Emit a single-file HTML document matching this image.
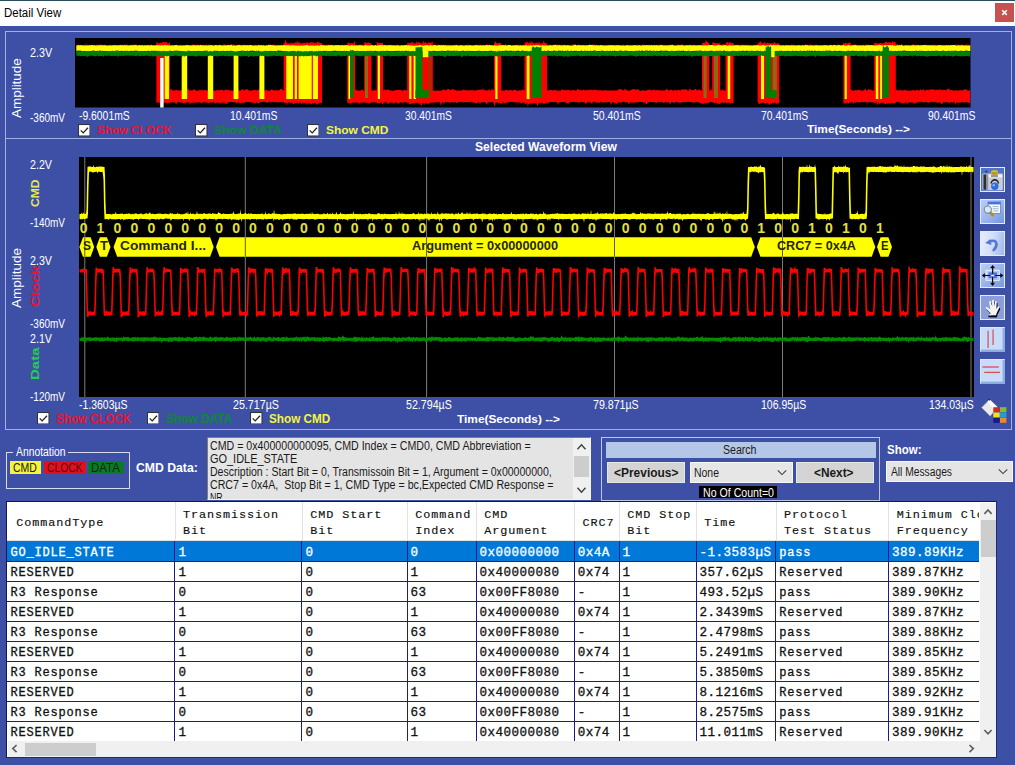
<!DOCTYPE html><html><head><meta charset="utf-8"><title>Detail View</title><style>
html,body{margin:0;padding:0}body{width:1015px;height:765px;position:relative;overflow:hidden;background:#3e50a6;font-family:"Liberation Sans",sans-serif}
#r div,#r span,#r svg{position:absolute;box-sizing:border-box}#r span{white-space:pre;display:block}
</style></head><body><div id="r">
<div style="left:0px;top:0px;width:1015px;height:26px;background:#fff"></div>
<div style="left:0px;top:0px;width:1015px;height:1px;background:#2b4a5e"></div>
<div style="left:995px;top:3px;width:19px;height:19px;background:#c75050"></div>
<svg style="left:995px;top:3px" width="19" height="19"><path d="M7.2 7.3l4.6 4.6M11.8 7.3l-4.6 4.6" stroke="#fff" stroke-width="1.6" fill="none"/></svg>
<span id="t0" style="left:3.5px;top:6.54px;font:12px/12px 'Liberation Sans',sans-serif;color:#000;transform:scaleX(0.9563);transform-origin:0 0;">Detail View</span>
<div style="left:5px;top:31px;width:1007px;height:107.5px;border:1px solid #a2b0ea"></div>
<div style="left:5px;top:138px;width:1007px;height:292px;border:1px solid #a2b0ea"></div>
<svg style="left:75px;top:38px" width="895.5" height="69.5" viewBox="0 0 895.5 69.5"><rect width="895.5" height="69.5" fill="#000"/><path d="M1.3,6.9L2.3,6.7L3.3,6.6L4.3,6.9L5.3,7.3L6.3,6.8L7.3,6.9L8.3,7.0L9.3,7.1L10.3,6.5L11.3,6.4L12.3,6.9L13.3,6.8L14.3,7.0L15.3,7.2L16.3,6.9L17.3,7.0L18.3,7.3L19.3,7.1L20.3,6.8L21.3,7.3L22.3,6.3L23.3,7.3L24.3,7.1L25.3,6.6L26.3,6.6L27.3,7.1L28.3,7.3L29.3,6.5L30.3,7.3L31.3,6.9L32.3,7.0L33.3,6.9L34.3,7.3L35.3,7.0L36.3,6.8L37.3,7.0L38.3,6.9L39.3,6.9L40.3,7.1L41.3,7.3L42.3,7.1L43.3,7.1L44.3,7.2L45.3,7.0L46.3,7.4L47.3,6.5L48.3,7.1L49.3,6.8L50.3,6.7L51.3,6.9L52.3,6.6L53.3,7.1L54.3,6.9L55.3,6.8L56.3,7.3L57.3,6.6L58.3,6.7L59.3,6.5L60.3,6.7L61.3,6.8L62.3,6.9L63.3,6.9L64.3,7.3L65.3,7.0L66.3,7.3L67.3,6.8L68.3,7.0L69.3,7.1L70.3,7.2L71.3,7.3L72.3,7.0L73.3,6.8L74.3,7.2L75.3,6.4L76.3,6.8L77.3,7.0L78.3,6.9L79.3,6.9L80.3,7.3L81.3,7.1L82.3,7.0L83.3,6.7L84.3,7.2L85.3,6.4L86.3,6.6L87.3,6.9L88.3,6.9L89.3,7.1L90.3,6.4L91.3,6.1L92.3,6.9L93.3,6.8L94.3,6.9L95.3,7.2L96.3,7.2L97.3,6.8L98.3,7.2L99.3,7.1L100.3,6.9L101.3,6.7L102.3,6.9L103.3,7.2L104.3,6.8L105.3,7.1L106.3,6.8L107.3,6.9L108.3,7.2L109.3,7.2L110.3,7.3L111.3,6.7L112.3,6.8L113.3,7.4L114.3,7.1L115.3,7.2L116.3,6.9L117.3,6.5L118.3,6.5L119.3,6.8L120.3,7.0L121.3,6.7L122.3,6.6L123.3,7.1L124.3,6.8L125.3,7.2L126.3,7.1L127.3,7.0L128.3,6.5L129.3,7.2L130.3,7.1L131.3,6.5L132.3,7.0L133.3,7.1L134.3,6.6L135.3,7.1L136.3,7.1L137.3,6.9L138.3,7.4L139.3,6.5L140.3,7.2L141.3,6.9L142.3,7.2L143.3,7.3L144.3,6.9L145.3,6.8L146.3,7.3L147.3,7.1L148.3,6.8L149.3,6.2L150.3,6.8L151.3,6.9L152.3,7.0L153.3,7.1L154.3,6.8L155.3,6.9L156.3,6.3L157.3,6.8L158.3,6.4L159.3,6.4L160.3,6.9L161.3,7.2L162.3,7.0L163.3,6.6L164.3,7.3L165.3,7.2L166.3,7.2L167.3,6.5L168.3,7.3L169.3,6.6L170.3,7.2L171.3,7.2L172.3,7.2L173.3,6.8L174.3,7.4L175.3,6.7L176.3,6.9L177.3,7.1L178.3,7.1L179.3,6.7L180.3,6.8L181.3,7.3L182.3,6.8L183.3,6.6L184.3,6.9L185.3,7.1L186.3,7.2L187.3,7.2L188.3,6.7L189.3,6.9L190.3,7.2L191.3,7.4L192.3,7.3L193.3,6.5L194.3,6.8L195.3,6.6L196.3,7.1L197.3,7.0L198.3,6.6L199.3,6.4L200.3,6.9L201.3,7.2L202.3,6.7L203.3,6.9L204.3,7.0L205.3,7.0L206.3,6.7L207.3,6.9L208.3,6.8L209.3,7.0L210.3,7.2L211.3,7.1L212.3,6.5L213.3,6.5L214.3,6.9L215.3,7.1L216.3,6.8L217.3,6.2L218.3,7.3L219.3,7.0L220.3,7.2L221.3,6.8L222.3,7.0L223.3,7.3L224.3,6.9L225.3,7.0L226.3,6.7L227.3,7.0L228.3,6.5L229.3,6.7L230.3,6.9L231.3,7.2L232.3,6.8L233.3,6.9L234.3,6.5L235.3,6.8L236.3,6.6L237.3,7.1L238.3,7.3L239.3,7.4L240.3,6.9L241.3,7.3L242.3,7.4L243.3,7.0L244.3,6.8L245.3,7.1L246.3,7.1L247.3,7.2L248.3,6.5L249.3,6.8L250.3,6.9L251.3,6.7L252.3,6.8L253.3,6.5L254.3,7.0L255.3,7.1L256.3,7.1L257.3,6.6L258.3,7.2L259.3,7.0L260.3,7.1L261.3,6.9L262.3,6.9L263.3,7.2L264.3,7.1L265.3,7.2L266.3,6.8L267.3,7.1L268.3,7.1L269.3,6.9L270.3,7.2L271.3,6.9L272.3,6.9L273.3,6.9L274.3,6.9L275.3,7.0L276.3,6.6L277.3,6.9L278.3,7.0L279.3,7.1L280.3,6.8L281.3,6.8L282.3,7.2L283.3,7.0L284.3,6.8L285.3,6.5L286.3,7.0L287.3,6.6L288.3,6.8L289.3,6.9L290.3,7.3L291.3,7.0L292.3,7.1L293.3,6.7L294.3,7.3L295.3,7.0L296.3,6.5L297.3,6.9L298.3,7.4L299.3,7.1L300.3,7.1L301.3,7.0L302.3,7.2L303.3,6.9L304.3,7.1L305.3,6.9L306.3,7.3L307.3,6.7L308.3,7.3L309.3,6.7L310.3,7.1L311.3,6.7L312.3,6.9L313.3,6.9L314.3,7.0L315.3,7.0L316.3,6.4L317.3,7.0L318.3,7.0L319.3,7.2L320.3,7.3L321.3,6.8L322.3,6.9L323.3,6.6L324.3,7.2L325.3,7.3L326.3,6.9L327.3,7.1L328.3,7.3L329.3,7.2L330.3,6.9L331.3,7.3L332.3,6.9L333.3,6.9L334.3,7.0L335.3,7.0L336.3,7.4L337.3,7.3L338.3,6.8L339.3,7.1L340.3,6.9L341.3,6.9L342.3,7.3L343.3,6.9L344.3,7.0L345.3,7.0L346.3,6.9L347.3,7.4L348.3,6.7L349.3,7.1L350.3,7.1L351.3,6.5L352.3,7.1L353.3,7.1L354.3,6.1L355.3,6.9L356.3,6.7L357.3,7.1L358.3,6.7L359.3,6.3L360.3,6.9L361.3,6.4L362.3,6.8L363.3,7.3L364.3,7.0L365.3,7.4L366.3,7.0L367.3,6.5L368.3,7.2L369.3,7.2L370.3,7.0L371.3,6.8L372.3,7.0L373.3,6.7L374.3,7.3L375.3,6.8L376.3,6.9L377.3,7.0L378.3,7.1L379.3,7.2L380.3,7.0L381.3,6.6L382.3,7.0L383.3,6.9L384.3,7.3L385.3,6.8L386.3,7.2L387.3,7.1L388.3,7.1L389.3,6.8L390.3,7.1L391.3,7.1L392.3,6.4L393.3,6.8L394.3,7.3L395.3,7.0L396.3,7.0L397.3,7.2L398.3,7.0L399.3,7.1L400.3,6.8L401.3,7.1L402.3,6.7L403.3,6.8L404.3,7.0L405.3,6.6L406.3,7.2L407.3,7.0L408.3,7.0L409.3,7.2L410.3,6.9L411.3,6.6L412.3,6.8L413.3,6.7L414.3,6.8L415.3,7.2L416.3,7.3L417.3,7.3L418.3,6.8L419.3,7.4L420.3,6.8L421.3,7.2L422.3,6.9L423.3,7.2L424.3,6.7L425.3,7.2L426.3,6.9L427.3,7.4L428.3,7.0L429.3,7.4L430.3,6.2L431.3,6.6L432.3,7.2L433.3,6.7L434.3,6.9L435.3,7.2L436.3,7.3L437.3,7.4L438.3,7.0L439.3,7.4L440.3,6.9L441.3,6.6L442.3,7.1L443.3,6.5L444.3,6.7L445.3,7.1L446.3,7.1L447.3,7.0L448.3,6.7L449.3,7.0L450.3,7.3L451.3,7.1L452.3,7.2L453.3,7.4L454.3,6.8L455.3,7.3L456.3,7.2L457.3,6.9L458.3,6.6L459.3,6.2L460.3,7.1L461.3,7.0L462.3,7.1L463.3,7.4L464.3,7.0L465.3,6.8L466.3,6.2L467.3,7.1L468.3,7.4L469.3,6.9L470.3,6.8L471.3,7.0L472.3,7.1L473.3,7.0L474.3,6.8L475.3,6.8L476.3,7.2L477.3,7.4L478.3,6.3L479.3,7.2L480.3,6.8L481.3,6.4L482.3,6.6L483.3,7.4L484.3,6.8L485.3,7.1L486.3,6.7L487.3,6.8L488.3,7.0L489.3,6.6L490.3,7.1L491.3,7.0L492.3,7.2L493.3,7.1L494.3,7.2L495.3,7.2L496.3,7.2L497.3,6.4L498.3,6.4L499.3,6.8L500.3,6.8L501.3,7.2L502.3,7.4L503.3,6.8L504.3,6.6L505.3,6.9L506.3,7.0L507.3,7.0L508.3,7.3L509.3,7.0L510.3,7.1L511.3,7.3L512.3,7.0L513.3,7.2L514.3,6.6L515.3,7.1L516.3,6.9L517.3,6.5L518.3,6.5L519.3,6.9L520.3,6.8L521.3,6.7L522.3,7.0L523.3,6.9L524.3,7.4L525.3,7.2L526.3,7.0L527.3,6.9L528.3,6.9L529.3,7.3L530.3,6.7L531.3,6.9L532.3,6.9L533.3,6.8L534.3,6.9L535.3,6.9L536.3,7.1L537.3,7.1L538.3,6.9L539.3,6.7L540.3,7.1L541.3,6.9L542.3,6.9L543.3,6.9L544.3,6.8L545.3,7.2L546.3,7.4L547.3,7.1L548.3,6.6L549.3,7.4L550.3,7.2L551.3,7.0L552.3,6.9L553.3,6.9L554.3,6.8L555.3,7.0L556.3,6.8L557.3,7.3L558.3,6.9L559.3,7.0L560.3,7.3L561.3,7.1L562.3,6.6L563.3,7.0L564.3,7.2L565.3,6.9L566.3,7.4L567.3,6.5L568.3,6.6L569.3,7.2L570.3,7.1L571.3,6.9L572.3,7.2L573.3,6.9L574.3,6.6L575.3,7.3L576.3,6.9L577.3,7.2L578.3,6.9L579.3,7.2L580.3,6.9L581.3,7.3L582.3,7.2L583.3,6.4L584.3,7.4L585.3,6.6L586.3,6.7L587.3,6.7L588.3,7.1L589.3,7.3L590.3,6.7L591.3,6.9L592.3,7.1L593.3,6.8L594.3,7.0L595.3,6.5L596.3,6.9L597.3,7.2L598.3,6.9L599.3,7.2L600.3,7.0L601.3,7.4L602.3,6.5L603.3,6.7L604.3,7.0L605.3,6.8L606.3,6.7L607.3,6.2L608.3,6.9L609.3,6.9L610.3,7.2L611.3,6.8L612.3,7.1L613.3,6.8L614.3,7.3L615.3,6.8L616.3,6.9L617.3,7.3L618.3,6.6L619.3,6.9L620.3,7.0L621.3,7.0L622.3,7.0L623.3,7.2L624.3,7.0L625.3,6.9L626.3,7.1L627.3,6.9L628.3,7.1L629.3,7.2L630.3,7.0L631.3,7.2L632.3,7.1L633.3,7.1L634.3,6.8L635.3,6.9L636.3,7.0L637.3,7.3L638.3,7.0L639.3,6.7L640.3,7.2L641.3,6.9L642.3,7.2L643.3,6.9L644.3,7.3L645.3,7.0L646.3,7.3L647.3,6.4L648.3,6.1L649.3,6.4L650.3,6.8L651.3,7.2L652.3,7.3L653.3,6.8L654.3,6.7L655.3,6.8L656.3,6.9L657.3,6.0L658.3,6.8L659.3,7.3L660.3,6.7L661.3,7.2L662.3,6.8L663.3,6.6L664.3,7.1L665.3,7.0L666.3,6.5L667.3,7.2L668.3,6.5L669.3,6.7L670.3,6.9L671.3,6.8L672.3,6.9L673.3,6.8L674.3,6.8L675.3,7.0L676.3,7.2L677.3,6.7L678.3,7.0L679.3,6.8L680.3,6.7L681.3,6.8L682.3,7.3L683.3,7.1L684.3,6.6L685.3,6.8L686.3,7.3L687.3,6.6L688.3,7.1L689.3,7.0L690.3,7.2L691.3,6.5L692.3,6.8L693.3,7.3L694.3,6.8L695.3,6.8L696.3,6.9L697.3,7.0L698.3,6.7L699.3,6.8L700.3,7.2L701.3,7.0L702.3,6.9L703.3,7.0L704.3,7.3L705.3,6.4L706.3,6.9L707.3,7.0L708.3,7.1L709.3,6.9L710.3,6.8L711.3,7.0L712.3,7.0L713.3,6.7L714.3,7.2L715.3,7.2L716.3,6.8L717.3,6.4L718.3,6.9L719.3,6.8L720.3,6.9L721.3,7.0L722.3,6.9L723.3,6.9L724.3,7.2L725.3,7.0L726.3,6.9L727.3,6.9L728.3,6.8L729.3,6.9L730.3,6.4L731.3,7.0L732.3,6.8L733.3,6.9L734.3,6.6L735.3,6.6L736.3,7.1L737.3,7.0L738.3,6.8L739.3,6.8L740.3,7.2L741.3,6.7L742.3,7.1L743.3,6.9L744.3,6.9L745.3,7.1L746.3,6.9L747.3,7.1L748.3,7.3L749.3,6.9L750.3,7.4L751.3,6.9L752.3,7.4L753.3,7.4L754.3,6.8L755.3,7.1L756.3,6.9L757.3,7.1L758.3,7.3L759.3,6.5L760.3,6.9L761.3,7.2L762.3,6.4L763.3,7.0L764.3,7.0L765.3,6.9L766.3,7.3L767.3,6.8L768.3,6.7L769.3,6.8L770.3,6.6L771.3,7.3L772.3,6.8L773.3,7.1L774.3,6.8L775.3,6.8L776.3,6.6L777.3,6.9L778.3,7.2L779.3,6.5L780.3,6.6L781.3,6.4L782.3,7.2L783.3,7.1L784.3,7.3L785.3,7.2L786.3,7.0L787.3,6.6L788.3,7.2L789.3,7.1L790.3,6.8L791.3,7.1L792.3,6.5L793.3,6.5L794.3,7.3L795.3,6.9L796.3,7.3L797.3,7.2L798.3,6.7L799.3,6.9L800.3,7.2L801.3,6.1L802.3,6.8L803.3,6.7L804.3,6.8L805.3,7.2L806.3,7.0L807.3,6.8L808.3,6.8L809.3,7.4L810.3,7.2L811.3,7.4L812.3,7.3L813.3,7.1L814.3,7.2L815.3,7.3L816.3,7.3L817.3,6.9L818.3,6.6L819.3,7.2L820.3,6.0L821.3,7.2L822.3,6.1L823.3,6.7L824.3,7.0L825.3,6.7L826.3,7.3L827.3,6.6L828.3,7.3L829.3,7.4L830.3,6.8L831.3,7.1L832.3,7.2L833.3,6.8L834.3,7.0L835.3,6.9L836.3,6.9L837.3,6.8L838.3,6.1L839.3,6.9L840.3,6.7L841.3,6.5L842.3,7.1L843.3,7.1L844.3,7.3L845.3,6.7L846.3,6.9L847.3,7.1L848.3,7.2L849.3,6.9L850.3,6.6L851.3,7.3L852.3,7.1L853.3,7.0L854.3,7.1L855.3,6.7L856.3,7.2L857.3,6.8L858.3,7.0L859.3,6.6L860.3,6.7L861.3,6.7L862.3,7.0L863.3,7.1L864.3,7.2L865.3,7.1L866.3,6.9L867.3,7.0L868.3,7.1L869.3,7.3L870.3,7.2L871.3,7.1L872.3,7.0L873.3,7.1L874.3,6.9L875.3,6.7L876.3,7.2L877.3,7.0L878.3,7.2L879.3,7.1L880.3,7.0L881.3,6.3L882.3,7.1L883.3,6.6L884.3,7.0L885.3,7.0L886.3,6.5L887.3,6.8L888.3,7.0L889.3,7.2L890.3,6.9L891.3,6.4L892.3,6.6L893.3,6.5L894.3,7.1L895.3,7.1L895.3,8.8L894.3,9.0L893.3,9.0L892.3,8.7L891.3,8.4L890.3,8.8L889.3,8.5L888.3,8.4L887.3,8.7L886.3,8.6L885.3,8.8L884.3,8.9L883.3,9.0L882.3,8.7L881.3,8.5L880.3,8.5L879.3,8.8L878.3,8.4L877.3,8.9L876.3,8.6L875.3,8.8L874.3,8.8L873.3,9.0L872.3,8.6L871.3,8.6L870.3,8.5L869.3,8.4L868.3,8.7L867.3,8.8L866.3,8.9L865.3,8.7L864.3,8.9L863.3,8.9L862.3,8.9L861.3,8.6L860.3,8.9L859.3,8.6L858.3,8.9L857.3,8.5L856.3,8.5L855.3,8.6L854.3,8.5L853.3,8.9L852.3,8.8L851.3,8.9L850.3,8.7L849.3,8.8L848.3,8.4L847.3,8.7L846.3,8.7L845.3,8.7L844.3,8.7L843.3,8.5L842.3,9.0L841.3,8.8L840.3,8.9L839.3,8.9L838.3,8.7L837.3,8.8L836.3,8.9L835.3,9.0L834.3,8.9L833.3,8.9L832.3,8.4L831.3,8.7L830.3,8.6L829.3,8.9L828.3,9.0L827.3,8.9L826.3,9.0L825.3,8.7L824.3,8.9L823.3,8.8L822.3,8.9L821.3,9.0L820.3,8.7L819.3,8.4L818.3,8.7L817.3,8.5L816.3,8.8L815.3,8.8L814.3,8.9L813.3,8.4L812.3,8.4L811.3,8.5L810.3,8.5L809.3,8.6L808.3,8.4L807.3,8.7L806.3,8.8L805.3,8.9L804.3,8.8L803.3,8.7L802.3,8.8L801.3,8.6L800.3,8.6L799.3,8.7L798.3,8.7L797.3,8.9L796.3,9.0L795.3,8.7L794.3,8.8L793.3,8.7L792.3,9.0L791.3,8.9L790.3,8.5L789.3,8.7L788.3,8.4L787.3,8.4L786.3,8.5L785.3,8.9L784.3,8.8L783.3,8.8L782.3,8.5L781.3,8.5L780.3,8.9L779.3,8.9L778.3,8.7L777.3,8.4L776.3,8.7L775.3,8.6L774.3,8.5L773.3,8.7L772.3,8.5L771.3,8.6L770.3,8.9L769.3,8.6L768.3,8.8L767.3,8.9L766.3,8.9L765.3,8.7L764.3,8.6L763.3,8.9L762.3,8.6L761.3,8.5L760.3,8.8L759.3,8.5L758.3,8.6L757.3,8.6L756.3,9.0L755.3,8.4L754.3,8.6L753.3,8.9L752.3,8.7L751.3,8.6L750.3,8.8L749.3,8.5L748.3,8.8L747.3,8.6L746.3,8.9L745.3,8.7L744.3,8.5L743.3,8.6L742.3,8.4L741.3,9.0L740.3,8.6L739.3,8.5L738.3,8.7L737.3,8.8L736.3,8.4L735.3,8.9L734.3,8.6L733.3,9.0L732.3,8.6L731.3,8.8L730.3,8.6L729.3,8.9L728.3,8.8L727.3,8.9L726.3,8.5L725.3,8.5L724.3,8.4L723.3,8.6L722.3,8.9L721.3,8.8L720.3,8.4L719.3,9.0L718.3,8.8L717.3,9.0L716.3,8.9L715.3,8.4L714.3,8.5L713.3,8.8L712.3,8.6L711.3,8.6L710.3,8.8L709.3,8.5L708.3,8.8L707.3,8.5L706.3,8.5L705.3,8.6L704.3,8.8L703.3,8.6L702.3,8.7L701.3,8.6L700.3,8.6L699.3,8.6L698.3,8.9L697.3,8.8L696.3,8.9L695.3,8.9L694.3,8.5L693.3,9.0L692.3,8.6L691.3,8.7L690.3,9.0L689.3,8.8L688.3,9.0L687.3,8.6L686.3,8.8L685.3,8.5L684.3,8.4L683.3,8.4L682.3,9.0L681.3,8.4L680.3,8.8L679.3,8.9L678.3,8.4L677.3,8.5L676.3,8.7L675.3,8.4L674.3,9.0L673.3,9.0L672.3,8.6L671.3,8.8L670.3,8.8L669.3,9.0L668.3,8.6L667.3,8.8L666.3,8.6L665.3,8.6L664.3,8.8L663.3,8.5L662.3,8.7L661.3,8.9L660.3,8.9L659.3,8.7L658.3,8.6L657.3,8.7L656.3,8.4L655.3,8.6L654.3,8.8L653.3,9.0L652.3,8.6L651.3,8.9L650.3,8.4L649.3,8.7L648.3,8.8L647.3,8.6L646.3,8.8L645.3,8.9L644.3,8.7L643.3,8.8L642.3,9.0L641.3,8.4L640.3,8.9L639.3,9.0L638.3,8.7L637.3,8.8L636.3,8.8L635.3,9.0L634.3,8.6L633.3,9.0L632.3,8.5L631.3,8.5L630.3,8.6L629.3,8.8L628.3,8.6L627.3,8.9L626.3,8.8L625.3,8.8L624.3,8.6L623.3,8.6L622.3,8.5L621.3,8.9L620.3,8.7L619.3,8.4L618.3,8.9L617.3,8.7L616.3,8.4L615.3,8.5L614.3,8.9L613.3,9.0L612.3,8.7L611.3,8.7L610.3,9.0L609.3,8.4L608.3,8.6L607.3,8.8L606.3,8.8L605.3,8.4L604.3,8.7L603.3,8.5L602.3,8.5L601.3,8.6L600.3,8.9L599.3,8.7L598.3,8.9L597.3,8.4L596.3,8.6L595.3,8.5L594.3,8.5L593.3,8.7L592.3,8.5L591.3,8.8L590.3,8.6L589.3,9.0L588.3,9.0L587.3,8.6L586.3,8.8L585.3,8.7L584.3,8.7L583.3,8.9L582.3,8.6L581.3,8.7L580.3,8.5L579.3,8.9L578.3,8.4L577.3,8.9L576.3,8.8L575.3,8.9L574.3,8.5L573.3,8.9L572.3,8.4L571.3,8.5L570.3,8.7L569.3,8.9L568.3,8.6L567.3,9.0L566.3,8.4L565.3,8.6L564.3,8.5L563.3,8.7L562.3,8.6L561.3,8.9L560.3,8.6L559.3,8.4L558.3,8.6L557.3,8.7L556.3,8.6L555.3,8.4L554.3,8.4L553.3,8.7L552.3,8.7L551.3,8.9L550.3,8.7L549.3,8.9L548.3,8.8L547.3,8.9L546.3,8.7L545.3,8.8L544.3,8.7L543.3,8.5L542.3,8.7L541.3,8.4L540.3,8.7L539.3,8.5L538.3,8.5L537.3,8.7L536.3,8.7L535.3,8.5L534.3,9.0L533.3,8.9L532.3,8.8L531.3,8.8L530.3,8.5L529.3,8.9L528.3,8.8L527.3,8.7L526.3,8.8L525.3,8.9L524.3,9.0L523.3,8.8L522.3,9.0L521.3,8.8L520.3,8.7L519.3,8.6L518.3,8.6L517.3,8.6L516.3,8.5L515.3,8.7L514.3,8.6L513.3,9.0L512.3,8.8L511.3,8.9L510.3,8.4L509.3,8.8L508.3,8.9L507.3,8.7L506.3,8.4L505.3,8.6L504.3,8.7L503.3,8.7L502.3,8.8L501.3,8.7L500.3,8.5L499.3,8.5L498.3,8.9L497.3,8.5L496.3,8.8L495.3,8.8L494.3,8.6L493.3,8.7L492.3,8.7L491.3,8.7L490.3,8.7L489.3,8.9L488.3,8.5L487.3,8.8L486.3,9.0L485.3,8.7L484.3,9.0L483.3,8.5L482.3,8.8L481.3,8.7L480.3,8.8L479.3,8.9L478.3,8.8L477.3,8.8L476.3,8.4L475.3,8.4L474.3,8.8L473.3,8.9L472.3,8.7L471.3,8.6L470.3,8.6L469.3,8.6L468.3,8.9L467.3,8.9L466.3,8.7L465.3,8.8L464.3,8.7L463.3,8.5L462.3,8.5L461.3,8.5L460.3,8.5L459.3,8.4L458.3,8.5L457.3,9.0L456.3,8.7L455.3,8.6L454.3,8.5L453.3,8.7L452.3,8.8L451.3,8.5L450.3,8.8L449.3,8.9L448.3,8.6L447.3,8.8L446.3,8.7L445.3,8.8L444.3,8.6L443.3,8.8L442.3,8.8L441.3,8.9L440.3,8.7L439.3,8.5L438.3,8.5L437.3,8.5L436.3,8.8L435.3,8.5L434.3,9.0L433.3,8.5L432.3,8.7L431.3,8.8L430.3,8.9L429.3,8.4L428.3,8.7L427.3,8.4L426.3,8.6L425.3,8.5L424.3,8.5L423.3,8.9L422.3,8.6L421.3,8.9L420.3,8.9L419.3,8.7L418.3,8.4L417.3,8.5L416.3,8.7L415.3,8.8L414.3,9.0L413.3,8.5L412.3,8.9L411.3,8.7L410.3,8.9L409.3,8.9L408.3,8.5L407.3,8.9L406.3,8.5L405.3,8.8L404.3,8.4L403.3,8.5L402.3,8.6L401.3,8.6L400.3,8.8L399.3,8.6L398.3,8.9L397.3,8.4L396.3,8.5L395.3,9.0L394.3,8.9L393.3,8.7L392.3,8.8L391.3,8.7L390.3,8.9L389.3,8.8L388.3,9.0L387.3,8.5L386.3,8.7L385.3,8.5L384.3,8.6L383.3,8.8L382.3,8.6L381.3,8.8L380.3,8.7L379.3,8.8L378.3,8.8L377.3,8.8L376.3,8.9L375.3,8.9L374.3,8.8L373.3,8.8L372.3,8.6L371.3,8.6L370.3,8.6L369.3,8.8L368.3,8.7L367.3,8.5L366.3,8.4L365.3,8.8L364.3,8.6L363.3,8.7L362.3,8.9L361.3,8.8L360.3,8.8L359.3,8.6L358.3,8.4L357.3,8.7L356.3,8.7L355.3,8.9L354.3,8.6L353.3,8.6L352.3,8.4L351.3,8.8L350.3,8.9L349.3,8.8L348.3,8.9L347.3,8.9L346.3,8.8L345.3,8.6L344.3,8.4L343.3,8.4L342.3,8.4L341.3,8.6L340.3,8.9L339.3,8.7L338.3,8.6L337.3,8.5L336.3,8.4L335.3,8.7L334.3,8.7L333.3,9.0L332.3,8.7L331.3,8.7L330.3,8.9L329.3,8.9L328.3,8.8L327.3,8.8L326.3,8.8L325.3,8.4L324.3,8.4L323.3,8.7L322.3,8.8L321.3,8.7L320.3,8.8L319.3,8.8L318.3,8.9L317.3,8.7L316.3,8.4L315.3,8.8L314.3,8.6L313.3,8.5L312.3,8.7L311.3,8.7L310.3,8.5L309.3,8.5L308.3,8.7L307.3,8.6L306.3,8.9L305.3,8.4L304.3,8.7L303.3,8.9L302.3,8.5L301.3,8.9L300.3,8.7L299.3,8.9L298.3,8.6L297.3,8.6L296.3,9.0L295.3,8.9L294.3,8.6L293.3,8.9L292.3,8.5L291.3,8.9L290.3,9.0L289.3,8.4L288.3,8.8L287.3,8.9L286.3,8.8L285.3,8.7L284.3,9.0L283.3,8.9L282.3,9.0L281.3,8.7L280.3,8.9L279.3,8.6L278.3,8.6L277.3,8.6L276.3,8.4L275.3,8.7L274.3,8.6L273.3,8.5L272.3,8.8L271.3,8.5L270.3,8.8L269.3,8.7L268.3,8.6L267.3,8.5L266.3,8.7L265.3,8.6L264.3,8.9L263.3,8.4L262.3,8.9L261.3,8.8L260.3,8.6L259.3,8.7L258.3,9.0L257.3,8.6L256.3,8.9L255.3,8.9L254.3,8.9L253.3,8.6L252.3,8.8L251.3,8.4L250.3,8.8L249.3,8.5L248.3,8.6L247.3,8.7L246.3,8.4L245.3,8.5L244.3,8.5L243.3,8.6L242.3,8.8L241.3,8.5L240.3,8.5L239.3,8.7L238.3,9.0L237.3,8.9L236.3,8.5L235.3,8.6L234.3,8.6L233.3,8.7L232.3,8.7L231.3,8.4L230.3,8.9L229.3,8.6L228.3,8.7L227.3,8.5L226.3,9.0L225.3,9.0L224.3,8.7L223.3,8.6L222.3,8.4L221.3,8.7L220.3,8.8L219.3,8.8L218.3,9.0L217.3,8.7L216.3,8.7L215.3,8.8L214.3,9.0L213.3,8.6L212.3,8.5L211.3,8.6L210.3,9.0L209.3,8.7L208.3,8.5L207.3,8.7L206.3,8.8L205.3,8.8L204.3,8.5L203.3,8.6L202.3,8.8L201.3,8.8L200.3,8.5L199.3,8.4L198.3,8.6L197.3,8.8L196.3,8.8L195.3,8.9L194.3,8.8L193.3,8.7L192.3,8.6L191.3,8.4L190.3,8.7L189.3,8.8L188.3,8.6L187.3,8.6L186.3,8.9L185.3,8.9L184.3,8.4L183.3,8.7L182.3,8.4L181.3,8.8L180.3,8.7L179.3,8.6L178.3,8.5L177.3,8.5L176.3,8.5L175.3,8.7L174.3,8.6L173.3,8.6L172.3,8.6L171.3,8.5L170.3,8.4L169.3,8.7L168.3,8.5L167.3,8.4L166.3,8.4L165.3,9.0L164.3,8.8L163.3,8.5L162.3,8.9L161.3,8.9L160.3,8.8L159.3,8.9L158.3,9.0L157.3,8.7L156.3,8.6L155.3,8.9L154.3,8.7L153.3,8.8L152.3,8.7L151.3,8.6L150.3,8.5L149.3,8.6L148.3,8.5L147.3,8.8L146.3,8.5L145.3,8.5L144.3,9.0L143.3,8.5L142.3,8.9L141.3,8.7L140.3,8.8L139.3,8.8L138.3,8.4L137.3,8.7L136.3,8.8L135.3,8.8L134.3,8.9L133.3,8.6L132.3,8.5L131.3,8.7L130.3,8.9L129.3,8.5L128.3,8.8L127.3,8.4L126.3,8.9L125.3,8.7L124.3,8.8L123.3,8.9L122.3,8.7L121.3,8.6L120.3,8.8L119.3,9.0L118.3,8.6L117.3,9.0L116.3,9.0L115.3,8.4L114.3,8.5L113.3,8.7L112.3,8.7L111.3,8.9L110.3,8.6L109.3,8.5L108.3,9.0L107.3,9.0L106.3,9.0L105.3,8.9L104.3,8.6L103.3,8.4L102.3,8.8L101.3,8.8L100.3,8.4L99.3,8.7L98.3,9.0L97.3,8.8L96.3,8.6L95.3,8.9L94.3,8.4L93.3,8.5L92.3,8.5L91.3,8.6L90.3,8.8L89.3,8.5L88.3,8.6L87.3,8.9L86.3,9.0L85.3,8.7L84.3,8.8L83.3,8.5L82.3,8.9L81.3,8.5L80.3,8.8L79.3,9.0L78.3,8.8L77.3,8.6L76.3,8.9L75.3,8.6L74.3,8.7L73.3,8.6L72.3,8.6L71.3,8.6L70.3,9.0L69.3,8.6L68.3,8.8L67.3,8.5L66.3,8.7L65.3,8.4L64.3,9.0L63.3,8.9L62.3,8.7L61.3,9.0L60.3,9.0L59.3,8.4L58.3,8.6L57.3,8.5L56.3,8.5L55.3,8.9L54.3,8.6L53.3,8.9L52.3,8.6L51.3,8.6L50.3,8.6L49.3,8.4L48.3,8.5L47.3,8.6L46.3,8.7L45.3,8.7L44.3,8.5L43.3,8.7L42.3,8.7L41.3,8.8L40.3,8.8L39.3,8.7L38.3,8.7L37.3,8.7L36.3,8.5L35.3,8.4L34.3,8.7L33.3,8.4L32.3,8.7L31.3,8.8L30.3,8.5L29.3,8.5L28.3,8.5L27.3,8.4L26.3,8.9L25.3,8.6L24.3,9.0L23.3,8.4L22.3,8.7L21.3,8.8L20.3,8.6L19.3,8.8L18.3,8.5L17.3,8.9L16.3,8.7L15.3,8.6L14.3,8.7L13.3,8.7L12.3,8.8L11.3,8.6L10.3,8.5L9.3,8.6L8.3,8.6L7.3,8.9L6.3,8.4L5.3,8.7L4.3,8.8L3.3,8.9L2.3,8.7L1.3,8.5Z" fill="#ff0000"/><path d="M91.0,52.4L92.0,52.5L93.0,52.2L94.0,51.4L95.0,52.4L96.0,50.4L97.0,51.9L98.0,52.4L99.0,52.3L100.0,52.8L101.0,51.5L102.0,52.2L103.0,52.4L104.0,52.5L105.0,52.2L106.0,52.6L107.0,52.3L108.0,52.5L109.0,52.7L110.0,51.7L111.0,52.7L112.0,52.4L113.0,50.2L114.0,52.3L115.0,52.7L116.0,51.9L117.0,52.8L118.0,52.0L119.0,50.9L120.0,52.2L121.0,52.6L122.0,52.7L123.0,52.8L124.0,52.5L125.0,51.6L126.0,52.8L127.0,50.9L128.0,52.8L129.0,52.5L130.0,51.3L131.0,52.3L132.0,52.8L133.0,52.5L134.0,52.3L135.0,52.3L136.0,51.9L137.0,50.5L138.0,52.7L139.0,52.7L140.0,52.4L141.0,52.7L142.0,51.5L143.0,52.0L144.0,52.4L145.0,52.0L146.0,52.0L147.0,51.6L148.0,52.5L149.0,52.7L150.0,52.2L151.0,50.9L152.0,52.5L153.0,51.6L154.0,52.3L155.0,52.6L156.0,52.5L157.0,52.4L158.0,52.7L159.0,52.3L160.0,51.5L161.0,51.1L162.0,51.7L163.0,51.2L164.0,52.7L165.0,52.5L166.0,52.4L167.0,51.3L168.0,51.6L169.0,52.5L170.0,52.3L171.0,51.2L172.0,51.0L173.0,52.3L174.0,52.6L175.0,52.4L176.0,52.8L177.0,52.3L178.0,52.6L179.0,52.1L180.0,51.4L181.0,52.8L182.0,52.1L183.0,52.4L184.0,50.8L185.0,52.4L186.0,52.3L187.0,50.7L188.0,52.5L189.0,52.4L190.0,52.9L191.0,51.2L192.0,52.5L193.0,52.4L194.0,52.9L195.0,52.6L196.0,52.3L197.0,51.0L198.0,52.6L199.0,52.4L200.0,52.1L201.0,52.5L202.0,52.0L203.0,52.5L204.0,52.4L205.0,51.6L206.0,50.6L207.0,51.2L208.0,52.7L209.0,52.0L210.0,52.7L211.0,52.9L212.0,52.1L213.0,52.0L214.0,52.5L215.0,51.8L216.0,51.8L217.0,51.7L218.0,52.5L219.0,52.3L220.0,52.7L221.0,52.4L222.0,52.6L223.0,52.1L224.0,52.8L225.0,52.3L226.0,52.4L227.0,51.4L228.0,51.9L229.0,51.8L230.0,52.8L231.0,52.6L232.0,51.5L233.0,51.7L234.0,51.7L235.0,52.7L236.0,52.2L237.0,52.1L238.0,50.4L239.0,52.8L240.0,52.0L241.0,51.8L242.0,52.3L243.0,52.5L244.0,52.7L245.0,52.3L246.0,51.9L247.0,52.3L247.0,63.8L246.0,64.6L245.0,64.1L244.0,64.5L243.0,64.2L242.0,64.6L241.0,63.9L240.0,64.8L239.0,64.2L238.0,64.5L237.0,64.5L236.0,64.3L235.0,65.0L234.0,64.4L233.0,64.0L232.0,67.3L231.0,64.1L230.0,65.0L229.0,64.1L228.0,63.7L227.0,64.3L226.0,63.7L225.0,63.8L224.0,65.3L223.0,65.0L222.0,64.6L221.0,63.9L220.0,64.2L219.0,63.9L218.0,65.2L217.0,63.8L216.0,64.3L215.0,64.6L214.0,63.9L213.0,63.7L212.0,66.9L211.0,63.9L210.0,64.3L209.0,64.1L208.0,63.7L207.0,64.6L206.0,64.0L205.0,64.0L204.0,64.0L203.0,64.8L202.0,63.8L201.0,63.8L200.0,64.7L199.0,63.8L198.0,63.9L197.0,63.8L196.0,64.0L195.0,64.5L194.0,63.8L193.0,64.3L192.0,65.2L191.0,64.0L190.0,64.0L189.0,63.8L188.0,63.8L187.0,63.9L186.0,64.2L185.0,64.4L184.0,64.7L183.0,66.1L182.0,64.0L181.0,64.3L180.0,65.6L179.0,65.0L178.0,64.2L177.0,65.3L176.0,64.1L175.0,64.3L174.0,64.0L173.0,63.7L172.0,63.9L171.0,64.2L170.0,64.2L169.0,65.2L168.0,65.1L167.0,64.2L166.0,65.1L165.0,65.1L164.0,64.4L163.0,64.0L162.0,65.6L161.0,64.7L160.0,64.0L159.0,64.3L158.0,64.2L157.0,63.9L156.0,63.8L155.0,64.2L154.0,64.1L153.0,64.3L152.0,66.0L151.0,66.0L150.0,63.9L149.0,65.9L148.0,63.8L147.0,64.5L146.0,65.7L145.0,65.1L144.0,64.4L143.0,65.2L142.0,63.9L141.0,65.3L140.0,65.6L139.0,64.2L138.0,63.8L137.0,64.9L136.0,64.7L135.0,64.2L134.0,65.1L133.0,65.3L132.0,64.6L131.0,64.6L130.0,64.3L129.0,64.2L128.0,64.1L127.0,65.5L126.0,65.2L125.0,64.1L124.0,64.2L123.0,63.9L122.0,64.9L121.0,64.3L120.0,65.3L119.0,64.1L118.0,65.3L117.0,64.4L116.0,64.8L115.0,66.4L114.0,63.9L113.0,64.7L112.0,64.2L111.0,64.9L110.0,64.7L109.0,65.6L108.0,64.8L107.0,64.6L106.0,64.8L105.0,64.3L104.0,64.0L103.0,64.1L102.0,64.9L101.0,66.5L100.0,64.2L99.0,64.3L98.0,64.7L97.0,63.8L96.0,64.7L95.0,63.9L94.0,65.1L93.0,64.0L92.0,64.3L91.0,64.0Z" fill="#ff0000"/><path d="M273.0,51.5L274.0,52.2L275.0,52.9L276.0,52.6L277.0,52.8L278.0,52.8L279.0,50.8L280.0,51.8L281.0,51.7L282.0,52.8L283.0,52.3L284.0,52.8L285.0,52.7L286.0,52.6L287.0,51.1L288.0,52.8L289.0,52.4L290.0,52.3L291.0,52.5L292.0,52.6L293.0,52.7L294.0,52.3L295.0,52.9L296.0,52.4L297.0,52.4L298.0,52.1L299.0,52.9L300.0,51.5L301.0,52.7L302.0,52.1L303.0,52.4L304.0,52.7L305.0,52.6L306.0,52.5L307.0,52.8L308.0,52.0L309.0,52.5L310.0,50.8L311.0,52.7L312.0,51.5L313.0,51.8L314.0,51.8L315.0,52.7L316.0,52.3L317.0,52.9L318.0,52.8L319.0,52.5L320.0,52.4L321.0,51.9L322.0,52.0L323.0,52.0L324.0,52.1L325.0,51.8L326.0,51.9L327.0,52.7L328.0,52.5L329.0,52.3L330.0,51.7L331.0,52.5L332.0,52.6L333.0,52.0L334.0,51.9L335.0,52.4L336.0,52.7L337.0,51.2L338.0,52.9L339.0,52.5L340.0,52.8L341.0,51.9L342.0,52.4L343.0,51.2L344.0,52.4L345.0,51.2L346.0,52.6L347.0,52.5L348.0,52.7L349.0,52.0L350.0,52.4L351.0,52.0L352.0,52.5L353.0,52.3L354.0,52.9L355.0,50.6L356.0,52.7L357.0,52.7L358.0,52.5L359.0,52.4L360.0,52.7L361.0,52.7L362.0,52.8L363.0,52.5L364.0,52.4L365.0,52.9L366.0,52.4L367.0,52.5L368.0,51.2L369.0,52.3L370.0,51.3L371.0,52.8L372.0,51.2L373.0,51.5L374.0,50.8L375.0,52.3L376.0,52.1L377.0,51.6L378.0,50.6L379.0,52.5L380.0,51.6L381.0,52.4L382.0,52.6L383.0,52.8L384.0,52.2L385.0,52.8L386.0,52.6L387.0,52.4L388.0,51.0L389.0,52.7L390.0,51.4L391.0,52.4L392.0,52.2L393.0,52.8L394.0,52.3L395.0,52.0L396.0,52.8L397.0,51.5L398.0,52.4L399.0,52.8L400.0,52.6L401.0,52.3L402.0,52.4L403.0,51.2L404.0,52.3L405.0,51.8L406.0,51.4L407.0,52.4L408.0,50.0L409.0,52.5L410.0,52.2L411.0,51.9L412.0,52.7L413.0,52.6L414.0,51.0L415.0,52.7L416.0,52.4L417.0,50.2L418.0,52.5L419.0,51.5L420.0,52.6L421.0,52.7L422.0,51.8L423.0,52.7L424.0,52.7L425.0,52.8L426.0,52.1L427.0,52.6L428.0,52.8L429.0,52.5L430.0,52.4L431.0,51.9L432.0,51.7L433.0,52.4L434.0,52.8L435.0,51.5L436.0,52.2L437.0,52.7L438.0,52.6L439.0,52.0L440.0,51.6L441.0,52.3L442.0,52.8L443.0,52.9L444.0,52.1L445.0,52.8L446.0,52.6L447.0,51.2L448.0,52.5L449.0,51.6L450.0,52.6L451.0,52.1L452.0,50.9L453.0,52.1L454.0,52.2L455.0,52.7L456.0,51.0L457.0,52.9L458.0,51.5L459.0,51.8L460.0,52.6L461.0,51.8L462.0,52.4L463.0,52.3L464.0,52.9L465.0,52.6L466.0,52.4L467.0,52.5L468.0,52.3L469.0,52.7L470.0,52.7L471.0,51.4L472.0,52.3L473.0,52.4L474.0,52.5L475.0,52.1L476.0,51.9L477.0,52.3L478.0,52.7L479.0,51.9L480.0,51.8L481.0,52.3L482.0,52.8L483.0,52.8L484.0,52.4L485.0,52.7L486.0,52.8L487.0,51.1L488.0,51.9L489.0,52.4L490.0,51.4L491.0,52.5L492.0,52.2L493.0,51.6L494.0,52.0L495.0,52.8L496.0,52.4L497.0,52.3L498.0,51.9L499.0,51.9L500.0,52.7L501.0,52.7L502.0,52.0L503.0,50.4L504.0,52.5L505.0,51.6L506.0,52.6L507.0,52.1L508.0,52.2L509.0,51.3L510.0,52.8L511.0,52.0L512.0,52.3L513.0,52.6L514.0,51.3L515.0,52.5L516.0,51.9L517.0,51.6L518.0,52.4L519.0,51.7L520.0,51.7L521.0,52.1L522.0,52.2L523.0,52.3L524.0,52.3L525.0,52.6L526.0,52.2L527.0,52.4L528.0,52.5L529.0,52.8L530.0,51.7L531.0,52.5L532.0,52.7L533.0,52.3L534.0,52.6L535.0,52.4L536.0,52.2L537.0,52.7L538.0,52.6L539.0,52.6L540.0,52.4L541.0,52.6L542.0,52.2L543.0,52.4L544.0,50.8L545.0,51.4L546.0,50.8L547.0,52.0L548.0,52.4L549.0,52.1L550.0,50.5L551.0,52.4L552.0,51.5L553.0,52.9L554.0,52.4L555.0,52.8L556.0,52.1L557.0,51.2L558.0,51.3L559.0,50.9L560.0,51.5L561.0,51.9L562.0,51.5L563.0,50.9L564.0,51.9L565.0,52.9L566.0,52.7L567.0,52.7L568.0,51.8L569.0,52.8L570.0,52.6L571.0,52.9L572.0,52.3L573.0,51.6L574.0,52.2L575.0,51.1L576.0,52.5L577.0,52.5L578.0,52.2L579.0,50.9L580.0,52.7L581.0,52.1L582.0,52.0L583.0,52.6L584.0,52.1L585.0,52.7L586.0,52.4L587.0,51.9L588.0,52.7L589.0,52.5L590.0,52.4L591.0,51.5L592.0,50.8L593.0,52.6L594.0,52.7L595.0,51.8L596.0,51.8L597.0,52.1L598.0,52.9L599.0,52.2L600.0,51.7L601.0,52.6L602.0,52.5L603.0,51.6L604.0,52.3L605.0,52.6L606.0,52.3L607.0,51.4L608.0,51.1L609.0,52.0L610.0,51.8L611.0,50.8L612.0,52.2L613.0,52.9L614.0,52.3L615.0,50.3L616.0,52.4L617.0,52.0L618.0,51.9L619.0,52.6L620.0,51.0L621.0,51.0L622.0,52.6L623.0,52.4L624.0,51.0L625.0,52.2L626.0,52.3L627.0,52.7L628.0,51.6L629.0,51.7L630.0,52.9L631.0,50.9L632.0,51.8L633.0,52.7L634.0,52.4L635.0,52.7L636.0,50.9L637.0,52.6L638.0,52.0L639.0,51.7L640.0,52.8L641.0,52.0L642.0,52.1L643.0,51.3L644.0,52.4L645.0,51.4L646.0,52.7L647.0,51.0L648.0,52.6L649.0,52.3L650.0,52.8L651.0,52.4L652.0,52.5L653.0,52.7L654.0,52.5L655.0,51.9L656.0,51.0L657.0,51.8L658.0,52.3L658.0,64.3L657.0,64.0L656.0,63.7L655.0,65.1L654.0,64.3L653.0,64.6L652.0,64.0L651.0,65.3L650.0,63.8L649.0,66.1L648.0,64.1L647.0,64.3L646.0,64.8L645.0,65.0L644.0,65.4L643.0,65.4L642.0,63.9L641.0,64.3L640.0,64.6L639.0,64.8L638.0,63.8L637.0,64.2L636.0,63.8L635.0,64.0L634.0,64.2L633.0,64.9L632.0,64.2L631.0,63.9L630.0,64.5L629.0,64.5L628.0,64.2L627.0,66.0L626.0,64.5L625.0,65.7L624.0,64.2L623.0,64.1L622.0,64.1L621.0,64.0L620.0,63.9L619.0,65.1L618.0,64.6L617.0,64.3L616.0,64.3L615.0,63.7L614.0,64.3L613.0,63.8L612.0,63.7L611.0,64.2L610.0,64.0L609.0,64.1L608.0,64.1L607.0,64.3L606.0,65.3L605.0,63.7L604.0,65.4L603.0,64.2L602.0,64.0L601.0,63.8L600.0,64.0L599.0,65.8L598.0,64.0L597.0,63.9L596.0,64.1L595.0,66.8L594.0,64.2L593.0,63.7L592.0,64.9L591.0,63.9L590.0,63.9L589.0,65.0L588.0,64.4L587.0,63.9L586.0,64.1L585.0,63.9L584.0,63.7L583.0,63.9L582.0,64.5L581.0,65.3L580.0,63.9L579.0,63.9L578.0,64.1L577.0,64.3L576.0,64.1L575.0,64.1L574.0,63.9L573.0,64.2L572.0,66.0L571.0,65.9L570.0,63.7L569.0,65.3L568.0,64.1L567.0,64.2L566.0,64.1L565.0,63.8L564.0,64.1L563.0,64.6L562.0,63.9L561.0,64.8L560.0,63.9L559.0,65.6L558.0,64.0L557.0,65.1L556.0,64.1L555.0,64.2L554.0,66.3L553.0,64.8L552.0,63.9L551.0,64.6L550.0,64.3L549.0,63.8L548.0,63.8L547.0,64.1L546.0,64.9L545.0,64.2L544.0,64.6L543.0,64.4L542.0,66.0L541.0,65.0L540.0,65.4L539.0,64.3L538.0,64.1L537.0,64.2L536.0,66.9L535.0,64.0L534.0,64.1L533.0,64.3L532.0,64.2L531.0,64.4L530.0,63.9L529.0,64.4L528.0,64.8L527.0,63.9L526.0,63.8L525.0,64.0L524.0,65.2L523.0,64.7L522.0,64.2L521.0,64.9L520.0,63.8L519.0,63.7L518.0,63.8L517.0,66.1L516.0,64.7L515.0,64.0L514.0,64.4L513.0,64.2L512.0,64.2L511.0,66.1L510.0,64.9L509.0,64.0L508.0,64.3L507.0,63.8L506.0,63.9L505.0,63.9L504.0,64.9L503.0,64.2L502.0,64.1L501.0,64.5L500.0,64.1L499.0,64.1L498.0,63.8L497.0,64.2L496.0,63.9L495.0,63.8L494.0,64.8L493.0,66.2L492.0,64.4L491.0,65.5L490.0,63.7L489.0,64.0L488.0,64.3L487.0,63.9L486.0,64.2L485.0,64.2L484.0,64.6L483.0,66.4L482.0,63.8L481.0,64.2L480.0,63.9L479.0,64.3L478.0,64.0L477.0,64.2L476.0,64.1L475.0,64.0L474.0,64.3L473.0,66.0L472.0,64.2L471.0,63.8L470.0,65.7L469.0,65.3L468.0,66.0L467.0,64.1L466.0,64.3L465.0,64.2L464.0,63.9L463.0,64.8L462.0,65.1L461.0,65.2L460.0,64.1L459.0,64.3L458.0,64.2L457.0,65.0L456.0,64.5L455.0,64.6L454.0,65.5L453.0,64.3L452.0,63.9L451.0,64.2L450.0,64.3L449.0,64.4L448.0,64.3L447.0,64.9L446.0,65.4L445.0,64.5L444.0,64.2L443.0,64.3L442.0,65.1L441.0,63.8L440.0,65.1L439.0,63.8L438.0,64.2L437.0,63.9L436.0,63.8L435.0,63.9L434.0,64.2L433.0,63.7L432.0,65.2L431.0,64.4L430.0,65.8L429.0,64.4L428.0,64.3L427.0,66.2L426.0,65.1L425.0,64.5L424.0,64.2L423.0,64.1L422.0,64.2L421.0,63.8L420.0,64.3L419.0,66.3L418.0,63.8L417.0,63.7L416.0,64.3L415.0,64.3L414.0,64.2L413.0,63.9L412.0,65.9L411.0,65.4L410.0,64.1L409.0,64.1L408.0,64.2L407.0,64.5L406.0,64.1L405.0,66.2L404.0,63.9L403.0,63.8L402.0,65.4L401.0,64.9L400.0,64.9L399.0,64.5L398.0,64.8L397.0,63.9L396.0,63.8L395.0,63.9L394.0,64.5L393.0,64.2L392.0,64.1L391.0,64.4L390.0,64.1L389.0,64.2L388.0,64.5L387.0,63.8L386.0,64.1L385.0,64.0L384.0,63.8L383.0,64.3L382.0,65.4L381.0,64.2L380.0,63.8L379.0,65.0L378.0,63.9L377.0,64.1L376.0,63.9L375.0,65.4L374.0,64.2L373.0,64.0L372.0,64.2L371.0,63.9L370.0,64.1L369.0,66.2L368.0,64.0L367.0,64.1L366.0,68.0L365.0,64.2L364.0,64.1L363.0,64.3L362.0,64.0L361.0,65.1L360.0,64.0L359.0,65.0L358.0,64.1L357.0,63.9L356.0,64.3L355.0,63.8L354.0,65.7L353.0,64.0L352.0,63.7L351.0,64.2L350.0,64.2L349.0,64.9L348.0,64.2L347.0,64.3L346.0,64.1L345.0,64.4L344.0,66.5L343.0,64.0L342.0,64.8L341.0,64.5L340.0,65.1L339.0,65.0L338.0,64.9L337.0,64.0L336.0,64.7L335.0,66.1L334.0,65.7L333.0,63.8L332.0,64.4L331.0,64.1L330.0,63.8L329.0,65.0L328.0,64.0L327.0,65.8L326.0,63.7L325.0,64.3L324.0,65.8L323.0,65.6L322.0,64.7L321.0,64.3L320.0,64.3L319.0,65.6L318.0,65.4L317.0,63.8L316.0,65.4L315.0,63.8L314.0,65.2L313.0,66.0L312.0,64.7L311.0,63.9L310.0,63.7L309.0,64.9L308.0,64.5L307.0,63.7L306.0,64.0L305.0,64.2L304.0,65.2L303.0,63.8L302.0,63.9L301.0,65.3L300.0,64.0L299.0,64.1L298.0,64.6L297.0,64.3L296.0,64.2L295.0,64.9L294.0,64.8L293.0,64.9L292.0,64.1L291.0,64.6L290.0,64.2L289.0,64.0L288.0,64.2L287.0,65.4L286.0,63.9L285.0,64.4L284.0,65.9L283.0,64.4L282.0,63.9L281.0,65.1L280.0,64.5L279.0,63.9L278.0,64.8L277.0,64.0L276.0,65.4L275.0,63.9L274.0,64.0L273.0,65.5Z" fill="#ff0000"/><path d="M683.4,52.6L684.4,51.9L685.4,52.0L686.4,52.2L687.4,52.5L688.4,52.5L689.4,51.6L690.4,50.8L691.4,52.8L692.4,52.1L693.4,51.9L694.4,51.8L695.4,52.5L696.4,51.4L697.4,51.5L698.4,52.8L699.4,52.3L700.4,52.5L701.4,52.5L702.4,52.9L703.4,52.9L703.4,64.5L702.4,64.5L701.4,64.1L700.4,64.1L699.4,64.5L698.4,64.7L697.4,63.8L696.4,66.3L695.4,64.5L694.4,64.3L693.4,63.8L692.4,64.3L691.4,64.6L690.4,64.1L689.4,64.1L688.4,64.7L687.4,63.7L686.4,64.2L685.4,64.9L684.4,66.4L683.4,64.7Z" fill="#ff0000"/><path d="M769.2,49.2L770.2,51.7L771.2,52.7L772.2,51.9L773.2,51.5L774.2,51.4L775.2,50.9L776.2,52.4L777.2,51.8L778.2,52.9L779.2,52.8L780.2,52.3L781.2,51.6L782.2,52.9L783.2,51.8L784.2,51.4L785.2,52.4L786.2,52.6L787.2,52.5L788.2,52.4L789.2,52.2L790.2,50.3L791.2,52.6L792.2,52.7L793.2,50.9L794.2,51.7L795.2,51.5L796.2,51.7L797.2,52.8L798.2,52.4L799.2,51.9L800.2,51.8L801.2,52.8L802.2,51.4L803.2,52.4L804.2,52.7L805.2,52.3L806.2,51.5L807.2,51.0L808.2,52.2L809.2,52.2L810.2,52.2L811.2,52.6L812.2,52.4L813.2,52.2L814.2,52.7L815.2,50.9L816.2,52.3L817.2,52.7L818.2,52.0L819.2,52.3L820.2,52.9L821.2,51.8L822.2,52.4L823.2,52.5L824.2,52.4L825.2,51.5L826.2,52.5L827.2,52.7L828.2,52.3L829.2,52.6L830.2,51.6L831.2,52.6L832.2,52.5L833.2,52.4L834.2,52.8L835.2,52.8L836.2,52.3L837.2,52.4L838.2,51.8L839.2,52.5L840.2,52.4L841.2,52.6L842.2,51.8L843.2,52.4L844.2,52.7L845.2,51.3L846.2,52.1L847.2,52.8L848.2,50.7L849.2,52.4L850.2,52.7L851.2,51.7L852.2,51.9L853.2,51.4L854.2,52.5L855.2,51.0L856.2,52.1L857.2,50.9L858.2,51.9L859.2,51.3L860.2,52.4L861.2,51.2L862.2,52.4L863.2,52.1L864.2,51.0L865.2,52.6L866.2,51.3L867.2,52.5L868.2,51.7L869.2,52.1L870.2,51.9L871.2,52.7L872.2,51.3L873.2,50.8L874.2,50.7L875.2,52.8L876.2,51.7L877.2,52.1L878.2,52.7L879.2,52.9L880.2,52.0L881.2,52.6L882.2,52.3L883.2,52.7L884.2,52.4L885.2,51.6L886.2,52.7L887.2,52.7L888.2,52.0L889.2,51.5L890.2,51.6L891.2,51.0L892.2,52.5L893.2,52.7L894.2,52.8L895.2,51.2L895.2,65.2L894.2,65.0L893.2,64.2L892.2,64.3L891.2,63.7L890.2,64.2L889.2,64.8L888.2,64.1L887.2,64.2L886.2,64.2L885.2,64.8L884.2,64.7L883.2,64.6L882.2,65.3L881.2,64.1L880.2,66.6L879.2,63.8L878.2,64.1L877.2,64.7L876.2,64.0L875.2,64.2L874.2,65.7L873.2,64.0L872.2,64.3L871.2,63.9L870.2,64.3L869.2,64.6L868.2,64.1L867.2,66.2L866.2,65.8L865.2,64.3L864.2,64.1L863.2,64.9L862.2,64.5L861.2,64.6L860.2,64.0L859.2,63.9L858.2,64.1L857.2,63.7L856.2,64.1L855.2,64.6L854.2,63.9L853.2,65.6L852.2,64.3L851.2,63.8L850.2,64.5L849.2,64.1L848.2,64.8L847.2,63.8L846.2,63.8L845.2,64.1L844.2,63.9L843.2,64.3L842.2,64.7L841.2,64.3L840.2,65.7L839.2,65.5L838.2,64.3L837.2,64.5L836.2,64.4L835.2,64.6L834.2,64.2L833.2,64.8L832.2,66.2L831.2,63.8L830.2,64.4L829.2,65.1L828.2,65.4L827.2,64.8L826.2,65.7L825.2,63.8L824.2,64.8L823.2,64.0L822.2,63.8L821.2,63.9L820.2,64.3L819.2,64.7L818.2,64.2L817.2,64.9L816.2,64.6L815.2,63.8L814.2,65.7L813.2,64.3L812.2,66.2L811.2,64.1L810.2,64.5L809.2,66.2L808.2,64.1L807.2,64.1L806.2,64.0L805.2,64.7L804.2,66.6L803.2,63.8L802.2,63.9L801.2,63.7L800.2,64.2L799.2,65.0L798.2,64.3L797.2,64.0L796.2,64.5L795.2,63.8L794.2,64.7L793.2,63.8L792.2,65.5L791.2,63.9L790.2,63.8L789.2,64.2L788.2,63.9L787.2,64.2L786.2,64.1L785.2,64.2L784.2,64.9L783.2,63.9L782.2,64.1L781.2,64.3L780.2,64.7L779.2,64.0L778.2,66.0L777.2,63.7L776.2,63.9L775.2,63.8L774.2,64.8L773.2,64.1L772.2,63.8L771.2,64.8L770.2,65.7L769.2,64.1Z" fill="#ff0000"/><path d="M81.4,4.0L82.2,3.9L83.0,5.2L83.8,5.5L84.6,5.0L85.4,4.4L86.2,4.6L87.0,5.4L87.8,3.6L88.6,4.2L89.4,4.6L90.2,4.0L91.0,4.3L91.8,4.1L92.6,5.4L93.4,5.6L94.2,5.2L95.0,3.4L95.0,64.6L94.2,65.1L93.4,64.6L92.6,65.4L91.8,64.7L91.0,64.5L90.2,64.7L89.4,64.4L88.6,65.2L87.8,66.7L87.0,64.5L86.2,64.7L85.4,66.1L84.6,64.6L83.8,65.1L83.0,64.3L82.2,64.7L81.4,64.8Z" fill="#ff0000"/><path d="M208.7,4.4L209.5,5.5L210.3,1.6L211.1,3.7L211.9,5.0L212.7,5.4L213.5,5.3L214.3,5.5L215.1,5.6L215.9,4.2L216.7,5.1L217.5,5.2L218.3,5.3L219.1,5.1L219.9,5.2L220.7,3.8L221.5,5.3L222.3,2.8L223.1,4.7L223.9,4.3L224.7,4.5L225.5,5.0L226.3,5.5L227.1,5.2L227.9,5.6L228.7,4.6L229.5,4.8L230.3,5.4L231.1,5.0L231.9,4.1L232.7,5.1L233.5,4.8L234.3,5.2L235.1,4.3L235.9,4.1L236.7,5.0L237.5,4.3L238.3,4.2L239.1,5.1L239.9,4.7L240.7,5.0L241.5,5.3L242.3,3.2L243.1,5.2L243.9,2.9L244.7,5.1L245.5,5.2L246.3,5.1L247.1,5.3L247.1,64.3L246.3,65.3L245.5,64.4L244.7,64.8L243.9,64.3L243.1,66.3L242.3,66.4L241.5,66.4L240.7,64.4L239.9,64.4L239.1,64.9L238.3,66.0L237.5,64.4L236.7,65.9L235.9,66.4L235.1,64.7L234.3,66.1L233.5,64.3L232.7,64.8L231.9,64.8L231.1,64.8L230.3,65.1L229.5,64.7L228.7,66.2L227.9,64.3L227.1,65.8L226.3,65.8L225.5,64.6L224.7,64.2L223.9,65.7L223.1,64.3L222.3,64.8L221.5,64.5L220.7,65.2L219.9,64.5L219.1,65.9L218.3,66.1L217.5,65.2L216.7,64.6L215.9,65.3L215.1,64.7L214.3,64.2L213.5,64.3L212.7,64.3L211.9,64.4L211.1,64.6L210.3,65.5L209.5,64.5L208.7,64.3Z" fill="#ff0000"/><path d="M272.2,5.0L273.0,5.4L273.8,4.0L274.6,5.4L275.4,5.2L276.2,4.9L277.0,5.5L277.8,5.3L278.6,5.4L279.4,2.7L280.2,5.5L280.2,64.4L279.4,64.3L278.6,64.4L277.8,64.2L277.0,64.5L276.2,64.7L275.4,65.4L274.6,64.7L273.8,65.4L273.0,64.6L272.2,64.5Z" fill="#ff0000"/><path d="M289.2,4.9L290.0,3.7L290.8,4.7L291.6,5.2L292.4,4.8L293.2,4.7L294.0,3.9L294.8,5.5L295.6,5.3L296.4,5.2L296.4,64.4L295.6,64.4L294.8,65.4L294.0,65.0L293.2,64.7L292.4,64.6L291.6,64.8L290.8,64.7L290.0,64.3L289.2,64.7Z" fill="#ff0000"/><path d="M301.6,3.6L302.4,4.5L303.2,4.8L304.0,5.3L304.8,5.1L305.6,5.3L306.4,4.5L307.2,5.3L308.0,4.6L308.0,65.8L307.2,66.2L306.4,64.3L305.6,64.3L304.8,66.0L304.0,64.5L303.2,65.2L302.4,65.3L301.6,64.5Z" fill="#ff0000"/><path d="M332.2,5.4L333.0,4.4L333.8,5.4L334.6,4.5L335.4,5.5L336.2,4.0L337.0,5.1L337.8,3.4L338.6,5.4L339.4,5.2L340.2,5.3L341.0,5.5L341.8,2.7L342.6,5.2L343.4,4.4L344.2,3.7L345.0,5.3L345.8,5.2L346.6,5.4L347.4,5.2L348.2,2.4L349.0,4.8L349.8,5.2L350.6,3.8L351.4,5.2L352.2,5.3L353.0,5.5L353.8,3.8L354.6,4.9L355.4,3.9L356.2,5.5L357.0,3.4L357.8,4.5L357.8,64.4L357.0,65.1L356.2,64.6L355.4,64.3L354.6,65.4L353.8,64.4L353.0,66.4L352.2,65.5L351.4,65.3L350.6,64.4L349.8,65.4L349.0,67.8L348.2,64.6L347.4,64.8L346.6,68.1L345.8,66.8L345.0,64.7L344.2,64.4L343.4,65.1L342.6,64.4L341.8,64.5L341.0,65.0L340.2,64.6L339.4,65.4L338.6,65.6L337.8,65.7L337.0,64.7L336.2,66.0L335.4,66.4L334.6,64.3L333.8,64.2L333.0,64.5L332.2,66.6Z" fill="#ff0000"/><path d="M419.0,5.4L419.8,5.1L420.6,3.1L421.4,5.3L422.2,5.5L423.0,4.8L423.8,5.1L424.6,5.0L425.4,4.8L426.2,5.5L426.2,64.6L425.4,65.9L424.6,64.6L423.8,65.5L423.0,64.4L422.2,64.3L421.4,64.6L420.6,64.3L419.8,68.9L419.0,66.1Z" fill="#ff0000"/><path d="M449.6,4.8L450.4,5.1L451.2,3.3L452.0,4.9L452.8,3.3L453.6,5.5L454.4,4.8L455.2,4.8L456.0,2.3L456.8,5.2L457.6,3.7L458.4,5.3L459.2,5.2L460.0,5.5L460.8,4.7L461.6,4.2L462.4,5.2L463.2,5.4L464.0,3.4L464.8,5.3L465.6,5.5L466.4,5.5L467.2,5.5L468.0,5.3L468.8,2.2L469.6,5.1L470.4,5.1L471.2,5.6L472.0,5.4L472.0,64.5L471.2,64.5L470.4,66.0L469.6,64.3L468.8,64.5L468.0,64.8L467.2,65.2L466.4,64.6L465.6,65.3L464.8,64.7L464.0,64.2L463.2,65.9L462.4,68.3L461.6,65.9L460.8,64.6L460.0,65.6L459.2,64.7L458.4,65.8L457.6,64.8L456.8,66.7L456.0,64.6L455.2,65.8L454.4,65.4L453.6,66.3L452.8,68.7L452.0,64.2L451.2,65.9L450.4,66.2L449.6,64.6Z" fill="#ff0000"/><path d="M627.0,5.1L627.8,5.3L628.6,4.4L629.4,5.1L630.2,4.7L631.0,1.6L631.8,4.2L632.6,4.0L633.4,5.1L634.2,5.1L634.2,64.4L633.4,64.4L632.6,65.0L631.8,64.9L631.0,64.4L630.2,66.0L629.4,64.4L628.6,66.0L627.8,65.6L627.0,66.3Z" fill="#ff0000"/><path d="M637.2,4.1L638.0,5.2L638.8,4.1L639.6,5.1L640.4,5.2L641.2,5.0L642.0,5.2L642.8,5.1L643.6,5.4L644.4,5.5L645.2,3.7L645.2,64.9L644.4,66.6L643.6,64.9L642.8,66.1L642.0,64.7L641.2,64.5L640.4,64.7L639.6,65.0L638.8,64.7L638.0,64.3L637.2,64.4Z" fill="#ff0000"/><path d="M650.6,5.5L651.4,5.1L652.2,3.8L653.0,4.6L653.8,5.5L654.6,4.1L655.4,4.2L656.2,5.3L657.0,5.1L657.8,5.2L658.6,4.6L658.6,64.9L657.8,65.2L657.0,64.8L656.2,64.8L655.4,65.8L654.6,64.7L653.8,64.3L653.0,64.3L652.2,65.3L651.4,64.7L650.6,64.7Z" fill="#ff0000"/><path d="M682.6,3.4L683.4,5.5L684.2,4.2L685.0,4.5L685.8,2.9L686.6,5.1L687.4,5.4L688.2,5.3L689.0,5.2L689.8,2.9L690.6,5.4L691.4,5.4L692.2,5.3L693.0,4.3L693.8,5.4L694.6,4.9L695.4,5.4L696.2,4.9L697.0,5.2L697.8,5.5L698.6,5.0L699.4,4.0L700.2,5.1L701.0,5.4L701.8,5.6L702.6,5.3L703.4,5.5L704.2,5.6L704.2,66.1L703.4,64.7L702.6,65.9L701.8,65.5L701.0,65.5L700.2,64.3L699.4,64.7L698.6,64.7L697.8,64.5L697.0,64.4L696.2,64.6L695.4,64.7L694.6,67.0L693.8,66.4L693.0,64.9L692.2,64.7L691.4,64.8L690.6,65.5L689.8,65.5L689.0,64.8L688.2,64.3L687.4,64.5L686.6,65.0L685.8,65.7L685.0,64.2L684.2,64.6L683.4,64.2L682.6,64.4Z" fill="#ff0000"/><path d="M768.4,4.3L769.2,5.3L770.0,5.4L770.8,4.4L771.6,5.4L772.4,5.4L773.2,5.5L774.0,4.6L774.8,4.3L775.6,5.2L775.6,64.6L774.8,64.6L774.0,65.1L773.2,65.7L772.4,64.3L771.6,64.5L770.8,64.4L770.0,65.9L769.2,64.5L768.4,66.6Z" fill="#ff0000"/><path d="M799.2,5.4L800.0,4.0L800.8,5.6L801.6,5.1L802.4,5.5L803.2,5.4L804.0,5.6L804.8,4.9L805.6,5.0L806.4,5.2L807.2,5.0L808.0,5.5L808.8,5.4L809.6,5.1L810.4,3.5L811.2,4.5L812.0,3.3L812.8,4.9L813.6,4.6L814.4,4.3L815.2,3.8L816.0,5.3L816.8,5.1L817.6,2.7L818.4,4.3L819.2,3.9L820.0,3.9L820.8,4.7L820.8,64.7L820.0,64.8L819.2,65.8L818.4,65.3L817.6,64.9L816.8,64.4L816.0,64.5L815.2,65.7L814.4,65.0L813.6,65.2L812.8,64.4L812.0,65.1L811.2,65.8L810.4,66.6L809.6,64.6L808.8,65.5L808.0,64.5L807.2,64.5L806.4,64.7L805.6,64.7L804.8,65.4L804.0,64.2L803.2,64.2L802.4,67.0L801.6,64.6L800.8,64.4L800.0,64.3L799.2,66.0Z" fill="#ff0000"/><rect x="89.7" y="12.0" width="4.3" height="49.0" fill="#ffff00"/><rect x="106.7" y="12.0" width="5.5" height="49.0" fill="#ffff00"/><rect x="132.8" y="12.0" width="5.4" height="49.0" fill="#ffff00"/><rect x="158.6" y="12.0" width="4.8" height="49.0" fill="#ffff00"/><rect x="184.4" y="12.0" width="5.0" height="49.0" fill="#ffff00"/><rect x="211.3" y="12.0" width="6.7" height="49.0" fill="#ffff00"/><rect x="219.7" y="12.0" width="2.3" height="49.0" fill="#ffff00"/><rect x="223.6" y="12.0" width="13.1" height="49.0" fill="#ffff00"/><rect x="237.9" y="12.0" width="5.1" height="49.0" fill="#ffff00"/><rect x="273.5" y="12.0" width="1.7" height="49.0" fill="#ffff00"/><rect x="302.8" y="12.0" width="2.2" height="49.0" fill="#ffff00"/><rect x="334.2" y="12.0" width="2.2" height="49.0" fill="#ffff00"/><rect x="338.6" y="12.0" width="2.4" height="49.0" fill="#ffff00"/><rect x="420.3" y="12.0" width="2.2" height="49.0" fill="#ffff00"/><rect x="451.7" y="12.0" width="2.8" height="49.0" fill="#ffff00"/><rect x="652.7" y="12.0" width="2.5" height="49.0" fill="#ffff00"/><rect x="686.0" y="12.0" width="3.0" height="49.0" fill="#ffff00"/><rect x="769.7" y="12.0" width="2.1" height="49.0" fill="#ffff00"/><rect x="800.8" y="12.0" width="2.5" height="49.0" fill="#ffff00"/><rect x="805.1" y="12.0" width="1.8" height="49.0" fill="#ffff00"/><rect x="290.0" y="17.0" width="3.0" height="43.0" fill="#8a6a14"/><rect x="628.5" y="17.0" width="3.2" height="43.0" fill="#8a6a14"/><rect x="639.0" y="17.0" width="4.0" height="43.0" fill="#8a6a14"/><rect x="697.8" y="17.0" width="4.1" height="43.0" fill="#8a6a14"/><path d="M1.3,7.8L2.3,7.6L3.3,6.9L4.3,7.6L5.3,7.0L6.3,7.6L7.3,7.2L8.3,7.5L9.3,7.6L10.3,7.7L11.3,7.3L12.3,7.6L13.3,7.4L14.3,7.2L15.3,7.5L16.3,7.1L17.3,7.0L18.3,7.5L19.3,7.1L20.3,7.8L21.3,7.5L22.3,7.5L23.3,7.3L24.3,7.3L25.3,7.3L26.3,7.5L27.3,7.1L28.3,7.5L29.3,7.3L30.3,7.2L31.3,7.4L32.3,7.8L33.3,7.7L34.3,7.2L35.3,7.6L36.3,7.7L37.3,7.5L38.3,7.1L39.3,7.5L40.3,7.2L41.3,7.3L42.3,7.6L43.3,7.6L44.3,7.3L45.3,6.8L46.3,7.5L47.3,7.0L48.3,7.6L49.3,7.2L50.3,7.2L51.3,6.9L52.3,7.4L53.3,7.4L54.3,7.7L55.3,7.2L56.3,6.9L57.3,7.8L58.3,7.1L59.3,7.3L60.3,7.1L61.3,7.1L62.3,7.7L63.3,7.6L64.3,7.0L65.3,7.6L66.3,7.2L67.3,7.3L68.3,7.8L69.3,7.2L70.3,7.4L71.3,7.2L72.3,7.2L73.3,7.2L74.3,7.4L75.3,7.5L76.3,6.9L77.3,7.6L78.3,7.6L79.3,7.5L80.3,7.4L81.3,7.3L82.3,7.3L83.3,7.3L84.3,7.3L85.3,7.5L86.3,7.4L87.3,7.0L88.3,7.5L89.3,7.2L90.3,7.1L91.3,7.3L92.3,7.3L93.3,7.4L94.3,7.4L95.3,7.4L96.3,7.5L97.3,7.4L98.3,7.4L99.3,7.5L100.3,6.9L101.3,7.0L102.3,7.2L103.3,7.7L104.3,7.5L105.3,7.7L106.3,7.4L107.3,7.7L108.3,7.4L109.3,7.5L110.3,7.4L111.3,7.1L112.3,7.3L113.3,7.1L114.3,7.4L115.3,7.6L116.3,7.4L117.3,7.4L118.3,7.2L119.3,6.9L120.3,7.4L121.3,7.6L122.3,7.3L123.3,7.3L124.3,7.8L125.3,6.8L126.3,7.2L127.3,7.6L128.3,7.2L129.3,7.6L130.3,7.5L131.3,7.3L132.3,7.7L133.3,7.3L134.3,7.5L135.3,7.0L136.3,7.2L137.3,7.2L138.3,7.7L139.3,7.8L140.3,7.1L141.3,7.1L142.3,7.6L143.3,7.5L144.3,6.8L145.3,7.3L146.3,7.4L147.3,7.5L148.3,7.4L149.3,7.6L150.3,7.2L151.3,7.6L152.3,7.2L153.3,6.8L154.3,7.4L155.3,7.1L156.3,6.7L157.3,7.7L158.3,7.5L159.3,7.6L160.3,7.7L161.3,7.7L162.3,7.1L163.3,7.5L164.3,6.8L165.3,7.2L166.3,7.4L167.3,7.6L168.3,7.1L169.3,7.6L170.3,7.1L171.3,7.6L172.3,7.1L173.3,7.4L174.3,7.2L175.3,7.1L176.3,7.0L177.3,7.7L178.3,7.6L179.3,7.7L180.3,7.6L181.3,7.4L182.3,7.7L183.3,7.3L184.3,6.9L185.3,7.7L186.3,7.1L187.3,7.5L188.3,7.3L189.3,7.7L190.3,7.7L191.3,7.3L192.3,7.5L193.3,7.1L194.3,7.3L195.3,6.7L196.3,7.2L197.3,7.2L198.3,7.3L199.3,7.8L200.3,7.2L201.3,7.8L202.3,7.4L203.3,7.2L204.3,7.5L205.3,7.6L206.3,7.2L207.3,7.5L208.3,7.3L209.3,7.0L210.3,7.2L211.3,7.3L212.3,7.2L213.3,7.0L214.3,7.5L215.3,7.4L216.3,7.4L217.3,7.1L218.3,7.5L219.3,7.2L220.3,7.5L221.3,7.6L222.3,7.5L223.3,7.6L224.3,7.4L225.3,7.7L226.3,7.5L227.3,7.8L228.3,7.5L229.3,7.3L230.3,7.6L231.3,7.0L232.3,7.0L233.3,7.6L234.3,7.8L235.3,7.4L236.3,7.4L237.3,7.6L238.3,7.6L239.3,7.7L240.3,7.5L241.3,7.7L242.3,7.0L243.3,7.7L244.3,7.8L245.3,6.9L246.3,7.2L247.3,7.2L248.3,7.2L249.3,7.5L250.3,7.7L251.3,7.3L252.3,7.7L253.3,7.2L254.3,7.2L255.3,7.3L256.3,7.0L257.3,7.3L258.3,7.6L259.3,7.4L260.3,7.3L261.3,7.3L262.3,6.9L263.3,7.3L264.3,7.1L265.3,7.6L266.3,7.4L267.3,6.9L268.3,7.5L269.3,7.3L270.3,7.2L271.3,7.2L272.3,7.3L273.3,7.2L274.3,7.8L275.3,7.7L276.3,6.9L277.3,7.2L278.3,7.5L279.3,7.3L280.3,7.7L281.3,7.3L282.3,7.6L283.3,7.6L284.3,7.3L285.3,7.2L286.3,7.4L287.3,7.6L288.3,7.7L289.3,7.4L290.3,7.3L291.3,6.9L292.3,7.4L293.3,7.4L294.3,7.6L295.3,7.4L296.3,7.3L297.3,7.0L298.3,7.8L299.3,7.5L300.3,7.1L301.3,7.7L302.3,7.6L303.3,7.4L304.3,7.1L305.3,7.0L306.3,7.3L307.3,6.7L308.3,7.5L309.3,7.1L310.3,7.5L311.3,7.2L312.3,7.6L313.3,7.2L314.3,7.2L315.3,7.1L316.3,7.6L317.3,7.6L318.3,7.2L319.3,7.6L320.3,7.5L321.3,7.4L322.3,7.2L323.3,7.6L324.3,7.7L325.3,7.7L326.3,7.3L327.3,7.6L328.3,7.4L329.3,7.0L330.3,7.4L331.3,6.8L332.3,7.6L333.3,7.3L334.3,7.6L335.3,7.3L336.3,7.5L337.3,7.6L338.3,7.8L339.3,7.7L340.3,7.7L341.3,7.5L342.3,7.5L343.3,7.7L344.3,7.0L345.3,7.0L346.3,7.4L347.3,7.4L348.3,7.8L349.3,7.4L350.3,7.3L351.3,6.9L352.3,7.3L353.3,7.6L354.3,7.6L355.3,6.9L356.3,7.3L357.3,7.4L358.3,7.4L359.3,7.0L360.3,6.9L361.3,7.7L362.3,7.4L363.3,7.2L364.3,7.1L365.3,7.2L366.3,7.3L367.3,7.5L368.3,7.1L369.3,7.4L370.3,7.1L371.3,7.7L372.3,7.6L373.3,7.5L374.3,7.6L375.3,7.4L376.3,7.7L377.3,7.4L378.3,7.4L379.3,7.3L380.3,7.4L381.3,7.1L382.3,7.5L383.3,7.6L384.3,7.7L385.3,7.2L386.3,7.3L387.3,7.4L388.3,7.7L389.3,7.7L390.3,7.4L391.3,7.3L392.3,7.4L393.3,7.4L394.3,7.3L395.3,7.2L396.3,7.4L397.3,7.5L398.3,7.7L399.3,7.6L400.3,6.9L401.3,7.3L402.3,7.2L403.3,7.5L404.3,7.5L405.3,7.3L406.3,7.5L407.3,7.4L408.3,7.3L409.3,7.6L410.3,7.5L411.3,7.0L412.3,7.0L413.3,7.4L414.3,7.1L415.3,7.2L416.3,7.3L417.3,7.5L418.3,7.8L419.3,7.3L420.3,7.5L421.3,7.6L422.3,7.8L423.3,7.5L424.3,7.1L425.3,7.6L426.3,7.2L427.3,6.9L428.3,7.2L429.3,7.4L430.3,7.0L431.3,7.7L432.3,7.4L433.3,7.1L434.3,7.0L435.3,7.1L436.3,7.7L437.3,7.4L438.3,7.5L439.3,7.2L440.3,7.6L441.3,6.9L442.3,7.5L443.3,7.5L444.3,7.7L445.3,7.2L446.3,7.5L447.3,7.7L448.3,7.2L449.3,7.6L450.3,7.4L451.3,6.7L452.3,7.7L453.3,7.5L454.3,7.5L455.3,7.0L456.3,7.5L457.3,7.7L458.3,6.9L459.3,7.6L460.3,7.3L461.3,7.3L462.3,7.0L463.3,7.0L464.3,7.6L465.3,7.6L466.3,7.7L467.3,7.1L468.3,7.4L469.3,7.6L470.3,7.4L471.3,7.6L472.3,7.5L473.3,7.7L474.3,7.4L475.3,7.0L476.3,7.6L477.3,7.5L478.3,7.3L479.3,7.1L480.3,6.7L481.3,7.5L482.3,7.0L483.3,7.4L484.3,7.1L485.3,7.3L486.3,7.4L487.3,7.5L488.3,7.4L489.3,7.1L490.3,7.3L491.3,7.7L492.3,6.9L493.3,7.4L494.3,7.3L495.3,7.8L496.3,7.7L497.3,7.7L498.3,7.3L499.3,7.1L500.3,6.6L501.3,7.6L502.3,7.2L503.3,7.3L504.3,7.2L505.3,7.5L506.3,7.2L507.3,7.3L508.3,7.2L509.3,7.4L510.3,7.6L511.3,7.3L512.3,7.5L513.3,7.2L514.3,6.7L515.3,7.0L516.3,7.1L517.3,7.0L518.3,7.5L519.3,6.8L520.3,7.7L521.3,7.3L522.3,7.3L523.3,7.4L524.3,7.6L525.3,7.3L526.3,7.0L527.3,7.5L528.3,7.5L529.3,7.6L530.3,7.7L531.3,7.4L532.3,7.6L533.3,7.6L534.3,7.2L535.3,7.1L536.3,7.5L537.3,7.3L538.3,7.2L539.3,7.4L540.3,7.6L541.3,7.3L542.3,7.3L543.3,7.3L544.3,7.5L545.3,7.3L546.3,7.7L547.3,7.6L548.3,7.5L549.3,7.7L550.3,7.6L551.3,7.4L552.3,7.0L553.3,7.6L554.3,7.7L555.3,7.2L556.3,7.8L557.3,7.4L558.3,7.2L559.3,7.2L560.3,7.3L561.3,7.5L562.3,7.6L563.3,7.4L564.3,7.0L565.3,7.4L566.3,7.7L567.3,7.2L568.3,7.4L569.3,7.1L570.3,7.4L571.3,7.0L572.3,7.3L573.3,7.3L574.3,7.3L575.3,7.7L576.3,6.8L577.3,7.6L578.3,7.5L579.3,6.9L580.3,7.6L581.3,7.1L582.3,7.3L583.3,7.7L584.3,7.3L585.3,7.3L586.3,7.1L587.3,7.3L588.3,7.5L589.3,7.5L590.3,7.6L591.3,7.5L592.3,7.6L593.3,7.4L594.3,7.2L595.3,7.2L596.3,7.3L597.3,6.5L598.3,7.4L599.3,7.6L600.3,7.7L601.3,7.5L602.3,7.5L603.3,7.3L604.3,7.3L605.3,7.5L606.3,7.1L607.3,7.3L608.3,7.6L609.3,7.5L610.3,7.8L611.3,7.3L612.3,7.3L613.3,7.7L614.3,6.7L615.3,7.5L616.3,7.2L617.3,7.4L618.3,7.5L619.3,7.3L620.3,7.4L621.3,7.6L622.3,7.6L623.3,7.3L624.3,7.6L625.3,7.0L626.3,7.5L627.3,7.6L628.3,7.4L629.3,7.5L630.3,7.3L631.3,7.4L632.3,7.6L633.3,7.2L634.3,6.8L635.3,7.4L636.3,7.1L637.3,7.0L638.3,7.6L639.3,7.4L640.3,7.6L641.3,7.7L642.3,7.1L643.3,7.0L644.3,7.3L645.3,7.2L646.3,7.5L647.3,7.6L648.3,7.6L649.3,7.3L650.3,6.8L651.3,7.7L652.3,7.7L653.3,7.5L654.3,7.2L655.3,7.5L656.3,7.3L657.3,7.8L658.3,7.2L659.3,7.5L660.3,7.3L661.3,7.2L662.3,7.3L663.3,7.3L664.3,7.7L665.3,7.6L666.3,7.6L667.3,7.3L668.3,7.6L669.3,7.3L670.3,7.4L671.3,7.6L672.3,7.3L673.3,7.5L674.3,7.7L675.3,7.5L676.3,7.4L677.3,7.8L678.3,7.5L679.3,7.5L680.3,7.2L681.3,7.5L682.3,7.0L683.3,7.3L684.3,7.4L685.3,7.6L686.3,7.5L687.3,7.3L688.3,6.8L689.3,7.4L690.3,7.7L691.3,7.5L692.3,7.5L693.3,7.2L694.3,7.7L695.3,6.6L696.3,7.2L697.3,7.2L698.3,6.8L699.3,7.2L700.3,7.1L701.3,7.5L702.3,6.8L703.3,7.2L704.3,7.3L705.3,7.6L706.3,7.7L707.3,7.4L708.3,7.3L709.3,7.7L710.3,7.4L711.3,7.2L712.3,7.6L713.3,7.3L714.3,7.5L715.3,7.4L716.3,7.2L717.3,7.6L718.3,7.2L719.3,7.5L720.3,7.7L721.3,7.6L722.3,7.6L723.3,7.3L724.3,7.2L725.3,7.5L726.3,7.7L727.3,7.3L728.3,7.3L729.3,7.8L730.3,6.7L731.3,7.3L732.3,7.0L733.3,7.4L734.3,7.7L735.3,7.5L736.3,7.3L737.3,7.4L738.3,7.7L739.3,7.4L740.3,7.5L741.3,7.1L742.3,7.4L743.3,7.5L744.3,7.6L745.3,7.4L746.3,7.4L747.3,7.6L748.3,7.4L749.3,6.9L750.3,7.4L751.3,7.1L752.3,7.4L753.3,7.5L754.3,7.5L755.3,7.1L756.3,7.1L757.3,7.7L758.3,7.0L759.3,7.1L760.3,7.3L761.3,7.4L762.3,7.4L763.3,6.7L764.3,7.1L765.3,7.5L766.3,7.5L767.3,7.4L768.3,6.8L769.3,7.7L770.3,7.6L771.3,7.7L772.3,7.6L773.3,7.0L774.3,7.2L775.3,7.8L776.3,7.5L777.3,7.4L778.3,7.3L779.3,7.3L780.3,7.0L781.3,7.6L782.3,7.6L783.3,7.6L784.3,7.5L785.3,7.2L786.3,7.8L787.3,7.6L788.3,7.3L789.3,7.8L790.3,7.4L791.3,6.9L792.3,7.5L793.3,7.2L794.3,6.9L795.3,7.4L796.3,7.0L797.3,7.2L798.3,7.5L799.3,7.6L800.3,7.6L801.3,7.5L802.3,7.3L803.3,7.2L804.3,6.8L805.3,6.9L806.3,7.3L807.3,7.7L808.3,7.6L809.3,7.2L810.3,7.3L811.3,7.5L812.3,7.3L813.3,7.3L814.3,7.2L815.3,7.0L816.3,7.5L817.3,6.8L818.3,7.5L819.3,7.4L820.3,7.7L821.3,7.5L822.3,7.3L823.3,7.4L824.3,7.3L825.3,7.6L826.3,6.6L827.3,7.6L828.3,7.7L829.3,7.7L830.3,7.2L831.3,7.5L832.3,7.5L833.3,7.4L834.3,7.5L835.3,7.7L836.3,7.5L837.3,7.5L838.3,6.9L839.3,7.5L840.3,7.6L841.3,7.5L842.3,7.3L843.3,7.1L844.3,7.6L845.3,7.4L846.3,7.3L847.3,7.3L848.3,6.9L849.3,7.1L850.3,7.5L851.3,6.8L852.3,7.6L853.3,7.2L854.3,7.4L855.3,7.3L856.3,7.4L857.3,7.3L858.3,7.4L859.3,7.4L860.3,7.4L861.3,7.7L862.3,7.5L863.3,7.1L864.3,7.3L865.3,7.3L866.3,7.3L867.3,7.4L868.3,7.5L869.3,7.3L870.3,7.8L871.3,6.9L872.3,7.6L873.3,7.2L874.3,7.4L875.3,7.6L876.3,6.9L877.3,7.3L878.3,7.1L879.3,7.1L880.3,7.3L881.3,7.7L882.3,7.8L883.3,7.1L884.3,7.5L885.3,7.7L886.3,7.1L887.3,7.5L888.3,7.5L889.3,7.4L890.3,7.6L891.3,7.4L892.3,7.7L893.3,7.4L894.3,7.8L895.3,7.2L895.3,12.9L894.3,13.0L893.3,12.9L892.3,12.8L891.3,12.6L890.3,12.7L889.3,13.1L888.3,13.0L887.3,13.1L886.3,12.7L885.3,12.7L884.3,13.1L883.3,13.0L882.3,13.0L881.3,12.7L880.3,12.7L879.3,12.7L878.3,13.0L877.3,12.7L876.3,12.7L875.3,13.2L874.3,12.8L873.3,12.8L872.3,13.1L871.3,13.1L870.3,13.0L869.3,13.0L868.3,12.6L867.3,12.8L866.3,13.2L865.3,12.9L864.3,13.0L863.3,12.9L862.3,12.8L861.3,12.7L860.3,12.7L859.3,13.1L858.3,13.0L857.3,12.8L856.3,13.1L855.3,13.1L854.3,13.0L853.3,12.8L852.3,12.9L851.3,13.1L850.3,13.1L849.3,13.0L848.3,12.9L847.3,12.7L846.3,13.1L845.3,12.8L844.3,12.7L843.3,13.1L842.3,12.9L841.3,12.6L840.3,13.1L839.3,13.1L838.3,13.2L837.3,12.9L836.3,13.2L835.3,13.0L834.3,13.2L833.3,12.7L832.3,13.0L831.3,13.0L830.3,12.7L829.3,12.6L828.3,12.7L827.3,12.7L826.3,12.9L825.3,12.7L824.3,13.0L823.3,12.7L822.3,13.1L821.3,13.0L820.3,12.8L819.3,13.0L818.3,12.9L817.3,13.1L816.3,12.7L815.3,12.8L814.3,12.7L813.3,12.7L812.3,13.2L811.3,12.7L810.3,12.7L809.3,13.0L808.3,12.8L807.3,12.8L806.3,12.7L805.3,12.6L804.3,12.7L803.3,12.7L802.3,12.7L801.3,12.8L800.3,13.1L799.3,13.1L798.3,13.2L797.3,12.8L796.3,13.0L795.3,13.0L794.3,13.1L793.3,13.0L792.3,12.8L791.3,13.2L790.3,13.1L789.3,13.0L788.3,12.7L787.3,13.1L786.3,13.0L785.3,12.7L784.3,13.2L783.3,13.1L782.3,13.2L781.3,12.7L780.3,13.1L779.3,12.9L778.3,12.8L777.3,12.8L776.3,12.9L775.3,12.9L774.3,12.7L773.3,12.6L772.3,12.7L771.3,13.0L770.3,12.9L769.3,13.0L768.3,13.2L767.3,13.0L766.3,12.8L765.3,12.9L764.3,12.7L763.3,13.0L762.3,13.1L761.3,13.0L760.3,12.8L759.3,12.7L758.3,12.9L757.3,12.9L756.3,13.0L755.3,12.8L754.3,12.6L753.3,12.9L752.3,12.6L751.3,12.8L750.3,12.8L749.3,13.1L748.3,12.8L747.3,12.9L746.3,13.0L745.3,13.0L744.3,12.9L743.3,12.7L742.3,12.9L741.3,13.0L740.3,12.7L739.3,12.7L738.3,13.1L737.3,12.8L736.3,12.7L735.3,12.9L734.3,12.6L733.3,13.0L732.3,12.6L731.3,12.9L730.3,13.1L729.3,12.8L728.3,12.9L727.3,12.9L726.3,12.9L725.3,12.6L724.3,12.9L723.3,13.1L722.3,13.1L721.3,12.7L720.3,13.1L719.3,13.2L718.3,12.7L717.3,12.7L716.3,13.0L715.3,13.1L714.3,12.9L713.3,12.7L712.3,13.1L711.3,12.8L710.3,13.2L709.3,13.0L708.3,13.0L707.3,13.0L706.3,12.6L705.3,12.9L704.3,12.8L703.3,13.1L702.3,12.8L701.3,12.9L700.3,13.0L699.3,12.9L698.3,12.8L697.3,13.0L696.3,12.7L695.3,13.0L694.3,13.1L693.3,13.1L692.3,12.7L691.3,12.9L690.3,12.9L689.3,12.6L688.3,12.9L687.3,12.8L686.3,12.8L685.3,12.7L684.3,13.1L683.3,12.8L682.3,12.8L681.3,12.8L680.3,13.2L679.3,12.9L678.3,13.1L677.3,12.7L676.3,12.8L675.3,12.9L674.3,12.8L673.3,12.9L672.3,12.7L671.3,12.8L670.3,13.0L669.3,12.9L668.3,12.7L667.3,12.8L666.3,13.0L665.3,13.1L664.3,12.7L663.3,13.0L662.3,12.9L661.3,13.0L660.3,12.9L659.3,13.1L658.3,12.8L657.3,12.7L656.3,13.1L655.3,13.1L654.3,13.0L653.3,13.1L652.3,12.7L651.3,13.1L650.3,13.1L649.3,12.6L648.3,12.7L647.3,13.2L646.3,12.7L645.3,12.7L644.3,12.7L643.3,12.8L642.3,13.1L641.3,12.6L640.3,13.1L639.3,13.2L638.3,12.9L637.3,12.8L636.3,12.7L635.3,12.7L634.3,13.1L633.3,13.2L632.3,12.8L631.3,12.9L630.3,12.7L629.3,12.7L628.3,13.2L627.3,12.9L626.3,12.7L625.3,12.6L624.3,12.7L623.3,12.7L622.3,12.7L621.3,12.7L620.3,12.9L619.3,12.8L618.3,13.1L617.3,13.0L616.3,12.9L615.3,12.9L614.3,12.7L613.3,12.7L612.3,12.9L611.3,13.0L610.3,13.0L609.3,13.1L608.3,12.6L607.3,13.0L606.3,12.8L605.3,12.9L604.3,12.7L603.3,12.7L602.3,12.7L601.3,13.1L600.3,13.1L599.3,13.1L598.3,12.8L597.3,13.1L596.3,12.7L595.3,12.9L594.3,12.9L593.3,12.9L592.3,12.7L591.3,12.7L590.3,12.8L589.3,12.8L588.3,12.8L587.3,12.9L586.3,12.6L585.3,12.7L584.3,13.1L583.3,13.0L582.3,12.9L581.3,12.7L580.3,12.9L579.3,13.1L578.3,12.6L577.3,13.0L576.3,13.0L575.3,12.6L574.3,12.7L573.3,13.0L572.3,12.6L571.3,12.7L570.3,12.6L569.3,13.1L568.3,12.9L567.3,12.6L566.3,12.7L565.3,13.1L564.3,12.6L563.3,13.0L562.3,12.8L561.3,12.8L560.3,13.1L559.3,13.1L558.3,13.0L557.3,13.2L556.3,13.0L555.3,12.9L554.3,13.2L553.3,13.2L552.3,12.7L551.3,12.8L550.3,12.7L549.3,12.7L548.3,12.9L547.3,13.1L546.3,12.6L545.3,12.7L544.3,12.7L543.3,13.0L542.3,13.0L541.3,12.9L540.3,12.9L539.3,12.6L538.3,13.2L537.3,12.7L536.3,13.2L535.3,12.7L534.3,13.0L533.3,13.1L532.3,12.8L531.3,13.0L530.3,13.1L529.3,13.2L528.3,13.0L527.3,12.6L526.3,12.8L525.3,12.9L524.3,13.0L523.3,12.9L522.3,12.9L521.3,13.0L520.3,12.6L519.3,12.6L518.3,12.8L517.3,13.1L516.3,13.1L515.3,12.6L514.3,13.2L513.3,13.1L512.3,12.8L511.3,12.9L510.3,12.8L509.3,12.8L508.3,12.9L507.3,12.9L506.3,12.6L505.3,13.0L504.3,12.9L503.3,12.9L502.3,12.9L501.3,12.8L500.3,13.1L499.3,12.8L498.3,13.2L497.3,13.2L496.3,12.6L495.3,13.2L494.3,13.0L493.3,12.8L492.3,12.6L491.3,13.1L490.3,12.8L489.3,12.9L488.3,13.1L487.3,12.6L486.3,13.0L485.3,12.8L484.3,12.7L483.3,12.6L482.3,13.2L481.3,12.8L480.3,12.9L479.3,12.6L478.3,12.7L477.3,13.2L476.3,12.9L475.3,13.1L474.3,13.1L473.3,12.6L472.3,12.7L471.3,13.1L470.3,13.1L469.3,12.6L468.3,13.1L467.3,13.1L466.3,13.1L465.3,12.7L464.3,13.0L463.3,12.9L462.3,12.6L461.3,12.7L460.3,12.8L459.3,12.6L458.3,12.9L457.3,13.0L456.3,12.9L455.3,12.8L454.3,12.9L453.3,12.9L452.3,12.8L451.3,12.8L450.3,12.9L449.3,13.0L448.3,12.8L447.3,12.6L446.3,13.1L445.3,13.1L444.3,13.0L443.3,12.6L442.3,13.0L441.3,12.8L440.3,12.9L439.3,13.2L438.3,12.7L437.3,13.0L436.3,12.8L435.3,12.7L434.3,12.8L433.3,13.1L432.3,12.7L431.3,12.8L430.3,12.6L429.3,13.1L428.3,13.0L427.3,12.7L426.3,13.2L425.3,13.0L424.3,12.6L423.3,13.0L422.3,12.8L421.3,12.7L420.3,12.8L419.3,13.1L418.3,12.9L417.3,12.9L416.3,12.6L415.3,13.0L414.3,12.8L413.3,13.0L412.3,13.1L411.3,12.9L410.3,12.9L409.3,13.2L408.3,13.0L407.3,13.1L406.3,13.1L405.3,12.9L404.3,12.7L403.3,12.8L402.3,13.0L401.3,13.1L400.3,13.0L399.3,13.0L398.3,12.9L397.3,13.1L396.3,13.0L395.3,13.0L394.3,12.7L393.3,13.1L392.3,12.7L391.3,13.1L390.3,12.9L389.3,13.0L388.3,12.7L387.3,12.7L386.3,13.0L385.3,13.1L384.3,13.0L383.3,13.2L382.3,12.8L381.3,12.7L380.3,12.9L379.3,12.6L378.3,12.9L377.3,12.7L376.3,13.1L375.3,12.8L374.3,12.7L373.3,12.8L372.3,12.6L371.3,12.9L370.3,12.9L369.3,12.9L368.3,13.1L367.3,12.7L366.3,12.7L365.3,13.1L364.3,13.0L363.3,13.1L362.3,13.0L361.3,13.0L360.3,13.0L359.3,13.0L358.3,12.7L357.3,13.0L356.3,13.2L355.3,12.9L354.3,13.0L353.3,12.7L352.3,12.7L351.3,13.1L350.3,13.1L349.3,12.9L348.3,13.0L347.3,13.2L346.3,12.8L345.3,12.7L344.3,13.0L343.3,12.8L342.3,12.9L341.3,13.1L340.3,12.6L339.3,12.9L338.3,12.8L337.3,13.0L336.3,13.2L335.3,13.0L334.3,12.9L333.3,12.7L332.3,13.1L331.3,12.8L330.3,12.8L329.3,13.2L328.3,13.0L327.3,12.8L326.3,12.9L325.3,13.1L324.3,12.8L323.3,13.0L322.3,12.7L321.3,12.9L320.3,13.1L319.3,13.0L318.3,13.1L317.3,12.9L316.3,12.9L315.3,13.1L314.3,13.0L313.3,12.9L312.3,12.7L311.3,12.8L310.3,13.2L309.3,13.2L308.3,12.7L307.3,13.1L306.3,12.8L305.3,13.0L304.3,12.8L303.3,12.7L302.3,13.2L301.3,13.1L300.3,12.8L299.3,12.9L298.3,13.1L297.3,13.0L296.3,12.8L295.3,12.7L294.3,13.1L293.3,12.8L292.3,12.8L291.3,12.9L290.3,13.2L289.3,13.0L288.3,12.9L287.3,12.9L286.3,13.0L285.3,13.1L284.3,12.9L283.3,13.1L282.3,12.7L281.3,13.1L280.3,13.0L279.3,12.8L278.3,13.0L277.3,13.0L276.3,12.9L275.3,13.0L274.3,13.0L273.3,13.0L272.3,13.0L271.3,12.9L270.3,13.1L269.3,12.8L268.3,13.2L267.3,13.0L266.3,13.0L265.3,13.1L264.3,12.7L263.3,13.2L262.3,12.7L261.3,13.0L260.3,12.7L259.3,12.8L258.3,12.8L257.3,13.0L256.3,12.9L255.3,13.1L254.3,13.1L253.3,13.1L252.3,12.9L251.3,12.8L250.3,12.9L249.3,13.0L248.3,12.8L247.3,13.2L246.3,13.1L245.3,12.7L244.3,13.1L243.3,12.7L242.3,12.7L241.3,12.6L240.3,12.7L239.3,13.0L238.3,12.8L237.3,12.9L236.3,12.6L235.3,13.0L234.3,12.8L233.3,13.1L232.3,13.1L231.3,12.8L230.3,12.9L229.3,13.1L228.3,12.6L227.3,12.6L226.3,12.7L225.3,12.7L224.3,13.0L223.3,12.6L222.3,12.9L221.3,12.8L220.3,13.1L219.3,12.6L218.3,13.0L217.3,12.7L216.3,12.9L215.3,12.8L214.3,12.9L213.3,12.8L212.3,12.7L211.3,13.2L210.3,12.8L209.3,13.0L208.3,13.0L207.3,12.9L206.3,12.7L205.3,12.7L204.3,12.7L203.3,12.6L202.3,12.7L201.3,13.2L200.3,13.0L199.3,13.0L198.3,13.1L197.3,13.0L196.3,13.0L195.3,12.8L194.3,13.2L193.3,12.9L192.3,12.9L191.3,12.8L190.3,12.9L189.3,12.7L188.3,12.7L187.3,12.6L186.3,12.8L185.3,13.1L184.3,12.8L183.3,12.7L182.3,12.9L181.3,12.8L180.3,13.1L179.3,13.0L178.3,12.7L177.3,12.6L176.3,13.0L175.3,12.6L174.3,13.2L173.3,13.1L172.3,12.7L171.3,12.9L170.3,12.9L169.3,12.8L168.3,12.9L167.3,12.6L166.3,12.7L165.3,13.1L164.3,13.1L163.3,12.9L162.3,12.8L161.3,12.9L160.3,12.6L159.3,12.7L158.3,13.0L157.3,13.1L156.3,12.8L155.3,12.7L154.3,12.9L153.3,13.2L152.3,12.7L151.3,13.0L150.3,13.2L149.3,13.1L148.3,12.8L147.3,13.1L146.3,12.9L145.3,13.2L144.3,13.0L143.3,13.1L142.3,12.7L141.3,13.1L140.3,12.7L139.3,12.8L138.3,13.1L137.3,12.6L136.3,12.9L135.3,12.9L134.3,12.7L133.3,12.8L132.3,12.7L131.3,12.7L130.3,12.8L129.3,12.8L128.3,13.0L127.3,13.1L126.3,13.2L125.3,13.2L124.3,12.9L123.3,12.7L122.3,13.2L121.3,12.9L120.3,12.9L119.3,13.0L118.3,13.2L117.3,13.2L116.3,13.0L115.3,12.9L114.3,12.8L113.3,12.7L112.3,12.7L111.3,13.1L110.3,12.7L109.3,13.0L108.3,12.7L107.3,12.8L106.3,13.1L105.3,13.2L104.3,12.7L103.3,13.1L102.3,12.6L101.3,12.7L100.3,12.8L99.3,12.7L98.3,13.0L97.3,13.1L96.3,12.9L95.3,12.8L94.3,12.6L93.3,13.0L92.3,13.0L91.3,12.7L90.3,13.2L89.3,12.6L88.3,13.2L87.3,12.8L86.3,13.2L85.3,13.2L84.3,12.8L83.3,13.1L82.3,12.8L81.3,13.0L80.3,12.7L79.3,12.7L78.3,13.0L77.3,12.8L76.3,12.7L75.3,13.0L74.3,13.0L73.3,12.8L72.3,12.9L71.3,13.1L70.3,13.0L69.3,13.0L68.3,13.1L67.3,13.2L66.3,13.0L65.3,13.0L64.3,13.2L63.3,13.0L62.3,12.8L61.3,12.8L60.3,12.7L59.3,12.7L58.3,13.1L57.3,13.0L56.3,12.8L55.3,13.1L54.3,12.9L53.3,13.1L52.3,12.8L51.3,13.1L50.3,12.8L49.3,12.9L48.3,13.1L47.3,12.9L46.3,12.7L45.3,13.1L44.3,13.1L43.3,12.8L42.3,12.6L41.3,12.8L40.3,12.8L39.3,12.9L38.3,13.0L37.3,12.8L36.3,13.0L35.3,12.9L34.3,13.1L33.3,13.2L32.3,13.1L31.3,12.9L30.3,13.1L29.3,13.1L28.3,13.1L27.3,12.8L26.3,12.9L25.3,12.6L24.3,12.7L23.3,13.1L22.3,12.7L21.3,13.0L20.3,13.1L19.3,12.8L18.3,12.6L17.3,12.7L16.3,13.0L15.3,13.0L14.3,13.2L13.3,12.9L12.3,13.0L11.3,12.9L10.3,13.0L9.3,12.9L8.3,13.0L7.3,13.2L6.3,12.8L5.3,12.7L4.3,12.8L3.3,12.6L2.3,12.8L1.3,12.9Z" fill="#ffff00"/><path d="M1.3,13.3L2.3,13.0L3.3,13.2L4.3,13.4L5.3,13.5L6.3,13.2L7.3,13.0L8.3,13.0L9.3,13.4L10.3,13.2L11.3,13.1L12.3,12.9L13.3,13.0L14.3,13.2L15.3,13.2L16.3,13.0L17.3,13.0L18.3,13.2L19.3,13.0L20.3,13.2L21.3,13.2L22.3,13.1L23.3,13.3L24.3,13.0L25.3,13.2L26.3,13.2L27.3,13.0L28.3,13.4L29.3,13.4L30.3,13.0L31.3,13.2L32.3,13.1L33.3,13.3L34.3,13.0L35.3,12.9L36.3,13.0L37.3,13.2L38.3,13.0L39.3,12.9L40.3,12.9L41.3,13.1L42.3,13.0L43.3,12.9L44.3,13.3L45.3,13.3L46.3,13.3L47.3,13.5L48.3,13.3L49.3,13.3L50.3,13.3L51.3,13.1L52.3,13.2L53.3,12.9L54.3,13.3L55.3,13.4L56.3,13.3L57.3,13.4L58.3,13.0L59.3,13.4L60.3,13.3L61.3,13.4L62.3,13.0L63.3,13.2L64.3,13.0L65.3,12.9L66.3,13.3L67.3,13.3L68.3,12.9L69.3,13.5L70.3,13.3L71.3,13.1L72.3,13.3L73.3,13.4L74.3,13.3L75.3,13.0L76.3,13.0L77.3,13.4L78.3,13.0L79.3,13.4L80.3,13.0L81.3,13.4L82.3,13.3L83.3,12.9L84.3,13.1L85.3,13.0L86.3,13.3L87.3,13.5L88.3,13.3L89.3,13.0L90.3,12.9L91.3,13.2L92.3,13.0L93.3,13.0L94.3,13.5L95.3,13.3L96.3,12.9L97.3,13.4L98.3,13.0L99.3,13.1L100.3,13.2L101.3,13.0L102.3,13.0L103.3,13.2L104.3,13.4L105.3,13.1L106.3,13.4L107.3,13.1L108.3,13.0L109.3,13.3L110.3,13.1L111.3,13.4L112.3,13.1L113.3,13.0L114.3,12.9L115.3,13.2L116.3,13.0L117.3,13.1L118.3,13.2L119.3,13.3L120.3,13.1L121.3,13.2L122.3,13.5L123.3,13.2L124.3,13.2L125.3,13.3L126.3,13.4L127.3,13.1L128.3,13.0L129.3,13.5L130.3,13.0L131.3,13.0L132.3,13.1L133.3,13.5L134.3,13.3L135.3,13.1L136.3,12.9L137.3,13.5L138.3,13.5L139.3,13.3L140.3,13.0L141.3,13.2L142.3,13.4L143.3,12.9L144.3,13.1L145.3,13.3L146.3,13.2L147.3,13.3L148.3,13.1L149.3,13.2L150.3,13.2L151.3,13.3L152.3,13.1L153.3,13.2L154.3,13.3L155.3,13.2L156.3,12.9L157.3,13.1L158.3,13.4L159.3,13.3L160.3,13.5L161.3,13.3L162.3,13.3L163.3,13.0L164.3,13.4L165.3,13.3L166.3,13.2L167.3,13.0L168.3,13.0L169.3,13.2L170.3,13.3L171.3,13.1L172.3,13.3L173.3,13.1L174.3,13.2L175.3,13.5L176.3,13.5L177.3,13.3L178.3,13.5L179.3,13.5L180.3,13.1L181.3,13.0L182.3,13.1L183.3,13.4L184.3,13.2L185.3,13.2L186.3,13.2L187.3,13.5L188.3,12.9L189.3,13.4L190.3,13.1L191.3,13.1L192.3,13.0L193.3,13.2L194.3,13.2L195.3,13.2L196.3,13.3L197.3,13.2L198.3,13.1L199.3,13.3L200.3,13.4L201.3,12.9L202.3,13.1L203.3,13.4L204.3,13.2L205.3,13.2L206.3,13.5L207.3,13.3L208.3,13.3L209.3,13.1L210.3,13.2L211.3,13.3L212.3,13.0L213.3,13.3L214.3,13.4L215.3,12.9L216.3,13.0L217.3,13.1L218.3,13.1L219.3,13.4L220.3,13.1L221.3,13.4L222.3,13.1L223.3,12.9L224.3,13.2L225.3,13.0L226.3,13.2L227.3,13.4L228.3,13.4L229.3,13.0L230.3,13.5L231.3,13.0L232.3,13.3L233.3,13.4L234.3,13.0L235.3,13.0L236.3,13.1L237.3,13.1L238.3,13.4L239.3,13.2L240.3,13.3L241.3,13.0L242.3,13.2L243.3,13.2L244.3,13.1L245.3,13.4L246.3,13.1L247.3,13.2L248.3,13.3L249.3,13.4L250.3,13.5L251.3,13.1L252.3,13.1L253.3,12.9L254.3,13.4L255.3,13.1L256.3,13.2L257.3,13.4L258.3,13.1L259.3,13.4L260.3,13.4L261.3,13.4L262.3,13.1L263.3,13.4L264.3,13.2L265.3,13.0L266.3,13.0L267.3,13.4L268.3,13.2L269.3,13.1L270.3,13.1L271.3,13.4L272.3,12.9L273.3,13.3L274.3,12.9L275.3,13.4L276.3,13.0L277.3,13.5L278.3,12.9L279.3,13.0L280.3,13.1L281.3,13.0L282.3,13.0L283.3,13.3L284.3,13.1L285.3,13.1L286.3,13.3L287.3,12.9L288.3,13.3L289.3,12.9L290.3,13.4L291.3,13.1L292.3,13.2L293.3,13.1L294.3,13.2L295.3,13.1L296.3,13.1L297.3,13.0L298.3,13.0L299.3,13.3L300.3,13.3L301.3,13.4L302.3,13.2L303.3,12.9L304.3,13.3L305.3,13.2L306.3,13.1L307.3,13.2L308.3,13.0L309.3,13.4L310.3,13.2L311.3,13.3L312.3,13.0L313.3,13.4L314.3,13.2L315.3,13.3L316.3,13.2L317.3,13.2L318.3,13.3L319.3,13.4L320.3,13.4L321.3,13.2L322.3,13.2L323.3,13.4L324.3,13.0L325.3,13.1L326.3,13.1L327.3,13.0L328.3,13.0L329.3,13.2L330.3,13.0L331.3,13.4L332.3,13.1L333.3,13.4L334.3,12.9L335.3,13.2L336.3,13.0L337.3,12.9L338.3,13.0L339.3,13.2L340.3,13.1L341.3,13.4L342.3,13.0L343.3,13.4L344.3,13.1L345.3,13.0L346.3,13.1L347.3,13.0L348.3,13.2L349.3,13.3L350.3,13.2L351.3,13.0L352.3,13.4L353.3,13.4L354.3,13.5L355.3,13.1L356.3,13.0L357.3,13.2L358.3,13.4L359.3,13.5L360.3,13.5L361.3,13.1L362.3,13.2L363.3,13.0L364.3,13.4L365.3,13.1L366.3,13.1L367.3,12.9L368.3,13.4L369.3,13.3L370.3,13.4L371.3,13.0L372.3,13.0L373.3,13.4L374.3,12.9L375.3,13.1L376.3,13.2L377.3,13.3L378.3,13.1L379.3,13.3L380.3,13.0L381.3,13.1L382.3,13.1L383.3,13.3L384.3,13.1L385.3,13.3L386.3,13.3L387.3,13.0L388.3,13.5L389.3,13.2L390.3,13.1L391.3,13.4L392.3,13.1L393.3,13.3L394.3,13.3L395.3,13.3L396.3,13.5L397.3,13.5L398.3,13.2L399.3,13.0L400.3,13.4L401.3,12.9L402.3,13.4L403.3,13.2L404.3,12.9L405.3,13.4L406.3,13.2L407.3,13.1L408.3,13.3L409.3,13.2L410.3,13.2L411.3,13.4L412.3,13.1L413.3,13.1L414.3,13.4L415.3,13.5L416.3,13.0L417.3,13.3L418.3,13.0L419.3,12.9L420.3,13.3L421.3,13.4L422.3,13.4L423.3,13.2L424.3,13.2L425.3,13.1L426.3,13.1L427.3,13.4L428.3,13.2L429.3,12.9L430.3,12.9L431.3,13.4L432.3,13.3L433.3,13.5L434.3,13.0L435.3,13.2L436.3,13.5L437.3,13.1L438.3,13.3L439.3,13.2L440.3,13.0L441.3,13.2L442.3,13.4L443.3,13.2L444.3,13.4L445.3,13.0L446.3,13.2L447.3,13.2L448.3,13.0L449.3,13.3L450.3,13.0L451.3,12.9L452.3,13.1L453.3,13.2L454.3,13.3L455.3,13.3L456.3,13.1L457.3,13.2L458.3,13.2L459.3,13.3L460.3,13.5L461.3,13.4L462.3,13.4L463.3,13.3L464.3,13.3L465.3,13.5L466.3,13.5L467.3,13.3L468.3,13.0L469.3,13.4L470.3,13.1L471.3,12.9L472.3,12.9L473.3,13.0L474.3,13.5L475.3,13.2L476.3,13.0L477.3,13.1L478.3,13.4L479.3,13.2L480.3,13.3L481.3,13.1L482.3,13.1L483.3,13.2L484.3,13.0L485.3,13.5L486.3,13.3L487.3,13.3L488.3,13.2L489.3,12.9L490.3,13.4L491.3,13.0L492.3,12.9L493.3,13.0L494.3,13.0L495.3,13.5L496.3,12.9L497.3,13.5L498.3,13.5L499.3,13.4L500.3,13.4L501.3,13.4L502.3,13.1L503.3,13.5L504.3,13.2L505.3,12.9L506.3,13.4L507.3,13.4L508.3,12.9L509.3,12.9L510.3,13.2L511.3,13.0L512.3,13.4L513.3,13.4L514.3,13.1L515.3,12.9L516.3,13.3L517.3,13.5L518.3,13.5L519.3,12.9L520.3,13.1L521.3,13.0L522.3,13.3L523.3,13.3L524.3,13.4L525.3,12.9L526.3,13.0L527.3,13.4L528.3,13.0L529.3,13.5L530.3,13.2L531.3,13.1L532.3,13.1L533.3,13.5L534.3,13.1L535.3,13.3L536.3,13.0L537.3,13.3L538.3,13.1L539.3,13.5L540.3,13.5L541.3,13.1L542.3,13.5L543.3,13.0L544.3,13.0L545.3,13.4L546.3,12.9L547.3,13.2L548.3,13.0L549.3,13.1L550.3,13.5L551.3,13.1L552.3,13.3L553.3,13.2L554.3,13.4L555.3,13.2L556.3,13.4L557.3,12.9L558.3,13.0L559.3,13.0L560.3,13.3L561.3,13.0L562.3,13.0L563.3,12.9L564.3,13.4L565.3,13.1L566.3,13.3L567.3,13.5L568.3,13.4L569.3,13.0L570.3,13.3L571.3,13.1L572.3,13.0L573.3,13.5L574.3,13.3L575.3,13.3L576.3,13.4L577.3,13.1L578.3,13.1L579.3,13.2L580.3,13.0L581.3,13.1L582.3,13.4L583.3,13.5L584.3,13.5L585.3,13.4L586.3,13.4L587.3,13.0L588.3,13.3L589.3,13.0L590.3,13.4L591.3,13.5L592.3,13.5L593.3,13.0L594.3,13.2L595.3,13.0L596.3,12.9L597.3,13.3L598.3,13.0L599.3,13.0L600.3,13.3L601.3,13.5L602.3,13.0L603.3,13.0L604.3,13.2L605.3,13.4L606.3,13.4L607.3,13.4L608.3,13.5L609.3,13.4L610.3,13.2L611.3,13.0L612.3,13.4L613.3,13.0L614.3,13.0L615.3,13.1L616.3,13.1L617.3,13.5L618.3,13.4L619.3,13.1L620.3,13.5L621.3,13.0L622.3,13.1L623.3,13.1L624.3,13.2L625.3,13.0L626.3,13.0L627.3,13.4L628.3,13.1L629.3,13.0L630.3,13.3L631.3,13.1L632.3,13.4L633.3,13.1L634.3,13.4L635.3,13.2L636.3,13.2L637.3,13.4L638.3,13.3L639.3,13.4L640.3,13.4L641.3,13.3L642.3,13.1L643.3,13.0L644.3,13.4L645.3,13.1L646.3,13.1L647.3,13.2L648.3,13.0L649.3,13.4L650.3,13.0L651.3,13.0L652.3,13.2L653.3,13.0L654.3,13.4L655.3,13.3L656.3,12.9L657.3,12.9L658.3,13.2L659.3,12.9L660.3,13.3L661.3,12.9L662.3,13.0L663.3,13.1L664.3,13.1L665.3,13.1L666.3,13.2L667.3,13.5L668.3,13.3L669.3,13.4L670.3,13.3L671.3,13.4L672.3,13.4L673.3,13.1L674.3,12.9L675.3,13.1L676.3,13.3L677.3,13.1L678.3,13.3L679.3,13.1L680.3,13.4L681.3,13.3L682.3,13.1L683.3,13.0L684.3,13.2L685.3,13.0L686.3,13.3L687.3,13.3L688.3,13.2L689.3,13.1L690.3,13.2L691.3,13.2L692.3,13.1L693.3,13.2L694.3,13.3L695.3,13.5L696.3,13.2L697.3,13.5L698.3,13.1L699.3,13.0L700.3,13.4L701.3,13.0L702.3,13.5L703.3,13.5L704.3,12.9L705.3,13.3L706.3,12.9L707.3,13.1L708.3,13.1L709.3,13.3L710.3,13.4L711.3,13.1L712.3,12.9L713.3,13.4L714.3,13.2L715.3,12.9L716.3,13.0L717.3,13.0L718.3,13.4L719.3,13.1L720.3,13.5L721.3,13.2L722.3,13.5L723.3,13.3L724.3,13.1L725.3,13.1L726.3,13.1L727.3,13.1L728.3,13.4L729.3,13.4L730.3,13.0L731.3,13.2L732.3,13.0L733.3,13.3L734.3,13.0L735.3,13.3L736.3,13.4L737.3,13.5L738.3,13.1L739.3,13.5L740.3,13.4L741.3,13.2L742.3,12.9L743.3,13.4L744.3,13.2L745.3,13.5L746.3,13.1L747.3,13.1L748.3,13.0L749.3,12.9L750.3,13.0L751.3,13.1L752.3,13.1L753.3,13.2L754.3,13.0L755.3,13.3L756.3,13.2L757.3,12.9L758.3,12.9L759.3,13.0L760.3,13.5L761.3,13.1L762.3,13.2L763.3,13.2L764.3,13.5L765.3,13.4L766.3,13.0L767.3,13.1L768.3,12.9L769.3,13.3L770.3,13.2L771.3,12.9L772.3,13.2L773.3,13.2L774.3,13.2L775.3,13.2L776.3,13.3L777.3,13.4L778.3,12.9L779.3,13.5L780.3,13.3L781.3,13.0L782.3,13.2L783.3,13.4L784.3,13.3L785.3,12.9L786.3,13.5L787.3,13.5L788.3,12.9L789.3,13.1L790.3,13.0L791.3,13.5L792.3,13.3L793.3,13.4L794.3,13.4L795.3,12.9L796.3,13.0L797.3,13.2L798.3,13.2L799.3,13.1L800.3,13.3L801.3,13.2L802.3,13.1L803.3,13.1L804.3,13.1L805.3,13.4L806.3,13.3L807.3,13.1L808.3,13.1L809.3,13.2L810.3,12.9L811.3,13.2L812.3,13.4L813.3,13.5L814.3,13.0L815.3,13.1L816.3,13.0L817.3,13.1L818.3,13.1L819.3,13.2L820.3,13.5L821.3,13.1L822.3,13.2L823.3,13.3L824.3,12.9L825.3,13.2L826.3,13.0L827.3,13.0L828.3,13.4L829.3,13.2L830.3,13.3L831.3,13.4L832.3,13.3L833.3,13.3L834.3,13.4L835.3,13.3L836.3,13.1L837.3,13.3L838.3,13.3L839.3,13.5L840.3,13.1L841.3,13.3L842.3,13.0L843.3,13.4L844.3,12.9L845.3,13.0L846.3,13.2L847.3,12.9L848.3,13.4L849.3,13.0L850.3,13.3L851.3,12.9L852.3,13.3L853.3,13.0L854.3,13.4L855.3,13.0L856.3,13.2L857.3,13.1L858.3,13.5L859.3,13.2L860.3,13.0L861.3,13.2L862.3,13.2L863.3,13.2L864.3,13.0L865.3,12.9L866.3,13.2L867.3,13.3L868.3,12.9L869.3,13.3L870.3,12.9L871.3,13.2L872.3,13.1L873.3,12.9L874.3,13.3L875.3,13.0L876.3,13.0L877.3,13.0L878.3,13.1L879.3,13.2L880.3,13.0L881.3,13.4L882.3,12.9L883.3,13.0L884.3,13.2L885.3,13.3L886.3,12.9L887.3,13.4L888.3,13.1L889.3,13.4L890.3,13.2L891.3,12.9L892.3,13.2L893.3,13.2L894.3,13.5L895.3,13.2L895.3,17.8L894.3,18.4L893.3,18.3L892.3,18.0L891.3,17.9L890.3,18.2L889.3,18.0L888.3,18.2L887.3,18.4L886.3,18.3L885.3,18.2L884.3,18.2L883.3,17.9L882.3,17.9L881.3,17.6L880.3,18.1L879.3,18.1L878.3,18.2L877.3,18.7L876.3,17.9L875.3,18.1L874.3,17.7L873.3,17.9L872.3,18.4L871.3,17.9L870.3,17.9L869.3,17.6L868.3,17.7L867.3,17.9L866.3,18.7L865.3,17.8L864.3,17.8L863.3,17.8L862.3,18.0L861.3,18.1L860.3,17.9L859.3,18.1L858.3,17.9L857.3,17.9L856.3,17.8L855.3,18.0L854.3,18.3L853.3,18.3L852.3,18.7L851.3,17.9L850.3,18.7L849.3,17.9L848.3,18.1L847.3,17.8L846.3,18.3L845.3,17.9L844.3,17.8L843.3,18.1L842.3,18.2L841.3,17.9L840.3,17.6L839.3,17.6L838.3,17.6L837.3,18.7L836.3,17.8L835.3,17.6L834.3,17.9L833.3,18.0L832.3,18.1L831.3,18.1L830.3,17.8L829.3,17.9L828.3,17.8L827.3,18.8L826.3,18.1L825.3,18.3L824.3,17.8L823.3,17.6L822.3,18.1L821.3,18.0L820.3,18.0L819.3,17.5L818.3,17.7L817.3,17.8L816.3,17.7L815.3,18.3L814.3,17.8L813.3,18.1L812.3,18.0L811.3,18.1L810.3,18.1L809.3,17.8L808.3,18.5L807.3,17.7L806.3,18.0L805.3,17.8L804.3,17.7L803.3,17.6L802.3,18.2L801.3,18.3L800.3,18.0L799.3,17.8L798.3,18.1L797.3,18.2L796.3,17.6L795.3,17.5L794.3,17.8L793.3,17.8L792.3,17.8L791.3,18.8L790.3,18.4L789.3,18.3L788.3,17.5L787.3,18.5L786.3,17.8L785.3,18.4L784.3,17.9L783.3,18.2L782.3,17.8L781.3,17.5L780.3,17.8L779.3,17.9L778.3,18.2L777.3,17.8L776.3,18.1L775.3,18.2L774.3,18.7L773.3,18.0L772.3,18.1L771.3,18.1L770.3,17.6L769.3,18.1L768.3,18.0L767.3,18.1L766.3,17.8L765.3,17.9L764.3,18.6L763.3,18.1L762.3,18.3L761.3,18.0L760.3,18.1L759.3,17.8L758.3,17.9L757.3,17.7L756.3,18.0L755.3,17.7L754.3,17.8L753.3,17.7L752.3,18.4L751.3,17.8L750.3,18.0L749.3,18.1L748.3,18.4L747.3,17.9L746.3,18.0L745.3,18.2L744.3,17.9L743.3,17.7L742.3,17.6L741.3,17.9L740.3,18.9L739.3,18.1L738.3,17.8L737.3,17.8L736.3,18.1L735.3,17.6L734.3,18.0L733.3,18.0L732.3,18.6L731.3,18.1L730.3,19.0L729.3,17.9L728.3,17.9L727.3,17.8L726.3,18.0L725.3,18.2L724.3,17.7L723.3,18.0L722.3,18.1L721.3,17.9L720.3,17.6L719.3,18.1L718.3,17.7L717.3,18.2L716.3,18.0L715.3,18.3L714.3,18.1L713.3,18.1L712.3,18.0L711.3,18.1L710.3,18.7L709.3,18.1L708.3,17.8L707.3,18.0L706.3,18.1L705.3,17.9L704.3,17.7L703.3,17.9L702.3,18.0L701.3,18.0L700.3,17.6L699.3,18.2L698.3,18.0L697.3,17.8L696.3,17.7L695.3,17.8L694.3,17.8L693.3,17.6L692.3,17.7L691.3,17.6L690.3,17.9L689.3,18.0L688.3,18.0L687.3,17.7L686.3,17.6L685.3,18.1L684.3,18.3L683.3,17.8L682.3,17.6L681.3,18.0L680.3,17.7L679.3,17.6L678.3,18.4L677.3,17.5L676.3,17.9L675.3,18.0L674.3,17.6L673.3,17.8L672.3,17.9L671.3,17.7L670.3,17.6L669.3,17.7L668.3,18.3L667.3,17.6L666.3,17.6L665.3,17.7L664.3,17.8L663.3,18.3L662.3,17.8L661.3,17.8L660.3,18.2L659.3,18.0L658.3,18.0L657.3,18.3L656.3,18.2L655.3,17.7L654.3,18.0L653.3,18.2L652.3,17.9L651.3,17.6L650.3,18.2L649.3,17.6L648.3,18.1L647.3,17.7L646.3,17.5L645.3,17.5L644.3,18.3L643.3,17.6L642.3,17.6L641.3,17.9L640.3,17.8L639.3,17.7L638.3,18.5L637.3,18.2L636.3,18.0L635.3,18.0L634.3,18.7L633.3,18.2L632.3,18.2L631.3,18.0L630.3,17.9L629.3,17.5L628.3,18.4L627.3,17.9L626.3,17.8L625.3,17.5L624.3,17.9L623.3,17.9L622.3,18.0L621.3,17.6L620.3,18.2L619.3,18.1L618.3,17.9L617.3,18.5L616.3,18.8L615.3,17.6L614.3,17.6L613.3,18.5L612.3,17.8L611.3,18.2L610.3,17.6L609.3,17.8L608.3,17.7L607.3,17.9L606.3,17.7L605.3,18.1L604.3,17.8L603.3,17.9L602.3,17.6L601.3,17.9L600.3,18.1L599.3,17.8L598.3,17.9L597.3,18.1L596.3,18.2L595.3,17.6L594.3,17.6L593.3,17.7L592.3,18.6L591.3,17.8L590.3,18.1L589.3,17.7L588.3,18.1L587.3,18.2L586.3,17.9L585.3,17.8L584.3,18.1L583.3,17.8L582.3,18.3L581.3,18.1L580.3,17.6L579.3,17.5L578.3,18.1L577.3,17.7L576.3,18.4L575.3,17.8L574.3,17.9L573.3,18.0L572.3,17.7L571.3,18.0L570.3,18.6L569.3,17.9L568.3,18.0L567.3,17.7L566.3,18.1L565.3,17.9L564.3,17.6L563.3,18.2L562.3,18.1L561.3,18.8L560.3,18.2L559.3,17.9L558.3,18.0L557.3,17.6L556.3,17.6L555.3,17.6L554.3,17.5L553.3,18.2L552.3,17.7L551.3,18.0L550.3,18.2L549.3,18.1L548.3,18.3L547.3,18.0L546.3,18.0L545.3,17.6L544.3,17.8L543.3,18.0L542.3,18.0L541.3,17.8L540.3,18.8L539.3,17.9L538.3,17.9L537.3,17.7L536.3,17.8L535.3,17.9L534.3,17.5L533.3,18.0L532.3,18.3L531.3,17.8L530.3,17.7L529.3,18.0L528.3,17.5L527.3,17.8L526.3,17.8L525.3,18.2L524.3,18.4L523.3,18.1L522.3,17.8L521.3,17.9L520.3,18.1L519.3,18.0L518.3,18.0L517.3,18.1L516.3,17.5L515.3,18.2L514.3,17.7L513.3,17.7L512.3,18.0L511.3,17.8L510.3,18.0L509.3,18.1L508.3,17.9L507.3,18.2L506.3,18.4L505.3,17.9L504.3,18.0L503.3,17.5L502.3,17.8L501.3,17.5L500.3,17.9L499.3,18.0L498.3,17.7L497.3,17.9L496.3,18.0L495.3,17.6L494.3,19.0L493.3,18.2L492.3,18.7L491.3,18.2L490.3,18.1L489.3,18.8L488.3,18.4L487.3,17.9L486.3,17.8L485.3,18.1L484.3,18.0L483.3,17.5L482.3,18.4L481.3,18.2L480.3,17.7L479.3,17.6L478.3,17.7L477.3,18.0L476.3,17.6L475.3,18.3L474.3,17.9L473.3,17.8L472.3,17.7L471.3,17.7L470.3,17.8L469.3,18.0L468.3,18.5L467.3,18.0L466.3,18.2L465.3,17.9L464.3,17.5L463.3,18.4L462.3,18.1L461.3,18.1L460.3,18.0L459.3,17.8L458.3,18.1L457.3,18.1L456.3,17.8L455.3,17.8L454.3,17.9L453.3,17.6L452.3,18.2L451.3,17.5L450.3,17.8L449.3,18.0L448.3,17.9L447.3,18.2L446.3,18.2L445.3,18.5L444.3,18.0L443.3,17.9L442.3,17.7L441.3,18.1L440.3,17.8L439.3,18.1L438.3,18.0L437.3,18.2L436.3,18.5L435.3,17.7L434.3,18.1L433.3,18.1L432.3,18.0L431.3,18.0L430.3,18.2L429.3,17.7L428.3,18.6L427.3,17.5L426.3,18.6L425.3,18.1L424.3,17.7L423.3,18.0L422.3,18.7L421.3,18.2L420.3,18.3L419.3,17.8L418.3,18.0L417.3,18.0L416.3,17.5L415.3,18.1L414.3,17.7L413.3,18.3L412.3,18.1L411.3,18.6L410.3,17.9L409.3,18.2L408.3,18.1L407.3,17.8L406.3,18.7L405.3,18.1L404.3,17.8L403.3,18.5L402.3,18.2L401.3,18.4L400.3,17.5L399.3,18.3L398.3,17.9L397.3,18.3L396.3,17.9L395.3,17.9L394.3,18.1L393.3,17.5L392.3,17.8L391.3,18.6L390.3,18.1L389.3,17.6L388.3,18.1L387.3,18.7L386.3,18.9L385.3,17.6L384.3,17.8L383.3,17.8L382.3,18.3L381.3,17.6L380.3,17.9L379.3,18.3L378.3,17.9L377.3,18.1L376.3,17.8L375.3,17.9L374.3,18.1L373.3,17.9L372.3,17.5L371.3,18.3L370.3,18.7L369.3,19.1L368.3,18.1L367.3,18.0L366.3,18.0L365.3,17.9L364.3,17.6L363.3,18.1L362.3,17.7L361.3,18.2L360.3,18.1L359.3,18.1L358.3,18.0L357.3,17.6L356.3,18.8L355.3,18.0L354.3,17.7L353.3,17.7L352.3,18.2L351.3,17.6L350.3,17.5L349.3,18.4L348.3,18.0L347.3,17.9L346.3,17.7L345.3,18.5L344.3,17.9L343.3,18.9L342.3,17.8L341.3,17.6L340.3,18.0L339.3,18.1L338.3,17.5L337.3,18.3L336.3,17.7L335.3,18.4L334.3,17.7L333.3,18.2L332.3,17.5L331.3,18.1L330.3,18.0L329.3,17.5L328.3,17.9L327.3,17.6L326.3,18.2L325.3,18.0L324.3,17.9L323.3,18.8L322.3,17.7L321.3,17.9L320.3,18.1L319.3,17.9L318.3,18.0L317.3,17.9L316.3,18.1L315.3,19.0L314.3,17.5L313.3,17.7L312.3,18.0L311.3,17.8L310.3,18.2L309.3,18.3L308.3,17.6L307.3,18.5L306.3,18.4L305.3,18.0L304.3,17.8L303.3,17.5L302.3,17.7L301.3,18.6L300.3,17.9L299.3,17.6L298.3,17.9L297.3,17.7L296.3,17.7L295.3,18.2L294.3,18.2L293.3,17.9L292.3,18.0L291.3,17.9L290.3,18.8L289.3,18.2L288.3,17.6L287.3,18.2L286.3,17.7L285.3,18.4L284.3,18.2L283.3,17.7L282.3,18.1L281.3,17.6L280.3,17.6L279.3,18.0L278.3,17.6L277.3,18.6L276.3,18.3L275.3,18.5L274.3,17.8L273.3,18.6L272.3,17.6L271.3,17.6L270.3,18.1L269.3,18.0L268.3,17.8L267.3,17.8L266.3,18.7L265.3,17.7L264.3,17.8L263.3,17.6L262.3,17.6L261.3,18.5L260.3,17.9L259.3,18.1L258.3,17.8L257.3,18.2L256.3,17.7L255.3,17.7L254.3,18.2L253.3,17.8L252.3,17.8L251.3,18.6L250.3,17.8L249.3,17.8L248.3,18.1L247.3,17.8L246.3,18.2L245.3,17.9L244.3,18.4L243.3,18.2L242.3,17.7L241.3,18.8L240.3,17.6L239.3,17.8L238.3,17.6L237.3,18.4L236.3,17.5L235.3,17.8L234.3,18.3L233.3,18.0L232.3,18.0L231.3,18.4L230.3,17.8L229.3,18.2L228.3,18.6L227.3,17.8L226.3,18.0L225.3,18.4L224.3,18.1L223.3,18.7L222.3,18.4L221.3,18.1L220.3,18.0L219.3,17.8L218.3,17.9L217.3,18.2L216.3,18.1L215.3,17.9L214.3,18.3L213.3,17.8L212.3,18.1L211.3,18.0L210.3,17.9L209.3,17.7L208.3,17.6L207.3,18.5L206.3,18.4L205.3,17.9L204.3,17.7L203.3,18.0L202.3,18.1L201.3,18.0L200.3,17.8L199.3,17.8L198.3,17.8L197.3,18.0L196.3,18.3L195.3,18.5L194.3,17.8L193.3,18.7L192.3,18.4L191.3,18.2L190.3,18.1L189.3,18.0L188.3,18.0L187.3,17.7L186.3,17.9L185.3,17.6L184.3,18.7L183.3,18.0L182.3,17.9L181.3,18.4L180.3,18.1L179.3,18.0L178.3,18.9L177.3,17.6L176.3,17.9L175.3,18.1L174.3,18.8L173.3,18.9L172.3,18.0L171.3,18.0L170.3,18.0L169.3,18.1L168.3,17.7L167.3,18.4L166.3,18.4L165.3,18.1L164.3,18.1L163.3,17.6L162.3,18.0L161.3,17.5L160.3,17.8L159.3,17.6L158.3,18.3L157.3,18.2L156.3,18.3L155.3,18.2L154.3,17.9L153.3,18.2L152.3,18.6L151.3,17.8L150.3,18.3L149.3,18.0L148.3,17.6L147.3,18.0L146.3,17.8L145.3,17.9L144.3,17.9L143.3,18.3L142.3,18.7L141.3,18.0L140.3,18.3L139.3,18.1L138.3,17.9L137.3,17.7L136.3,18.0L135.3,17.5L134.3,17.8L133.3,18.2L132.3,17.7L131.3,17.8L130.3,18.5L129.3,17.5L128.3,18.7L127.3,17.6L126.3,17.9L125.3,18.3L124.3,17.7L123.3,17.7L122.3,18.5L121.3,18.3L120.3,18.4L119.3,18.0L118.3,18.0L117.3,17.8L116.3,18.1L115.3,17.9L114.3,18.1L113.3,17.8L112.3,18.2L111.3,17.8L110.3,17.9L109.3,18.8L108.3,17.6L107.3,18.8L106.3,18.4L105.3,17.8L104.3,18.2L103.3,18.1L102.3,18.1L101.3,17.6L100.3,17.6L99.3,17.7L98.3,18.1L97.3,18.1L96.3,17.8L95.3,18.4L94.3,17.7L93.3,18.1L92.3,18.2L91.3,18.5L90.3,17.7L89.3,18.1L88.3,17.8L87.3,17.7L86.3,18.2L85.3,18.8L84.3,17.6L83.3,17.9L82.3,18.2L81.3,18.6L80.3,18.0L79.3,18.6L78.3,18.0L77.3,18.4L76.3,17.5L75.3,18.1L74.3,18.6L73.3,17.7L72.3,17.8L71.3,17.6L70.3,17.8L69.3,18.1L68.3,17.9L67.3,17.5L66.3,18.3L65.3,17.8L64.3,18.1L63.3,17.8L62.3,17.5L61.3,18.6L60.3,18.0L59.3,17.8L58.3,17.8L57.3,17.8L56.3,17.5L55.3,18.1L54.3,17.6L53.3,17.7L52.3,17.5L51.3,17.7L50.3,17.7L49.3,17.8L48.3,18.1L47.3,17.7L46.3,17.8L45.3,17.9L44.3,17.6L43.3,18.9L42.3,17.9L41.3,17.7L40.3,18.1L39.3,18.0L38.3,17.6L37.3,18.3L36.3,18.1L35.3,17.8L34.3,17.7L33.3,17.6L32.3,18.0L31.3,17.7L30.3,17.8L29.3,17.6L28.3,18.8L27.3,18.1L26.3,18.1L25.3,17.9L24.3,18.3L23.3,17.9L22.3,17.5L21.3,18.0L20.3,18.5L19.3,18.1L18.3,18.1L17.3,17.6L16.3,17.7L15.3,17.6L14.3,18.0L13.3,18.2L12.3,18.7L11.3,18.4L10.3,18.1L9.3,18.1L8.3,17.9L7.3,17.8L6.3,18.3L5.3,18.1L4.3,17.7L3.3,17.9L2.3,17.6L1.3,18.0Z" fill="#008000"/><path d="M275.0,11.5L275.7,12.3L276.4,12.4L277.1,12.0L277.8,12.1L278.5,12.3L278.5,60.8L277.8,60.0L277.1,60.0L276.4,59.4L275.7,59.8L275.0,60.0Z" fill="#008000"/><path d="M340.5,9.3L341.2,9.6L341.9,9.2L342.6,9.2L343.3,9.3L344.0,9.0L344.7,9.3L345.4,9.2L346.1,8.2L346.8,9.5L347.5,9.1L347.5,59.9L346.8,59.8L346.1,61.1L345.4,59.9L344.7,60.3L344.0,59.9L343.3,60.6L342.6,59.9L341.9,60.0L341.2,59.7L340.5,59.9Z" fill="#008000"/><path d="M340.5,52.3L341.2,52.1L341.9,52.4L342.6,52.4L343.3,52.6L344.0,50.4L344.7,52.2L345.4,52.3L346.1,51.0L346.8,52.2L347.5,51.1L348.2,52.4L348.9,51.9L349.6,52.5L350.3,52.5L351.0,51.9L351.7,51.4L352.4,51.5L353.1,51.5L353.1,60.2L352.4,59.9L351.7,60.7L351.0,59.8L350.3,59.8L349.6,59.8L348.9,59.8L348.2,60.0L347.5,60.6L346.8,59.8L346.1,59.9L345.4,59.4L344.7,59.6L344.0,60.4L343.3,59.8L342.6,59.8L341.9,60.1L341.2,59.9L340.5,60.1Z" fill="#008000"/><path d="M456.7,9.5L457.4,9.2L458.1,8.1L458.8,9.0L459.5,9.4L460.2,9.4L460.9,9.2L461.6,8.2L462.3,9.1L463.0,9.1L463.7,9.2L464.4,9.6L465.1,9.5L465.8,8.8L466.5,8.5L466.5,59.9L465.8,59.6L465.1,59.9L464.4,59.4L463.7,59.6L463.0,59.4L462.3,59.8L461.6,59.5L460.9,59.7L460.2,59.8L459.5,59.9L458.8,60.5L458.1,59.6L457.4,59.7L456.7,60.4Z" fill="#008000"/><path d="M690.6,9.0L691.3,9.4L692.0,7.8L692.7,8.8L693.4,7.7L694.1,8.8L694.8,9.2L695.5,8.0L696.2,9.5L696.2,59.9L695.5,60.0L694.8,59.5L694.1,59.9L693.4,59.9L692.7,59.7L692.0,59.4L691.3,59.7L690.6,59.5Z" fill="#008000"/><path d="M690.6,52.5L691.3,52.5L692.0,52.1L692.7,52.5L693.4,52.1L694.1,52.3L694.8,52.1L695.5,52.1L696.2,51.9L696.9,52.1L697.6,52.4L698.3,52.6L699.0,51.7L699.7,52.1L700.4,52.4L701.1,52.5L701.8,52.0L701.8,59.6L701.1,59.9L700.4,60.9L699.7,60.6L699.0,59.5L698.3,60.2L697.6,60.8L696.9,59.6L696.2,60.0L695.5,59.8L694.8,60.5L694.1,59.9L693.4,59.9L692.7,60.0L692.0,59.9L691.3,60.0L690.6,59.7Z" fill="#008000"/><path d="M807.7,9.0L808.4,7.8L809.1,9.3L809.8,9.2L810.5,9.3L811.2,8.2L811.9,8.2L812.6,7.7L813.3,9.5L814.0,9.4L814.0,60.0L813.3,59.8L812.6,59.9L811.9,59.6L811.2,59.5L810.5,59.8L809.8,60.1L809.1,59.9L808.4,60.2L807.7,59.9Z" fill="#008000"/><rect x="347.8" y="12.0" width="5.5" height="7.2" fill="#ffff00"/><rect x="696.2" y="12.0" width="3.4" height="7.2" fill="#ffff00"/><rect x="354.3" y="18.0" width="1.1" height="42.0" fill="#008000"/><rect x="85.2" y="20.0" width="3.4" height="49.5" fill="#fff"/></svg>
<span id="t1" style="left:10.37px;top:117.8px;font:13.5px/13.5px 'Liberation Sans',sans-serif;color:#fff;transform-origin:0 0;transform:translate(11.43px,0px) rotate(-90deg) translate(0px,-11.43px) scaleX(0.9959);">Amplitude</span>
<span id="t2" style="left:30px;top:47.04px;font:12.0px/12.0px 'Liberation Sans',sans-serif;color:#fff;transform:scaleX(0.8992);transform-origin:0 0;">2.3V</span>
<span id="t3" style="left:30px;top:111.54px;font:12.0px/12.0px 'Liberation Sans',sans-serif;color:#fff;transform:scaleX(0.8327);transform-origin:0 0;">-360mV</span>
<span id="t4" style="left:78.8px;top:109.68px;font:12.43px/12.43px 'Liberation Sans',sans-serif;color:#fff;transform:scaleX(0.8344);transform-origin:0 0;">-9.6001mS</span>
<span id="t5" style="left:230px;top:109.68px;font:12.43px/12.43px 'Liberation Sans',sans-serif;color:#fff;transform:scaleX(0.8369);transform-origin:0 0;">10.401mS</span>
<span id="t6" style="left:405px;top:109.68px;font:12.43px/12.43px 'Liberation Sans',sans-serif;color:#fff;transform:scaleX(0.8298);transform-origin:0 0;">30.401mS</span>
<span id="t7" style="left:593px;top:109.68px;font:12.43px/12.43px 'Liberation Sans',sans-serif;color:#fff;transform:scaleX(0.8422);transform-origin:0 0;">50.401mS</span>
<span id="t8" style="left:761.3px;top:109.68px;font:12.43px/12.43px 'Liberation Sans',sans-serif;color:#fff;transform:scaleX(0.8333);transform-origin:0 0;">70.401mS</span>
<span id="t9" style="left:928.4px;top:109.68px;font:12.43px/12.43px 'Liberation Sans',sans-serif;color:#fff;transform:scaleX(0.8369);transform-origin:0 0;">90.401mS</span>
<span id="t10" style="left:806.5px;top:124.47px;font:bold 11.5px/11.5px 'Liberation Sans',sans-serif;color:#fff;transform:scaleX(1.0321);transform-origin:0 0;">Time(Seconds) --&gt;</span>
<svg style="left:77.8px;top:124px" width="12.5" height="12.5" viewBox="0 0 12 12"><rect x="0.5" y="0.5" width="11" height="11" fill="#fff" stroke="#333"/><path d="M2.6 6.1l2.4 2.5l4.6-5" fill="none" stroke="#222" stroke-width="1.2"/></svg>
<span id="t11" style="left:96.5px;top:124.87px;font:bold 11.5px/11.5px 'Liberation Sans',sans-serif;color:#f0102a;transform:scaleX(0.9967);transform-origin:0 0;">Show CLOCK</span>
<svg style="left:195px;top:124px" width="12.5" height="12.5" viewBox="0 0 12 12"><rect x="0.5" y="0.5" width="11" height="11" fill="#fff" stroke="#333"/><path d="M2.6 6.1l2.4 2.5l4.6-5" fill="none" stroke="#222" stroke-width="1.2"/></svg>
<span id="t12" style="left:213.5px;top:124.87px;font:bold 11.5px/11.5px 'Liberation Sans',sans-serif;color:#0c8a30;transform:scaleX(1.0594);transform-origin:0 0;">Show DATA</span>
<svg style="left:306.5px;top:124px" width="12.5" height="12.5" viewBox="0 0 12 12"><rect x="0.5" y="0.5" width="11" height="11" fill="#fff" stroke="#333"/><path d="M2.6 6.1l2.4 2.5l4.6-5" fill="none" stroke="#222" stroke-width="1.2"/></svg>
<span id="t13" style="left:325.6px;top:124.87px;font:bold 11.5px/11.5px 'Liberation Sans',sans-serif;color:#f4f440;transform:scaleX(1.0389);transform-origin:0 0;">Show CMD</span>
<svg style="left:79px;top:157px" width="895" height="240" viewBox="0 0 895 240"><rect width="895" height="240" fill="#000"/><rect x="5.3" y="0" width="1" height="240" fill="#7c7c7c"/><rect x="165.8" y="0" width="1" height="240" fill="#7c7c7c"/><rect x="347.1" y="0" width="1" height="240" fill="#7c7c7c"/><rect x="535.0" y="0" width="1" height="240" fill="#7c7c7c"/><rect x="703.0" y="0" width="1" height="240" fill="#7c7c7c"/><rect x="891.5" y="0" width="1" height="240" fill="#7c7c7c"/><path d="M0.5,56.9L1.0,57.1L1.5,57.0L2.0,57.0L2.5,55.4L3.0,56.7L3.5,56.7L4.0,56.7L4.5,54.9L5.0,57.2L5.5,56.8L6.0,56.8L6.5,56.8L7.0,56.9L7.5,52.3L8.0,25.8L8.5,9.9L9.0,9.8L9.5,9.5L10.0,9.5L10.5,9.5L11.0,9.5L11.5,9.5L12.0,9.5L12.5,9.9L13.0,9.9L13.5,9.9L14.0,10.0L14.5,7.7L15.0,10.1L15.5,10.1L16.0,10.2L16.5,10.2L17.0,10.0L17.5,9.8L18.0,9.5L18.5,9.8L19.0,9.7L19.5,9.8L20.0,9.8L20.5,9.8L21.0,8.6L21.5,9.9L22.0,9.8L22.5,9.6L23.0,9.6L23.5,9.6L24.0,10.1L24.5,10.1L25.0,10.1L25.5,10.1L26.0,18.6L26.5,45.7L27.0,56.8L27.5,57.0L28.0,57.0L28.5,57.0L29.0,57.0L29.5,57.0L30.0,56.9L30.5,57.0L31.0,57.0L31.5,57.0L32.0,57.2L32.5,57.5L33.0,57.5L33.5,57.1L34.0,56.4L34.5,57.1L35.0,56.9L35.5,56.7L36.0,56.9L36.5,54.6L37.0,56.7L37.5,56.7L38.0,56.7L38.5,57.1L39.0,57.1L39.5,57.1L40.0,57.0L40.5,57.0L41.0,56.8L41.5,56.8L42.0,56.8L42.5,56.5L43.0,56.5L43.5,56.5L44.0,57.2L44.5,57.2L45.0,57.1L45.5,57.1L46.0,57.1L46.5,57.1L47.0,57.1L47.5,56.2L48.0,56.9L48.5,56.9L49.0,56.6L49.5,56.6L50.0,56.6L50.5,56.6L51.0,57.0L51.5,57.0L52.0,57.2L52.5,57.4L53.0,56.3L53.5,57.1L54.0,57.1L54.5,57.1L55.0,57.4L55.5,56.6L56.0,56.5L56.5,56.5L57.0,56.5L57.5,56.5L58.0,57.0L58.5,57.0L59.0,57.2L59.5,57.2L60.0,56.7L60.5,56.9L61.0,56.9L61.5,56.8L62.0,55.8L62.5,56.8L63.0,57.3L63.5,57.3L64.0,57.3L64.5,57.3L65.0,57.3L65.5,57.1L66.0,56.3L66.5,56.7L67.0,56.7L67.5,55.6L68.0,56.9L68.5,57.3L69.0,56.0L69.5,57.0L70.0,56.5L70.5,56.1L71.0,54.7L71.5,56.5L72.0,57.1L72.5,57.1L73.0,57.1L73.5,56.8L74.0,56.8L74.5,56.8L75.0,57.0L75.5,57.2L76.0,57.2L76.5,57.0L77.0,56.9L77.5,56.9L78.0,56.9L78.5,56.4L79.0,56.4L79.5,56.4L80.0,56.9L80.5,57.0L81.0,55.3L81.5,57.0L82.0,57.0L82.5,56.9L83.0,56.9L83.5,56.9L84.0,56.9L84.5,56.9L85.0,56.9L85.5,56.8L86.0,56.8L86.5,56.8L87.0,56.8L87.5,56.7L88.0,57.1L88.5,57.1L89.0,57.3L89.5,57.2L90.0,57.2L90.5,56.4L91.0,56.4L91.5,56.4L92.0,55.2L92.5,56.9L93.0,56.9L93.5,55.7L94.0,56.9L94.5,57.2L95.0,57.1L95.5,57.1L96.0,57.1L96.5,57.3L97.0,57.0L97.5,57.0L98.0,57.0L98.5,55.5L99.0,57.0L99.5,56.8L100.0,56.8L100.5,56.8L101.0,57.3L101.5,57.3L102.0,57.3L102.5,57.3L103.0,57.3L103.5,57.3L104.0,57.3L104.5,56.9L105.0,56.9L105.5,56.7L106.0,56.8L106.5,56.8L107.0,54.9L107.5,56.3L108.0,56.8L108.5,56.8L109.0,54.0L109.5,57.3L110.0,57.0L110.5,57.0L111.0,57.0L111.5,55.1L112.0,57.0L112.5,57.0L113.0,57.0L113.5,57.0L114.0,56.1L114.5,57.0L115.0,57.0L115.5,57.3L116.0,57.5L116.5,56.8L117.0,56.8L117.5,56.8L118.0,53.8L118.5,56.7L119.0,57.1L119.5,57.1L120.0,55.9L120.5,57.2L121.0,56.9L121.5,56.8L122.0,56.8L122.5,56.8L123.0,57.1L123.5,57.0L124.0,57.0L124.5,56.3L125.0,56.3L125.5,56.3L126.0,56.3L126.5,57.0L127.0,57.0L127.5,56.9L128.0,56.8L128.5,56.8L129.0,56.8L129.5,56.6L130.0,56.6L130.5,56.6L131.0,56.6L131.5,56.6L132.0,57.0L132.5,57.0L133.0,57.0L133.5,55.8L134.0,56.6L134.5,56.6L135.0,56.6L135.5,56.7L136.0,56.8L136.5,56.8L137.0,57.0L137.5,57.0L138.0,57.0L138.5,56.4L139.0,56.4L139.5,54.5L140.0,56.1L140.5,56.1L141.0,56.1L141.5,56.4L142.0,57.2L142.5,57.2L143.0,56.9L143.5,56.9L144.0,56.5L144.5,56.5L145.0,56.5L145.5,57.0L146.0,57.0L146.5,57.0L147.0,57.1L147.5,57.1L148.0,57.0L148.5,57.0L149.0,57.0L149.5,57.1L150.0,56.9L150.5,57.0L151.0,57.0L151.5,56.8L152.0,56.8L152.5,56.8L153.0,56.8L153.5,56.6L154.0,56.6L154.5,53.8L155.0,56.6L155.5,56.6L156.0,57.4L156.5,56.9L157.0,56.9L157.5,56.9L158.0,56.9L158.5,56.9L159.0,56.6L159.5,56.6L160.0,56.6L160.5,56.6L161.0,56.8L161.5,52.0L162.0,56.8L162.5,56.8L163.0,57.0L163.5,56.9L164.0,56.9L164.5,56.9L165.0,56.6L165.5,56.6L166.0,56.6L166.5,55.8L167.0,56.3L167.5,57.1L168.0,57.1L168.5,57.1L169.0,56.7L169.5,56.0L170.0,56.9L170.5,57.0L171.0,56.6L171.5,56.6L172.0,56.6L172.5,56.6L173.0,56.7L173.5,56.9L174.0,56.9L174.5,56.9L175.0,56.9L175.5,56.9L176.0,56.9L176.5,56.9L177.0,56.9L177.5,57.0L178.0,57.2L178.5,56.9L179.0,56.7L179.5,56.9L180.0,57.1L180.5,57.1L181.0,57.1L181.5,57.1L182.0,57.1L182.5,57.0L183.0,55.6L183.5,57.0L184.0,57.3L184.5,57.3L185.0,57.3L185.5,57.0L186.0,57.0L186.5,53.9L187.0,57.0L187.5,57.1L188.0,57.2L188.5,57.2L189.0,56.6L189.5,56.6L190.0,56.6L190.5,56.6L191.0,57.1L191.5,57.1L192.0,57.1L192.5,57.0L193.0,56.3L193.5,56.3L194.0,56.3L194.5,56.9L195.0,52.0L195.5,56.0L196.0,57.0L196.5,56.8L197.0,56.8L197.5,56.8L198.0,56.8L198.5,57.0L199.0,57.0L199.5,57.0L200.0,57.0L200.5,57.0L201.0,57.0L201.5,57.2L202.0,57.2L202.5,57.4L203.0,57.4L203.5,57.3L204.0,57.3L204.5,57.0L205.0,57.0L205.5,57.0L206.0,57.0L206.5,57.0L207.0,57.0L207.5,57.2L208.0,56.7L208.5,56.7L209.0,56.7L209.5,56.8L210.0,56.9L210.5,56.7L211.0,56.7L211.5,56.7L212.0,57.3L212.5,57.0L213.0,56.8L213.5,56.8L214.0,56.8L214.5,56.8L215.0,56.5L215.5,56.5L216.0,56.5L216.5,56.5L217.0,56.5L217.5,57.2L218.0,57.1L218.5,56.9L219.0,56.8L219.5,56.8L220.0,56.8L220.5,56.9L221.0,57.3L221.5,56.7L222.0,56.7L222.5,56.7L223.0,56.7L223.5,56.8L224.0,56.5L224.5,57.0L225.0,57.0L225.5,57.3L226.0,57.1L226.5,57.1L227.0,57.1L227.5,56.7L228.0,56.7L228.5,56.7L229.0,56.9L229.5,56.9L230.0,56.9L230.5,56.4L231.0,56.4L231.5,56.4L232.0,57.2L232.5,57.2L233.0,54.7L233.5,56.8L234.0,56.8L234.5,56.8L235.0,57.3L235.5,57.1L236.0,57.1L236.5,57.1L237.0,57.1L237.5,57.1L238.0,56.8L238.5,56.8L239.0,56.8L239.5,56.8L240.0,57.2L240.5,57.2L241.0,57.2L241.5,57.2L242.0,57.2L242.5,57.2L243.0,57.3L243.5,57.2L244.0,57.1L244.5,56.4L245.0,56.4L245.5,56.4L246.0,57.2L246.5,57.2L247.0,57.1L247.5,57.1L248.0,56.7L248.5,55.6L249.0,56.7L249.5,57.2L250.0,57.2L250.5,56.7L251.0,56.7L251.5,56.7L252.0,56.7L252.5,57.3L253.0,57.0L253.5,55.3L254.0,57.0L254.5,57.0L255.0,57.2L255.5,57.2L256.0,57.2L256.5,57.1L257.0,56.2L257.5,54.4L258.0,57.2L258.5,57.2L259.0,57.2L259.5,57.2L260.0,56.9L260.5,56.9L261.0,56.9L261.5,54.8L262.0,56.7L262.5,56.7L263.0,56.8L263.5,56.8L264.0,56.9L264.5,56.9L265.0,56.9L265.5,56.9L266.0,57.3L266.5,57.3L267.0,57.4L267.5,57.1L268.0,57.1L268.5,57.1L269.0,57.1L269.5,57.1L270.0,57.1L270.5,57.1L271.0,57.1L271.5,56.7L272.0,56.7L272.5,56.7L273.0,57.3L273.5,56.7L274.0,56.7L274.5,53.9L275.0,56.7L275.5,57.1L276.0,57.1L276.5,57.0L277.0,57.0L277.5,56.8L278.0,57.0L278.5,57.1L279.0,57.1L279.5,57.1L280.0,57.4L280.5,56.8L281.0,56.8L281.5,56.8L282.0,57.2L282.5,57.2L283.0,57.2L283.5,57.2L284.0,57.0L284.5,57.0L285.0,57.0L285.5,57.4L286.0,56.8L286.5,56.8L287.0,56.8L287.5,56.9L288.0,56.9L288.5,56.9L289.0,56.9L289.5,56.8L290.0,56.1L290.5,56.5L291.0,56.8L291.5,56.8L292.0,57.4L292.5,56.9L293.0,56.9L293.5,56.9L294.0,56.9L294.5,57.2L295.0,57.3L295.5,57.2L296.0,57.2L296.5,57.2L297.0,57.2L297.5,57.4L298.0,56.8L298.5,56.8L299.0,56.3L299.5,56.3L300.0,56.3L300.5,56.3L301.0,57.3L301.5,57.3L302.0,56.9L302.5,56.9L303.0,56.4L303.5,56.9L304.0,57.2L304.5,57.2L305.0,56.8L305.5,56.8L306.0,56.8L306.5,56.9L307.0,56.8L307.5,57.2L308.0,57.2L308.5,57.1L309.0,57.1L309.5,57.1L310.0,56.9L310.5,57.2L311.0,57.2L311.5,57.2L312.0,56.9L312.5,56.9L313.0,56.9L313.5,57.1L314.0,57.1L314.5,57.1L315.0,56.9L315.5,56.9L316.0,56.9L316.5,56.9L317.0,54.8L317.5,57.1L318.0,57.1L318.5,57.3L319.0,57.3L319.5,56.9L320.0,54.1L320.5,56.7L321.0,56.7L321.5,56.7L322.0,56.7L322.5,56.9L323.0,54.7L323.5,56.9L324.0,56.9L324.5,56.8L325.0,56.8L325.5,56.8L326.0,56.8L326.5,57.3L327.0,57.4L327.5,57.0L328.0,56.9L328.5,56.9L329.0,56.9L329.5,56.9L330.0,57.3L330.5,57.1L331.0,57.1L331.5,57.1L332.0,57.1L332.5,57.1L333.0,57.1L333.5,56.5L334.0,56.5L334.5,55.4L335.0,56.8L335.5,56.8L336.0,57.0L336.5,57.3L337.0,57.4L337.5,56.9L338.0,56.9L338.5,56.9L339.0,56.9L339.5,54.7L340.0,57.5L340.5,56.7L341.0,56.7L341.5,56.7L342.0,56.8L342.5,56.7L343.0,56.7L343.5,56.7L344.0,57.2L344.5,57.2L345.0,56.7L345.5,56.7L346.0,56.7L346.5,56.9L347.0,56.9L347.5,57.2L348.0,56.3L348.5,56.7L349.0,56.7L349.5,56.8L350.0,56.3L350.5,57.2L351.0,57.2L351.5,57.1L352.0,57.1L352.5,54.9L353.0,56.9L353.5,56.9L354.0,56.9L354.5,57.0L355.0,56.8L355.5,56.8L356.0,56.8L356.5,56.8L357.0,57.2L357.5,57.2L358.0,57.2L358.5,54.5L359.0,56.7L359.5,56.7L360.0,56.7L360.5,57.5L361.0,57.3L361.5,56.9L362.0,56.7L362.5,56.7L363.0,55.0L363.5,56.7L364.0,56.7L364.5,56.4L365.0,57.0L365.5,57.0L366.0,56.1L366.5,56.6L367.0,56.6L367.5,56.6L368.0,56.6L368.5,56.8L369.0,56.4L369.5,56.4L370.0,56.4L370.5,57.1L371.0,56.7L371.5,56.7L372.0,56.7L372.5,56.5L373.0,56.5L373.5,56.5L374.0,56.5L374.5,57.2L375.0,57.5L375.5,57.4L376.0,57.2L376.5,56.6L377.0,56.6L377.5,56.6L378.0,57.2L378.5,56.7L379.0,56.7L379.5,55.1L380.0,57.0L380.5,57.1L381.0,57.1L381.5,57.1L382.0,56.6L382.5,55.1L383.0,56.6L383.5,54.7L384.0,56.8L384.5,56.8L385.0,57.0L385.5,56.7L386.0,56.7L386.5,56.7L387.0,56.9L387.5,56.8L388.0,54.7L388.5,56.8L389.0,56.8L389.5,56.7L390.0,56.7L390.5,56.7L391.0,55.0L391.5,57.1L392.0,57.2L392.5,57.1L393.0,57.1L393.5,57.1L394.0,56.7L394.5,56.7L395.0,56.7L395.5,56.7L396.0,56.8L396.5,56.8L397.0,56.9L397.5,56.6L398.0,56.6L398.5,56.6L399.0,56.6L399.5,57.5L400.0,57.1L400.5,57.0L401.0,57.0L401.5,57.0L402.0,57.0L402.5,56.7L403.0,56.7L403.5,56.7L404.0,55.3L404.5,57.2L405.0,57.1L405.5,57.1L406.0,55.4L406.5,57.2L407.0,57.2L407.5,57.2L408.0,57.3L408.5,57.3L409.0,57.1L409.5,57.1L410.0,56.5L410.5,56.5L411.0,56.5L411.5,57.2L412.0,56.2L412.5,57.2L413.0,57.1L413.5,56.9L414.0,56.9L414.5,56.6L415.0,56.6L415.5,56.6L416.0,56.9L416.5,56.9L417.0,56.9L417.5,56.4L418.0,57.4L418.5,57.4L419.0,57.3L419.5,57.0L420.0,57.0L420.5,56.9L421.0,56.9L421.5,56.9L422.0,56.9L422.5,57.2L423.0,57.0L423.5,55.8L424.0,57.0L424.5,56.1L425.0,57.1L425.5,57.1L426.0,57.2L426.5,57.2L427.0,56.6L427.5,56.9L428.0,56.9L428.5,56.9L429.0,57.2L429.5,57.0L430.0,57.0L430.5,57.0L431.0,57.1L431.5,56.8L432.0,56.8L432.5,54.2L433.0,57.0L433.5,57.0L434.0,57.0L434.5,57.0L435.0,57.0L435.5,57.0L436.0,57.0L436.5,57.3L437.0,57.4L437.5,57.2L438.0,57.1L438.5,57.0L439.0,57.0L439.5,57.0L440.0,57.0L440.5,57.3L441.0,57.1L441.5,56.7L442.0,56.7L442.5,56.7L443.0,57.4L443.5,56.6L444.0,56.6L444.5,56.6L445.0,57.3L445.5,57.3L446.0,57.3L446.5,56.6L447.0,56.6L447.5,56.6L448.0,56.9L448.5,57.1L449.0,57.1L449.5,56.9L450.0,56.9L450.5,56.9L451.0,57.0L451.5,56.6L452.0,56.2L452.5,56.7L453.0,56.7L453.5,56.7L454.0,56.7L454.5,56.5L455.0,57.3L455.5,57.4L456.0,57.0L456.5,57.0L457.0,56.8L457.5,56.8L458.0,56.8L458.5,57.4L459.0,57.4L459.5,57.2L460.0,57.2L460.5,56.7L461.0,56.7L461.5,56.7L462.0,56.7L462.5,56.9L463.0,57.1L463.5,57.1L464.0,57.1L464.5,53.8L465.0,56.4L465.5,56.4L466.0,56.4L466.5,56.4L467.0,57.4L467.5,57.5L468.0,57.5L468.5,57.2L469.0,57.2L469.5,57.2L470.0,57.2L470.5,57.4L471.0,57.0L471.5,57.0L472.0,57.0L472.5,57.0L473.0,56.7L473.5,56.7L474.0,56.7L474.5,57.0L475.0,57.1L475.5,57.1L476.0,56.0L476.5,56.8L477.0,56.8L477.5,56.8L478.0,56.3L478.5,56.3L479.0,56.3L479.5,56.8L480.0,56.8L480.5,56.8L481.0,56.8L481.5,56.9L482.0,56.8L482.5,56.8L483.0,56.8L483.5,56.8L484.0,56.8L484.5,56.8L485.0,57.0L485.5,57.0L486.0,57.0L486.5,57.1L487.0,57.0L487.5,57.0L488.0,57.0L488.5,57.0L489.0,57.2L489.5,56.8L490.0,56.8L490.5,56.8L491.0,56.8L491.5,57.0L492.0,57.0L492.5,57.0L493.0,56.8L493.5,56.8L494.0,56.8L494.5,56.8L495.0,56.4L495.5,56.4L496.0,56.4L496.5,56.9L497.0,56.9L497.5,56.9L498.0,56.9L498.5,57.3L499.0,57.2L499.5,56.7L500.0,56.3L500.5,56.7L501.0,57.3L501.5,57.3L502.0,57.2L502.5,57.2L503.0,56.4L503.5,55.9L504.0,56.4L504.5,56.4L505.0,56.7L505.5,56.8L506.0,56.3L506.5,56.8L507.0,56.8L507.5,57.0L508.0,57.0L508.5,57.1L509.0,55.1L509.5,57.0L510.0,57.0L510.5,56.9L511.0,56.9L511.5,56.9L512.0,52.5L512.5,57.1L513.0,57.1L513.5,57.1L514.0,57.1L514.5,56.8L515.0,56.7L515.5,56.7L516.0,56.7L516.5,56.7L517.0,55.9L517.5,56.0L518.0,57.4L518.5,55.1L519.0,55.6L519.5,57.0L520.0,57.0L520.5,57.0L521.0,56.6L521.5,56.5L522.0,56.6L522.5,56.8L523.0,56.5L523.5,56.5L524.0,56.5L524.5,56.7L525.0,56.7L525.5,56.8L526.0,56.1L526.5,56.4L527.0,56.4L527.5,55.9L528.0,55.9L528.5,56.9L529.0,57.3L529.5,56.6L530.0,56.6L530.5,56.6L531.0,56.5L531.5,56.5L532.0,56.5L532.5,56.8L533.0,56.8L533.5,56.7L534.0,56.7L534.5,54.7L535.0,56.8L535.5,56.8L536.0,56.8L536.5,57.0L537.0,57.0L537.5,57.3L538.0,57.3L538.5,57.1L539.0,57.1L539.5,57.1L540.0,57.1L540.5,57.3L541.0,56.9L541.5,56.9L542.0,56.9L542.5,56.8L543.0,56.8L543.5,56.8L544.0,56.8L544.5,56.8L545.0,56.8L545.5,56.8L546.0,56.8L546.5,56.1L547.0,56.9L547.5,56.9L548.0,56.9L548.5,56.9L549.0,57.2L549.5,56.9L550.0,56.9L550.5,56.9L551.0,57.3L551.5,56.7L552.0,56.9L552.5,56.9L553.0,55.8L553.5,56.8L554.0,55.0L554.5,56.5L555.0,55.4L555.5,56.5L556.0,56.7L556.5,56.7L557.0,56.7L557.5,57.4L558.0,57.1L558.5,57.0L559.0,56.9L559.5,56.9L560.0,56.9L560.5,56.9L561.0,56.9L561.5,54.4L562.0,56.5L562.5,56.5L563.0,56.5L563.5,55.9L564.0,56.6L564.5,57.0L565.0,56.6L565.5,56.7L566.0,56.7L566.5,56.7L567.0,57.0L567.5,57.0L568.0,56.6L568.5,56.6L569.0,56.6L569.5,56.6L570.0,56.6L570.5,56.6L571.0,56.6L571.5,56.6L572.0,57.1L572.5,56.7L573.0,56.7L573.5,56.7L574.0,56.9L574.5,56.9L575.0,56.9L575.5,56.9L576.0,54.4L576.5,57.1L577.0,56.7L577.5,56.7L578.0,56.7L578.5,56.7L579.0,56.8L579.5,56.8L580.0,56.8L580.5,56.8L581.0,56.8L581.5,56.8L582.0,57.2L582.5,56.6L583.0,56.6L583.5,56.6L584.0,56.6L584.5,57.0L585.0,56.8L585.5,56.7L586.0,56.7L586.5,56.7L587.0,56.6L587.5,56.5L588.0,56.5L588.5,53.8L589.0,56.6L589.5,56.6L590.0,57.0L590.5,56.0L591.0,56.0L591.5,56.0L592.0,56.0L592.5,57.0L593.0,57.0L593.5,57.1L594.0,56.8L594.5,56.8L595.0,56.8L595.5,57.0L596.0,57.3L596.5,57.3L597.0,57.3L597.5,56.8L598.0,56.8L598.5,56.8L599.0,56.8L599.5,56.8L600.0,57.2L600.5,56.8L601.0,56.2L601.5,56.8L602.0,57.0L602.5,57.4L603.0,57.4L603.5,57.4L604.0,56.9L604.5,56.9L605.0,56.9L605.5,57.1L606.0,57.4L606.5,57.4L607.0,56.9L607.5,56.9L608.0,56.9L608.5,56.7L609.0,56.7L609.5,56.7L610.0,57.2L610.5,57.2L611.0,57.4L611.5,57.2L612.0,57.0L612.5,57.0L613.0,57.0L613.5,57.0L614.0,54.8L614.5,57.0L615.0,57.0L615.5,56.8L616.0,56.8L616.5,56.8L617.0,56.8L617.5,56.9L618.0,56.9L618.5,56.8L619.0,56.8L619.5,56.8L620.0,56.9L620.5,56.8L621.0,56.8L621.5,56.8L622.0,57.3L622.5,57.1L623.0,56.7L623.5,56.7L624.0,56.7L624.5,57.1L625.0,57.1L625.5,57.2L626.0,57.1L626.5,57.1L627.0,57.1L627.5,56.4L628.0,56.4L628.5,56.3L629.0,56.3L629.5,56.3L630.0,56.3L630.5,57.1L631.0,57.1L631.5,57.0L632.0,57.0L632.5,57.0L633.0,56.9L633.5,56.9L634.0,56.9L634.5,57.0L635.0,53.9L635.5,56.9L636.0,54.0L636.5,56.9L637.0,56.9L637.5,56.9L638.0,55.0L638.5,56.9L639.0,56.5L639.5,56.5L640.0,56.5L640.5,56.7L641.0,54.7L641.5,56.7L642.0,57.0L642.5,57.0L643.0,57.0L643.5,56.5L644.0,56.5L644.5,56.5L645.0,56.9L645.5,56.9L646.0,56.9L646.5,55.7L647.0,56.9L647.5,56.9L648.0,53.1L648.5,57.2L649.0,57.2L649.5,56.7L650.0,56.7L650.5,56.7L651.0,57.0L651.5,57.0L652.0,57.0L652.5,57.0L653.0,57.0L653.5,57.4L654.0,57.4L654.5,57.3L655.0,57.3L655.5,57.3L656.0,57.3L656.5,57.1L657.0,57.1L657.5,57.1L658.0,57.3L658.5,57.2L659.0,56.9L659.5,56.9L660.0,56.9L660.5,56.9L661.0,57.2L661.5,56.5L662.0,56.5L662.5,56.5L663.0,57.0L663.5,57.0L664.0,54.6L664.5,55.3L665.0,56.7L665.5,56.7L666.0,57.1L666.5,57.1L667.0,56.7L667.5,56.7L668.0,50.9L668.5,24.7L669.0,10.6L669.5,10.0L670.0,10.0L670.5,10.0L671.0,10.0L671.5,10.1L672.0,8.7L672.5,10.0L673.0,10.0L673.5,9.9L674.0,9.9L674.5,9.9L675.0,9.6L675.5,9.6L676.0,9.6L676.5,9.6L677.0,10.2L677.5,8.7L678.0,10.3L678.5,10.3L679.0,9.8L679.5,9.8L680.0,9.8L680.5,9.7L681.0,8.6L681.5,7.7L682.0,9.4L682.5,10.1L683.0,9.9L683.5,9.9L684.0,9.9L684.5,9.9L685.0,10.5L685.5,10.5L686.0,10.5L686.5,20.3L687.0,46.4L687.5,56.9L688.0,56.9L688.5,57.0L689.0,57.0L689.5,56.9L690.0,56.9L690.5,56.9L691.0,56.9L691.5,57.0L692.0,57.0L692.5,57.0L693.0,57.3L693.5,56.3L694.0,56.3L694.5,55.4L695.0,56.3L695.5,56.8L696.0,56.8L696.5,57.4L697.0,57.2L697.5,57.0L698.0,56.5L698.5,56.5L699.0,56.5L699.5,56.5L700.0,57.1L700.5,57.2L701.0,57.2L701.5,57.2L702.0,57.2L702.5,56.9L703.0,57.1L703.5,55.7L704.0,54.8L704.5,57.1L705.0,57.2L705.5,57.2L706.0,57.2L706.5,57.3L707.0,57.1L707.5,57.1L708.0,57.0L708.5,57.0L709.0,57.0L709.5,57.3L710.0,57.3L710.5,57.3L711.0,56.6L711.5,56.6L712.0,56.6L712.5,56.6L713.0,56.8L713.5,55.9L714.0,56.8L714.5,56.8L715.0,56.9L715.5,56.8L716.0,56.7L716.5,56.7L717.0,56.7L717.5,56.8L718.0,56.8L718.5,57.1L719.0,40.7L719.5,14.2L720.0,10.1L720.5,10.1L721.0,9.3L721.5,10.0L722.0,9.9L722.5,9.9L723.0,9.7L723.5,9.7L724.0,9.7L724.5,9.7L725.0,9.8L725.5,10.0L726.0,10.0L726.5,10.0L727.0,9.4L727.5,10.1L728.0,7.3L728.5,10.1L729.0,10.1L729.5,10.1L730.0,9.9L730.5,7.1L731.0,9.4L731.5,9.4L732.0,9.4L732.5,9.4L733.0,10.0L733.5,10.0L734.0,10.0L734.5,10.0L735.0,10.0L735.5,10.0L736.0,7.0L736.5,10.2L737.0,10.5L737.5,30.5L738.0,56.5L738.5,56.5L739.0,56.5L739.5,56.9L740.0,56.9L740.5,57.0L741.0,57.0L741.5,57.0L742.0,57.0L742.5,57.2L743.0,57.2L743.5,57.2L744.0,57.2L744.5,57.3L745.0,57.3L745.5,57.3L746.0,56.0L746.5,57.3L747.0,57.5L747.5,57.3L748.0,57.3L748.5,57.3L749.0,57.3L749.5,57.2L750.0,57.0L750.5,56.7L751.0,56.7L751.5,56.5L752.0,56.4L752.5,56.5L753.0,33.3L753.5,10.3L754.0,10.0L754.5,9.9L755.0,9.8L755.5,8.3L756.0,9.8L756.5,9.9L757.0,10.1L757.5,10.2L758.0,9.9L758.5,9.9L759.0,9.9L759.5,8.4L760.0,9.7L760.5,9.7L761.0,9.7L761.5,9.7L762.0,9.7L762.5,9.7L763.0,9.7L763.5,10.1L764.0,10.0L764.5,8.9L765.0,9.8L765.5,9.3L766.0,9.8L766.5,7.3L767.0,9.8L767.5,9.9L768.0,9.9L768.5,9.9L769.0,10.4L769.5,10.4L770.0,10.4L770.5,10.5L771.0,11.2L771.5,37.7L772.0,56.5L772.5,56.8L773.0,57.2L773.5,57.1L774.0,57.1L774.5,57.1L775.0,56.9L775.5,56.9L776.0,56.9L776.5,56.9L777.0,56.2L777.5,56.2L778.0,55.9L778.5,53.1L779.0,57.2L779.5,57.3L780.0,57.3L780.5,57.2L781.0,57.0L781.5,57.0L782.0,57.0L782.5,56.7L783.0,56.7L783.5,56.7L784.0,57.3L784.5,56.9L785.0,56.8L785.5,56.8L786.0,56.8L786.5,53.7L787.0,26.7L787.5,10.2L788.0,10.0L788.5,10.0L789.0,9.8L789.5,9.8L790.0,9.8L790.5,9.8L791.0,9.9L791.5,9.9L792.0,9.9L792.5,9.8L793.0,9.8L793.5,9.8L794.0,9.8L794.5,9.8L795.0,9.8L795.5,9.5L796.0,9.8L796.5,10.0L797.0,9.9L797.5,9.9L798.0,9.7L798.5,9.7L799.0,9.7L799.5,9.7L800.0,9.8L800.5,9.1L801.0,9.1L801.5,9.1L802.0,9.1L802.5,10.0L803.0,9.6L803.5,9.6L804.0,9.2L804.5,10.0L805.0,9.8L805.5,9.8L806.0,9.8L806.5,9.8L807.0,9.9L807.5,9.9L808.0,9.7L808.5,9.7L809.0,9.7L809.5,9.7L810.0,10.0L810.5,9.6L811.0,9.5L811.5,9.5L812.0,9.5L812.5,9.5L813.0,9.9L813.5,9.9L814.0,10.0L814.5,10.0L815.0,9.3L815.5,9.3L816.0,7.0L816.5,9.3L817.0,9.3L817.5,9.3L818.0,7.9L818.5,8.6L819.0,9.2L819.5,9.7L820.0,9.5L820.5,9.5L821.0,9.5L821.5,9.5L822.0,9.6L822.5,9.6L823.0,9.6L823.5,10.1L824.0,10.1L824.5,10.1L825.0,7.9L825.5,9.9L826.0,9.9L826.5,9.9L827.0,9.7L827.5,9.7L828.0,9.7L828.5,9.7L829.0,10.1L829.5,10.1L830.0,9.2L830.5,10.3L831.0,10.3L831.5,9.8L832.0,9.8L832.5,9.8L833.0,9.8L833.5,9.9L834.0,8.9L834.5,9.1L835.0,9.1L835.5,9.1L836.0,9.1L836.5,10.1L837.0,9.6L837.5,9.5L838.0,9.5L838.5,9.5L839.0,9.5L839.5,10.1L840.0,10.1L840.5,10.1L841.0,9.6L841.5,9.6L842.0,9.5L842.5,9.5L843.0,9.5L843.5,9.9L844.0,9.4L844.5,9.4L845.0,9.4L845.5,9.4L846.0,9.7L846.5,10.1L847.0,9.9L847.5,9.9L848.0,9.9L848.5,9.9L849.0,10.0L849.5,10.0L850.0,10.0L850.5,10.0L851.0,9.8L851.5,9.8L852.0,9.8L852.5,10.0L853.0,10.1L853.5,9.7L854.0,9.5L854.5,9.5L855.0,9.5L855.5,9.5L856.0,10.1L856.5,10.1L857.0,10.5L857.5,10.4L858.0,10.4L858.5,10.3L859.0,9.9L859.5,9.9L860.0,9.9L860.5,9.9L861.0,9.1L861.5,9.1L862.0,9.1L862.5,9.1L863.0,9.7L863.5,9.7L864.0,9.7L864.5,8.7L865.0,9.3L865.5,10.0L866.0,8.5L866.5,9.9L867.0,9.9L867.5,9.9L868.0,7.2L868.5,9.9L869.0,9.7L869.5,9.7L870.0,9.7L870.5,8.7L871.0,9.9L871.5,9.8L872.0,9.8L872.5,9.8L873.0,9.8L873.5,9.8L874.0,10.4L874.5,9.9L875.0,9.9L875.5,9.9L876.0,10.0L876.5,10.0L877.0,9.9L877.5,9.9L878.0,9.9L878.5,9.9L879.0,9.9L879.5,9.9L880.0,9.9L880.5,10.3L881.0,9.5L881.5,9.5L882.0,9.5L882.5,9.5L883.0,9.7L883.5,9.7L884.0,9.7L884.5,9.8L885.0,9.8L885.5,9.8L886.0,9.8L886.5,9.9L887.0,9.9L887.5,8.2L888.0,9.9L888.5,9.9L889.0,9.9L889.5,10.0L890.0,7.9L890.5,9.8L891.0,7.4L891.5,9.8L892.0,9.8L892.5,10.0L893.0,10.0L893.5,9.9L894.0,9.9L894.5,9.9L894.5,14.8L894.0,15.1L893.5,15.5L893.0,14.8L892.5,14.7L892.0,14.7L891.5,14.8L891.0,14.9L890.5,14.9L890.0,15.2L889.5,15.2L889.0,15.2L888.5,14.8L888.0,15.0L887.5,14.9L887.0,14.9L886.5,14.9L886.0,14.5L885.5,14.8L885.0,15.1L884.5,15.1L884.0,15.1L883.5,15.0L883.0,19.2L882.5,14.7L882.0,14.9L881.5,14.9L881.0,14.9L880.5,14.9L880.0,14.9L879.5,15.0L879.0,15.1L878.5,15.1L878.0,15.1L877.5,14.9L877.0,15.1L876.5,15.5L876.0,15.1L875.5,15.3L875.0,15.4L874.5,15.4L874.0,15.4L873.5,15.1L873.0,15.2L872.5,15.2L872.0,15.7L871.5,15.2L871.0,15.0L870.5,15.0L870.0,15.2L869.5,15.7L869.0,15.2L868.5,15.3L868.0,15.2L867.5,15.2L867.0,15.2L866.5,14.8L866.0,14.8L865.5,15.3L865.0,15.3L864.5,15.3L864.0,15.3L863.5,14.9L863.0,14.5L862.5,17.3L862.0,15.0L861.5,15.0L861.0,15.2L860.5,15.2L860.0,15.2L859.5,15.0L859.0,15.0L858.5,15.0L858.0,15.1L857.5,15.1L857.0,15.2L856.5,15.2L856.0,15.2L855.5,15.2L855.0,15.5L854.5,15.5L854.0,15.5L853.5,16.0L853.0,15.5L852.5,15.5L852.0,14.8L851.5,15.2L851.0,15.2L850.5,15.2L850.0,15.2L849.5,14.9L849.0,14.9L848.5,14.9L848.0,14.5L847.5,14.9L847.0,15.0L846.5,15.0L846.0,15.0L845.5,15.0L845.0,15.3L844.5,15.3L844.0,15.3L843.5,14.9L843.0,15.3L842.5,15.3L842.0,15.3L841.5,15.3L841.0,14.7L840.5,14.7L840.0,14.8L839.5,14.8L839.0,14.8L838.5,14.8L838.0,16.5L837.5,14.8L837.0,14.7L836.5,15.2L836.0,15.2L835.5,15.2L835.0,15.0L834.5,15.3L834.0,15.3L833.5,15.3L833.0,15.1L832.5,14.8L832.0,14.7L831.5,14.9L831.0,15.2L830.5,15.2L830.0,15.2L829.5,15.2L829.0,15.0L828.5,15.0L828.0,15.0L827.5,15.0L827.0,14.9L826.5,14.9L826.0,14.9L825.5,14.9L825.0,14.7L824.5,15.2L824.0,15.2L823.5,15.2L823.0,15.2L822.5,15.0L822.0,15.0L821.5,15.0L821.0,14.7L820.5,15.1L820.0,15.1L819.5,15.1L819.0,14.9L818.5,14.9L818.0,14.9L817.5,14.7L817.0,14.7L816.5,14.5L816.0,15.1L815.5,15.1L815.0,15.1L814.5,15.1L814.0,14.7L813.5,14.9L813.0,15.1L812.5,15.1L812.0,15.1L811.5,14.3L811.0,14.7L810.5,14.7L810.0,14.7L809.5,14.9L809.0,14.8L808.5,14.8L808.0,14.9L807.5,15.4L807.0,15.4L806.5,15.4L806.0,15.4L805.5,14.9L805.0,15.5L804.5,15.5L804.0,15.5L803.5,15.0L803.0,15.0L802.5,15.0L802.0,14.9L801.5,14.9L801.0,14.9L800.5,14.9L800.0,14.9L799.5,15.5L799.0,14.7L798.5,14.9L798.0,14.9L797.5,14.9L797.0,15.0L796.5,15.0L796.0,15.0L795.5,14.8L795.0,14.8L794.5,15.1L794.0,15.1L793.5,15.1L793.0,15.1L792.5,14.9L792.0,14.8L791.5,14.8L791.0,15.0L790.5,15.0L790.0,17.5L789.5,15.6L789.0,14.8L788.5,30.8L788.0,58.6L787.5,62.1L787.0,62.1L786.5,62.1L786.0,61.8L785.5,61.9L785.0,62.3L784.5,62.3L784.0,62.3L783.5,62.3L783.0,62.0L782.5,62.0L782.0,61.8L781.5,61.8L781.0,61.6L780.5,62.2L780.0,62.3L779.5,62.3L779.0,62.3L778.5,62.3L778.0,61.9L777.5,61.9L777.0,62.2L776.5,62.2L776.0,62.2L775.5,62.2L775.0,61.7L774.5,61.7L774.0,62.3L773.5,62.3L773.0,62.3L772.5,62.3L772.0,62.1L771.5,61.9L771.0,61.4L770.5,61.4L770.0,41.8L769.5,15.3L769.0,15.1L768.5,15.1L768.0,15.1L767.5,15.1L767.0,16.1L766.5,14.7L766.0,14.9L765.5,14.9L765.0,14.9L764.5,16.6L764.0,14.9L763.5,15.1L763.0,15.1L762.5,15.1L762.0,15.1L761.5,15.0L761.0,15.0L760.5,14.6L760.0,14.8L759.5,17.5L759.0,15.3L758.5,17.3L758.0,15.3L757.5,15.3L757.0,15.3L756.5,15.3L756.0,15.2L755.5,15.2L755.0,15.2L754.5,37.4L754.0,61.1L753.5,61.5L753.0,61.7L752.5,61.7L752.0,61.7L751.5,61.7L751.0,62.0L750.5,64.0L750.0,62.1L749.5,62.5L749.0,62.1L748.5,62.1L748.0,62.0L747.5,64.1L747.0,62.0L746.5,62.0L746.0,62.0L745.5,62.0L745.0,62.0L744.5,62.2L744.0,62.2L743.5,62.2L743.0,62.1L742.5,62.1L742.0,62.1L741.5,62.1L741.0,62.3L740.5,62.3L740.0,62.9L739.5,62.2L739.0,62.2L738.5,62.2L738.0,61.6L737.5,61.6L737.0,61.6L736.5,61.4L736.0,34.6L735.5,14.9L735.0,15.0L734.5,15.0L734.0,15.0L733.5,15.0L733.0,15.0L732.5,14.6L732.0,15.1L731.5,15.1L731.0,15.1L730.5,15.1L730.0,15.2L729.5,15.2L729.0,15.2L728.5,15.2L728.0,14.9L727.5,14.9L727.0,14.7L726.5,14.9L726.0,14.9L725.5,14.9L725.0,14.8L724.5,14.8L724.0,14.8L723.5,15.8L723.0,14.9L722.5,15.3L722.0,15.3L721.5,15.3L721.0,18.3L720.5,45.3L720.0,61.9L719.5,62.0L719.0,62.5L718.5,62.1L718.0,62.0L717.5,62.1L717.0,61.8L716.5,61.8L716.0,61.8L715.5,62.2L715.0,62.3L714.5,62.3L714.0,62.3L713.5,61.8L713.0,62.4L712.5,61.8L712.0,62.1L711.5,65.9L711.0,62.1L710.5,62.3L710.0,62.3L709.5,62.4L709.0,62.4L708.5,62.4L708.0,62.0L707.5,62.4L707.0,62.4L706.5,62.4L706.0,61.9L705.5,61.9L705.0,62.1L704.5,62.1L704.0,63.2L703.5,62.1L703.0,62.2L702.5,62.2L702.0,62.2L701.5,62.0L701.0,62.0L700.5,62.0L700.0,62.0L699.5,62.0L699.0,62.0L698.5,61.5L698.0,61.5L697.5,62.7L697.0,62.0L696.5,62.0L696.0,62.3L695.5,61.9L695.0,63.0L694.5,62.3L694.0,62.1L693.5,62.2L693.0,62.3L692.5,62.3L692.0,62.3L691.5,62.3L691.0,61.5L690.5,62.1L690.0,62.1L689.5,62.1L689.0,62.1L688.5,62.0L688.0,62.0L687.5,62.0L687.0,62.2L686.5,62.2L686.0,62.3L685.5,50.5L685.0,24.4L684.5,15.2L684.0,15.2L683.5,15.0L683.0,14.9L682.5,14.9L682.0,15.2L681.5,15.2L681.0,15.2L680.5,15.2L680.0,15.4L679.5,16.5L679.0,15.4L678.5,15.4L678.0,14.7L677.5,15.6L677.0,14.7L676.5,14.7L676.0,14.7L675.5,14.7L675.0,14.7L674.5,14.7L674.0,14.7L673.5,14.6L673.0,14.6L672.5,14.6L672.0,15.2L671.5,15.2L671.0,15.2L670.5,14.7L670.0,28.8L669.5,55.0L669.0,61.4L668.5,61.9L668.0,61.9L667.5,62.3L667.0,62.8L666.5,64.0L666.0,62.8L665.5,62.2L665.0,62.2L664.5,61.9L664.0,61.9L663.5,61.9L663.0,62.4L662.5,62.4L662.0,62.4L661.5,62.4L661.0,62.1L660.5,62.1L660.0,62.1L659.5,62.2L659.0,62.2L658.5,62.2L658.0,64.8L657.5,62.0L657.0,62.4L656.5,62.4L656.0,64.5L655.5,62.4L655.0,62.4L654.5,62.4L654.0,62.4L653.5,62.4L653.0,62.4L652.5,61.9L652.0,61.8L651.5,61.8L651.0,61.8L650.5,61.8L650.0,61.8L649.5,61.8L649.0,62.2L648.5,61.8L648.0,62.1L647.5,62.1L647.0,62.1L646.5,62.1L646.0,62.0L645.5,63.1L645.0,62.0L644.5,62.0L644.0,64.5L643.5,65.1L643.0,62.6L642.5,62.6L642.0,62.8L641.5,61.8L641.0,61.6L640.5,61.8L640.0,61.8L639.5,62.1L639.0,62.1L638.5,62.1L638.0,61.9L637.5,61.9L637.0,61.9L636.5,61.9L636.0,61.8L635.5,61.9L635.0,62.2L634.5,62.2L634.0,62.2L633.5,63.5L633.0,62.1L632.5,62.1L632.0,62.1L631.5,62.1L631.0,62.5L630.5,62.9L630.0,62.9L629.5,62.9L629.0,62.1L628.5,62.3L628.0,62.4L627.5,62.4L627.0,62.4L626.5,62.4L626.0,62.3L625.5,62.0L625.0,62.0L624.5,62.0L624.0,62.0L623.5,62.0L623.0,62.0L622.5,64.1L622.0,64.1L621.5,62.8L621.0,62.8L620.5,61.9L620.0,61.9L619.5,61.9L619.0,61.8L618.5,61.4L618.0,63.3L617.5,61.9L617.0,61.9L616.5,61.9L616.0,62.2L615.5,62.2L615.0,62.2L614.5,62.1L614.0,61.9L613.5,62.2L613.0,61.9L612.5,62.0L612.0,62.0L611.5,62.0L611.0,62.0L610.5,62.0L610.0,62.0L609.5,62.1L609.0,62.1L608.5,62.1L608.0,62.3L607.5,62.3L607.0,62.3L606.5,62.3L606.0,62.3L605.5,62.2L605.0,61.8L604.5,62.5L604.0,62.5L603.5,64.4L603.0,62.5L602.5,62.3L602.0,62.3L601.5,62.4L601.0,62.1L600.5,62.3L600.0,62.5L599.5,62.5L599.0,62.5L598.5,61.6L598.0,62.0L597.5,62.1L597.0,62.1L596.5,62.1L596.0,63.0L595.5,61.8L595.0,61.6L594.5,61.6L594.0,62.1L593.5,62.2L593.0,62.1L592.5,62.1L592.0,62.0L591.5,62.0L591.0,62.0L590.5,61.7L590.0,61.5L589.5,61.5L589.0,61.8L588.5,61.8L588.0,62.9L587.5,62.4L587.0,62.4L586.5,62.4L586.0,61.8L585.5,62.1L585.0,62.1L584.5,62.3L584.0,62.3L583.5,62.3L583.0,62.3L582.5,62.4L582.0,62.4L581.5,65.3L581.0,62.4L580.5,61.9L580.0,61.9L579.5,61.9L579.0,61.9L578.5,62.1L578.0,62.1L577.5,62.1L577.0,62.0L576.5,61.9L576.0,61.8L575.5,61.8L575.0,62.7L574.5,62.4L574.0,62.4L573.5,62.4L573.0,62.1L572.5,62.1L572.0,62.2L571.5,62.2L571.0,62.2L570.5,62.2L570.0,61.8L569.5,61.7L569.0,61.9L568.5,61.9L568.0,62.7L567.5,62.0L567.0,62.3L566.5,62.3L566.0,62.3L565.5,63.7L565.0,62.0L564.5,61.8L564.0,61.9L563.5,62.0L563.0,62.0L562.5,62.0L562.0,62.3L561.5,62.3L561.0,62.7L560.5,62.3L560.0,62.0L559.5,62.0L559.0,62.0L558.5,62.4L558.0,62.4L557.5,62.4L557.0,62.4L556.5,61.9L556.0,61.9L555.5,61.9L555.0,61.9L554.5,61.9L554.0,61.9L553.5,61.9L553.0,62.1L552.5,62.1L552.0,62.3L551.5,62.3L551.0,62.7L550.5,62.7L550.0,62.7L549.5,62.3L549.0,62.3L548.5,62.3L548.0,62.0L547.5,62.0L547.0,61.9L546.5,61.9L546.0,61.9L545.5,61.9L545.0,62.0L544.5,62.0L544.0,62.0L543.5,62.5L543.0,62.5L542.5,62.5L542.0,62.2L541.5,62.2L541.0,61.9L540.5,61.9L540.0,62.0L539.5,62.0L539.0,62.0L538.5,61.8L538.0,62.2L537.5,62.9L537.0,62.4L536.5,62.4L536.0,61.8L535.5,62.1L535.0,62.1L534.5,62.1L534.0,62.1L533.5,62.2L533.0,62.2L532.5,62.4L532.0,62.4L531.5,62.4L531.0,62.4L530.5,62.1L530.0,62.1L529.5,62.1L529.0,62.1L528.5,62.0L528.0,61.9L527.5,61.9L527.0,61.9L526.5,61.9L526.0,61.9L525.5,62.1L525.0,62.1L524.5,62.1L524.0,61.9L523.5,61.9L523.0,61.9L522.5,61.7L522.0,61.7L521.5,61.8L521.0,61.8L520.5,61.8L520.0,62.9L519.5,62.1L519.0,62.1L518.5,62.6L518.0,62.6L517.5,62.6L517.0,64.6L516.5,62.4L516.0,62.4L515.5,62.0L515.0,62.6L514.5,62.6L514.0,62.6L513.5,62.6L513.0,62.2L512.5,62.1L512.0,62.1L511.5,62.1L511.0,62.1L510.5,62.8L510.0,61.8L509.5,61.8L509.0,61.8L508.5,61.8L508.0,61.9L507.5,61.9L507.0,61.9L506.5,61.9L506.0,61.7L505.5,62.4L505.0,66.0L504.5,62.4L504.0,62.4L503.5,62.0L503.0,62.0L502.5,62.0L502.0,62.0L501.5,61.9L501.0,62.1L500.5,62.1L500.0,62.2L499.5,62.3L499.0,62.2L498.5,62.2L498.0,62.2L497.5,62.2L497.0,62.2L496.5,62.2L496.0,62.2L495.5,62.2L495.0,62.6L494.5,62.6L494.0,62.6L493.5,63.9L493.0,62.4L492.5,64.2L492.0,62.6L491.5,62.6L491.0,62.6L490.5,61.7L490.0,61.8L489.5,62.1L489.0,62.1L488.5,62.1L488.0,62.1L487.5,62.3L487.0,62.3L486.5,62.3L486.0,61.7L485.5,62.0L485.0,62.0L484.5,62.0L484.0,63.4L483.5,61.9L483.0,62.1L482.5,62.1L482.0,62.1L481.5,62.0L481.0,62.3L480.5,62.0L480.0,61.7L479.5,63.6L479.0,62.0L478.5,62.0L478.0,62.0L477.5,62.0L477.0,61.9L476.5,61.9L476.0,61.9L475.5,61.9L475.0,61.9L474.5,61.8L474.0,61.8L473.5,61.8L473.0,61.6L472.5,61.6L472.0,61.7L471.5,62.1L471.0,63.9L470.5,62.1L470.0,61.9L469.5,61.7L469.0,64.0L468.5,62.6L468.0,62.6L467.5,61.8L467.0,61.7L466.5,62.1L466.0,62.1L465.5,62.1L465.0,62.1L464.5,62.1L464.0,62.1L463.5,62.0L463.0,61.9L462.5,61.9L462.0,62.3L461.5,62.3L461.0,62.3L460.5,62.0L460.0,62.0L459.5,62.3L459.0,63.7L458.5,62.3L458.0,64.0L457.5,62.1L457.0,62.0L456.5,62.2L456.0,62.2L455.5,62.2L455.0,62.8L454.5,62.2L454.0,62.2L453.5,62.1L453.0,62.1L452.5,61.6L452.0,61.7L451.5,61.9L451.0,61.9L450.5,61.9L450.0,62.1L449.5,62.1L449.0,62.2L448.5,62.2L448.0,62.2L447.5,61.9L447.0,61.9L446.5,62.3L446.0,62.3L445.5,62.3L445.0,62.3L444.5,62.1L444.0,66.4L443.5,61.9L443.0,62.3L442.5,62.3L442.0,62.3L441.5,61.9L441.0,62.3L440.5,62.3L440.0,62.3L439.5,62.3L439.0,61.6L438.5,61.9L438.0,62.1L437.5,64.1L437.0,62.4L436.5,62.4L436.0,62.4L435.5,62.4L435.0,62.4L434.5,62.4L434.0,62.4L433.5,61.8L433.0,61.8L432.5,62.0L432.0,62.0L431.5,62.0L431.0,62.0L430.5,62.5L430.0,62.0L429.5,61.8L429.0,63.6L428.5,62.0L428.0,62.5L427.5,62.5L427.0,62.5L426.5,62.6L426.0,64.0L425.5,62.0L425.0,62.0L424.5,62.3L424.0,63.8L423.5,62.3L423.0,61.9L422.5,62.3L422.0,62.0L421.5,62.0L421.0,62.0L420.5,61.9L420.0,61.8L419.5,61.8L419.0,62.2L418.5,62.2L418.0,62.2L417.5,62.0L417.0,62.0L416.5,62.3L416.0,62.3L415.5,63.6L415.0,62.3L414.5,62.3L414.0,62.3L413.5,65.1L413.0,61.9L412.5,62.7L412.0,62.7L411.5,62.7L411.0,62.5L410.5,62.5L410.0,64.3L409.5,62.0L409.0,62.0L408.5,61.9L408.0,61.9L407.5,61.9L407.0,62.2L406.5,62.2L406.0,62.2L405.5,62.3L405.0,62.3L404.5,62.3L404.0,61.9L403.5,64.7L403.0,65.1L402.5,62.2L402.0,62.2L401.5,62.1L401.0,61.6L400.5,61.7L400.0,61.7L399.5,61.9L399.0,61.9L398.5,61.9L398.0,61.9L397.5,61.7L397.0,61.8L396.5,62.0L396.0,62.0L395.5,62.0L395.0,62.4L394.5,63.4L394.0,62.4L393.5,61.9L393.0,61.9L392.5,61.9L392.0,61.8L391.5,61.8L391.0,61.8L390.5,61.9L390.0,61.9L389.5,62.0L389.0,62.0L388.5,62.1L388.0,62.0L387.5,62.0L387.0,62.0L386.5,62.0L386.0,62.3L385.5,62.3L385.0,62.3L384.5,62.3L384.0,62.5L383.5,62.5L383.0,62.5L382.5,62.7L382.0,62.7L381.5,62.7L381.0,62.7L380.5,62.0L380.0,62.0L379.5,62.0L379.0,62.4L378.5,62.4L378.0,62.4L377.5,62.1L377.0,62.0L376.5,62.0L376.0,62.0L375.5,62.0L375.0,62.1L374.5,62.1L374.0,62.1L373.5,62.1L373.0,62.5L372.5,62.1L372.0,62.1L371.5,62.1L371.0,61.9L370.5,62.0L370.0,62.0L369.5,62.3L369.0,62.3L368.5,62.3L368.0,63.0L367.5,62.5L367.0,62.1L366.5,62.1L366.0,62.1L365.5,61.8L365.0,61.8L364.5,61.8L364.0,61.9L363.5,61.9L363.0,62.2L362.5,64.6L362.0,62.2L361.5,61.9L361.0,62.4L360.5,65.3L360.0,62.4L359.5,62.4L359.0,61.7L358.5,61.9L358.0,62.3L357.5,62.8L357.0,62.3L356.5,62.3L356.0,62.5L355.5,62.0L355.0,62.0L354.5,61.8L354.0,61.8L353.5,61.9L353.0,61.9L352.5,62.0L352.0,62.0L351.5,62.0L351.0,62.4L350.5,62.4L350.0,65.1L349.5,62.4L349.0,62.7L348.5,61.7L348.0,61.7L347.5,61.7L347.0,61.7L346.5,61.4L346.0,61.5L345.5,62.3L345.0,63.8L344.5,62.3L344.0,62.1L343.5,62.1L343.0,64.2L342.5,61.7L342.0,61.9L341.5,62.0L341.0,65.5L340.5,62.5L340.0,62.5L339.5,62.5L339.0,62.5L338.5,62.1L338.0,62.1L337.5,62.1L337.0,62.0L336.5,62.9L336.0,62.0L335.5,61.9L335.0,62.0L334.5,62.0L334.0,62.0L333.5,62.2L333.0,62.2L332.5,62.2L332.0,62.2L331.5,62.2L331.0,62.5L330.5,62.2L330.0,62.1L329.5,62.6L329.0,62.1L328.5,62.0L328.0,62.0L327.5,62.3L327.0,62.3L326.5,62.3L326.0,62.3L325.5,62.1L325.0,62.1L324.5,62.1L324.0,62.0L323.5,63.0L323.0,62.5L322.5,62.5L322.0,62.0L321.5,61.7L321.0,61.6L320.5,61.7L320.0,61.7L319.5,61.8L319.0,61.8L318.5,61.8L318.0,62.9L317.5,61.8L317.0,63.1L316.5,62.1L316.0,62.1L315.5,61.9L315.0,61.9L314.5,61.9L314.0,61.9L313.5,63.0L313.0,62.0L312.5,62.0L312.0,62.0L311.5,62.0L311.0,62.1L310.5,62.4L310.0,62.1L309.5,62.0L309.0,61.9L308.5,61.9L308.0,61.9L307.5,61.8L307.0,61.8L306.5,61.6L306.0,61.6L305.5,61.9L305.0,61.9L304.5,62.0L304.0,62.3L303.5,62.3L303.0,64.0L302.5,62.1L302.0,62.0L301.5,62.0L301.0,62.0L300.5,62.0L300.0,62.0L299.5,62.0L299.0,62.0L298.5,62.2L298.0,62.7L297.5,62.2L297.0,62.2L296.5,62.3L296.0,62.3L295.5,62.3L295.0,62.3L294.5,62.3L294.0,62.3L293.5,64.4L293.0,61.6L292.5,61.7L292.0,62.4L291.5,62.1L291.0,62.1L290.5,62.1L290.0,61.7L289.5,62.2L289.0,64.1L288.5,62.2L288.0,62.3L287.5,62.3L287.0,62.3L286.5,61.9L286.0,61.9L285.5,62.2L285.0,62.2L284.5,62.2L284.0,62.2L283.5,61.9L283.0,62.3L282.5,62.3L282.0,62.3L281.5,62.0L281.0,62.0L280.5,62.4L280.0,62.4L279.5,62.4L279.0,62.4L278.5,62.1L278.0,62.0L277.5,64.8L277.0,61.9L276.5,61.8L276.0,62.3L275.5,61.8L275.0,61.5L274.5,62.2L274.0,62.2L273.5,62.2L273.0,61.9L272.5,61.9L272.0,62.2L271.5,62.2L271.0,62.2L270.5,62.2L270.0,61.9L269.5,61.9L269.0,64.4L268.5,62.6L268.0,63.2L267.5,62.6L267.0,62.6L266.5,62.5L266.0,62.5L265.5,62.0L265.0,62.0L264.5,61.9L264.0,61.9L263.5,63.2L263.0,61.9L262.5,62.0L262.0,62.2L261.5,62.2L261.0,62.2L260.5,62.2L260.0,62.0L259.5,62.0L259.0,62.0L258.5,64.6L258.0,62.1L257.5,62.1L257.0,62.7L256.5,62.1L256.0,62.1L255.5,62.0L255.0,62.6L254.5,62.0L254.0,62.2L253.5,62.2L253.0,62.2L252.5,62.1L252.0,62.1L251.5,62.1L251.0,62.3L250.5,62.3L250.0,62.3L249.5,62.3L249.0,61.8L248.5,61.8L248.0,61.8L247.5,62.0L247.0,62.0L246.5,62.0L246.0,62.0L245.5,62.0L245.0,62.0L244.5,62.0L244.0,62.2L243.5,62.2L243.0,62.2L242.5,62.2L242.0,62.0L241.5,62.1L241.0,62.1L240.5,62.1L240.0,62.1L239.5,61.7L239.0,62.1L238.5,62.1L238.0,62.7L237.5,62.1L237.0,62.0L236.5,62.9L236.0,62.4L235.5,62.4L235.0,62.4L234.5,62.1L234.0,62.1L233.5,62.1L233.0,62.1L232.5,62.1L232.0,62.1L231.5,62.1L231.0,62.3L230.5,62.3L230.0,62.3L229.5,62.3L229.0,62.2L228.5,62.0L228.0,62.0L227.5,62.0L227.0,62.0L226.5,62.0L226.0,62.2L225.5,62.2L225.0,62.2L224.5,62.3L224.0,62.3L223.5,62.3L223.0,62.3L222.5,62.0L222.0,62.0L221.5,62.0L221.0,62.0L220.5,62.0L220.0,61.7L219.5,62.0L219.0,62.0L218.5,62.0L218.0,62.8L217.5,62.8L217.0,62.8L216.5,62.8L216.0,61.8L215.5,62.5L215.0,62.5L214.5,62.5L214.0,62.5L213.5,61.7L213.0,61.8L212.5,61.8L212.0,61.8L211.5,61.8L211.0,62.3L210.5,62.3L210.0,62.3L209.5,61.7L209.0,61.7L208.5,61.9L208.0,61.9L207.5,61.9L207.0,61.9L206.5,62.2L206.0,62.2L205.5,62.2L205.0,61.9L204.5,61.9L204.0,63.7L203.5,62.5L203.0,62.5L202.5,62.1L202.0,62.1L201.5,62.1L201.0,62.8L200.5,62.8L200.0,62.8L199.5,63.1L199.0,62.0L198.5,62.0L198.0,62.1L197.5,62.3L197.0,62.8L196.5,62.3L196.0,62.3L195.5,62.3L195.0,62.3L194.5,64.6L194.0,61.3L193.5,61.8L193.0,61.8L192.5,62.1L192.0,62.1L191.5,62.1L191.0,62.3L190.5,62.0L190.0,61.9L189.5,61.9L189.0,61.9L188.5,62.3L188.0,62.3L187.5,62.3L187.0,62.3L186.5,62.6L186.0,61.8L185.5,61.6L185.0,62.4L184.5,62.4L184.0,62.4L183.5,62.4L183.0,62.2L182.5,62.2L182.0,62.5L181.5,62.1L181.0,62.1L180.5,62.3L180.0,62.3L179.5,62.3L179.0,62.0L178.5,62.0L178.0,62.0L177.5,63.6L177.0,61.7L176.5,62.0L176.0,62.0L175.5,62.3L175.0,62.3L174.5,62.3L174.0,62.1L173.5,61.9L173.0,61.9L172.5,61.9L172.0,61.9L171.5,63.5L171.0,61.7L170.5,63.1L170.0,62.0L169.5,62.0L169.0,62.2L168.5,62.2L168.0,62.2L167.5,61.8L167.0,62.2L166.5,62.2L166.0,62.2L165.5,62.2L165.0,62.2L164.5,62.2L164.0,62.2L163.5,62.3L163.0,62.3L162.5,65.2L162.0,62.3L161.5,62.0L161.0,62.4L160.5,62.4L160.0,62.8L159.5,63.4L159.0,62.8L158.5,62.8L158.0,62.4L157.5,63.0L157.0,62.4L156.5,62.4L156.0,62.4L155.5,62.4L155.0,62.4L154.5,61.9L154.0,62.5L153.5,62.5L153.0,62.5L152.5,63.6L152.0,62.2L151.5,62.2L151.0,61.9L150.5,61.6L150.0,62.4L149.5,62.4L149.0,62.4L148.5,62.0L148.0,61.9L147.5,62.0L147.0,62.0L146.5,62.0L146.0,62.0L145.5,61.8L145.0,61.8L144.5,61.8L144.0,62.2L143.5,62.2L143.0,62.2L142.5,62.2L142.0,61.6L141.5,62.1L141.0,62.1L140.5,62.1L140.0,62.1L139.5,61.8L139.0,61.8L138.5,62.2L138.0,62.2L137.5,62.2L137.0,64.2L136.5,62.2L136.0,62.2L135.5,61.8L135.0,61.8L134.5,62.4L134.0,62.0L133.5,62.1L133.0,62.1L132.5,62.1L132.0,62.1L131.5,62.0L131.0,61.7L130.5,61.7L130.0,61.7L129.5,62.4L129.0,62.4L128.5,62.4L128.0,62.2L127.5,62.2L127.0,61.7L126.5,61.7L126.0,61.7L125.5,61.7L125.0,61.7L124.5,61.9L124.0,61.9L123.5,62.4L123.0,63.3L122.5,62.4L122.0,62.4L121.5,62.1L121.0,62.1L120.5,61.8L120.0,61.8L119.5,62.2L119.0,61.8L118.5,62.2L118.0,62.2L117.5,62.2L117.0,62.3L116.5,62.3L116.0,62.3L115.5,63.9L115.0,62.3L114.5,62.3L114.0,62.3L113.5,62.3L113.0,61.7L112.5,61.9L112.0,61.9L111.5,61.9L111.0,62.1L110.5,64.4L110.0,62.4L109.5,62.4L109.0,62.0L108.5,62.0L108.0,62.1L107.5,62.1L107.0,62.1L106.5,62.1L106.0,62.1L105.5,62.1L105.0,62.1L104.5,64.2L104.0,62.1L103.5,62.1L103.0,62.1L102.5,62.0L102.0,61.9L101.5,61.9L101.0,62.3L100.5,62.3L100.0,62.3L99.5,62.3L99.0,62.2L98.5,62.2L98.0,62.2L97.5,62.2L97.0,62.0L96.5,62.2L96.0,62.2L95.5,62.2L95.0,61.9L94.5,61.9L94.0,61.9L93.5,61.9L93.0,62.1L92.5,63.4L92.0,62.1L91.5,64.2L91.0,61.7L90.5,61.7L90.0,61.8L89.5,61.8L89.0,61.8L88.5,61.7L88.0,61.5L87.5,61.6L87.0,61.6L86.5,61.6L86.0,61.4L85.5,62.1L85.0,62.1L84.5,62.3L84.0,62.3L83.5,62.3L83.0,62.3L82.5,61.9L82.0,61.5L81.5,61.8L81.0,62.3L80.5,62.3L80.0,62.4L79.5,62.4L79.0,62.4L78.5,61.8L78.0,61.8L77.5,62.4L77.0,62.4L76.5,62.4L76.0,62.4L75.5,62.0L75.0,62.0L74.5,62.0L74.0,62.0L73.5,62.0L73.0,61.9L72.5,61.9L72.0,61.9L71.5,61.9L71.0,64.0L70.5,62.1L70.0,63.5L69.5,62.1L69.0,62.1L68.5,62.3L68.0,62.3L67.5,62.3L67.0,62.3L66.5,62.0L66.0,62.0L65.5,62.0L65.0,62.1L64.5,62.1L64.0,62.1L63.5,62.1L63.0,61.9L62.5,61.7L62.0,61.8L61.5,61.8L61.0,61.8L60.5,62.1L60.0,62.1L59.5,63.8L59.0,62.1L58.5,62.1L58.0,62.0L57.5,62.0L57.0,62.0L56.5,62.0L56.0,62.1L55.5,62.1L55.0,62.7L54.5,62.7L54.0,62.7L53.5,62.0L53.0,62.2L52.5,62.3L52.0,62.3L51.5,62.3L51.0,62.0L50.5,62.0L50.0,62.1L49.5,62.1L49.0,62.3L48.5,62.3L48.0,62.3L47.5,62.3L47.0,62.0L46.5,62.6L46.0,62.6L45.5,62.6L45.0,62.6L44.5,63.6L44.0,62.3L43.5,62.1L43.0,62.1L42.5,62.3L42.0,62.3L41.5,63.0L41.0,62.3L40.5,62.0L40.0,62.0L39.5,62.0L39.0,62.0L38.5,62.2L38.0,62.2L37.5,62.2L37.0,62.1L36.5,62.8L36.0,62.3L35.5,62.3L35.0,62.2L34.5,62.2L34.0,62.3L33.5,62.3L33.0,62.3L32.5,62.3L32.0,61.9L31.5,61.8L31.0,61.7L30.5,61.7L30.0,62.3L29.5,62.9L29.0,62.3L28.5,62.0L28.0,62.0L27.5,61.9L27.0,62.3L26.5,62.3L26.0,62.3L25.5,62.3L25.0,49.8L24.5,22.7L24.0,17.7L23.5,14.6L23.0,15.0L22.5,15.0L22.0,15.0L21.5,15.0L21.0,14.7L20.5,14.7L20.0,14.7L19.5,14.8L19.0,14.8L18.5,16.8L18.0,14.8L17.5,14.8L17.0,14.7L16.5,14.7L16.0,15.0L15.5,15.0L15.0,15.0L14.5,15.4L14.0,15.4L13.5,15.4L13.0,15.0L12.5,14.8L12.0,14.8L11.5,14.8L11.0,14.6L10.5,14.7L10.0,14.9L9.5,29.9L9.0,56.4L8.5,61.4L8.0,61.6L7.5,61.6L7.0,61.6L6.5,61.9L6.0,61.9L5.5,61.9L5.0,61.9L4.5,61.8L4.0,61.8L3.5,62.2L3.0,62.2L2.5,62.2L2.0,62.2L1.5,62.2L1.0,62.2L0.5,62.0Z" fill="#ffff00"/><path d="M0.5,111.5L1.0,112.1L1.5,112.2L2.0,112.2L2.5,112.2L3.0,112.2L3.5,112.0L4.0,112.0L4.5,110.4L5.0,111.9L5.5,111.9L6.0,111.9L6.5,112.1L7.0,112.1L7.5,112.1L8.0,112.4L8.5,131.5L9.0,151.4L9.5,154.7L10.0,154.7L10.5,154.2L11.0,154.2L11.5,154.2L12.0,154.2L12.5,154.8L13.0,154.8L13.5,154.8L14.0,154.8L14.5,154.8L15.0,154.5L15.5,143.7L16.0,123.9L16.5,110.5L17.0,110.5L17.5,110.5L18.0,110.4L18.5,111.6L19.0,111.9L19.5,111.9L20.0,111.4L20.5,111.4L21.0,111.4L21.5,111.8L22.0,111.8L22.5,111.4L23.0,111.8L23.5,111.9L24.0,112.2L24.5,112.2L25.0,115.3L25.5,133.8L26.0,153.6L26.5,154.3L27.0,154.3L27.5,154.2L28.0,151.6L28.5,154.2L29.0,155.0L29.5,154.6L30.0,154.6L30.5,154.6L31.0,154.6L31.5,154.6L32.0,154.6L32.5,139.3L33.0,121.1L33.5,109.8L34.0,109.8L34.5,109.8L35.0,111.0L35.5,111.5L36.0,112.0L36.5,112.0L37.0,112.0L37.5,112.0L38.0,111.0L38.5,111.7L39.0,111.7L39.5,111.8L40.0,111.8L40.5,111.8L41.0,111.8L41.5,112.5L42.0,118.2L42.5,137.0L43.0,154.6L43.5,154.5L44.0,154.5L44.5,154.5L45.0,154.9L45.5,154.8L46.0,154.8L46.5,154.7L47.0,154.4L47.5,154.4L48.0,154.4L48.5,154.0L49.0,154.0L49.5,138.8L50.0,119.4L50.5,110.3L51.0,110.3L51.5,110.3L52.0,110.5L52.5,112.4L53.0,112.4L53.5,110.6L54.0,112.0L54.5,112.0L55.0,112.0L55.5,112.2L56.0,111.7L56.5,111.7L57.0,111.7L57.5,111.7L58.0,111.8L58.5,111.8L59.0,120.1L59.5,140.2L60.0,154.6L60.5,154.6L61.0,154.0L61.5,154.6L62.0,154.6L62.5,154.6L63.0,154.6L63.5,154.8L64.0,154.3L64.5,154.3L65.0,154.3L65.5,154.2L66.0,155.2L66.5,136.0L67.0,116.3L67.5,110.0L68.0,110.0L68.5,110.0L69.0,110.4L69.5,112.0L70.0,112.3L70.5,112.2L71.0,111.5L71.5,111.5L72.0,111.5L72.5,111.5L73.0,111.9L73.5,111.2L74.0,111.9L74.5,111.9L75.0,112.7L75.5,112.7L76.0,122.8L76.5,141.2L77.0,154.9L77.5,154.4L78.0,154.4L78.5,154.4L79.0,154.4L79.5,152.6L80.0,155.0L80.5,155.0L81.0,155.0L81.5,154.8L82.0,154.8L82.5,152.7L83.0,152.9L83.5,132.5L84.0,114.5L84.5,110.0L85.0,110.0L85.5,110.0L86.0,110.7L86.5,112.1L87.0,112.4L87.5,110.9L88.0,111.8L88.5,111.8L89.0,111.8L89.5,111.8L90.0,112.2L90.5,112.2L91.0,112.2L91.5,112.2L92.0,112.5L92.5,112.8L93.0,125.3L93.5,144.9L94.0,154.7L94.5,154.5L95.0,154.5L95.5,154.5L96.0,154.9L96.5,154.9L97.0,154.9L97.5,154.8L98.0,154.8L98.5,154.8L99.0,154.8L99.5,155.1L100.0,150.9L100.5,130.5L101.0,110.7L101.5,110.7L102.0,110.7L102.5,110.7L103.0,111.9L103.5,112.2L104.0,112.3L104.5,112.3L105.0,111.6L105.5,111.6L106.0,111.6L106.5,111.4L107.0,111.4L107.5,111.4L108.0,111.3L108.5,112.1L109.0,112.1L109.5,112.1L110.0,127.8L110.5,147.0L111.0,153.6L111.5,153.6L112.0,153.6L112.5,154.7L113.0,155.2L113.5,154.9L114.0,154.5L114.5,154.5L115.0,154.5L115.5,154.5L116.0,154.6L116.5,154.9L117.0,148.2L117.5,128.6L118.0,109.9L118.5,109.9L119.0,109.9L119.5,109.9L120.0,111.6L120.5,112.1L121.0,112.4L121.5,112.4L122.0,112.0L122.5,112.0L123.0,112.0L123.5,112.2L124.0,110.8L124.5,112.2L125.0,112.1L125.5,112.1L126.0,112.1L126.5,110.2L127.0,130.0L127.5,150.2L128.0,154.9L128.5,154.5L129.0,154.5L129.5,154.0L130.0,154.6L130.5,154.8L131.0,153.3L131.5,154.7L132.0,154.7L132.5,152.5L133.0,155.1L133.5,155.0L134.0,145.2L134.5,126.1L135.0,111.4L135.5,111.4L136.0,111.4L136.5,111.4L137.0,112.1L137.5,112.0L138.0,112.0L138.5,111.7L139.0,111.7L139.5,111.7L140.0,112.2L140.5,110.0L141.0,111.5L141.5,111.5L142.0,112.2L142.5,112.2L143.0,112.2L143.5,112.4L144.0,132.8L144.5,150.5L145.0,154.5L145.5,154.4L146.0,154.4L146.5,154.4L147.0,154.7L147.5,155.1L148.0,155.2L148.5,155.0L149.0,155.0L149.5,154.6L150.0,154.6L150.5,154.6L151.0,142.3L151.5,123.6L152.0,110.6L152.5,110.6L153.0,110.6L153.5,110.6L154.0,112.2L154.5,111.9L155.0,111.9L155.5,111.9L156.0,112.3L156.5,111.9L157.0,111.8L157.5,110.9L158.0,111.7L158.5,110.7L159.0,111.3L159.5,111.7L160.0,112.1L160.5,116.1L161.0,135.0L161.5,154.5L162.0,152.6L162.5,154.5L163.0,154.5L163.5,154.7L164.0,155.0L164.5,155.0L165.0,155.0L165.5,155.0L166.0,155.0L166.5,155.0L167.0,153.7L167.5,154.7L168.0,140.2L168.5,120.5L169.0,110.2L169.5,110.2L170.0,109.8L170.5,111.0L171.0,111.0L171.5,112.3L172.0,111.2L172.5,111.2L173.0,111.2L173.5,111.2L174.0,111.9L174.5,111.7L175.0,111.7L175.5,111.7L176.0,111.7L176.5,112.1L177.0,112.1L177.5,118.3L178.0,137.8L178.5,154.5L179.0,154.2L179.5,154.2L180.0,153.9L180.5,154.2L181.0,154.7L181.5,154.0L182.0,154.0L182.5,154.0L183.0,154.6L183.5,154.6L184.0,154.6L184.5,154.6L185.0,136.8L185.5,116.1L186.0,110.7L186.5,110.7L187.0,110.7L187.5,111.6L188.0,112.2L188.5,112.1L189.0,109.4L189.5,112.1L190.0,111.8L190.5,111.8L191.0,111.8L191.5,111.8L192.0,112.0L192.5,111.0L193.0,111.9L193.5,111.9L194.0,112.0L194.5,120.8L195.0,140.0L195.5,154.5L196.0,154.5L196.5,154.5L197.0,154.5L197.5,154.8L198.0,154.8L198.5,154.8L199.0,154.8L199.5,154.3L200.0,154.3L200.5,154.3L201.0,154.3L201.5,153.0L202.0,134.6L202.5,115.9L203.0,110.2L203.5,110.2L204.0,110.2L204.5,110.7L205.0,112.0L205.5,112.0L206.0,111.6L206.5,110.5L207.0,111.6L207.5,110.5L208.0,111.8L208.5,111.9L209.0,111.9L209.5,111.7L210.0,110.6L210.5,111.7L211.0,111.7L211.5,122.3L212.0,143.1L212.5,154.4L213.0,154.1L213.5,153.8L214.0,153.8L214.5,153.8L215.0,154.8L215.5,155.1L216.0,154.8L216.5,154.8L217.0,154.6L217.5,154.6L218.0,154.6L218.5,152.1L219.0,132.4L219.5,113.4L220.0,110.6L220.5,110.6L221.0,110.6L221.5,111.6L222.0,111.4L222.5,112.1L223.0,112.1L223.5,112.1L224.0,112.1L224.5,112.1L225.0,111.8L225.5,111.8L226.0,111.8L226.5,111.9L227.0,111.9L227.5,111.9L228.0,112.0L228.5,125.6L229.0,145.3L229.5,154.4L230.0,154.4L230.5,154.4L231.0,154.5L231.5,154.8L232.0,154.8L232.5,154.7L233.0,154.8L233.5,154.8L234.0,154.8L234.5,154.8L235.0,154.6L235.5,149.9L236.0,129.6L236.5,110.3L237.0,110.0L237.5,110.0L238.0,110.0L238.5,110.7L239.0,112.2L239.5,112.2L240.0,111.9L240.5,111.9L241.0,111.9L241.5,111.8L242.0,111.8L242.5,111.8L243.0,111.8L243.5,111.9L244.0,111.9L244.5,112.3L245.0,113.1L245.5,128.3L246.0,147.6L246.5,154.1L247.0,154.1L247.5,154.1L248.0,154.4L248.5,154.8L249.0,154.8L249.5,154.7L250.0,154.7L250.5,154.7L251.0,154.7L251.5,155.2L252.0,154.8L252.5,147.0L253.0,127.7L253.5,110.7L254.0,110.7L254.5,110.4L255.0,108.7L255.5,111.8L256.0,112.1L256.5,112.2L257.0,112.2L257.5,112.0L258.0,111.0L258.5,112.0L259.0,111.5L259.5,111.5L260.0,110.5L260.5,111.5L261.0,112.3L261.5,112.3L262.0,112.5L262.5,130.7L263.0,149.9L263.5,152.7L264.0,154.0L264.5,154.0L265.0,155.1L265.5,155.1L266.0,154.9L266.5,154.9L267.0,154.4L267.5,154.3L268.0,154.3L268.5,154.3L269.0,154.7L269.5,142.4L270.0,125.2L270.5,111.2L271.0,110.3L271.5,110.3L272.0,110.3L272.5,111.2L273.0,112.2L273.5,112.1L274.0,112.1L274.5,112.0L275.0,111.9L275.5,111.9L276.0,111.9L276.5,111.5L277.0,111.5L277.5,111.5L278.0,111.9L278.5,111.9L279.0,113.8L279.5,133.8L280.0,153.2L280.5,154.3L281.0,154.3L281.5,154.3L282.0,153.2L282.5,154.7L283.0,154.7L283.5,153.2L284.0,155.1L284.5,153.5L285.0,154.8L285.5,154.8L286.0,154.8L286.5,142.3L287.0,123.0L287.5,110.5L288.0,111.1L288.5,111.1L289.0,111.1L289.5,111.6L290.0,112.2L290.5,111.9L291.0,111.9L291.5,111.9L292.0,111.9L292.5,112.0L293.0,111.6L293.5,111.6L294.0,111.6L294.5,111.7L295.0,111.7L295.5,111.5L296.0,116.8L296.5,136.2L297.0,154.5L297.5,153.5L298.0,154.2L298.5,154.2L299.0,154.2L299.5,154.9L300.0,154.9L300.5,154.9L301.0,155.0L301.5,155.0L302.0,152.2L302.5,155.3L303.0,155.3L303.5,139.7L304.0,118.2L304.5,110.2L305.0,110.2L305.5,110.2L306.0,110.7L306.5,111.7L307.0,111.3L307.5,111.3L308.0,111.3L308.5,111.6L309.0,111.6L309.5,111.6L310.0,111.6L310.5,111.2L311.0,111.5L311.5,111.5L312.0,111.5L312.5,112.1L313.0,119.2L313.5,138.6L314.0,155.1L314.5,153.4L315.0,153.4L315.5,153.4L316.0,153.4L316.5,154.6L317.0,154.6L317.5,154.9L318.0,154.9L318.5,154.8L319.0,154.8L319.5,154.8L320.0,154.5L320.5,136.9L321.0,117.3L321.5,110.0L322.0,110.0L322.5,110.0L323.0,110.0L323.5,112.1L324.0,112.3L324.5,112.4L325.0,112.0L325.5,111.6L326.0,111.5L326.5,111.5L327.0,111.5L327.5,111.8L328.0,111.8L328.5,111.8L329.0,111.8L329.5,112.2L330.0,122.0L330.5,140.8L331.0,154.3L331.5,154.3L332.0,154.3L332.5,154.7L333.0,154.4L333.5,154.4L334.0,154.4L334.5,154.4L335.0,154.4L335.5,154.4L336.0,154.9L336.5,155.3L337.0,153.8L337.5,134.8L338.0,115.5L338.5,110.9L339.0,110.9L339.5,110.9L340.0,111.6L340.5,111.3L341.0,112.3L341.5,112.3L342.0,112.1L342.5,111.9L343.0,111.9L343.5,111.9L344.0,111.8L344.5,111.8L345.0,111.8L345.5,111.8L346.0,112.1L346.5,110.5L347.0,124.5L347.5,143.4L348.0,154.6L348.5,154.5L349.0,154.5L349.5,154.5L350.0,154.5L350.5,154.9L351.0,154.8L351.5,154.8L352.0,154.8L352.5,154.9L353.0,154.9L353.5,154.9L354.0,151.8L354.5,132.2L355.0,112.6L355.5,110.5L356.0,110.5L356.5,110.5L357.0,111.3L357.5,111.3L358.0,112.2L358.5,111.6L359.0,111.6L359.5,111.6L360.0,111.7L360.5,111.7L361.0,111.7L361.5,111.2L362.0,111.6L362.5,111.6L363.0,112.0L363.5,112.0L364.0,126.8L364.5,146.9L365.0,153.2L365.5,154.5L366.0,154.5L366.5,154.5L367.0,154.6L367.5,155.0L368.0,155.0L368.5,154.5L369.0,154.3L369.5,154.5L370.0,154.6L370.5,154.6L371.0,148.6L371.5,128.9L372.0,110.1L372.5,110.1L373.0,110.1L373.5,110.1L374.0,111.5L374.5,109.9L375.0,111.9L375.5,111.7L376.0,111.7L376.5,111.7L377.0,111.1L377.5,111.7L378.0,112.1L378.5,112.0L379.0,112.0L379.5,112.0L380.0,112.1L380.5,112.7L381.0,129.7L381.5,148.6L382.0,154.2L382.5,154.2L383.0,154.6L383.5,154.6L384.0,152.9L384.5,154.9L385.0,154.9L385.5,154.0L386.0,154.8L386.5,154.8L387.0,154.8L387.5,154.8L388.0,145.6L388.5,127.0L389.0,111.1L389.5,111.0L390.0,111.0L390.5,111.0L391.0,111.0L391.5,112.1L392.0,111.5L392.5,111.5L393.0,111.5L393.5,111.5L394.0,111.8L394.5,110.0L395.0,111.4L395.5,109.2L396.0,110.6L396.5,112.1L397.0,112.1L397.5,111.5L398.0,131.4L398.5,151.7L399.0,154.4L399.5,154.4L400.0,154.6L400.5,154.6L401.0,154.7L401.5,154.0L402.0,154.9L402.5,154.9L403.0,155.1L403.5,155.1L404.0,155.0L404.5,155.0L405.0,142.9L405.5,123.5L406.0,110.5L406.5,110.5L407.0,110.5L407.5,110.5L408.0,112.6L408.5,112.5L409.0,111.8L409.5,111.8L410.0,111.8L410.5,110.7L411.0,111.8L411.5,111.5L412.0,111.5L412.5,111.5L413.0,111.5L413.5,111.2L414.0,112.0L414.5,114.2L415.0,134.5L415.5,153.9L416.0,155.1L416.5,154.6L417.0,154.6L417.5,154.6L418.0,155.0L418.5,155.0L419.0,155.1L419.5,155.1L420.0,155.1L420.5,155.1L421.0,155.1L421.5,155.1L422.0,141.2L422.5,122.0L423.0,110.1L423.5,110.3L424.0,110.3L424.5,110.7L425.0,111.6L425.5,112.5L426.0,111.6L426.5,111.6L427.0,111.6L427.5,111.7L428.0,111.7L428.5,111.9L429.0,111.9L429.5,111.9L430.0,112.2L430.5,112.2L431.0,112.2L431.5,117.3L432.0,137.2L432.5,154.1L433.0,154.1L433.5,154.1L434.0,154.6L434.5,154.9L435.0,155.0L435.5,154.8L436.0,154.8L436.5,154.6L437.0,154.6L437.5,154.4L438.0,154.4L438.5,154.4L439.0,139.7L439.5,119.5L440.0,110.4L440.5,110.4L441.0,110.4L441.5,111.2L442.0,112.4L442.5,112.4L443.0,112.3L443.5,112.3L444.0,112.1L444.5,111.4L445.0,111.4L445.5,111.4L446.0,111.8L446.5,111.9L447.0,111.9L447.5,111.9L448.0,112.5L448.5,119.7L449.0,139.4L449.5,154.1L450.0,154.3L450.5,154.2L451.0,154.2L451.5,153.2L452.0,154.6L452.5,154.6L453.0,153.4L453.5,154.0L454.0,154.4L454.5,154.4L455.0,155.0L455.5,154.7L456.0,133.8L456.5,116.5L457.0,110.6L457.5,110.6L458.0,110.0L458.5,111.2L459.0,111.8L459.5,112.3L460.0,111.4L460.5,112.1L461.0,111.6L461.5,111.6L462.0,111.2L462.5,111.6L463.0,112.0L463.5,112.0L464.0,112.0L464.5,112.1L465.0,112.1L465.5,122.1L466.0,141.7L466.5,154.5L467.0,154.5L467.5,154.4L468.0,154.4L468.5,154.4L469.0,154.4L469.5,154.2L470.0,152.8L470.5,154.2L471.0,154.2L471.5,154.6L472.0,154.6L472.5,153.1L473.0,133.5L473.5,114.4L474.0,110.9L474.5,110.9L475.0,110.9L475.5,110.9L476.0,111.9L476.5,110.9L477.0,111.9L477.5,111.5L478.0,111.5L478.5,111.5L479.0,111.5L479.5,111.5L480.0,111.6L480.5,111.6L481.0,111.8L481.5,112.4L482.0,112.5L482.5,125.4L483.0,143.6L483.5,154.4L484.0,154.4L484.5,154.4L485.0,154.4L485.5,154.4L486.0,154.7L486.5,154.7L487.0,154.7L487.5,154.7L488.0,154.7L488.5,154.4L489.0,154.7L489.5,151.1L490.0,130.3L490.5,110.0L491.0,110.0L491.5,110.0L492.0,109.5L492.5,110.7L493.0,111.6L493.5,112.0L494.0,112.0L494.5,111.6L495.0,111.6L495.5,111.2L496.0,111.8L496.5,111.7L497.0,111.7L497.5,111.7L498.0,111.7L498.5,111.7L499.0,112.5L499.5,126.7L500.0,147.1L500.5,154.4L501.0,154.4L501.5,154.4L502.0,154.4L502.5,154.9L503.0,154.9L503.5,155.1L504.0,155.1L504.5,154.5L505.0,154.5L505.5,154.5L506.0,155.0L506.5,147.7L507.0,129.0L507.5,110.6L508.0,110.6L508.5,110.6L509.0,110.6L509.5,111.5L510.0,112.3L510.5,111.7L511.0,111.7L511.5,111.7L512.0,111.7L512.5,111.8L513.0,112.4L513.5,112.1L514.0,112.1L514.5,112.1L515.0,112.1L515.5,112.2L516.0,113.4L516.5,129.5L517.0,149.2L517.5,153.9L518.0,153.9L518.5,153.9L519.0,153.6L519.5,154.6L520.0,155.0L520.5,155.0L521.0,155.0L521.5,155.0L522.0,155.0L522.5,155.0L523.0,154.9L523.5,145.3L524.0,125.7L524.5,110.7L525.0,110.7L525.5,110.7L526.0,110.7L526.5,110.8L527.0,111.8L527.5,111.8L528.0,111.8L528.5,111.8L529.0,111.8L529.5,111.7L530.0,111.7L530.5,111.7L531.0,111.8L531.5,111.8L532.0,111.8L532.5,111.8L533.0,112.2L533.5,132.9L534.0,151.8L534.5,154.1L535.0,154.1L535.5,154.1L536.0,154.5L536.5,154.6L537.0,152.4L537.5,153.9L538.0,154.8L538.5,154.8L539.0,154.6L539.5,154.6L540.0,154.6L540.5,142.8L541.0,123.8L541.5,111.0L542.0,111.0L542.5,111.0L543.0,111.0L543.5,111.8L544.0,112.1L544.5,112.1L545.0,112.1L545.5,109.9L546.0,111.1L546.5,111.1L547.0,111.1L547.5,111.7L548.0,111.8L548.5,111.8L549.0,111.8L549.5,112.1L550.0,115.8L550.5,134.1L551.0,154.0L551.5,154.2L552.0,154.2L552.5,154.2L553.0,153.1L553.5,152.5L554.0,155.1L554.5,154.8L555.0,154.8L555.5,154.8L556.0,154.8L556.5,155.0L557.0,154.9L557.5,140.3L558.0,120.9L558.5,110.1L559.0,110.1L559.5,110.1L560.0,110.3L560.5,112.3L561.0,112.2L561.5,112.0L562.0,111.9L562.5,110.6L563.0,111.9L563.5,111.9L564.0,111.8L564.5,111.8L565.0,111.2L565.5,111.9L566.0,112.1L566.5,112.1L567.0,118.2L567.5,137.5L568.0,154.5L568.5,152.8L569.0,154.5L569.5,154.5L570.0,154.5L570.5,154.9L571.0,154.9L571.5,152.9L572.0,154.5L572.5,154.5L573.0,154.5L573.5,154.5L574.0,154.9L574.5,137.8L575.0,117.9L575.5,108.9L576.0,110.0L576.5,110.0L577.0,111.3L577.5,112.1L578.0,112.1L578.5,112.1L579.0,112.1L579.5,111.9L580.0,111.9L580.5,111.9L581.0,111.9L581.5,111.9L582.0,112.0L582.5,112.0L583.0,112.1L583.5,112.1L584.0,120.3L584.5,140.2L585.0,154.5L585.5,154.5L586.0,154.5L586.5,154.5L587.0,154.0L587.5,154.3L588.0,154.7L588.5,154.7L589.0,154.7L589.5,154.9L590.0,154.9L590.5,154.9L591.0,153.9L591.5,135.2L592.0,115.3L592.5,110.5L593.0,110.5L593.5,110.5L594.0,111.4L594.5,112.2L595.0,112.2L595.5,111.3L596.0,110.1L596.5,111.3L597.0,111.3L597.5,112.2L598.0,111.8L598.5,111.8L599.0,111.7L599.5,111.7L600.0,111.7L600.5,111.3L601.0,122.9L601.5,143.3L602.0,153.8L602.5,154.0L603.0,153.5L603.5,154.0L604.0,153.7L604.5,154.1L605.0,154.5L605.5,155.0L606.0,154.9L606.5,154.8L607.0,154.0L607.5,154.8L608.0,152.8L608.5,132.5L609.0,113.8L609.5,110.1L610.0,110.1L610.5,110.1L611.0,109.7L611.5,111.9L612.0,111.9L612.5,112.2L613.0,112.0L613.5,111.6L614.0,111.6L614.5,111.6L615.0,111.1L615.5,111.1L616.0,110.5L616.5,111.6L617.0,111.6L617.5,111.6L618.0,125.4L618.5,145.7L619.0,154.5L619.5,154.5L620.0,154.2L620.5,154.2L621.0,154.2L621.5,154.9L622.0,154.9L622.5,154.9L623.0,154.9L623.5,154.8L624.0,154.8L624.5,154.8L625.0,149.6L625.5,130.0L626.0,110.5L626.5,110.5L627.0,110.5L627.5,110.5L628.0,111.7L628.5,111.7L629.0,112.4L629.5,112.4L630.0,112.1L630.5,112.1L631.0,112.1L631.5,111.5L632.0,111.5L632.5,111.5L633.0,111.5L633.5,111.8L634.0,111.8L634.5,113.0L635.0,127.9L635.5,147.2L636.0,154.8L636.5,154.8L637.0,154.8L637.5,154.9L638.0,154.9L638.5,154.9L639.0,154.9L639.5,154.8L640.0,154.8L640.5,154.8L641.0,154.9L641.5,154.4L642.0,146.7L642.5,127.4L643.0,111.0L643.5,111.0L644.0,111.0L644.5,111.0L645.0,112.2L645.5,111.7L646.0,111.7L646.5,111.5L647.0,111.7L647.5,111.7L648.0,112.0L648.5,112.0L649.0,112.2L649.5,112.1L650.0,112.1L650.5,112.1L651.0,112.1L651.5,112.1L652.0,130.7L652.5,149.6L653.0,154.5L653.5,154.5L654.0,154.5L654.5,154.5L655.0,155.0L655.5,154.7L656.0,154.4L656.5,154.4L657.0,154.4L657.5,154.8L658.0,154.6L658.5,154.3L659.0,144.5L659.5,124.7L660.0,110.9L660.5,110.4L661.0,110.9L661.5,110.9L662.0,111.8L662.5,111.6L663.0,111.6L663.5,111.6L664.0,111.6L664.5,111.7L665.0,111.7L665.5,111.7L666.0,112.1L666.5,112.1L667.0,112.1L667.5,112.1L668.0,112.3L668.5,113.8L669.0,133.8L669.5,152.6L670.0,154.2L670.5,154.2L671.0,154.7L671.5,154.7L672.0,154.7L672.5,154.7L673.0,154.7L673.5,154.7L674.0,154.7L674.5,155.2L675.0,155.0L675.5,155.0L676.0,141.7L676.5,122.8L677.0,110.7L677.5,110.7L678.0,110.7L678.5,110.7L679.0,111.7L679.5,111.9L680.0,111.9L680.5,110.9L681.0,111.9L681.5,112.1L682.0,111.9L682.5,111.9L683.0,111.9L683.5,111.9L684.0,112.1L684.5,112.0L685.0,112.3L685.5,116.2L686.0,135.7L686.5,154.7L687.0,154.7L687.5,154.7L688.0,153.3L688.5,154.8L689.0,154.8L689.5,155.0L690.0,155.0L690.5,154.7L691.0,154.7L691.5,154.7L692.0,154.7L692.5,154.9L693.0,139.4L693.5,118.4L694.0,110.2L694.5,110.2L695.0,110.2L695.5,110.8L696.0,111.7L696.5,110.1L697.0,112.1L697.5,111.7L698.0,111.6L698.5,111.6L699.0,111.6L699.5,110.7L700.0,111.0L700.5,111.6L701.0,111.6L701.5,111.6L702.0,111.6L702.5,119.1L703.0,137.6L703.5,154.6L704.0,154.1L704.5,154.1L705.0,154.1L705.5,154.1L706.0,154.9L706.5,154.7L707.0,154.5L707.5,154.7L708.0,154.9L708.5,154.9L709.0,154.4L709.5,155.1L710.0,137.2L710.5,117.6L711.0,110.5L711.5,110.5L712.0,110.5L712.5,111.0L713.0,110.1L713.5,112.4L714.0,112.0L714.5,111.3L715.0,111.3L715.5,111.3L716.0,108.2L716.5,111.4L717.0,112.1L717.5,112.1L718.0,112.1L718.5,112.1L719.0,112.2L719.5,121.7L720.0,141.2L720.5,154.5L721.0,154.5L721.5,154.4L722.0,154.4L722.5,154.4L723.0,154.6L723.5,154.6L724.0,155.1L724.5,155.1L725.0,154.4L725.5,154.4L726.0,154.4L726.5,154.3L727.0,134.1L727.5,114.9L728.0,111.1L728.5,111.1L729.0,111.1L729.5,110.9L730.0,111.4L730.5,111.7L731.0,112.1L731.5,111.6L732.0,111.6L732.5,111.6L733.0,111.8L733.5,112.1L734.0,111.8L734.5,111.8L735.0,111.8L735.5,112.0L736.0,112.0L736.5,124.1L737.0,142.7L737.5,154.5L738.0,154.5L738.5,154.5L739.0,154.4L739.5,154.4L740.0,154.4L740.5,155.0L741.0,155.2L741.5,154.7L742.0,155.2L742.5,154.2L743.0,154.2L743.5,151.2L744.0,131.8L744.5,111.1L745.0,110.7L745.5,110.7L746.0,110.7L746.5,111.3L747.0,112.2L747.5,112.3L748.0,112.2L748.5,112.2L749.0,111.7L749.5,111.6L750.0,111.6L750.5,111.6L751.0,111.6L751.5,111.7L752.0,111.7L752.5,111.7L753.0,111.7L753.5,126.2L754.0,145.5L754.5,154.2L755.0,154.2L755.5,154.2L756.0,154.2L756.5,154.4L757.0,154.0L757.5,154.0L758.0,154.0L758.5,154.9L759.0,154.9L759.5,154.9L760.0,155.1L760.5,149.2L761.0,129.2L761.5,110.0L762.0,110.0L762.5,110.0L763.0,110.0L763.5,111.6L764.0,112.5L764.5,112.3L765.0,112.3L765.5,112.3L766.0,111.6L766.5,111.6L767.0,111.6L767.5,112.1L768.0,112.0L768.5,112.0L769.0,112.0L769.5,109.9L770.0,112.3L770.5,129.9L771.0,148.7L771.5,154.4L772.0,154.2L772.5,154.4L773.0,154.4L773.5,154.8L774.0,154.8L774.5,154.8L775.0,154.8L775.5,154.8L776.0,154.7L776.5,154.7L777.0,154.7L777.5,147.2L778.0,127.2L778.5,109.2L779.0,110.8L779.5,110.8L780.0,110.8L780.5,111.4L781.0,112.3L781.5,111.8L782.0,111.8L782.5,111.8L783.0,111.7L783.5,111.7L784.0,111.7L784.5,112.0L785.0,111.9L785.5,111.9L786.0,111.9L786.5,111.2L787.0,112.3L787.5,130.7L788.0,150.9L788.5,153.7L789.0,153.7L789.5,153.7L790.0,154.6L790.5,154.6L791.0,155.1L791.5,155.1L792.0,155.1L792.5,155.1L793.0,155.1L793.5,154.9L794.0,154.7L794.5,144.3L795.0,122.0L795.5,110.7L796.0,110.7L796.5,110.7L797.0,110.7L797.5,111.6L798.0,112.2L798.5,112.1L799.0,112.1L799.5,112.1L800.0,111.3L800.5,112.2L801.0,112.2L801.5,112.2L802.0,112.1L802.5,112.1L803.0,112.1L803.5,112.4L804.0,113.8L804.5,133.4L805.0,153.6L805.5,153.9L806.0,153.9L806.5,153.9L807.0,154.5L807.5,154.7L808.0,154.7L808.5,154.7L809.0,154.4L809.5,154.4L810.0,154.4L810.5,155.0L811.0,154.6L811.5,141.5L812.0,121.3L812.5,109.3L813.0,110.1L813.5,110.1L814.0,110.9L814.5,111.9L815.0,111.9L815.5,111.9L816.0,111.6L816.5,111.5L817.0,111.5L817.5,111.5L818.0,111.9L818.5,110.7L819.0,112.0L819.5,112.0L820.0,112.0L820.5,112.2L821.0,117.2L821.5,136.4L822.0,154.9L822.5,154.3L823.0,154.3L823.5,154.3L824.0,154.3L824.5,151.9L825.0,154.5L825.5,154.5L826.0,155.0L826.5,154.7L827.0,154.7L827.5,154.7L828.0,154.5L828.5,138.6L829.0,119.9L829.5,108.0L830.0,109.8L830.5,109.8L831.0,111.3L831.5,112.1L832.0,112.3L832.5,112.3L833.0,111.9L833.5,110.3L834.0,111.7L834.5,111.7L835.0,111.7L835.5,112.0L836.0,112.0L836.5,111.5L837.0,111.5L837.5,111.5L838.0,119.8L838.5,139.1L839.0,154.5L839.5,154.5L840.0,154.5L840.5,154.5L841.0,154.5L841.5,154.9L842.0,154.9L842.5,154.7L843.0,154.7L843.5,154.6L844.0,154.6L844.5,154.6L845.0,154.6L845.5,136.0L846.0,115.1L846.5,110.9L847.0,110.9L847.5,110.9L848.0,110.9L848.5,112.1L849.0,111.5L849.5,111.5L850.0,111.5L850.5,111.9L851.0,111.9L851.5,111.9L852.0,111.9L852.5,111.8L853.0,111.5L853.5,111.5L854.0,111.5L854.5,111.9L855.0,122.6L855.5,140.8L856.0,154.8L856.5,154.0L857.0,154.0L857.5,154.0L858.0,152.1L858.5,154.8L859.0,154.7L859.5,154.7L860.0,154.7L860.5,154.7L861.0,154.9L861.5,154.9L862.0,153.3L862.5,134.3L863.0,114.5L863.5,110.3L864.0,110.3L864.5,110.3L865.0,111.1L865.5,111.9L866.0,111.6L866.5,112.2L867.0,112.0L867.5,112.0L868.0,112.0L868.5,112.0L869.0,111.9L869.5,111.9L870.0,111.9L870.5,112.3L871.0,112.3L871.5,112.3L872.0,124.3L872.5,143.9L873.0,154.3L873.5,154.3L874.0,153.2L874.5,154.3L875.0,152.3L875.5,154.4L876.0,154.9L876.5,154.6L877.0,154.3L877.5,154.6L878.0,154.6L878.5,154.6L879.0,150.5L879.5,131.3L880.0,108.9L880.5,109.2L881.0,109.8L881.5,109.2L882.0,111.1L882.5,112.0L883.0,111.7L883.5,111.6L884.0,111.6L884.5,111.6L885.0,111.6L885.5,111.8L886.0,111.8L886.5,111.9L887.0,111.9L887.5,111.9L888.0,111.9L888.5,111.9L889.0,126.9L889.5,146.5L890.0,154.6L890.5,154.5L891.0,154.5L891.5,154.5L892.0,154.7L892.5,155.3L893.0,154.8L893.5,154.8L894.0,154.7L894.5,154.7L894.5,158.7L894.0,159.9L893.5,158.0L893.0,158.0L892.5,158.3L892.0,158.3L891.5,158.3L891.0,158.3L890.5,158.2L890.0,159.1L889.5,159.3L889.0,159.3L888.5,159.3L888.0,149.0L887.5,129.4L887.0,115.4L886.5,115.4L886.0,115.4L885.5,115.4L885.0,115.3L884.5,115.3L884.0,115.2L883.5,115.2L883.0,115.2L882.5,115.4L882.0,115.4L881.5,115.4L881.0,133.8L880.5,153.0L880.0,158.2L879.5,158.2L879.0,158.2L878.5,158.2L878.0,158.0L877.5,158.0L877.0,158.0L876.5,158.3L876.0,158.3L875.5,159.9L875.0,158.1L874.5,158.1L874.0,158.5L873.5,158.6L873.0,159.0L872.5,159.0L872.0,159.0L871.5,159.6L871.0,146.4L870.5,127.1L870.0,115.4L869.5,115.4L869.0,115.3L868.5,115.5L868.0,115.3L867.5,115.3L867.0,115.5L866.5,115.5L866.0,115.8L865.5,116.4L865.0,115.8L864.5,117.9L864.0,136.8L863.5,156.9L863.0,158.0L862.5,158.0L862.0,158.3L861.5,158.3L861.0,158.4L860.5,158.4L860.0,158.4L859.5,158.4L859.0,158.4L858.5,158.4L858.0,157.9L857.5,157.6L857.0,157.6L856.5,159.0L856.0,159.3L855.5,159.3L855.0,159.3L854.5,159.3L854.0,145.0L853.5,125.1L853.0,115.0L852.5,115.2L852.0,116.1L851.5,115.2L851.0,115.2L850.5,116.2L850.0,116.2L849.5,116.2L849.0,116.2L848.5,118.1L848.0,115.5L847.5,119.5L847.0,139.7L846.5,158.5L846.0,158.5L845.5,158.5L845.0,158.5L844.5,158.2L844.0,158.0L843.5,158.0L843.0,158.3L842.5,158.3L842.0,158.3L841.5,158.2L841.0,157.9L840.5,158.0L840.0,158.0L839.5,158.7L839.0,161.2L838.5,160.1L838.0,160.1L837.5,159.5L837.0,141.6L836.5,122.3L836.0,115.6L835.5,115.6L835.0,115.6L834.5,115.0L834.0,115.1L833.5,115.6L833.0,115.6L832.5,115.6L832.0,115.6L831.5,115.6L831.0,115.6L830.5,122.4L830.0,141.1L829.5,157.0L829.0,157.7L828.5,157.7L828.0,157.7L827.5,157.9L827.0,158.0L826.5,161.9L826.0,158.7L825.5,158.7L825.0,158.6L824.5,158.4L824.0,157.9L823.5,157.9L823.0,157.8L822.5,158.5L822.0,159.7L821.5,159.7L821.0,159.7L820.5,159.4L820.0,138.9L819.5,119.7L819.0,115.2L818.5,115.2L818.0,115.2L817.5,114.9L817.0,115.2L816.5,115.2L816.0,115.2L815.5,115.4L815.0,115.4L814.5,115.5L814.0,115.4L813.5,123.8L813.0,144.0L812.5,157.1L812.0,158.4L811.5,158.4L811.0,159.6L810.5,158.4L810.0,158.3L809.5,158.4L809.0,158.4L808.5,158.4L808.0,158.4L807.5,158.5L807.0,158.3L806.5,158.3L806.0,158.0L805.5,158.9L805.0,158.9L804.5,159.9L804.0,158.9L803.5,156.1L803.0,135.9L802.5,116.3L802.0,115.4L801.5,115.8L801.0,115.4L800.5,115.2L800.0,115.3L799.5,115.8L799.0,115.8L798.5,115.8L798.0,115.5L797.5,115.8L797.0,115.2L796.5,126.9L796.0,146.8L795.5,157.2L795.0,157.8L794.5,157.8L794.0,158.6L793.5,158.6L793.0,158.6L792.5,158.6L792.0,158.6L791.5,158.6L791.0,159.0L790.5,158.6L790.0,158.3L789.5,158.3L789.0,159.8L788.5,159.3L788.0,159.3L787.5,159.3L787.0,159.3L786.5,153.4L786.0,133.2L785.5,114.9L785.0,115.1L784.5,115.2L784.0,115.4L783.5,115.4L783.0,115.5L782.5,115.5L782.0,115.5L781.5,116.1L781.0,117.2L780.5,116.0L780.0,115.6L779.5,129.7L779.0,149.7L778.5,158.2L778.0,158.5L777.5,158.5L777.0,158.5L776.5,158.5L776.0,158.1L775.5,158.1L775.0,157.9L774.5,157.9L774.0,158.0L773.5,158.0L773.0,158.0L772.5,158.0L772.0,158.2L771.5,159.2L771.0,159.4L770.5,159.4L770.0,159.4L769.5,151.2L769.0,132.4L768.5,115.0L768.0,115.0L767.5,115.2L767.0,115.2L766.5,115.2L766.0,115.2L765.5,115.6L765.0,118.1L764.5,115.6L764.0,115.6L763.5,115.5L763.0,115.5L762.5,131.7L762.0,151.7L761.5,158.5L761.0,158.5L760.5,160.0L760.0,158.5L759.5,157.9L759.0,158.1L758.5,158.7L758.0,158.7L757.5,158.7L757.0,158.5L756.5,160.6L756.0,157.8L755.5,157.8L755.0,158.5L754.5,158.8L754.0,159.7L753.5,159.2L753.0,159.2L752.5,148.0L752.0,128.7L751.5,115.5L751.0,115.5L750.5,115.4L750.0,115.4L749.5,115.4L749.0,115.2L748.5,115.2L748.0,115.2L747.5,115.5L747.0,115.5L746.5,115.5L746.0,118.4L745.5,134.3L745.0,153.7L744.5,159.1L744.0,158.3L743.5,158.9L743.0,158.2L742.5,158.2L742.0,158.2L741.5,158.2L741.0,159.0L740.5,160.4L740.0,159.0L739.5,157.9L739.0,157.9L738.5,157.9L738.0,158.0L737.5,159.3L737.0,159.3L736.5,159.3L736.0,159.3L735.5,145.2L735.0,126.6L734.5,115.3L734.0,115.3L733.5,115.3L733.0,115.3L732.5,115.3L732.0,116.7L731.5,115.7L731.0,119.0L730.5,116.0L730.0,116.0L729.5,116.0L729.0,117.4L728.5,136.6L728.0,157.8L727.5,157.8L727.0,157.8L726.5,158.8L726.0,158.8L725.5,158.8L725.0,158.7L724.5,158.7L724.0,158.2L723.5,158.2L723.0,158.2L722.5,158.2L722.0,157.8L721.5,157.8L721.0,159.1L720.5,159.3L720.0,159.3L719.5,161.4L719.0,159.3L718.5,143.7L718.0,124.2L717.5,115.5L717.0,116.9L716.5,115.7L716.0,115.7L715.5,116.5L715.0,115.3L714.5,115.5L714.0,115.6L713.5,115.8L713.0,118.3L712.5,115.8L712.0,120.1L711.5,139.7L711.0,158.0L710.5,158.0L710.0,158.2L709.5,158.2L709.0,160.2L708.5,160.3L708.0,158.4L707.5,158.2L707.0,158.9L706.5,159.0L706.0,158.9L705.5,158.1L705.0,157.8L704.5,157.5L704.0,159.0L703.5,159.4L703.0,159.4L702.5,159.4L702.0,159.4L701.5,140.1L701.0,121.6L700.5,116.0L700.0,116.0L699.5,115.6L699.0,116.0L698.5,115.6L698.0,115.0L697.5,115.2L697.0,116.3L696.5,116.3L696.0,116.3L695.5,116.3L695.0,122.2L694.5,141.9L694.0,157.4L693.5,158.3L693.0,158.3L692.5,158.3L692.0,158.5L691.5,158.1L691.0,158.7L690.5,158.7L690.0,158.7L689.5,158.3L689.0,158.3L688.5,158.2L688.0,158.2L687.5,158.2L687.0,158.3L686.5,159.8L686.0,159.8L685.5,159.8L685.0,159.5L684.5,138.2L684.0,118.7L683.5,117.4L683.0,115.7L682.5,115.7L682.0,115.7L681.5,116.4L681.0,115.5L680.5,115.3L680.0,115.8L679.5,115.8L679.0,115.8L678.5,115.5L678.0,125.3L677.5,144.2L677.0,158.3L676.5,158.5L676.0,158.3L675.5,158.3L675.0,158.8L674.5,158.8L674.0,158.8L673.5,158.8L673.0,158.4L672.5,158.4L672.0,158.3L671.5,158.3L671.0,158.2L670.5,158.7L670.0,158.9L669.5,158.9L669.0,158.9L668.5,158.9L668.0,155.1L667.5,136.3L667.0,116.3L666.5,115.7L666.0,115.2L665.5,115.1L665.0,115.1L664.5,115.1L664.0,115.1L663.5,115.9L663.0,115.9L662.5,115.9L662.0,115.9L661.5,119.5L661.0,127.2L660.5,147.0L660.0,157.5L659.5,158.2L659.0,158.2L658.5,158.2L658.0,158.0L657.5,158.1L657.0,158.1L656.5,158.1L656.0,158.1L655.5,158.6L655.0,158.6L654.5,158.6L654.0,158.6L653.5,157.8L653.0,159.1L652.5,159.3L652.0,159.3L651.5,159.3L651.0,154.6L650.5,133.2L650.0,115.8L649.5,115.8L649.0,115.8L648.5,115.4L648.0,115.5L647.5,115.5L647.0,115.5L646.5,115.5L646.0,115.7L645.5,115.7L645.0,115.7L644.5,115.7L644.0,129.9L643.5,149.2L643.0,158.3L642.5,158.3L642.0,158.3L641.5,158.3L641.0,158.3L640.5,158.5L640.0,158.5L639.5,158.5L639.0,158.5L638.5,158.6L638.0,158.6L637.5,158.6L637.0,158.1L636.5,157.9L636.0,158.4L635.5,160.1L635.0,159.7L634.5,159.7L634.0,149.7L633.5,130.4L633.0,115.5L632.5,115.3L632.0,115.9L631.5,115.5L631.0,115.5L630.5,116.4L630.0,115.5L629.5,115.5L629.0,115.5L628.5,115.5L628.0,115.5L627.5,115.8L627.0,132.5L626.5,152.1L626.0,158.0L625.5,158.0L625.0,158.5L624.5,158.5L624.0,158.5L623.5,158.6L623.0,158.6L622.5,158.6L622.0,158.3L621.5,160.2L621.0,158.3L620.5,158.0L620.0,158.0L619.5,158.0L619.0,159.5L618.5,159.5L618.0,159.5L617.5,159.5L617.0,148.2L616.5,127.9L616.0,115.5L615.5,115.5L615.0,115.2L614.5,115.1L614.0,115.1L613.5,115.3L613.0,115.3L612.5,115.4L612.0,115.4L611.5,115.5L611.0,115.5L610.5,118.0L610.0,135.0L609.5,155.3L609.0,157.4L608.5,159.5L608.0,158.5L607.5,158.5L607.0,158.5L606.5,158.0L606.0,157.9L605.5,157.9L605.0,158.3L604.5,158.3L604.0,158.5L603.5,158.5L603.0,158.6L602.5,158.5L602.0,159.4L601.5,159.4L601.0,159.4L600.5,159.4L600.0,146.0L599.5,125.4L599.0,116.2L598.5,115.4L598.0,115.9L597.5,115.9L597.0,115.9L596.5,115.9L596.0,114.9L595.5,115.8L595.0,115.8L594.5,115.8L594.0,115.8L593.5,118.6L593.0,137.7L592.5,157.4L592.0,157.6L591.5,158.2L591.0,158.2L590.5,158.2L590.0,158.2L589.5,158.2L589.0,158.3L588.5,158.3L588.0,158.7L587.5,158.7L587.0,158.7L586.5,159.5L586.0,157.9L585.5,158.3L585.0,159.9L584.5,159.9L584.0,159.9L583.5,160.2L583.0,142.7L582.5,122.8L582.0,115.3L581.5,115.1L581.0,115.0L580.5,115.3L580.0,115.3L579.5,115.3L579.0,115.2L578.5,115.4L578.0,116.6L577.5,115.4L577.0,115.4L576.5,120.4L576.0,140.3L575.5,158.0L575.0,158.2L574.5,158.2L574.0,158.2L573.5,158.2L573.0,157.9L572.5,158.3L572.0,158.4L571.5,158.4L571.0,158.4L570.5,158.4L570.0,158.4L569.5,158.4L569.0,158.4L568.5,158.7L568.0,160.1L567.5,160.1L567.0,160.1L566.5,160.1L566.0,140.0L565.5,120.7L565.0,115.4L564.5,115.1L564.0,115.3L563.5,115.3L563.0,115.3L562.5,115.6L562.0,115.6L561.5,115.6L561.0,115.5L560.5,115.6L560.0,115.6L559.5,123.4L559.0,142.8L558.5,157.4L558.0,158.2L557.5,158.5L557.0,158.5L556.5,158.5L556.0,158.4L555.5,158.5L555.0,158.3L554.5,158.5L554.0,160.6L553.5,158.5L553.0,158.5L552.5,158.4L552.0,158.6L551.5,158.6L551.0,159.7L550.5,160.0L550.0,159.7L549.5,158.0L549.0,136.6L548.5,118.3L548.0,115.1L547.5,115.1L547.0,115.1L546.5,115.0L546.0,115.0L545.5,115.0L545.0,117.7L544.5,115.7L544.0,115.7L543.5,115.7L543.0,115.6L542.5,126.3L542.0,145.3L541.5,157.5L541.0,158.4L540.5,158.4L540.0,158.6L539.5,158.0L539.0,158.0L538.5,158.0L538.0,158.1L537.5,158.1L537.0,158.2L536.5,158.2L536.0,158.2L535.5,158.2L535.0,157.5L534.5,159.6L534.0,159.6L533.5,159.6L533.0,159.6L532.5,154.3L532.0,135.4L531.5,114.9L531.0,115.4L530.5,115.4L530.0,115.4L529.5,115.1L529.0,115.3L528.5,115.3L528.0,115.3L527.5,116.1L527.0,116.3L526.5,116.3L526.0,118.0L525.5,128.2L525.0,147.8L524.5,157.7L524.0,160.7L523.5,158.5L523.0,158.5L522.5,158.5L522.0,158.5L521.5,158.4L521.0,158.3L520.5,158.4L520.0,158.4L519.5,158.4L519.0,158.4L518.5,157.5L518.0,157.5L517.5,159.2L517.0,159.6L516.5,160.9L516.0,159.6L515.5,151.7L515.0,132.0L514.5,116.3L514.0,115.5L513.5,115.5L513.0,115.5L512.5,115.5L512.0,115.0L511.5,115.0L511.0,116.0L510.5,116.6L510.0,116.0L509.5,116.0L509.0,115.3L508.5,131.5L508.0,150.2L507.5,159.0L507.0,158.2L506.5,158.7L506.0,158.7L505.5,158.7L505.0,158.9L504.5,158.9L504.0,158.9L503.5,158.5L503.0,158.4L502.5,158.4L502.0,158.4L501.5,158.4L501.0,158.2L500.5,159.8L500.0,160.3L499.5,160.3L499.0,163.4L498.5,149.6L498.0,129.5L497.5,115.2L497.0,115.3L496.5,115.3L496.0,115.3L495.5,115.3L495.0,115.0L494.5,115.1L494.0,115.8L493.5,115.8L493.0,115.8L492.5,116.9L492.0,115.3L491.5,132.8L491.0,153.6L490.5,157.2L490.0,158.0L489.5,158.0L489.0,158.0L488.5,158.0L488.0,158.9L487.5,158.1L487.0,158.1L486.5,158.3L486.0,158.3L485.5,158.3L485.0,157.8L484.5,157.8L484.0,158.6L483.5,159.2L483.0,159.2L482.5,159.2L482.0,159.9L481.5,146.1L481.0,127.9L480.5,115.1L480.0,115.1L479.5,115.3L479.0,115.3L478.5,115.3L478.0,116.2L477.5,115.8L477.0,115.8L476.5,115.8L476.0,115.8L475.5,115.0L475.0,116.9L474.5,136.0L474.0,155.6L473.5,158.4L473.0,158.4L472.5,158.4L472.0,158.3L471.5,158.3L471.0,158.3L470.5,157.8L470.0,158.6L469.5,158.6L469.0,158.6L468.5,158.1L468.0,158.1L467.5,158.1L467.0,158.2L466.5,159.6L466.0,161.5L465.5,159.6L465.0,159.6L464.5,144.2L464.0,124.6L463.5,115.6L463.0,115.6L462.5,115.3L462.0,115.3L461.5,115.3L461.0,115.3L460.5,115.5L460.0,116.5L459.5,116.0L459.0,116.0L458.5,116.0L458.0,119.0L457.5,138.5L457.0,157.9L456.5,157.9L456.0,157.9L455.5,158.2L455.0,159.0L454.5,158.0L454.0,158.0L453.5,158.4L453.0,158.4L452.5,158.4L452.0,158.1L451.5,158.1L451.0,157.8L450.5,158.0L450.0,158.7L449.5,159.6L449.0,159.6L448.5,159.6L448.0,159.6L447.5,141.9L447.0,122.2L446.5,115.5L446.0,115.5L445.5,115.5L445.0,115.3L444.5,115.3L444.0,116.5L443.5,115.3L443.0,115.4L442.5,115.4L442.0,117.1L441.5,115.4L441.0,122.0L440.5,142.2L440.0,158.2L439.5,158.2L439.0,158.3L438.5,158.3L438.0,158.3L437.5,158.3L437.0,158.3L436.5,157.9L436.0,158.3L435.5,158.4L435.0,158.3L434.5,158.3L434.0,158.3L433.5,158.1L433.0,158.5L432.5,159.9L432.0,159.9L431.5,159.9L431.0,159.9L430.5,139.7L430.0,119.8L429.5,115.9L429.0,115.3L428.5,115.3L428.0,115.3L427.5,115.4L427.0,115.4L426.5,115.4L426.0,116.1L425.5,116.0L425.0,116.0L424.5,116.0L424.0,124.5L423.5,143.7L423.0,157.9L422.5,158.6L422.0,158.6L421.5,158.6L421.0,158.5L420.5,158.5L420.0,158.5L419.5,158.5L419.0,158.5L418.5,158.5L418.0,161.3L417.5,158.1L417.0,158.2L416.5,158.3L416.0,158.6L415.5,159.2L415.0,159.2L414.5,159.2L414.0,156.4L413.5,137.0L413.0,116.7L412.5,115.4L412.0,115.4L411.5,115.4L411.0,115.4L410.5,116.1L410.0,115.1L409.5,115.5L409.0,115.8L408.5,115.9L408.0,115.9L407.5,115.9L407.0,127.0L406.5,146.1L406.0,157.8L405.5,157.8L405.0,157.8L404.5,158.0L404.0,158.2L403.5,158.2L403.0,158.2L402.5,159.6L402.0,158.1L401.5,158.4L401.0,158.4L400.5,158.4L400.0,158.4L399.5,158.3L399.0,159.4L398.5,159.5L398.0,159.5L397.5,159.5L397.0,154.2L396.5,133.9L396.0,115.1L395.5,115.3L395.0,115.5L394.5,115.5L394.0,115.5L393.5,115.5L393.0,117.4L392.5,115.2L392.0,115.2L391.5,115.4L391.0,115.4L390.5,115.4L390.0,129.5L389.5,148.1L389.0,158.1L388.5,158.1L388.0,158.3L387.5,158.3L387.0,159.0L386.5,158.3L386.0,158.1L385.5,158.1L385.0,158.5L384.5,160.2L384.0,158.5L383.5,158.5L383.0,158.2L382.5,158.3L382.0,159.8L381.5,159.8L381.0,159.8L380.5,159.8L380.0,151.1L379.5,132.2L379.0,115.4L378.5,115.5L378.0,115.5L377.5,115.5L377.0,115.3L376.5,115.3L376.0,115.1L375.5,115.6L375.0,115.6L374.5,115.6L374.0,117.7L373.5,115.4L373.0,131.4L372.5,151.1L372.0,157.9L371.5,157.9L371.0,158.0L370.5,158.3L370.0,158.3L369.5,158.3L369.0,158.9L368.5,158.9L368.0,158.9L367.5,158.9L367.0,158.5L366.5,159.0L366.0,157.6L365.5,157.8L365.0,159.8L364.5,160.5L364.0,160.5L363.5,160.5L363.0,149.4L362.5,129.3L362.0,115.4L361.5,115.6L361.0,115.4L360.5,115.4L360.0,115.1L359.5,115.1L359.0,115.1L358.5,115.5L358.0,116.1L357.5,116.1L357.0,116.1L356.5,115.6L356.0,134.7L355.5,154.3L355.0,157.8L354.5,158.5L354.0,158.5L353.5,158.5L353.0,158.2L352.5,158.4L352.0,158.5L351.5,158.5L351.0,158.5L350.5,158.5L350.0,158.5L349.5,158.2L349.0,158.3L348.5,158.5L348.0,159.7L347.5,159.7L347.0,159.7L346.5,159.0L346.0,145.9L345.5,127.0L345.0,115.5L344.5,115.3L344.0,115.9L343.5,115.5L343.0,115.6L342.5,115.6L342.0,115.6L341.5,115.9L341.0,115.9L340.5,115.9L340.0,115.7L339.5,118.0L339.0,137.3L338.5,156.9L338.0,157.9L337.5,158.1L337.0,158.9L336.5,158.9L336.0,158.9L335.5,158.9L335.0,158.3L334.5,158.3L334.0,158.3L333.5,158.3L333.0,157.9L332.5,157.9L332.0,157.8L331.5,158.1L331.0,159.7L330.5,159.7L330.0,159.7L329.5,159.7L329.0,143.3L328.5,124.5L328.0,115.5L327.5,115.3L327.0,115.3L326.5,115.3L326.0,114.9L325.5,115.0L325.0,115.2L324.5,115.2L324.0,115.2L323.5,115.2L323.0,115.1L322.5,119.8L322.0,139.4L321.5,157.8L321.0,157.8L320.5,158.0L320.0,158.0L319.5,158.6L319.0,158.6L318.5,158.6L318.0,158.4L317.5,158.4L317.0,158.4L316.5,158.3L316.0,158.5L315.5,158.3L315.0,158.1L314.5,158.6L314.0,159.4L313.5,159.4L313.0,161.6L312.5,159.4L312.0,141.8L311.5,121.7L311.0,114.8L310.5,114.8L310.0,114.8L309.5,115.1L309.0,115.1L308.5,115.6L308.0,115.6L307.5,115.6L307.0,115.7L306.5,115.7L306.0,115.7L305.5,122.6L305.0,142.2L304.5,158.0L304.0,158.0L303.5,158.5L303.0,158.5L302.5,158.5L302.0,158.3L301.5,159.5L301.0,158.3L300.5,158.1L300.0,158.1L299.5,158.1L299.0,158.0L298.5,158.0L298.0,158.0L297.5,159.0L297.0,161.3L296.5,159.8L296.0,159.8L295.5,159.3L295.0,138.7L294.5,119.5L294.0,115.3L293.5,115.4L293.0,115.4L292.5,115.5L292.0,115.5L291.5,115.5L291.0,115.2L290.5,115.5L290.0,116.4L289.5,115.5L289.0,115.5L288.5,125.5L288.0,144.8L287.5,158.1L287.0,158.3L286.5,158.3L286.0,158.3L285.5,158.3L285.0,158.3L284.5,157.9L284.0,158.1L283.5,158.1L283.0,158.8L282.5,158.8L282.0,158.8L281.5,158.8L281.0,158.5L280.5,159.1L280.0,159.2L279.5,159.2L279.0,159.2L278.5,155.7L278.0,137.7L277.5,116.3L277.0,115.3L276.5,115.7L276.0,117.5L275.5,115.7L275.0,115.4L274.5,115.4L274.0,115.4L273.5,115.9L273.0,115.9L272.5,115.9L272.0,115.9L271.5,127.7L271.0,147.2L270.5,157.3L270.0,157.4L269.5,158.3L269.0,158.3L268.5,158.3L268.0,158.0L267.5,158.3L267.0,158.3L266.5,158.7L266.0,158.7L265.5,158.7L265.0,158.7L264.5,158.2L264.0,158.2L263.5,158.8L263.0,159.5L262.5,159.5L262.0,159.5L261.5,152.4L261.0,133.2L260.5,115.0L260.0,114.9L259.5,115.3L259.0,115.3L258.5,115.7L258.0,115.7L257.5,115.7L257.0,115.8L256.5,115.8L256.0,116.1L255.5,116.1L255.0,117.2L254.5,130.2L254.0,149.5L253.5,158.5L253.0,158.6L252.5,158.6L252.0,158.6L251.5,158.6L251.0,158.1L250.5,158.1L250.0,159.5L249.5,158.4L249.0,158.4L248.5,158.4L248.0,158.4L247.5,158.4L247.0,158.9L246.5,159.4L246.0,159.7L245.5,159.7L245.0,159.7L244.5,150.1L244.0,130.8L243.5,115.6L243.0,117.5L242.5,115.3L242.0,115.3L241.5,115.8L241.0,115.0L240.5,115.1L240.0,115.1L239.5,115.7L239.0,115.8L238.5,115.8L238.0,115.8L237.5,133.0L237.0,152.4L236.5,157.9L236.0,159.9L235.5,158.0L235.0,158.4L234.5,158.4L234.0,158.4L233.5,158.4L233.0,158.0L232.5,158.4L232.0,158.4L231.5,158.4L231.0,158.4L230.5,157.7L230.0,158.0L229.5,158.7L229.0,161.0L228.5,158.7L228.0,158.4L227.5,149.0L227.0,128.1L226.5,115.5L226.0,115.5L225.5,116.0L225.0,115.5L224.5,116.1L224.0,115.5L223.5,115.1L223.0,115.5L222.5,119.5L222.0,116.1L221.5,116.1L221.0,115.9L220.5,134.9L220.0,154.6L219.5,157.8L219.0,160.8L218.5,157.8L218.0,158.1L217.5,160.0L217.0,158.7L216.5,158.7L216.0,158.3L215.5,158.3L215.0,158.3L214.5,158.1L214.0,158.0L213.5,158.4L213.0,159.7L212.5,159.1L212.0,159.1L211.5,159.1L211.0,159.1L210.5,145.6L210.0,126.0L209.5,115.5L209.0,115.5L208.5,115.4L208.0,115.4L207.5,115.6L207.0,115.9L206.5,116.1L206.0,116.1L205.5,116.4L205.0,116.4L204.5,118.4L204.0,118.4L203.5,137.1L203.0,157.3L202.5,158.0L202.0,158.2L201.5,158.2L201.0,158.2L200.5,160.2L200.0,159.8L199.5,158.1L199.0,158.1L198.5,158.1L198.0,158.4L197.5,158.4L197.0,158.4L196.5,158.6L196.0,158.9L195.5,159.8L195.0,159.8L194.5,159.8L194.0,159.8L193.5,142.5L193.0,123.3L192.5,115.6L192.0,116.1L191.5,115.6L191.0,115.6L190.5,115.1L190.0,115.1L189.5,115.1L189.0,115.9L188.5,119.0L188.0,116.2L187.5,116.2L187.0,120.9L186.5,140.2L186.0,158.3L185.5,158.3L185.0,158.3L184.5,158.3L184.0,158.5L183.5,158.5L183.0,158.5L182.5,158.5L182.0,158.1L181.5,158.1L181.0,158.1L180.5,158.1L180.0,158.2L179.5,158.2L179.0,158.8L178.5,159.7L178.0,159.7L177.5,159.7L177.0,159.6L176.5,140.3L176.0,120.8L175.5,115.2L175.0,115.2L174.5,118.1L174.0,115.1L173.5,116.8L173.0,114.9L172.5,115.1L172.0,115.7L171.5,117.8L171.0,115.7L170.5,115.6L170.0,123.0L169.5,142.7L169.0,158.2L168.5,158.2L168.0,158.2L167.5,161.1L167.0,158.3L166.5,158.3L166.0,158.4L165.5,158.6L165.0,158.6L164.5,158.6L164.0,158.6L163.5,158.2L163.0,158.5L162.5,157.7L162.0,158.6L161.5,159.1L161.0,159.1L160.5,159.1L160.0,157.0L159.5,137.5L159.0,118.6L158.5,115.2L158.0,115.2L157.5,115.2L157.0,115.4L156.5,115.4L156.0,116.1L155.5,116.1L155.0,116.1L154.5,116.1L154.0,115.3L153.5,115.6L153.0,126.1L152.5,144.8L152.0,159.5L151.5,158.2L151.0,158.2L150.5,158.2L150.0,158.2L149.5,158.0L149.0,158.6L148.5,158.6L148.0,158.6L147.5,158.2L147.0,158.2L146.5,158.2L146.0,158.0L145.5,158.0L145.0,159.6L144.5,160.2L144.0,160.2L143.5,160.2L143.0,155.0L142.5,135.3L142.0,115.0L141.5,115.0L141.0,115.0L140.5,115.4L140.0,118.5L139.5,115.4L139.0,115.4L138.5,115.1L138.0,115.6L137.5,115.6L137.0,115.6L136.5,115.6L136.0,128.6L135.5,147.7L135.0,157.8L134.5,157.9L134.0,158.2L133.5,158.2L133.0,158.7L132.5,158.2L132.0,158.0L131.5,158.1L131.0,158.1L130.5,158.1L130.0,158.2L129.5,157.9L129.0,157.9L128.5,158.6L128.0,159.8L127.5,160.3L127.0,160.3L126.5,160.3L126.0,152.7L125.5,132.5L125.0,115.3L124.5,115.3L124.0,116.2L123.5,116.2L123.0,116.2L122.5,115.5L122.0,115.4L121.5,115.4L121.0,115.7L120.5,115.7L120.0,115.7L119.5,115.7L119.0,134.4L118.5,150.7L118.0,158.0L117.5,158.4L117.0,158.4L116.5,158.4L116.0,158.4L115.5,160.4L115.0,158.3L114.5,158.3L114.0,158.3L113.5,158.3L113.0,158.2L112.5,158.2L112.0,158.1L111.5,158.1L111.0,159.9L110.5,159.9L110.0,159.9L109.5,159.9L109.0,149.5L108.5,131.0L108.0,115.2L107.5,115.1L107.0,115.0L106.5,115.5L106.0,115.5L105.5,115.5L105.0,115.2L104.5,115.6L104.0,115.8L103.5,116.0L103.0,116.7L102.5,116.1L102.0,133.0L101.5,153.4L101.0,157.6L100.5,158.7L100.0,158.5L99.5,158.5L99.0,158.7L98.5,158.1L98.0,158.1L97.5,158.0L97.0,158.1L96.5,158.1L96.0,158.1L95.5,158.1L95.0,158.2L94.5,158.2L94.0,159.0L93.5,159.0L93.0,159.0L92.5,159.0L92.0,147.4L91.5,127.8L91.0,115.3L90.5,115.1L90.0,115.1L89.5,115.1L89.0,114.9L88.5,115.0L88.0,115.5L87.5,115.5L87.0,115.6L86.5,115.6L86.0,115.6L85.5,117.0L85.0,136.0L84.5,155.6L84.0,158.4L83.5,158.4L83.0,158.4L82.5,158.4L82.0,157.7L81.5,158.1L81.0,158.1L80.5,158.3L80.0,158.4L79.5,158.4L79.0,158.4L78.5,158.4L78.0,157.7L77.5,158.4L77.0,159.6L76.5,159.6L76.0,159.8L75.5,159.0L75.0,143.7L74.5,125.3L74.0,115.4L73.5,115.4L73.0,115.1L72.5,115.1L72.0,115.2L71.5,115.2L71.0,115.5L70.5,115.5L70.0,115.5L69.5,115.5L69.0,115.3L68.5,119.0L68.0,138.5L67.5,158.0L67.0,158.1L66.5,158.1L66.0,158.2L65.5,158.8L65.0,159.0L64.5,158.8L64.0,158.6L63.5,158.6L63.0,158.8L62.5,158.6L62.0,158.6L61.5,158.0L61.0,158.0L60.5,159.6L60.0,160.0L59.5,160.0L59.0,161.4L58.5,159.2L58.0,142.7L57.5,122.6L57.0,115.2L56.5,115.5L56.0,117.1L55.5,115.2L55.0,115.2L54.5,115.2L54.0,115.6L53.5,115.6L53.0,116.1L52.5,116.1L52.0,116.1L51.5,121.9L51.0,141.4L50.5,158.0L50.0,158.0L49.5,158.7L49.0,158.7L48.5,158.7L48.0,158.3L47.5,158.3L47.0,158.3L46.5,158.3L46.0,158.3L45.5,158.2L45.0,158.2L44.5,158.2L44.0,158.7L43.5,159.2L43.0,160.2L42.5,160.2L42.0,160.2L41.5,160.2L41.0,140.2L40.5,120.7L40.0,115.5L39.5,115.5L39.0,115.5L38.5,115.5L38.0,115.3L37.5,115.3L37.0,115.7L36.5,115.7L36.0,115.7L35.5,115.7L35.0,115.1L34.5,123.6L34.0,143.5L33.5,158.0L33.0,158.0L32.5,158.2L32.0,158.2L31.5,158.2L31.0,158.4L30.5,158.6L30.0,158.6L29.5,158.6L29.0,158.6L28.5,159.3L28.0,158.6L27.5,157.7L27.0,158.3L26.5,159.3L26.0,159.1L25.5,159.1L25.0,159.1L24.5,156.1L24.0,136.3L23.5,117.8L23.0,115.5L22.5,117.2L22.0,115.4L21.5,115.4L21.0,115.4L20.5,115.3L20.0,115.5L19.5,115.5L19.0,115.6L18.5,115.6L18.0,115.6L17.5,126.4L17.0,146.5L16.5,157.8L16.0,157.9L15.5,158.3L15.0,158.3L14.5,158.3L14.0,158.5L13.5,158.5L13.0,158.5L12.5,158.5L12.0,158.2L11.5,158.2L11.0,158.0L10.5,158.0L10.0,158.6L9.5,159.7L9.0,160.0L8.5,160.0L8.0,160.0L7.5,153.9L7.0,134.0L6.5,115.8L6.0,115.8L5.5,115.4L5.0,115.5L4.5,115.5L4.0,115.5L3.5,115.5L3.0,115.5L2.5,115.5L2.0,115.4L1.5,115.4L1.0,115.4L0.5,115.2Z" fill="#ff0000"/><path d="M0.5,180.5L1.0,181.2L1.5,181.2L2.0,180.8L2.5,180.3L3.0,180.3L3.5,180.4L4.0,180.4L4.5,180.4L5.0,178.9L5.5,180.9L6.0,180.7L6.5,179.8L7.0,180.6L7.5,180.6L8.0,180.6L8.5,180.7L9.0,180.7L9.5,180.4L10.0,180.1L10.5,179.9L11.0,180.8L11.5,180.4L12.0,180.4L12.5,180.4L13.0,181.0L13.5,180.7L14.0,180.7L14.5,180.7L15.0,180.7L15.5,180.2L16.0,180.2L16.5,180.2L17.0,180.2L17.5,180.2L18.0,180.2L18.5,180.8L19.0,180.7L19.5,180.7L20.0,180.6L20.5,180.6L21.0,180.6L21.5,181.0L22.0,180.4L22.5,179.9L23.0,180.4L23.5,180.6L24.0,180.6L24.5,180.8L25.0,180.6L25.5,180.6L26.0,180.6L26.5,181.0L27.0,180.6L27.5,180.6L28.0,180.3L28.5,179.8L29.0,179.8L29.5,179.8L30.0,181.1L30.5,181.1L31.0,180.7L31.5,180.7L32.0,181.0L32.5,180.6L33.0,180.5L33.5,180.5L34.0,180.5L34.5,180.5L35.0,180.8L35.5,180.8L36.0,180.7L36.5,180.7L37.0,181.2L37.5,180.0L38.0,180.5L38.5,180.5L39.0,181.1L39.5,180.2L40.0,180.4L40.5,181.0L41.0,180.7L41.5,180.7L42.0,180.7L42.5,180.2L43.0,180.2L43.5,181.0L44.0,181.0L44.5,179.0L45.0,180.1L45.5,180.1L46.0,180.4L46.5,180.1L47.0,180.1L47.5,180.2L48.0,180.3L48.5,180.3L49.0,179.4L49.5,180.2L50.0,180.2L50.5,181.1L51.0,181.0L51.5,180.9L52.0,180.9L52.5,180.5L53.0,180.5L53.5,180.5L54.0,179.7L54.5,180.3L55.0,180.3L55.5,180.8L56.0,180.1L56.5,180.1L57.0,180.1L57.5,180.9L58.0,180.5L58.5,180.3L59.0,179.9L59.5,180.3L60.0,180.7L60.5,180.7L61.0,180.9L61.5,180.3L62.0,180.3L62.5,180.3L63.0,180.5L63.5,180.5L64.0,180.5L64.5,180.3L65.0,180.0L65.5,180.3L66.0,180.3L66.5,180.4L67.0,180.4L67.5,180.3L68.0,180.3L68.5,180.3L69.0,180.3L69.5,180.4L70.0,181.0L70.5,180.8L71.0,180.5L71.5,180.3L72.0,180.3L72.5,180.5L73.0,180.5L73.5,180.6L74.0,180.6L74.5,179.9L75.0,179.5L75.5,179.4L76.0,180.4L76.5,179.6L77.0,180.4L77.5,180.4L78.0,180.2L78.5,180.4L79.0,180.9L79.5,180.9L80.0,180.9L80.5,180.8L81.0,179.3L81.5,180.8L82.0,180.8L82.5,180.7L83.0,180.7L83.5,180.8L84.0,180.8L84.5,180.7L85.0,180.7L85.5,180.7L86.0,181.0L86.5,181.0L87.0,181.0L87.5,181.0L88.0,181.3L88.5,180.7L89.0,180.7L89.5,180.7L90.0,179.9L90.5,179.9L91.0,180.4L91.5,180.6L92.0,180.6L92.5,180.6L93.0,181.0L93.5,180.3L94.0,180.3L94.5,180.5L95.0,180.2L95.5,180.2L96.0,180.0L96.5,180.0L97.0,180.0L97.5,180.7L98.0,180.2L98.5,180.2L99.0,180.2L99.5,180.2L100.0,180.2L100.5,179.0L101.0,180.5L101.5,180.5L102.0,181.0L102.5,180.3L103.0,180.3L103.5,180.1L104.0,180.1L104.5,181.0L105.0,181.1L105.5,181.1L106.0,180.7L106.5,180.7L107.0,180.6L107.5,180.9L108.0,179.8L108.5,179.8L109.0,179.8L109.5,180.5L110.0,180.5L110.5,180.1L111.0,180.1L111.5,180.4L112.0,180.5L112.5,180.7L113.0,180.8L113.5,181.1L114.0,181.1L114.5,180.5L115.0,179.9L115.5,179.9L116.0,179.9L116.5,179.7L117.0,179.7L117.5,179.7L118.0,180.0L118.5,180.0L119.0,181.0L119.5,180.5L120.0,180.4L120.5,179.8L121.0,179.8L121.5,179.8L122.0,180.6L122.5,180.6L123.0,180.2L123.5,180.2L124.0,179.5L124.5,179.5L125.0,179.9L125.5,179.9L126.0,180.2L126.5,180.2L127.0,180.7L127.5,180.8L128.0,180.8L128.5,180.7L129.0,180.3L129.5,181.4L130.0,180.3L130.5,180.3L131.0,179.6L131.5,179.6L132.0,180.2L132.5,180.8L133.0,180.6L133.5,180.6L134.0,180.6L134.5,181.0L135.0,180.2L135.5,179.6L136.0,180.5L136.5,180.3L137.0,179.0L137.5,180.1L138.0,180.4L138.5,180.4L139.0,180.4L139.5,180.4L140.0,180.7L140.5,180.0L141.0,180.0L141.5,180.8L142.0,180.0L142.5,180.0L143.0,180.0L143.5,180.6L144.0,180.5L144.5,180.5L145.0,180.5L145.5,180.7L146.0,181.3L146.5,180.3L147.0,180.3L147.5,179.8L148.0,179.8L148.5,179.8L149.0,180.6L149.5,180.6L150.0,181.0L150.5,180.4L151.0,180.4L151.5,180.0L152.0,181.0L152.5,180.8L153.0,180.8L153.5,180.5L154.0,180.3L154.5,180.3L155.0,180.3L155.5,180.5L156.0,180.3L156.5,180.1L157.0,180.6L157.5,181.2L158.0,181.2L158.5,180.3L159.0,180.3L159.5,179.7L160.0,179.4L160.5,180.4L161.0,180.0L161.5,180.0L162.0,180.6L162.5,180.6L163.0,180.5L163.5,180.2L164.0,180.5L164.5,180.6L165.0,180.6L165.5,180.9L166.0,180.8L166.5,180.2L167.0,180.3L167.5,180.3L168.0,180.3L168.5,180.8L169.0,180.8L169.5,180.2L170.0,180.2L170.5,180.2L171.0,180.2L171.5,179.4L172.0,180.2L172.5,180.5L173.0,180.6L173.5,180.8L174.0,180.8L174.5,180.8L175.0,180.2L175.5,179.0L176.0,180.2L176.5,181.2L177.0,181.2L177.5,180.6L178.0,180.2L178.5,180.1L179.0,180.1L179.5,180.3L180.0,180.7L180.5,180.3L181.0,180.3L181.5,180.3L182.0,181.1L182.5,180.3L183.0,180.3L183.5,180.3L184.0,180.2L184.5,180.2L185.0,179.8L185.5,180.5L186.0,181.5L186.5,180.8L187.0,180.5L187.5,180.4L188.0,180.4L188.5,180.4L189.0,180.7L189.5,179.9L190.0,179.9L190.5,179.3L191.0,180.5L191.5,180.1L192.0,180.1L192.5,181.0L193.0,181.7L193.5,181.4L194.0,179.1L194.5,180.5L195.0,180.5L195.5,180.3L196.0,180.3L196.5,180.8L197.0,180.8L197.5,180.8L198.0,181.0L198.5,179.9L199.0,179.9L199.5,179.9L200.0,180.0L200.5,180.5L201.0,181.0L201.5,181.0L202.0,180.8L202.5,180.3L203.0,180.3L203.5,180.3L204.0,180.5L204.5,180.1L205.0,180.1L205.5,180.1L206.0,180.7L206.5,181.2L207.0,178.7L207.5,180.0L208.0,180.0L208.5,180.3L209.0,180.7L209.5,180.7L210.0,180.9L210.5,180.9L211.0,180.8L211.5,180.4L212.0,180.4L212.5,180.4L213.0,180.4L213.5,180.7L214.0,181.0L214.5,180.7L215.0,179.7L215.5,180.6L216.0,180.6L216.5,180.3L217.0,180.3L217.5,179.1L218.0,180.5L218.5,180.5L219.0,180.6L219.5,180.5L220.0,180.5L220.5,180.3L221.0,180.3L221.5,180.3L222.0,180.3L222.5,180.3L223.0,180.4L223.5,180.4L224.0,179.5L224.5,180.0L225.0,180.1L225.5,179.7L226.0,179.7L226.5,179.7L227.0,180.9L227.5,179.9L228.0,179.6L228.5,179.6L229.0,179.8L229.5,180.1L230.0,180.1L230.5,180.5L231.0,180.5L231.5,181.2L232.0,180.2L232.5,180.2L233.0,180.2L233.5,180.6L234.0,180.3L234.5,180.6L235.0,179.8L235.5,180.0L236.0,180.0L236.5,180.9L237.0,181.3L237.5,180.8L238.0,180.2L238.5,180.2L239.0,180.2L239.5,180.7L240.0,180.4L240.5,180.6L241.0,180.5L241.5,180.5L242.0,180.5L242.5,181.3L243.0,181.1L243.5,180.3L244.0,179.0L244.5,180.3L245.0,180.6L245.5,180.2L246.0,180.2L246.5,180.3L247.0,180.1L247.5,180.1L248.0,180.0L248.5,180.7L249.0,180.4L249.5,180.4L250.0,179.5L250.5,180.3L251.0,180.3L251.5,180.4L252.0,180.4L252.5,180.9L253.0,180.9L253.5,181.1L254.0,181.1L254.5,181.0L255.0,180.4L255.5,180.3L256.0,180.9L256.5,180.9L257.0,180.9L257.5,181.3L258.0,181.2L258.5,180.6L259.0,180.6L259.5,179.6L260.0,179.6L260.5,179.6L261.0,180.3L261.5,180.3L262.0,180.3L262.5,180.4L263.0,179.6L263.5,179.5L264.0,177.9L264.5,179.8L265.0,179.6L265.5,180.8L266.0,180.2L266.5,180.2L267.0,180.2L267.5,181.1L268.0,180.4L268.5,180.4L269.0,181.2L269.5,181.1L270.0,180.9L270.5,180.5L271.0,180.5L271.5,181.3L272.0,180.8L272.5,180.8L273.0,181.0L273.5,181.2L274.0,180.6L274.5,180.5L275.0,179.6L275.5,180.5L276.0,179.2L276.5,180.1L277.0,180.1L277.5,180.2L278.0,180.2L278.5,180.4L279.0,180.4L279.5,180.4L280.0,180.2L280.5,180.2L281.0,180.2L281.5,181.3L282.0,180.4L282.5,180.4L283.0,178.6L283.5,180.9L284.0,180.6L284.5,180.6L285.0,180.6L285.5,180.8L286.0,180.9L286.5,180.9L287.0,180.0L287.5,180.0L288.0,180.8L288.5,180.8L289.0,181.6L289.5,180.9L290.0,180.9L290.5,179.9L291.0,180.6L291.5,180.6L292.0,180.4L292.5,180.4L293.0,180.1L293.5,180.1L294.0,180.1L294.5,178.6L295.0,180.5L295.5,180.4L296.0,181.3L296.5,180.1L297.0,181.0L297.5,180.5L298.0,180.3L298.5,180.3L299.0,181.1L299.5,181.1L300.0,181.3L300.5,180.3L301.0,180.3L301.5,181.0L302.0,181.1L302.5,181.1L303.0,180.1L303.5,180.1L304.0,180.1L304.5,180.8L305.0,180.2L305.5,180.2L306.0,180.2L306.5,180.4L307.0,180.4L307.5,180.9L308.0,179.9L308.5,180.6L309.0,180.6L309.5,180.2L310.0,180.2L310.5,180.8L311.0,180.8L311.5,180.8L312.0,181.0L312.5,181.1L313.0,181.2L313.5,181.4L314.0,180.9L314.5,180.1L315.0,180.1L315.5,179.5L316.0,180.0L316.5,180.8L317.0,181.2L317.5,180.6L318.0,180.6L318.5,180.6L319.0,181.3L319.5,180.7L320.0,179.9L320.5,179.9L321.0,181.2L321.5,180.9L322.0,180.9L322.5,180.6L323.0,180.6L323.5,180.3L324.0,180.3L324.5,180.3L325.0,180.5L325.5,180.5L326.0,180.7L326.5,180.7L327.0,180.7L327.5,180.5L328.0,180.5L328.5,180.5L329.0,180.3L329.5,179.8L330.0,179.5L330.5,179.8L331.0,180.0L331.5,180.8L332.0,180.4L332.5,180.4L333.0,180.4L333.5,180.3L334.0,180.3L334.5,179.8L335.0,180.6L335.5,180.5L336.0,180.5L336.5,180.8L337.0,180.1L337.5,180.1L338.0,180.1L338.5,180.4L339.0,180.6L339.5,180.7L340.0,180.7L340.5,180.7L341.0,180.5L341.5,180.5L342.0,180.5L342.5,181.0L343.0,180.2L343.5,180.2L344.0,181.0L344.5,180.2L345.0,180.2L345.5,180.2L346.0,180.9L346.5,181.3L347.0,180.8L347.5,180.8L348.0,180.8L348.5,180.9L349.0,180.9L349.5,180.7L350.0,180.0L350.5,180.0L351.0,180.0L351.5,180.5L352.0,180.5L352.5,180.1L353.0,177.9L353.5,180.7L354.0,179.4L354.5,180.7L355.0,179.5L355.5,180.4L356.0,180.4L356.5,180.0L357.0,180.0L357.5,180.0L358.0,180.0L358.5,180.5L359.0,180.3L359.5,180.3L360.0,180.3L360.5,180.1L361.0,180.1L361.5,180.6L362.0,180.6L362.5,180.5L363.0,180.5L363.5,181.4L364.0,181.1L364.5,181.1L365.0,181.1L365.5,180.2L366.0,180.2L366.5,180.2L367.0,181.1L367.5,181.1L368.0,181.1L368.5,181.3L369.0,180.3L369.5,180.1L370.0,180.1L370.5,180.1L371.0,180.1L371.5,180.8L372.0,181.1L372.5,180.9L373.0,180.9L373.5,181.0L374.0,181.0L374.5,180.4L375.0,180.4L375.5,180.4L376.0,180.9L376.5,180.2L377.0,180.2L377.5,180.6L378.0,180.8L378.5,179.7L379.0,180.8L379.5,180.8L380.0,180.4L380.5,180.7L381.0,180.7L381.5,180.7L382.0,181.1L382.5,180.3L383.0,180.3L383.5,180.3L384.0,181.4L384.5,180.9L385.0,180.6L385.5,180.5L386.0,180.5L386.5,180.5L387.0,180.5L387.5,180.5L388.0,181.0L388.5,180.4L389.0,180.4L389.5,180.4L390.0,181.1L390.5,181.0L391.0,180.5L391.5,180.5L392.0,180.5L392.5,180.8L393.0,180.7L393.5,180.8L394.0,180.8L394.5,180.8L395.0,180.9L395.5,181.0L396.0,180.6L396.5,180.6L397.0,180.6L397.5,181.9L398.0,180.8L398.5,180.8L399.0,180.0L399.5,179.2L400.0,180.0L400.5,180.1L401.0,180.5L401.5,180.5L402.0,179.9L402.5,180.2L403.0,181.0L403.5,181.0L404.0,180.5L404.5,180.5L405.0,180.8L405.5,180.8L406.0,180.7L406.5,180.7L407.0,180.7L407.5,180.1L408.0,180.1L408.5,179.8L409.0,180.1L409.5,180.1L410.0,180.3L410.5,180.3L411.0,180.0L411.5,180.7L412.0,178.9L412.5,180.4L413.0,180.4L413.5,180.6L414.0,180.2L414.5,180.2L415.0,180.2L415.5,180.8L416.0,180.8L416.5,180.5L417.0,180.5L417.5,180.5L418.0,180.7L418.5,180.7L419.0,180.7L419.5,180.5L420.0,179.1L420.5,180.1L421.0,180.1L421.5,180.1L422.0,180.9L422.5,180.9L423.0,180.1L423.5,180.1L424.0,180.1L424.5,179.8L425.0,180.6L425.5,180.7L426.0,180.7L426.5,180.7L427.0,180.7L427.5,180.7L428.0,180.3L428.5,179.8L429.0,179.3L429.5,180.3L430.0,180.2L430.5,180.2L431.0,180.1L431.5,180.1L432.0,180.8L432.5,180.0L433.0,180.0L433.5,180.0L434.0,180.1L434.5,178.9L435.0,181.1L435.5,180.8L436.0,180.8L436.5,181.3L437.0,181.3L437.5,181.1L438.0,181.1L438.5,180.6L439.0,180.5L439.5,180.5L440.0,180.5L440.5,180.4L441.0,180.4L441.5,180.4L442.0,181.1L442.5,181.1L443.0,181.1L443.5,181.1L444.0,181.2L444.5,180.9L445.0,180.7L445.5,180.7L446.0,180.0L446.5,180.0L447.0,180.6L447.5,181.1L448.0,180.9L448.5,180.9L449.0,180.5L449.5,180.5L450.0,180.5L450.5,180.5L451.0,179.3L451.5,179.5L452.0,179.3L452.5,180.0L453.0,180.0L453.5,179.4L454.0,179.3L454.5,179.8L455.0,180.8L455.5,181.0L456.0,181.0L456.5,180.2L457.0,181.0L457.5,180.4L458.0,180.4L458.5,180.4L459.0,180.5L459.5,180.5L460.0,180.5L460.5,180.9L461.0,180.2L461.5,180.2L462.0,180.2L462.5,180.7L463.0,180.3L463.5,180.3L464.0,180.3L464.5,180.3L465.0,180.1L465.5,180.1L466.0,180.2L466.5,180.2L467.0,180.7L467.5,180.5L468.0,180.5L468.5,180.5L469.0,180.8L469.5,181.3L470.0,181.0L470.5,180.8L471.0,180.8L471.5,180.4L472.0,180.4L472.5,180.1L473.0,179.8L473.5,179.8L474.0,180.8L474.5,180.7L475.0,180.5L475.5,180.5L476.0,180.5L476.5,181.0L477.0,180.7L477.5,180.7L478.0,179.9L478.5,179.9L479.0,179.9L479.5,180.5L480.0,181.1L480.5,181.1L481.0,180.9L481.5,180.9L482.0,179.6L482.5,178.2L483.0,179.6L483.5,179.7L484.0,180.5L484.5,181.1L485.0,180.0L485.5,180.4L486.0,181.1L486.5,179.8L487.0,179.8L487.5,180.3L488.0,181.3L488.5,181.0L489.0,180.4L489.5,180.4L490.0,180.4L490.5,180.4L491.0,180.3L491.5,180.3L492.0,181.2L492.5,181.1L493.0,180.6L493.5,180.6L494.0,180.6L494.5,181.2L495.0,180.7L495.5,180.6L496.0,180.6L496.5,179.4L497.0,180.3L497.5,180.3L498.0,179.3L498.5,180.7L499.0,180.5L499.5,179.3L500.0,179.4L500.5,180.1L501.0,181.1L501.5,180.4L502.0,179.4L502.5,180.0L503.0,180.0L503.5,180.0L504.0,180.8L504.5,180.5L505.0,180.5L505.5,180.5L506.0,180.7L506.5,180.7L507.0,180.7L507.5,181.0L508.0,181.0L508.5,181.0L509.0,180.5L509.5,180.5L510.0,181.0L510.5,180.5L511.0,180.4L511.5,180.0L512.0,180.0L512.5,180.0L513.0,180.4L513.5,181.0L514.0,180.9L514.5,180.9L515.0,180.8L515.5,180.2L516.0,179.8L516.5,180.8L517.0,181.1L517.5,180.4L518.0,180.4L518.5,180.4L519.0,180.3L519.5,180.3L520.0,180.8L520.5,180.8L521.0,180.8L521.5,180.8L522.0,180.8L522.5,181.0L523.0,181.1L523.5,180.2L524.0,180.2L524.5,180.6L525.0,180.6L525.5,180.6L526.0,181.1L526.5,181.1L527.0,181.1L527.5,181.2L528.0,181.2L528.5,180.5L529.0,180.5L529.5,180.6L530.0,180.6L530.5,180.9L531.0,181.4L531.5,180.6L532.0,180.8L532.5,180.8L533.0,180.8L533.5,180.2L534.0,180.2L534.5,180.2L535.0,180.4L535.5,180.6L536.0,180.6L536.5,180.6L537.0,181.0L537.5,180.6L538.0,180.6L538.5,179.8L539.0,179.8L539.5,179.8L540.0,179.2L540.5,180.2L541.0,180.5L541.5,180.7L542.0,180.5L542.5,180.5L543.0,180.5L543.5,180.4L544.0,180.4L544.5,180.7L545.0,180.7L545.5,180.8L546.0,178.8L546.5,178.8L547.0,178.8L547.5,180.1L548.0,180.1L548.5,180.6L549.0,180.3L549.5,180.5L550.0,180.5L550.5,180.8L551.0,181.1L551.5,180.5L552.0,180.5L552.5,180.5L553.0,181.1L553.5,181.1L554.0,180.0L554.5,180.6L555.0,180.4L555.5,180.4L556.0,180.4L556.5,180.8L557.0,180.5L557.5,180.5L558.0,180.8L558.5,180.4L559.0,179.0L559.5,180.4L560.0,180.8L560.5,180.5L561.0,180.5L561.5,180.6L562.0,180.5L562.5,180.5L563.0,180.8L563.5,180.8L564.0,180.8L564.5,180.8L565.0,180.8L565.5,181.1L566.0,181.1L566.5,179.8L567.0,180.9L567.5,180.1L568.0,180.6L568.5,180.6L569.0,180.8L569.5,180.8L570.0,180.3L570.5,180.3L571.0,180.3L571.5,180.6L572.0,180.6L572.5,180.6L573.0,180.6L573.5,180.6L574.0,180.6L574.5,180.4L575.0,180.4L575.5,181.1L576.0,181.3L576.5,180.9L577.0,180.9L577.5,180.7L578.0,180.7L578.5,180.7L579.0,181.3L579.5,180.7L580.0,180.2L580.5,180.0L581.0,180.0L581.5,180.9L582.0,180.7L582.5,180.1L583.0,180.7L583.5,180.1L584.0,180.1L584.5,181.3L585.0,181.0L585.5,180.9L586.0,180.7L586.5,180.1L587.0,180.1L587.5,180.1L588.0,180.4L588.5,180.4L589.0,180.9L589.5,180.2L590.0,179.3L590.5,180.5L591.0,180.5L591.5,180.5L592.0,180.9L592.5,180.7L593.0,180.7L593.5,181.2L594.0,181.2L594.5,180.4L595.0,180.4L595.5,180.4L596.0,180.6L596.5,181.0L597.0,181.5L597.5,180.0L598.0,180.1L598.5,180.1L599.0,179.8L599.5,179.8L600.0,178.6L600.5,180.4L601.0,180.4L601.5,180.9L602.0,180.6L602.5,180.6L603.0,180.6L603.5,179.7L604.0,179.7L604.5,180.4L605.0,180.5L605.5,181.1L606.0,180.6L606.5,180.6L607.0,180.6L607.5,180.5L608.0,180.5L608.5,180.7L609.0,181.4L609.5,181.5L610.0,181.1L610.5,180.6L611.0,180.6L611.5,180.4L612.0,181.0L612.5,180.9L613.0,180.9L613.5,180.8L614.0,180.8L614.5,180.3L615.0,180.9L615.5,180.8L616.0,180.8L616.5,180.8L617.0,180.0L617.5,180.0L618.0,180.0L618.5,179.8L619.0,179.8L619.5,180.7L620.0,180.7L620.5,180.5L621.0,180.5L621.5,180.4L622.0,180.4L622.5,179.3L623.0,180.1L623.5,178.6L624.0,180.7L624.5,180.7L625.0,180.7L625.5,180.7L626.0,180.5L626.5,180.5L627.0,180.4L627.5,180.4L628.0,180.6L628.5,180.6L629.0,181.0L629.5,180.8L630.0,180.2L630.5,180.6L631.0,180.6L631.5,180.9L632.0,180.9L632.5,180.9L633.0,180.1L633.5,180.7L634.0,180.7L634.5,180.7L635.0,180.7L635.5,180.7L636.0,180.7L636.5,181.0L637.0,180.9L637.5,180.9L638.0,181.0L638.5,180.7L639.0,180.7L639.5,180.7L640.0,181.0L640.5,180.7L641.0,180.2L641.5,180.2L642.0,180.2L642.5,180.9L643.0,181.0L643.5,180.2L644.0,180.2L644.5,180.2L645.0,180.2L645.5,180.2L646.0,179.3L646.5,179.7L647.0,180.5L647.5,180.8L648.0,180.8L648.5,180.6L649.0,180.6L649.5,180.6L650.0,179.2L650.5,181.0L651.0,181.1L651.5,181.4L652.0,181.2L652.5,180.9L653.0,180.9L653.5,180.6L654.0,180.6L654.5,180.0L655.0,180.0L655.5,180.0L656.0,180.6L656.5,180.4L657.0,179.3L657.5,180.4L658.0,181.5L658.5,180.5L659.0,179.8L659.5,179.8L660.0,179.8L660.5,180.2L661.0,180.2L661.5,180.2L662.0,180.2L662.5,180.9L663.0,180.1L663.5,180.2L664.0,180.2L664.5,180.6L665.0,180.7L665.5,181.1L666.0,181.1L666.5,178.6L667.0,180.0L667.5,180.5L668.0,180.1L668.5,180.1L669.0,180.1L669.5,181.3L670.0,180.8L670.5,180.6L671.0,180.0L671.5,180.6L672.0,180.6L672.5,180.3L673.0,179.4L673.5,180.3L674.0,179.8L674.5,180.2L675.0,180.8L675.5,181.4L676.0,180.3L676.5,180.5L677.0,180.5L677.5,180.9L678.0,180.9L678.5,180.9L679.0,181.2L679.5,181.1L680.0,180.0L680.5,180.0L681.0,180.6L681.5,180.6L682.0,181.0L682.5,180.5L683.0,180.5L683.5,180.6L684.0,180.6L684.5,179.7L685.0,179.7L685.5,181.5L686.0,181.2L686.5,180.3L687.0,180.3L687.5,180.3L688.0,180.3L688.5,179.8L689.0,180.3L689.5,180.7L690.0,181.0L690.5,180.5L691.0,180.2L691.5,180.2L692.0,181.1L692.5,180.5L693.0,180.5L693.5,180.9L694.0,181.2L694.5,180.6L695.0,180.6L695.5,180.6L696.0,180.3L696.5,179.7L697.0,180.9L697.5,181.2L698.0,180.9L698.5,180.5L699.0,180.2L699.5,180.2L700.0,180.7L700.5,180.6L701.0,180.3L701.5,180.3L702.0,180.3L702.5,180.9L703.0,181.2L703.5,180.6L704.0,180.2L704.5,180.2L705.0,180.9L705.5,180.3L706.0,180.3L706.5,180.3L707.0,180.4L707.5,180.4L708.0,180.8L708.5,180.8L709.0,181.4L709.5,181.4L710.0,180.9L710.5,180.9L711.0,179.8L711.5,180.8L712.0,180.6L712.5,180.6L713.0,180.6L713.5,179.5L714.0,180.3L714.5,180.3L715.0,180.6L715.5,180.2L716.0,180.2L716.5,180.2L717.0,180.3L717.5,181.0L718.0,179.8L718.5,179.8L719.0,180.5L719.5,180.9L720.0,180.5L720.5,180.5L721.0,180.5L721.5,180.5L722.0,180.3L722.5,180.3L723.0,180.3L723.5,180.0L724.0,180.0L724.5,180.0L725.0,180.4L725.5,180.4L726.0,179.9L726.5,179.9L727.0,180.3L727.5,180.3L728.0,180.5L728.5,180.5L729.0,178.9L729.5,178.9L730.0,178.9L730.5,180.6L731.0,179.5L731.5,180.8L732.0,180.9L732.5,180.8L733.0,180.8L733.5,180.8L734.0,181.5L734.5,180.2L735.0,180.2L735.5,180.8L736.0,180.8L736.5,179.3L737.0,180.6L737.5,180.4L738.0,180.2L738.5,180.2L739.0,180.2L739.5,179.8L740.0,180.9L740.5,180.4L741.0,181.0L741.5,181.1L742.0,181.1L742.5,181.1L743.0,180.5L743.5,180.5L744.0,180.3L744.5,180.3L745.0,180.1L745.5,180.1L746.0,180.1L746.5,180.6L747.0,180.6L747.5,180.6L748.0,179.9L748.5,179.9L749.0,180.2L749.5,180.1L750.0,180.1L750.5,180.7L751.0,180.7L751.5,180.4L752.0,180.4L752.5,180.4L753.0,180.7L753.5,179.9L754.0,179.9L754.5,179.9L755.0,180.7L755.5,180.7L756.0,181.0L756.5,180.7L757.0,180.4L757.5,180.4L758.0,180.4L758.5,180.6L759.0,180.6L759.5,180.9L760.0,180.0L760.5,180.1L761.0,180.4L761.5,180.4L762.0,180.4L762.5,180.9L763.0,180.9L763.5,180.0L764.0,180.0L764.5,180.0L765.0,180.6L765.5,179.2L766.0,180.2L766.5,180.6L767.0,180.6L767.5,181.0L768.0,180.8L768.5,180.6L769.0,180.6L769.5,179.8L770.0,179.8L770.5,179.8L771.0,180.6L771.5,180.4L772.0,180.4L772.5,180.4L773.0,180.6L773.5,180.6L774.0,180.6L774.5,180.6L775.0,180.9L775.5,180.3L776.0,180.3L776.5,180.5L777.0,181.0L777.5,181.0L778.0,179.2L778.5,180.3L779.0,180.3L779.5,180.7L780.0,180.4L780.5,180.3L781.0,180.3L781.5,180.6L782.0,180.6L782.5,180.6L783.0,180.5L783.5,180.5L784.0,181.0L784.5,180.5L785.0,180.5L785.5,180.1L786.0,180.1L786.5,180.1L787.0,180.4L787.5,181.3L788.0,181.0L788.5,180.7L789.0,179.9L789.5,179.9L790.0,181.0L790.5,180.4L791.0,180.4L791.5,180.8L792.0,179.9L792.5,179.9L793.0,179.9L793.5,180.7L794.0,180.6L794.5,180.5L795.0,180.5L795.5,180.5L796.0,180.8L796.5,180.1L797.0,180.1L797.5,180.7L798.0,180.7L798.5,180.3L799.0,180.3L799.5,180.3L800.0,180.3L800.5,179.0L801.0,180.4L801.5,180.1L802.0,180.6L802.5,180.9L803.0,180.8L803.5,180.8L804.0,180.8L804.5,180.4L805.0,181.1L805.5,180.9L806.0,180.9L806.5,180.0L807.0,180.9L807.5,181.0L808.0,181.0L808.5,180.7L809.0,180.7L809.5,180.1L810.0,180.7L810.5,180.7L811.0,180.7L811.5,180.7L812.0,181.0L812.5,181.0L813.0,181.1L813.5,180.5L814.0,180.5L814.5,180.5L815.0,180.5L815.5,180.5L816.0,181.0L816.5,180.8L817.0,180.4L817.5,180.4L818.0,179.8L818.5,178.5L819.0,180.1L819.5,180.1L820.0,180.4L820.5,180.4L821.0,180.4L821.5,181.0L822.0,181.0L822.5,179.9L823.0,179.9L823.5,179.9L824.0,180.4L824.5,180.4L825.0,180.4L825.5,180.9L826.0,180.4L826.5,180.0L827.0,180.0L827.5,180.0L828.0,180.5L828.5,180.5L829.0,180.4L829.5,180.4L830.0,180.4L830.5,180.6L831.0,180.6L831.5,180.6L832.0,180.3L832.5,180.0L833.0,180.3L833.5,180.8L834.0,180.0L834.5,179.7L835.0,180.0L835.5,180.9L836.0,180.9L836.5,180.9L837.0,180.4L837.5,180.4L838.0,180.2L838.5,180.2L839.0,180.2L839.5,179.6L840.0,180.6L840.5,180.6L841.0,180.6L841.5,180.8L842.0,180.9L842.5,178.2L843.0,180.6L843.5,180.6L844.0,180.9L844.5,180.9L845.0,180.4L845.5,180.4L846.0,181.1L846.5,180.6L847.0,181.1L847.5,179.8L848.0,179.8L848.5,180.7L849.0,180.9L849.5,180.9L850.0,180.5L850.5,180.3L851.0,180.5L851.5,180.5L852.0,180.8L852.5,180.8L853.0,180.8L853.5,180.1L854.0,180.1L854.5,180.1L855.0,180.8L855.5,180.5L856.0,180.5L856.5,177.9L857.0,180.1L857.5,180.3L858.0,180.6L858.5,181.0L859.0,180.9L859.5,181.2L860.0,181.2L860.5,180.6L861.0,180.9L861.5,180.9L862.0,180.8L862.5,180.8L863.0,180.6L863.5,180.5L864.0,180.5L864.5,180.5L865.0,181.0L865.5,180.8L866.0,180.1L866.5,180.5L867.0,180.1L867.5,180.1L868.0,180.4L868.5,180.4L869.0,180.7L869.5,180.7L870.0,180.4L870.5,180.4L871.0,180.6L871.5,180.6L872.0,181.0L872.5,180.2L873.0,181.2L873.5,180.6L874.0,180.6L874.5,180.6L875.0,179.7L875.5,179.9L876.0,179.9L876.5,180.3L877.0,180.3L877.5,180.3L878.0,181.0L878.5,180.3L879.0,180.3L879.5,180.7L880.0,180.7L880.5,180.7L881.0,181.2L881.5,181.2L882.0,181.2L882.5,181.4L883.0,180.8L883.5,180.5L884.0,180.3L884.5,180.3L885.0,179.5L885.5,179.5L886.0,179.5L886.5,180.7L887.0,180.1L887.5,180.1L888.0,179.8L888.5,180.9L889.0,180.3L889.5,180.1L890.0,180.1L890.5,180.9L891.0,180.8L891.5,180.8L892.0,181.0L892.5,181.4L893.0,181.2L893.5,181.0L894.0,180.4L894.5,180.4L894.5,184.2L894.0,183.8L893.5,184.2L893.0,183.7L892.5,183.8L892.0,183.8L891.5,183.8L891.0,183.5L890.5,183.9L890.0,184.3L889.5,184.5L889.0,184.4L888.5,185.0L888.0,185.0L887.5,184.2L887.0,183.8L886.5,183.7L886.0,183.5L885.5,183.5L885.0,184.5L884.5,184.5L884.0,185.1L883.5,184.1L883.0,184.1L882.5,184.5L882.0,184.5L881.5,184.5L881.0,184.4L880.5,184.0L880.0,184.4L879.5,184.2L879.0,184.2L878.5,184.2L878.0,184.2L877.5,184.1L877.0,183.3L876.5,184.4L876.0,184.4L875.5,183.9L875.0,183.9L874.5,183.9L874.0,183.8L873.5,184.0L873.0,184.5L872.5,184.5L872.0,184.1L871.5,184.1L871.0,184.0L870.5,184.1L870.0,184.1L869.5,184.3L869.0,184.1L868.5,184.1L868.0,184.0L867.5,183.7L867.0,184.9L866.5,184.1L866.0,183.9L865.5,184.3L865.0,184.3L864.5,184.3L864.0,184.3L863.5,183.6L863.0,183.8L862.5,183.9L862.0,184.1L861.5,184.5L861.0,185.2L860.5,183.7L860.0,183.7L859.5,184.3L859.0,184.7L858.5,185.1L858.0,184.3L857.5,184.0L857.0,184.0L856.5,184.5L856.0,184.5L855.5,183.2L855.0,183.6L854.5,183.6L854.0,183.4L853.5,183.5L853.0,183.5L852.5,184.6L852.0,184.6L851.5,184.4L851.0,184.4L850.5,184.6L850.0,183.9L849.5,183.9L849.0,184.2L848.5,184.3L848.0,184.3L847.5,183.8L847.0,184.3L846.5,184.3L846.0,183.7L845.5,184.2L845.0,184.2L844.5,184.2L844.0,183.5L843.5,183.6L843.0,183.5L842.5,183.6L842.0,184.4L841.5,184.4L841.0,183.6L840.5,183.7L840.0,183.7L839.5,183.6L839.0,183.6L838.5,183.4L838.0,184.2L837.5,183.5L837.0,184.8L836.5,184.8L836.0,184.1L835.5,184.1L835.0,184.6L834.5,184.8L834.0,184.8L833.5,184.0L833.0,184.0L832.5,184.0L832.0,183.5L831.5,184.2L831.0,184.6L830.5,184.6L830.0,184.6L829.5,186.4L829.0,183.4L828.5,183.7L828.0,184.3L827.5,184.6L827.0,184.6L826.5,183.8L826.0,183.8L825.5,183.8L825.0,183.8L824.5,183.5L824.0,184.4L823.5,183.5L823.0,183.5L822.5,184.2L822.0,184.2L821.5,184.2L821.0,183.8L820.5,183.8L820.0,184.0L819.5,184.7L819.0,183.7L818.5,183.7L818.0,183.9L817.5,184.5L817.0,183.2L816.5,183.6L816.0,183.7L815.5,183.7L815.0,183.5L814.5,183.7L814.0,183.8L813.5,184.0L813.0,184.4L812.5,184.4L812.0,183.8L811.5,184.1L811.0,183.9L810.5,186.0L810.0,185.3L809.5,183.7L809.0,184.3L808.5,184.2L808.0,184.2L807.5,184.6L807.0,184.6L806.5,183.9L806.0,183.9L805.5,183.9L805.0,183.9L804.5,183.9L804.0,184.0L803.5,184.0L803.0,183.9L802.5,183.8L802.0,184.3L801.5,184.5L801.0,185.2L800.5,184.0L800.0,184.1L799.5,184.1L799.0,184.2L798.5,185.3L798.0,184.4L797.5,184.4L797.0,184.4L796.5,184.0L796.0,184.0L795.5,183.9L795.0,184.4L794.5,184.4L794.0,184.4L793.5,184.4L793.0,184.4L792.5,184.4L792.0,183.5L791.5,183.5L791.0,183.5L790.5,184.7L790.0,184.4L789.5,184.4L789.0,183.7L788.5,183.9L788.0,183.9L787.5,183.9L787.0,183.9L786.5,183.7L786.0,185.0L785.5,185.0L785.0,184.1L784.5,184.1L784.0,184.1L783.5,184.0L783.0,183.5L782.5,183.9L782.0,184.0L781.5,184.0L781.0,183.9L780.5,183.9L780.0,183.9L779.5,183.2L779.0,183.2L778.5,183.3L778.0,183.3L777.5,183.8L777.0,184.0L776.5,184.0L776.0,183.9L775.5,183.8L775.0,184.2L774.5,184.2L774.0,185.1L773.5,183.4L773.0,184.6L772.5,184.6L772.0,184.6L771.5,184.4L771.0,184.4L770.5,183.5L770.0,184.2L769.5,184.2L769.0,183.8L768.5,183.5L768.0,184.1L767.5,184.4L767.0,184.4L766.5,184.2L766.0,184.2L765.5,184.2L765.0,184.2L764.5,184.2L764.0,184.4L763.5,184.4L763.0,184.4L762.5,184.8L762.0,184.3L761.5,183.7L761.0,183.7L760.5,184.0L760.0,184.0L759.5,184.0L759.0,183.8L758.5,184.3L758.0,184.3L757.5,183.8L757.0,184.2L756.5,184.2L756.0,184.2L755.5,184.1L755.0,184.3L754.5,184.3L754.0,183.9L753.5,184.0L753.0,184.0L752.5,185.7L752.0,183.4L751.5,184.1L751.0,184.1L750.5,184.2L750.0,184.2L749.5,184.2L749.0,184.3L748.5,184.3L748.0,183.7L747.5,184.9L747.0,184.9L746.5,184.4L746.0,184.4L745.5,184.4L745.0,183.9L744.5,184.0L744.0,184.0L743.5,184.3L743.0,184.3L742.5,184.3L742.0,184.0L741.5,184.0L741.0,184.0L740.5,183.6L740.0,184.0L739.5,183.8L739.0,183.4L738.5,183.8L738.0,184.0L737.5,184.0L737.0,184.0L736.5,184.2L736.0,184.2L735.5,184.2L735.0,183.7L734.5,184.2L734.0,184.7L733.5,183.9L733.0,183.7L732.5,184.1L732.0,184.1L731.5,183.9L731.0,183.9L730.5,183.9L730.0,183.9L729.5,183.9L729.0,185.2L728.5,185.2L728.0,185.2L727.5,184.4L727.0,185.1L726.5,183.9L726.0,185.6L725.5,183.9L725.0,183.8L724.5,183.9L724.0,183.9L723.5,183.8L723.0,183.8L722.5,184.2L722.0,184.6L721.5,184.2L721.0,184.2L720.5,184.2L720.0,183.8L719.5,184.2L719.0,184.5L718.5,183.9L718.0,184.6L717.5,184.6L717.0,185.1L716.5,183.6L716.0,183.8L715.5,184.7L715.0,183.7L714.5,183.3L714.0,183.2L713.5,183.6L713.0,184.7L712.5,183.7L712.0,183.7L711.5,184.8L711.0,184.4L710.5,184.4L710.0,184.4L709.5,184.4L709.0,184.4L708.5,184.4L708.0,184.3L707.5,184.0L707.0,184.3L706.5,185.1L706.0,184.3L705.5,183.8L705.0,183.8L704.5,183.6L704.0,184.8L703.5,184.8L703.0,184.1L702.5,184.1L702.0,183.7L701.5,183.5L701.0,183.3L700.5,183.7L700.0,184.7L699.5,184.7L699.0,184.5L698.5,184.5L698.0,184.5L697.5,184.0L697.0,183.7L696.5,183.4L696.0,183.4L695.5,183.7L695.0,184.7L694.5,185.1L694.0,185.1L693.5,185.1L693.0,184.4L692.5,184.9L692.0,184.9L691.5,184.2L691.0,184.4L690.5,183.7L690.0,184.2L689.5,184.2L689.0,183.5L688.5,184.1L688.0,184.1L687.5,183.7L687.0,183.5L686.5,184.2L686.0,184.3L685.5,184.3L685.0,184.3L684.5,183.7L684.0,183.6L683.5,183.6L683.0,183.6L682.5,184.4L682.0,185.2L681.5,184.2L681.0,184.2L680.5,184.9L680.0,184.9L679.5,184.9L679.0,184.4L678.5,184.4L678.0,184.1L677.5,184.2L677.0,184.2L676.5,183.9L676.0,183.9L675.5,184.7L675.0,184.7L674.5,184.6L674.0,183.1L673.5,183.4L673.0,183.3L672.5,183.3L672.0,184.0L671.5,184.7L671.0,184.6L670.5,184.6L670.0,184.6L669.5,184.2L669.0,184.2L668.5,184.2L668.0,184.0L667.5,184.0L667.0,183.8L666.5,183.8L666.0,184.9L665.5,184.0L665.0,184.0L664.5,184.9L664.0,184.5L663.5,184.0L663.0,184.1L662.5,184.1L662.0,184.1L661.5,183.8L661.0,184.7L660.5,184.7L660.0,184.7L659.5,183.9L659.0,183.9L658.5,184.1L658.0,184.1L657.5,184.2L657.0,184.2L656.5,184.9L656.0,184.9L655.5,183.8L655.0,183.8L654.5,183.8L654.0,184.3L653.5,184.6L653.0,184.6L652.5,184.6L652.0,184.3L651.5,184.8L651.0,184.8L650.5,184.8L650.0,183.5L649.5,184.1L649.0,184.1L648.5,183.3L648.0,183.5L647.5,183.6L647.0,184.3L646.5,184.2L646.0,184.2L645.5,183.6L645.0,184.2L644.5,184.2L644.0,184.3L643.5,184.3L643.0,184.3L642.5,184.7L642.0,184.7L641.5,186.4L641.0,184.5L640.5,184.5L640.0,184.4L639.5,185.2L639.0,184.3L638.5,184.3L638.0,184.6L637.5,184.5L637.0,184.5L636.5,184.5L636.0,184.1L635.5,184.1L635.0,185.0L634.5,183.8L634.0,183.8L633.5,183.8L633.0,184.2L632.5,184.2L632.0,183.7L631.5,183.7L631.0,183.7L630.5,183.7L630.0,184.8L629.5,184.8L629.0,184.8L628.5,184.1L628.0,184.4L627.5,184.4L627.0,184.6L626.5,184.6L626.0,184.1L625.5,184.1L625.0,185.4L624.5,185.5L624.0,184.3L623.5,183.9L623.0,183.9L622.5,183.9L622.0,183.9L621.5,183.9L621.0,183.9L620.5,184.4L620.0,184.4L619.5,183.8L619.0,183.8L618.5,183.8L618.0,184.2L617.5,184.2L617.0,183.8L616.5,183.8L616.0,183.7L615.5,184.0L615.0,184.0L614.5,185.2L614.0,184.3L613.5,184.2L613.0,184.2L612.5,184.4L612.0,184.4L611.5,184.4L611.0,183.7L610.5,184.8L610.0,184.1L609.5,185.3L609.0,184.7L608.5,184.7L608.0,184.1L607.5,183.9L607.0,183.9L606.5,183.9L606.0,184.3L605.5,184.3L605.0,185.0L604.5,183.9L604.0,183.9L603.5,183.7L603.0,183.4L602.5,184.3L602.0,184.3L601.5,184.3L601.0,184.0L600.5,185.2L600.0,183.8L599.5,183.4L599.0,183.2L598.5,183.8L598.0,183.8L597.5,184.2L597.0,184.6L596.5,184.8L596.0,184.3L595.5,183.8L595.0,183.8L594.5,183.8L594.0,185.2L593.5,184.6L593.0,184.6L592.5,184.1L592.0,183.8L591.5,184.2L591.0,183.8L590.5,183.4L590.0,184.5L589.5,184.2L589.0,184.2L588.5,183.7L588.0,184.2L587.5,184.2L587.0,184.2L586.5,183.5L586.0,183.5L585.5,183.9L585.0,183.9L584.5,184.1L584.0,184.1L583.5,185.0L583.0,184.5L582.5,184.5L582.0,183.8L581.5,184.2L581.0,184.2L580.5,184.2L580.0,184.0L579.5,184.2L579.0,184.2L578.5,184.2L578.0,184.0L577.5,184.4L577.0,184.2L576.5,184.2L576.0,184.1L575.5,184.1L575.0,184.1L574.5,183.8L574.0,183.5L573.5,183.5L573.0,184.1L572.5,184.1L572.0,185.7L571.5,184.1L571.0,184.1L570.5,183.9L570.0,184.4L569.5,186.1L569.0,184.8L568.5,184.8L568.0,184.4L567.5,184.4L567.0,185.7L566.5,183.7L566.0,183.6L565.5,183.6L565.0,183.4L564.5,184.2L564.0,184.1L563.5,184.1L563.0,184.4L562.5,184.4L562.0,184.4L561.5,183.8L561.0,183.8L560.5,183.6L560.0,184.0L559.5,184.1L559.0,183.9L558.5,184.5L558.0,186.3L557.5,183.8L557.0,183.8L556.5,183.8L556.0,184.7L555.5,184.7L555.0,183.5L554.5,184.5L554.0,184.5L553.5,184.5L553.0,183.6L552.5,184.7L552.0,184.0L551.5,184.1L551.0,184.1L550.5,184.4L550.0,184.4L549.5,184.0L549.0,183.7L548.5,183.7L548.0,183.6L547.5,183.8L547.0,184.5L546.5,184.5L546.0,184.1L545.5,184.1L545.0,185.3L544.5,185.4L544.0,183.8L543.5,185.0L543.0,185.1L542.5,184.1L542.0,183.8L541.5,183.8L541.0,183.8L540.5,184.1L540.0,184.2L539.5,186.5L539.0,184.3L538.5,184.0L538.0,183.8L537.5,183.5L537.0,183.6L536.5,183.6L536.0,184.4L535.5,184.4L535.0,184.4L534.5,183.1L534.0,184.4L533.5,184.4L533.0,184.4L532.5,183.7L532.0,184.5L531.5,184.5L531.0,184.1L530.5,184.1L530.0,184.1L529.5,184.1L529.0,184.1L528.5,183.9L528.0,183.9L527.5,183.7L527.0,183.7L526.5,183.7L526.0,184.1L525.5,184.1L525.0,183.5L524.5,183.6L524.0,183.6L523.5,185.1L523.0,184.6L522.5,184.6L522.0,184.5L521.5,185.0L521.0,185.0L520.5,185.0L520.0,184.7L519.5,184.0L519.0,184.1L518.5,185.4L518.0,185.5L517.5,184.6L517.0,184.6L516.5,186.2L516.0,184.5L515.5,184.8L515.0,184.8L514.5,184.1L514.0,183.9L513.5,184.9L513.0,183.9L512.5,183.8L512.0,184.2L511.5,184.2L511.0,185.0L510.5,185.0L510.0,184.1L509.5,184.8L509.0,184.8L508.5,184.8L508.0,183.7L507.5,183.8L507.0,183.8L506.5,183.9L506.0,183.9L505.5,183.9L505.0,183.8L504.5,184.1L504.0,184.4L503.5,184.4L503.0,183.7L502.5,184.7L502.0,183.9L501.5,183.9L501.0,183.9L500.5,185.0L500.0,185.0L499.5,184.4L499.0,184.4L498.5,184.1L498.0,184.1L497.5,184.1L497.0,184.4L496.5,184.4L496.0,184.4L495.5,183.9L495.0,183.9L494.5,183.8L494.0,183.8L493.5,183.8L493.0,184.0L492.5,184.0L492.0,184.2L491.5,184.4L491.0,185.0L490.5,185.0L490.0,183.8L489.5,183.8L489.0,183.7L488.5,184.3L488.0,184.4L487.5,185.0L487.0,184.2L486.5,183.6L486.0,184.8L485.5,184.8L485.0,184.8L484.5,184.0L484.0,183.7L483.5,183.7L483.0,183.0L482.5,184.1L482.0,184.1L481.5,184.1L481.0,184.8L480.5,184.8L480.0,185.7L479.5,184.7L479.0,184.7L478.5,184.0L478.0,184.6L477.5,184.6L477.0,184.6L476.5,184.4L476.0,184.2L475.5,185.0L475.0,184.3L474.5,184.3L474.0,184.3L473.5,183.2L473.0,184.1L472.5,183.9L472.0,184.0L471.5,184.0L471.0,184.8L470.5,184.4L470.0,184.4L469.5,185.1L469.0,185.4L468.5,184.2L468.0,184.1L467.5,183.6L467.0,183.5L466.5,183.5L466.0,183.4L465.5,183.4L465.0,183.7L464.5,184.1L464.0,184.1L463.5,184.1L463.0,184.5L462.5,184.5L462.0,184.5L461.5,185.3L461.0,184.0L460.5,184.0L460.0,185.3L459.5,184.0L459.0,184.0L458.5,184.0L458.0,184.2L457.5,184.2L457.0,184.4L456.5,184.4L456.0,184.3L455.5,184.3L455.0,184.3L454.5,184.0L454.0,183.8L453.5,183.8L453.0,183.4L452.5,183.1L452.0,183.9L451.5,184.2L451.0,184.2L450.5,184.2L450.0,184.3L449.5,184.3L449.0,184.1L448.5,184.1L448.0,183.8L447.5,183.9L447.0,183.8L446.5,183.8L446.0,183.8L445.5,185.0L445.0,184.3L444.5,184.3L444.0,183.9L443.5,184.0L443.0,184.2L442.5,184.0L442.0,184.1L441.5,184.1L441.0,183.8L440.5,183.8L440.0,186.1L439.5,184.3L439.0,184.2L438.5,184.0L438.0,184.9L437.5,184.9L437.0,184.0L436.5,185.0L436.0,185.0L435.5,185.0L435.0,184.0L434.5,184.5L434.0,184.5L433.5,184.5L433.0,184.3L432.5,183.6L432.0,184.9L431.5,184.9L431.0,184.0L430.5,184.0L430.0,184.6L429.5,184.6L429.0,183.8L428.5,184.2L428.0,184.2L427.5,184.2L427.0,183.6L426.5,183.8L426.0,183.8L425.5,183.8L425.0,183.8L424.5,184.4L424.0,184.4L423.5,184.2L423.0,184.3L422.5,184.3L422.0,183.9L421.5,183.9L421.0,183.9L420.5,184.2L420.0,184.2L419.5,183.6L419.0,183.6L418.5,184.1L418.0,184.0L417.5,184.0L417.0,184.0L416.5,183.9L416.0,183.9L415.5,183.9L415.0,183.9L414.5,184.4L414.0,184.6L413.5,184.6L413.0,183.7L412.5,183.8L412.0,183.8L411.5,183.3L411.0,183.7L410.5,184.2L410.0,184.2L409.5,184.9L409.0,183.4L408.5,184.8L408.0,184.8L407.5,184.5L407.0,184.5L406.5,184.5L406.0,183.7L405.5,184.3L405.0,184.1L404.5,184.2L404.0,184.2L403.5,184.2L403.0,184.2L402.5,183.9L402.0,183.9L401.5,183.9L401.0,184.2L400.5,184.3L400.0,184.2L399.5,183.7L399.0,183.7L398.5,184.3L398.0,184.6L397.5,184.6L397.0,184.2L396.5,184.2L396.0,183.8L395.5,184.5L395.0,183.8L394.5,183.6L394.0,184.2L393.5,184.2L393.0,184.0L392.5,183.6L392.0,183.6L391.5,184.1L391.0,183.9L390.5,183.9L390.0,184.4L389.5,183.6L389.0,183.6L388.5,183.6L388.0,184.3L387.5,184.3L387.0,184.1L386.5,185.4L386.0,184.5L385.5,184.5L385.0,184.3L384.5,184.0L384.0,184.1L383.5,184.1L383.0,184.3L382.5,185.5L382.0,184.4L381.5,184.4L381.0,184.4L380.5,183.8L380.0,184.6L379.5,184.3L379.0,184.7L378.5,184.7L378.0,184.7L377.5,183.7L377.0,183.7L376.5,184.0L376.0,184.4L375.5,184.4L375.0,183.8L374.5,183.9L374.0,184.8L373.5,184.8L373.0,184.2L372.5,184.7L372.0,184.7L371.5,184.7L371.0,183.9L370.5,184.0L370.0,184.0L369.5,184.5L369.0,184.1L368.5,184.1L368.0,184.9L367.5,184.1L367.0,185.5L366.5,184.7L366.0,184.7L365.5,184.3L365.0,184.3L364.5,183.6L364.0,184.4L363.5,184.5L363.0,185.0L362.5,185.0L362.0,185.0L361.5,184.2L361.0,184.5L360.5,184.5L360.0,184.5L359.5,183.6L359.0,183.6L358.5,183.6L358.0,183.6L357.5,183.6L357.0,183.6L356.5,183.6L356.0,183.7L355.5,183.7L355.0,183.7L354.5,183.7L354.0,183.7L353.5,183.6L353.0,183.6L352.5,184.7L352.0,185.1L351.5,184.4L351.0,184.4L350.5,183.6L350.0,183.7L349.5,183.1L349.0,184.4L348.5,184.4L348.0,184.4L347.5,184.4L347.0,185.3L346.5,185.3L346.0,184.2L345.5,183.6L345.0,184.1L344.5,183.7L344.0,183.7L343.5,184.0L343.0,184.2L342.5,184.2L342.0,184.2L341.5,184.0L341.0,184.0L340.5,183.9L340.0,185.1L339.5,184.5L339.0,183.6L338.5,183.7L338.0,183.7L337.5,183.5L337.0,184.5L336.5,184.6L336.0,184.6L335.5,183.7L335.0,184.6L334.5,182.8L334.0,184.4L333.5,185.7L333.0,184.3L332.5,184.3L332.0,184.4L331.5,184.4L331.0,184.4L330.5,183.7L330.0,183.2L329.5,184.8L329.0,184.8L328.5,183.7L328.0,183.6L327.5,183.8L327.0,183.8L326.5,184.6L326.0,184.6L325.5,183.6L325.0,183.6L324.5,183.4L324.0,184.4L323.5,184.4L323.0,184.9L322.5,184.9L322.0,184.1L321.5,184.7L321.0,184.7L320.5,184.7L320.0,184.0L319.5,184.9L319.0,184.9L318.5,186.4L318.0,184.3L317.5,183.9L317.0,185.7L316.5,185.3L316.0,183.7L315.5,183.7L315.0,183.7L314.5,183.9L314.0,184.1L313.5,184.2L313.0,184.3L312.5,185.3L312.0,184.3L311.5,185.8L311.0,183.9L310.5,184.1L310.0,184.1L309.5,184.2L309.0,184.2L308.5,184.2L308.0,183.7L307.5,184.0L307.0,184.0L306.5,184.3L306.0,184.3L305.5,184.3L305.0,183.7L304.5,183.7L304.0,184.0L303.5,184.0L303.0,184.0L302.5,183.9L302.0,184.4L301.5,185.0L301.0,184.4L300.5,184.0L300.0,184.0L299.5,183.8L299.0,185.3L298.5,184.1L298.0,185.1L297.5,184.3L297.0,184.3L296.5,183.9L296.0,184.2L295.5,184.2L295.0,184.2L294.5,184.3L294.0,184.3L293.5,184.0L293.0,184.1L292.5,184.1L292.0,184.7L291.5,184.4L291.0,184.4L290.5,184.4L290.0,183.8L289.5,184.4L289.0,184.4L288.5,184.0L288.0,183.9L287.5,183.8L287.0,183.8L286.5,185.6L286.0,184.5L285.5,183.8L285.0,183.8L284.5,184.7L284.0,184.6L283.5,184.6L283.0,184.6L282.5,184.6L282.0,184.6L281.5,184.6L281.0,183.8L280.5,183.5L280.0,184.0L279.5,184.0L279.0,184.0L278.5,184.0L278.0,184.0L277.5,184.9L277.0,184.9L276.5,185.1L276.0,184.6L275.5,184.6L275.0,184.8L274.5,184.8L274.0,183.6L273.5,184.4L273.0,184.4L272.5,184.4L272.0,183.7L271.5,183.8L271.0,183.8L270.5,183.8L270.0,184.0L269.5,184.0L269.0,184.0L268.5,183.7L268.0,183.8L267.5,184.0L267.0,184.1L266.5,184.2L266.0,184.2L265.5,184.2L265.0,184.3L264.5,184.3L264.0,186.1L263.5,183.2L263.0,183.2L262.5,183.3L262.0,184.1L261.5,185.3L261.0,184.0L260.5,184.0L260.0,184.0L259.5,183.9L259.0,185.7L258.5,184.1L258.0,184.1L257.5,184.1L257.0,184.1L256.5,184.1L256.0,184.1L255.5,184.3L255.0,184.3L254.5,184.3L254.0,184.7L253.5,184.7L253.0,183.6L252.5,183.6L252.0,184.1L251.5,184.1L251.0,183.5L250.5,183.3L250.0,184.0L249.5,184.0L249.0,184.3L248.5,184.3L248.0,184.3L247.5,183.7L247.0,184.0L246.5,184.0L246.0,184.0L245.5,185.1L245.0,185.1L244.5,185.1L244.0,184.6L243.5,184.1L243.0,184.1L242.5,183.9L242.0,183.8L241.5,184.4L241.0,184.5L240.5,184.5L240.0,185.5L239.5,183.7L239.0,183.7L238.5,184.4L238.0,184.4L237.5,184.1L237.0,184.1L236.5,184.7L236.0,184.7L235.5,184.1L235.0,184.1L234.5,183.8L234.0,183.8L233.5,183.6L233.0,183.6L232.5,183.6L232.0,183.7L231.5,184.5L231.0,184.1L230.5,184.1L230.0,184.1L229.5,184.1L229.0,183.7L228.5,183.7L228.0,183.5L227.5,184.9L227.0,184.4L226.5,184.4L226.0,184.6L225.5,185.0L225.0,183.8L224.5,183.8L224.0,183.8L223.5,183.7L223.0,183.8L222.5,185.5L222.0,183.8L221.5,183.8L221.0,183.9L220.5,184.9L220.0,183.9L219.5,183.7L219.0,184.5L218.5,184.5L218.0,183.6L217.5,183.5L217.0,184.1L216.5,184.1L216.0,184.1L215.5,183.7L215.0,184.0L214.5,184.4L214.0,184.4L213.5,184.4L213.0,183.7L212.5,183.7L212.0,183.7L211.5,183.6L211.0,183.5L210.5,184.3L210.0,184.3L209.5,184.3L209.0,183.7L208.5,184.3L208.0,184.3L207.5,184.2L207.0,184.2L206.5,184.3L206.0,184.3L205.5,184.3L205.0,184.0L204.5,184.7L204.0,184.7L203.5,185.0L203.0,183.7L202.5,183.7L202.0,184.2L201.5,184.2L201.0,184.2L200.5,183.8L200.0,184.1L199.5,184.8L199.0,184.1L198.5,184.1L198.0,184.1L197.5,183.8L197.0,183.8L196.5,183.5L196.0,183.5L195.5,183.5L195.0,183.7L194.5,184.4L194.0,184.6L193.5,184.6L193.0,184.6L192.5,184.6L192.0,184.7L191.5,183.6L191.0,183.6L190.5,183.8L190.0,183.8L189.5,183.8L189.0,183.8L188.5,183.8L188.0,184.7L187.5,184.7L187.0,184.7L186.5,185.0L186.0,184.3L185.5,184.3L185.0,184.2L184.5,184.2L184.0,183.5L183.5,183.5L183.0,184.3L182.5,184.3L182.0,184.7L181.5,184.7L181.0,184.7L180.5,183.9L180.0,183.6L179.5,183.6L179.0,184.0L178.5,184.0L178.0,185.0L177.5,184.1L177.0,184.1L176.5,184.1L176.0,184.0L175.5,184.5L175.0,184.5L174.5,184.5L174.0,183.7L173.5,183.7L173.0,184.3L172.5,184.3L172.0,183.5L171.5,183.5L171.0,183.4L170.5,183.8L170.0,183.8L169.5,183.9L169.0,183.9L168.5,183.7L168.0,183.7L167.5,184.5L167.0,184.2L166.5,183.6L166.0,184.1L165.5,184.1L165.0,184.1L164.5,183.9L164.0,183.7L163.5,183.7L163.0,183.6L162.5,183.6L162.0,184.2L161.5,184.2L161.0,183.5L160.5,183.5L160.0,184.3L159.5,184.3L159.0,184.3L158.5,184.0L158.0,183.6L157.5,183.8L157.0,184.0L156.5,184.0L156.0,184.0L155.5,185.2L155.0,183.6L154.5,183.8L154.0,184.1L153.5,184.1L153.0,184.3L152.5,184.3L152.0,184.8L151.5,184.8L151.0,184.8L150.5,183.7L150.0,183.7L149.5,183.8L149.0,184.1L148.5,184.1L148.0,184.1L147.5,184.0L147.0,184.0L146.5,184.0L146.0,184.2L145.5,184.2L145.0,184.4L144.5,184.4L144.0,183.3L143.5,183.5L143.0,183.5L142.5,184.2L142.0,184.2L141.5,184.2L141.0,184.1L140.5,184.1L140.0,184.1L139.5,184.1L139.0,183.9L138.5,183.9L138.0,183.8L137.5,183.8L137.0,185.1L136.5,185.1L136.0,185.1L135.5,183.7L135.0,183.9L134.5,184.1L134.0,184.1L133.5,183.7L133.0,184.1L132.5,184.6L132.0,184.6L131.5,184.6L131.0,183.7L130.5,184.4L130.0,184.4L129.5,184.4L129.0,184.2L128.5,183.7L128.0,184.3L127.5,184.3L127.0,184.3L126.5,184.1L126.0,183.8L125.5,183.9L125.0,183.9L124.5,184.2L124.0,184.2L123.5,184.2L123.0,184.1L122.5,184.1L122.0,184.3L121.5,184.3L121.0,184.3L120.5,184.3L120.0,183.8L119.5,184.2L119.0,184.6L118.5,184.0L118.0,184.0L117.5,184.0L117.0,185.0L116.5,185.0L116.0,185.0L115.5,184.3L115.0,183.8L114.5,183.8L114.0,184.4L113.5,184.4L113.0,184.4L112.5,184.3L112.0,184.3L111.5,183.8L111.0,183.9L110.5,184.0L110.0,184.0L109.5,183.8L109.0,183.8L108.5,184.0L108.0,184.4L107.5,184.4L107.0,184.4L106.5,184.0L106.0,184.1L105.5,184.1L105.0,183.9L104.5,183.9L104.0,183.9L103.5,183.9L103.0,184.3L102.5,184.3L102.0,184.3L101.5,184.2L101.0,184.2L100.5,184.2L100.0,185.7L99.5,184.6L99.0,183.8L98.5,184.5L98.0,184.5L97.5,183.7L97.0,183.7L96.5,183.9L96.0,183.9L95.5,183.5L95.0,183.6L94.5,183.7L94.0,184.4L93.5,184.4L93.0,184.8L92.5,184.8L92.0,184.8L91.5,184.7L91.0,184.7L90.5,184.1L90.0,186.3L89.5,184.7L89.0,184.7L88.5,184.2L88.0,184.2L87.5,184.1L87.0,183.6L86.5,184.8L86.0,184.0L85.5,184.0L85.0,184.5L84.5,184.1L84.0,184.2L83.5,184.2L83.0,185.1L82.5,186.2L82.0,185.1L81.5,183.8L81.0,184.0L80.5,184.8L80.0,184.4L79.5,183.8L79.0,184.1L78.5,184.1L78.0,184.1L77.5,184.2L77.0,184.2L76.5,184.2L76.0,184.3L75.5,184.2L75.0,184.5L74.5,184.5L74.0,184.5L73.5,184.2L73.0,184.2L72.5,184.4L72.0,184.5L71.5,183.7L71.0,183.9L70.5,183.9L70.0,183.9L69.5,183.8L69.0,184.4L68.5,183.3L68.0,184.8L67.5,183.7L67.0,183.8L66.5,184.2L66.0,184.2L65.5,184.2L65.0,185.8L64.5,184.3L64.0,184.6L63.5,184.6L63.0,184.2L62.5,184.2L62.0,184.0L61.5,183.8L61.0,185.1L60.5,183.8L60.0,183.6L59.5,183.9L59.0,184.2L58.5,184.2L58.0,183.9L57.5,183.7L57.0,184.4L56.5,184.1L56.0,184.1L55.5,184.6L55.0,184.6L54.5,184.6L54.0,184.2L53.5,184.3L53.0,184.3L52.5,184.3L52.0,183.8L51.5,183.7L51.0,184.3L50.5,184.2L50.0,184.2L49.5,184.2L49.0,184.3L48.5,184.3L48.0,183.8L47.5,183.8L47.0,183.8L46.5,183.0L46.0,184.1L45.5,184.1L45.0,184.1L44.5,183.7L44.0,184.0L43.5,185.4L43.0,184.0L42.5,183.7L42.0,183.7L41.5,183.7L41.0,183.6L40.5,183.6L40.0,183.8L39.5,183.8L39.0,183.8L38.5,183.7L38.0,185.0L37.5,185.0L37.0,185.0L36.5,184.1L36.0,184.7L35.5,184.7L35.0,184.7L34.5,184.3L34.0,184.3L33.5,183.8L33.0,183.7L32.5,184.1L32.0,184.4L31.5,184.4L31.0,184.4L30.5,183.8L30.0,183.8L29.5,183.8L29.0,183.9L28.5,183.9L28.0,183.8L27.5,183.4L27.0,183.4L26.5,184.1L26.0,184.1L25.5,184.1L25.0,183.9L24.5,184.4L24.0,184.4L23.5,184.4L23.0,184.1L22.5,184.3L22.0,184.3L21.5,184.3L21.0,185.4L20.5,183.9L20.0,183.9L19.5,183.8L19.0,183.8L18.5,183.5L18.0,183.4L17.5,184.0L17.0,184.0L16.5,183.7L16.0,184.4L15.5,183.8L15.0,183.8L14.5,183.8L14.0,183.8L13.5,183.9L13.0,183.9L12.5,183.9L12.0,183.9L11.5,184.0L11.0,184.5L10.5,184.3L10.0,184.3L9.5,183.6L9.0,183.6L8.5,183.4L8.0,183.3L7.5,184.5L7.0,186.5L6.5,185.1L6.0,183.6L5.5,184.6L5.0,184.6L4.5,184.6L4.0,183.7L3.5,184.2L3.0,184.2L2.5,184.1L2.0,184.1L1.5,184.3L1.0,184.2L0.5,184.0Z" fill="#008c00"/><path d="M0.4,90.1L4.0,80.3L11.6,80.3L15.2,90.1L11.6,99.8L4.0,99.8Z" fill="#ffff00"/><path d="M17.3,90.1L20.9,80.3L27.9,80.3L31.5,90.1L27.9,99.8L20.9,99.8Z" fill="#ffff00"/><path d="M34.6,90.1L38.2,80.3L131.1,80.3L134.7,90.1L131.1,99.8L38.2,99.8Z" fill="#ffff00"/><path d="M137.0,90.1L140.6,80.3L672.2,80.3L675.8,90.1L672.2,99.8L140.6,99.8Z" fill="#ffff00"/><path d="M677.8,90.1L681.4,80.3L792.7,80.3L796.3,90.1L792.7,99.8L681.4,99.8Z" fill="#ffff00"/><path d="M798.0,90.1L801.6,80.3L809.4,80.3L813.0,90.1L809.4,99.8L801.6,99.8Z" fill="#ffff00"/><rect x="5.3" y="80.3" width="1" height="19.5" fill="#5c5c14"/><rect x="165.8" y="80.3" width="1" height="19.5" fill="#5c5c14"/><rect x="347.1" y="80.3" width="1" height="19.5" fill="#5c5c14"/><rect x="535.0" y="80.3" width="1" height="19.5" fill="#5c5c14"/><rect x="703.0" y="80.3" width="1" height="19.5" fill="#5c5c14"/></svg>
<span style="left:79.7px;top:221.3px;font:bold 14px/14px 'Liberation Sans',sans-serif;color:#e0e044">0</span>
<span style="left:96.6px;top:221.3px;font:bold 14px/14px 'Liberation Sans',sans-serif;color:#e0e044">1</span>
<span style="left:113.6px;top:221.3px;font:bold 14px/14px 'Liberation Sans',sans-serif;color:#e0e044">0</span>
<span style="left:130.5px;top:221.3px;font:bold 14px/14px 'Liberation Sans',sans-serif;color:#e0e044">0</span>
<span style="left:147.5px;top:221.3px;font:bold 14px/14px 'Liberation Sans',sans-serif;color:#e0e044">0</span>
<span style="left:164.4px;top:221.3px;font:bold 14px/14px 'Liberation Sans',sans-serif;color:#e0e044">0</span>
<span style="left:181.3px;top:221.3px;font:bold 14px/14px 'Liberation Sans',sans-serif;color:#e0e044">0</span>
<span style="left:198.3px;top:221.3px;font:bold 14px/14px 'Liberation Sans',sans-serif;color:#e0e044">0</span>
<span style="left:215.2px;top:221.3px;font:bold 14px/14px 'Liberation Sans',sans-serif;color:#e0e044">0</span>
<span style="left:232.2px;top:221.3px;font:bold 14px/14px 'Liberation Sans',sans-serif;color:#e0e044">0</span>
<span style="left:249.1px;top:221.3px;font:bold 14px/14px 'Liberation Sans',sans-serif;color:#e0e044">0</span>
<span style="left:266.0px;top:221.3px;font:bold 14px/14px 'Liberation Sans',sans-serif;color:#e0e044">0</span>
<span style="left:283.0px;top:221.3px;font:bold 14px/14px 'Liberation Sans',sans-serif;color:#e0e044">0</span>
<span style="left:299.9px;top:221.3px;font:bold 14px/14px 'Liberation Sans',sans-serif;color:#e0e044">0</span>
<span style="left:316.9px;top:221.3px;font:bold 14px/14px 'Liberation Sans',sans-serif;color:#e0e044">0</span>
<span style="left:333.8px;top:221.3px;font:bold 14px/14px 'Liberation Sans',sans-serif;color:#e0e044">0</span>
<span style="left:350.7px;top:221.3px;font:bold 14px/14px 'Liberation Sans',sans-serif;color:#e0e044">0</span>
<span style="left:367.7px;top:221.3px;font:bold 14px/14px 'Liberation Sans',sans-serif;color:#e0e044">0</span>
<span style="left:384.6px;top:221.3px;font:bold 14px/14px 'Liberation Sans',sans-serif;color:#e0e044">0</span>
<span style="left:401.6px;top:221.3px;font:bold 14px/14px 'Liberation Sans',sans-serif;color:#e0e044">0</span>
<span style="left:418.5px;top:221.3px;font:bold 14px/14px 'Liberation Sans',sans-serif;color:#e0e044">0</span>
<span style="left:435.4px;top:221.3px;font:bold 14px/14px 'Liberation Sans',sans-serif;color:#e0e044">0</span>
<span style="left:452.4px;top:221.3px;font:bold 14px/14px 'Liberation Sans',sans-serif;color:#e0e044">0</span>
<span style="left:469.3px;top:221.3px;font:bold 14px/14px 'Liberation Sans',sans-serif;color:#e0e044">0</span>
<span style="left:486.3px;top:221.3px;font:bold 14px/14px 'Liberation Sans',sans-serif;color:#e0e044">0</span>
<span style="left:503.2px;top:221.3px;font:bold 14px/14px 'Liberation Sans',sans-serif;color:#e0e044">0</span>
<span style="left:520.1px;top:221.3px;font:bold 14px/14px 'Liberation Sans',sans-serif;color:#e0e044">0</span>
<span style="left:537.1px;top:221.3px;font:bold 14px/14px 'Liberation Sans',sans-serif;color:#e0e044">0</span>
<span style="left:554.0px;top:221.3px;font:bold 14px/14px 'Liberation Sans',sans-serif;color:#e0e044">0</span>
<span style="left:571.0px;top:221.3px;font:bold 14px/14px 'Liberation Sans',sans-serif;color:#e0e044">0</span>
<span style="left:587.9px;top:221.3px;font:bold 14px/14px 'Liberation Sans',sans-serif;color:#e0e044">0</span>
<span style="left:604.8px;top:221.3px;font:bold 14px/14px 'Liberation Sans',sans-serif;color:#e0e044">0</span>
<span style="left:621.8px;top:221.3px;font:bold 14px/14px 'Liberation Sans',sans-serif;color:#e0e044">0</span>
<span style="left:638.7px;top:221.3px;font:bold 14px/14px 'Liberation Sans',sans-serif;color:#e0e044">0</span>
<span style="left:655.7px;top:221.3px;font:bold 14px/14px 'Liberation Sans',sans-serif;color:#e0e044">0</span>
<span style="left:672.6px;top:221.3px;font:bold 14px/14px 'Liberation Sans',sans-serif;color:#e0e044">0</span>
<span style="left:689.5px;top:221.3px;font:bold 14px/14px 'Liberation Sans',sans-serif;color:#e0e044">0</span>
<span style="left:706.5px;top:221.3px;font:bold 14px/14px 'Liberation Sans',sans-serif;color:#e0e044">0</span>
<span style="left:723.4px;top:221.3px;font:bold 14px/14px 'Liberation Sans',sans-serif;color:#e0e044">0</span>
<span style="left:740.4px;top:221.3px;font:bold 14px/14px 'Liberation Sans',sans-serif;color:#e0e044">0</span>
<span style="left:757.3px;top:221.3px;font:bold 14px/14px 'Liberation Sans',sans-serif;color:#e0e044">1</span>
<span style="left:774.2px;top:221.3px;font:bold 14px/14px 'Liberation Sans',sans-serif;color:#e0e044">0</span>
<span style="left:791.2px;top:221.3px;font:bold 14px/14px 'Liberation Sans',sans-serif;color:#e0e044">0</span>
<span style="left:808.1px;top:221.3px;font:bold 14px/14px 'Liberation Sans',sans-serif;color:#e0e044">1</span>
<span style="left:825.1px;top:221.3px;font:bold 14px/14px 'Liberation Sans',sans-serif;color:#e0e044">0</span>
<span style="left:842.0px;top:221.3px;font:bold 14px/14px 'Liberation Sans',sans-serif;color:#e0e044">1</span>
<span style="left:858.9px;top:221.3px;font:bold 14px/14px 'Liberation Sans',sans-serif;color:#e0e044">0</span>
<span style="left:875.9px;top:221.3px;font:bold 14px/14px 'Liberation Sans',sans-serif;color:#e0e044">1</span>
<span id="t14" style="left:82.6px;top:239.41px;font:bold 13.57px/13.57px 'Liberation Sans',sans-serif;color:#26260a;transform:scaleX(0.8843);transform-origin:0 0;">S</span>
<span id="t15" style="left:99.5px;top:239.41px;font:bold 13.57px/13.57px 'Liberation Sans',sans-serif;color:#26260a;transform:scaleX(0.9642);transform-origin:0 0;">T</span>
<span id="t16" style="left:120px;top:239.41px;font:bold 13.57px/13.57px 'Liberation Sans',sans-serif;color:#26260a;transform:scaleX(1.0099);transform-origin:0 0;">Command I...</span>
<span id="t17" style="left:412px;top:239.41px;font:bold 13.57px/13.57px 'Liberation Sans',sans-serif;color:#26260a;transform:scaleX(0.9423);transform-origin:0 0;">Argument = 0x00000000</span>
<span id="t18" style="left:776.8px;top:239.41px;font:bold 13.57px/13.57px 'Liberation Sans',sans-serif;color:#26260a;transform:scaleX(0.9291);transform-origin:0 0;">CRC7 = 0x4A</span>
<span id="t19" style="left:881px;top:239.41px;font:bold 13.57px/13.57px 'Liberation Sans',sans-serif;color:#26260a;transform:scaleX(0.8290);transform-origin:0 0;">E</span>
<span id="t20" style="left:475px;top:141.44px;font:bold 12.0px/12.0px 'Liberation Sans',sans-serif;color:#fff;transform:scaleX(1.0076);transform-origin:0 0;">Selected Waveform View</span>
<span id="t21" style="left:30px;top:160.16px;font:11.86px/11.86px 'Liberation Sans',sans-serif;color:#fff;transform:scaleX(0.9014);transform-origin:0 0;">2.2V</span>
<span id="t22" style="left:30px;top:216.84px;font:12.0px/12.0px 'Liberation Sans',sans-serif;color:#fff;transform:scaleX(0.8327);transform-origin:0 0;">-140mV</span>
<span id="t23" style="left:30px;top:255.96px;font:11.86px/11.86px 'Liberation Sans',sans-serif;color:#fff;transform:scaleX(0.9014);transform-origin:0 0;">2.3V</span>
<span id="t24" style="left:30px;top:317.84px;font:12.0px/12.0px 'Liberation Sans',sans-serif;color:#fff;transform:scaleX(0.8327);transform-origin:0 0;">-360mV</span>
<span id="t25" style="left:30px;top:334.36px;font:11.86px/11.86px 'Liberation Sans',sans-serif;color:#fff;transform:scaleX(0.9014);transform-origin:0 0;">2.1V</span>
<span id="t26" style="left:30px;top:391.44px;font:12.0px/12.0px 'Liberation Sans',sans-serif;color:#fff;transform:scaleX(0.8327);transform-origin:0 0;">-120mV</span>
<span id="t27" style="left:10.37px;top:307.6px;font:13.5px/13.5px 'Liberation Sans',sans-serif;color:#fff;transform-origin:0 0;transform:translate(11.43px,0px) rotate(-90deg) translate(0px,-11.43px) scaleX(0.9992);">Amplitude</span>
<span id="t28" style="left:29.89px;top:206.8px;font:bold 11.0px/11.0px 'Liberation Sans',sans-serif;color:#e8e850;transform-origin:0 0;transform:translate(9.31px,0px) rotate(-90deg) translate(0px,-9.31px) scaleX(1.0973);">CMD</span>
<span id="t29" style="left:29.89px;top:307px;font:bold 11.0px/11.0px 'Liberation Sans',sans-serif;color:#f0102a;transform-origin:0 0;transform:translate(9.31px,0px) rotate(-90deg) translate(0px,-9.31px) scaleX(1.3781);">Clock</span>
<span id="t30" style="left:29.89px;top:379.5px;font:bold 11.0px/11.0px 'Liberation Sans',sans-serif;color:#22d050;transform-origin:0 0;transform:translate(9.31px,0px) rotate(-90deg) translate(0px,-9.31px) scaleX(1.3630);">Data</span>
<span id="t31" style="left:79.2px;top:399.04px;font:12.0px/12.0px 'Liberation Sans',sans-serif;color:#fff;transform:scaleX(0.8719);transform-origin:0 0;">-1.3603µS</span>
<span id="t32" style="left:233px;top:399.04px;font:12.0px/12.0px 'Liberation Sans',sans-serif;color:#fff;transform:scaleX(0.8910);transform-origin:0 0;">25.717µS</span>
<span id="t33" style="left:406px;top:399.04px;font:12.0px/12.0px 'Liberation Sans',sans-serif;color:#fff;transform:scaleX(0.8872);transform-origin:0 0;">52.794µS</span>
<span id="t34" style="left:593px;top:399.04px;font:12.0px/12.0px 'Liberation Sans',sans-serif;color:#fff;transform:scaleX(0.8852);transform-origin:0 0;">79.871µS</span>
<span id="t35" style="left:761.3px;top:399.04px;font:12.0px/12.0px 'Liberation Sans',sans-serif;color:#fff;transform:scaleX(0.8755);transform-origin:0 0;">106.95µS</span>
<span id="t36" style="left:928.6px;top:399.04px;font:12.0px/12.0px 'Liberation Sans',sans-serif;color:#fff;transform:scaleX(0.8659);transform-origin:0 0;">134.03µS</span>
<span id="t37" style="left:457.3px;top:412.89px;font:bold 11.71px/11.71px 'Liberation Sans',sans-serif;color:#fff;transform:scaleX(1.0142);transform-origin:0 0;">Time(Seconds) --&gt;</span>
<svg style="left:37.2px;top:411.6px" width="12.5" height="12.5" viewBox="0 0 12 12"><rect x="0.5" y="0.5" width="11" height="11" fill="#fff" stroke="#333"/><path d="M2.6 6.1l2.4 2.5l4.6-5" fill="none" stroke="#222" stroke-width="1.2"/></svg>
<span id="t38" style="left:56.2px;top:412.64px;font:bold 12.0px/12.0px 'Liberation Sans',sans-serif;color:#f0102a;transform:scaleX(0.9590);transform-origin:0 0;">Show CLOCK</span>
<svg style="left:146.8px;top:411.6px" width="12.5" height="12.5" viewBox="0 0 12 12"><rect x="0.5" y="0.5" width="11" height="11" fill="#fff" stroke="#333"/><path d="M2.6 6.1l2.4 2.5l4.6-5" fill="none" stroke="#222" stroke-width="1.2"/></svg>
<span id="t39" style="left:165.8px;top:412.64px;font:bold 12.0px/12.0px 'Liberation Sans',sans-serif;color:#0c8a30;transform:scaleX(0.9897);transform-origin:0 0;">Show DATA</span>
<svg style="left:250px;top:411.6px" width="12.5" height="12.5" viewBox="0 0 12 12"><rect x="0.5" y="0.5" width="11" height="11" fill="#fff" stroke="#333"/><path d="M2.6 6.1l2.4 2.5l4.6-5" fill="none" stroke="#222" stroke-width="1.2"/></svg>
<span id="t40" style="left:268.8px;top:412.64px;font:bold 12.0px/12.0px 'Liberation Sans',sans-serif;color:#f4f440;transform:scaleX(0.9765);transform-origin:0 0;">Show CMD</span>
<div style="left:980px;top:167px;width:25px;height:25px;background:#4f74cc;border:1px solid;border-color:#e4ecfc;overflow:hidden"></div>
<svg style="left:980px;top:167px" width="25" height="25" viewBox="0 0 25 25"><rect x="1" y="1" width="23" height="23" fill="#4f74cc"/>
<rect x="2.4" y="6.6" width="20.4" height="16.6" rx="1.2" fill="#c9ccd2"/><rect x="3.4" y="7.4" width="3" height="15.4" fill="#2a2d33"/>
<rect x="6.4" y="7.4" width="1.8" height="15.4" fill="#8d9098"/>
<rect x="8.6" y="7.6" width="13.6" height="2.8" fill="#f2f2f4"/><path d="M11 9h7" stroke="#3a3d44" stroke-width="1"/>
<ellipse cx="14.5" cy="5.2" rx="3.6" ry="2.2" fill="#d9b63c"/><rect x="11.5" y="5.2" width="6" height="2.6" fill="#b9942a"/>
<rect x="5.2" y="3.6" width="2.2" height="2" fill="#1c3f9a"/>
<path d="M11.2 16.5a3.6 3.6 0 0 1 7.2 0" fill="none" stroke="#22252b" stroke-width="1.6"/>
<circle cx="14.8" cy="19.3" r="3.7" fill="#2c6ee0"/><circle cx="13.8" cy="18.2" r="1.3" fill="#7fb2ff"/></svg>
<div style="left:980px;top:199px;width:25px;height:25px;background:linear-gradient(135deg,#b9cdf6 0%,#9db6ee 50%,#7595de 100%);border:1px solid;border-color:#e4ecfc;overflow:hidden"></div>
<svg style="left:980px;top:199px" width="25" height="25" viewBox="0 0 25 25"><rect x="8" y="3" width="12.6" height="11.4" fill="#f7f9ff" stroke="#5b7fd6" stroke-width="0.8"/><rect x="8" y="3" width="12.6" height="2.4" fill="#4a73d4"/>
<path d="M12.6 7.6h6M12.6 9.8h6M13.4 12h5" stroke="#9fb0d0" stroke-width="1"/>
<path d="M10.2 13.2l2.6 2.8" stroke="#b98a22" stroke-width="2.8" stroke-linecap="round"/>
<circle cx="7.8" cy="10.6" r="3.6" fill="#d4ecfa" stroke="#7a8898" stroke-width="1.1"/></svg>
<div style="left:980px;top:231px;width:25px;height:25px;background:linear-gradient(100deg,#e6eefc 0%,#d4e0f8 45%,#9fb8ea 100%);border:1px solid;border-color:#e4ecfc;overflow:hidden"></div>
<svg style="left:980px;top:231px" width="25" height="25" viewBox="0 0 25 25"><path d="M13.6 19.2c2.2-2.2 3.2-4.8 2.8-6.8c-0.5-2.4-2.6-3.1-5.2-2.3" fill="none" stroke="#5577d6" stroke-width="2.6" stroke-linecap="round"/><path d="M5.2 11.9l5.2-4l1.1 6.2z" fill="#5577d6"/></svg>
<div style="left:980px;top:263px;width:25px;height:25px;background:linear-gradient(135deg,#bccff6 0%,#9ab4ec 50%,#7a9ae0 100%);border:1px solid;border-color:#e4ecfc;overflow:hidden"></div>
<svg style="left:980px;top:263px" width="25" height="25" viewBox="0 0 25 25"><rect x="6.2" y="7.3" width="13" height="10" fill="none" stroke="#eef3ff" stroke-width="1"/><rect x="8" y="8.9" width="9.6" height="6.9" fill="#5078d2" stroke="#dfe8fb" stroke-width="0.7"/>
<path d="M12.6 3.2v7.6M12.6 14.2v7.6M2.8 12.5h7M15.4 12.5h7" stroke="#0a0a14" stroke-width="1.2"/>
<path d="M10.8 5.2l1.8-2.2l1.8 2.2M10.8 19.8l1.8 2.2l1.8-2.2M5 10.7l-2.2 1.8l2.2 1.8M20.2 10.7l2.2 1.8l-2.2 1.8" fill="none" stroke="#0a0a14" stroke-width="1.2"/>
<rect x="11.2" y="11.9" width="2.8" height="1.2" fill="#e8eefc"/></svg>
<div style="left:980px;top:295px;width:25px;height:25px;background:#8b9ed9;border:1px solid;border-color:#e4ecfc;overflow:hidden"></div>
<svg style="left:980px;top:295px" width="25" height="25" viewBox="0 0 25 25"><path d="M8.8 21.2h7.2l0.6-2.4l2.6-5.4c0.5-1.1-0.9-1.8-1.6-0.8l-1.2 2l0.3-7c0-1.2-1.7-1.3-1.8 0l-0.5 4.6l-0.5-6c-0.1-1.2-1.8-1.1-1.8 0.1l0.1 6l-1.3-5c-0.3-1.1-1.9-0.7-1.7 0.5l1.2 7.4l-3.2-2.4c-1-0.7-2 0.4-1.2 1.3l4.8 4.9z" fill="#0a0a0a" transform="translate(0.9,1.0)"/>
<path d="M8.8 20.6h7.2l0.6-2.4l2.6-5.4c0.5-1.1-0.9-1.8-1.6-0.8l-1.2 2l0.3-7c0-1.2-1.7-1.3-1.8 0l-0.5 4.6l-0.5-6c-0.1-1.2-1.8-1.1-1.8 0.1l0.1 6l-1.3-5c-0.3-1.1-1.9-0.7-1.7 0.5l1.2 7.4l-3.2-2.4c-1-0.7-2 0.4-1.2 1.3l4.8 4.9z" fill="#f4f4f4"/>
<rect x="8.4" y="20.6" width="8.2" height="1.6" fill="#0a0a0a"/></svg>
<div style="left:980px;top:327px;width:25px;height:25px;background:#c9dcf7;border:1px solid;border-color:#dce8fb #8eabe3 #8eabe3 #dce8fb;overflow:hidden"></div>
<svg style="left:980px;top:327px" width="25" height="25" viewBox="0 0 25 25"><rect x="22.6" y="1" width="1.8" height="23" fill="#8eabe3"/><rect x="1" y="22.6" width="23" height="1.8" fill="#8eabe3"/>
<path d="M8.1 3.7v17.2" stroke="#d0687c" stroke-width="1.5"/><path d="M13.1 2.4v15.6" stroke="#d0687c" stroke-width="1.5"/></svg>
<div style="left:980px;top:359px;width:25px;height:25px;background:#c9dcf7;border:1px solid;border-color:#dce8fb #8eabe3 #8eabe3 #dce8fb;overflow:hidden"></div>
<svg style="left:980px;top:359px" width="25" height="25" viewBox="0 0 25 25"><rect x="22.6" y="1" width="1.8" height="23" fill="#8eabe3"/><rect x="1" y="22.6" width="23" height="1.8" fill="#8eabe3"/>
<path d="M2.3 8h16.5" stroke="#e04a58" stroke-width="1.3"/><path d="M4.2 13.4h15.8" stroke="#e04a58" stroke-width="1.3"/></svg>
<svg style="left:980px;top:397px" width="28" height="28" viewBox="0 0 28 28">
<path d="M9.6 2.6l8 7.6l-7.4 9l-8.6-8.6z" fill="#e9e9ea" stroke="#9a9a9c" stroke-width="0.6"/>
<path d="M9.6 2.6l8 7.6l-2.6 3.2l-7.6-8.4z" fill="#fafafa"/>
<path d="M8.4 1.8l1.6 1.4" stroke="#2a2a30" stroke-width="1.2"/>
<rect x="13.3" y="10.2" width="6.4" height="5" fill="#d42a22"/><rect x="20" y="10.2" width="6.4" height="5" fill="#7fbf2e"/>
<rect x="13.3" y="15.5" width="6.4" height="5" fill="#f2e21c"/><rect x="20" y="15.5" width="6.4" height="5" fill="#1ca0dc"/>
<rect x="13.3" y="20.8" width="6.4" height="5" fill="#1a1a88"/><rect x="20" y="20.8" width="6.4" height="5" fill="#ea8a2a"/>
</svg>
<div style="left:6px;top:451.5px;width:123.5px;height:37.0px;border:1px solid #d6dcf2"></div>
<div style="left:13px;top:446px;width:55px;height:12px;background:#3e50a6"></div>
<span id="t41" style="left:15.5px;top:446.44px;font:12.0px/12.0px 'Liberation Sans',sans-serif;color:#fff;transform:scaleX(0.8625);transform-origin:0 0;">Annotation</span>
<div style="left:10px;top:461.3px;width:31px;height:12.5px;background:#f4f43c"></div>
<div style="left:44.3px;top:461.3px;width:41.5px;height:12.5px;background:#e01020"></div>
<div style="left:88px;top:461.3px;width:35.8px;height:12.5px;background:#0a7a28"></div>
<span id="t42" style="left:12.6px;top:461.62px;font:12.14px/12.14px 'Liberation Sans',sans-serif;color:#222;transform:scaleX(0.8652);transform-origin:0 0;">CMD</span>
<span id="t43" style="left:47px;top:461.62px;font:12.14px/12.14px 'Liberation Sans',sans-serif;color:#5a0a0a;transform:scaleX(0.8497);transform-origin:0 0;">CLOCK</span>
<span id="t44" style="left:91.2px;top:461.62px;font:12.14px/12.14px 'Liberation Sans',sans-serif;color:#052a0c;transform:scaleX(0.9428);transform-origin:0 0;">DATA</span>
<span id="t45" style="left:136.2px;top:461.71px;font:bold 12.86px/12.86px 'Liberation Sans',sans-serif;color:#fff;transform:scaleX(0.9505);transform-origin:0 0;">CMD Data:</span>
<div style="left:206.5px;top:436.5px;width:384.5px;height:63.0px;background:#e4e4e4;border:1px solid #7d7d7d;border-right-color:#f4f4f4;border-bottom-color:#f4f4f4"></div>
<div style="left:207.5px;top:437.5px;width:366px;height:61px;overflow:hidden">
<span id="t46" style="left:2.3000000000000114px;top:2.64px;font:12.0px/12.0px 'Liberation Sans',sans-serif;color:#1a1a1a;transform:scaleX(0.8863);transform-origin:0 0;">CMD = 0x400000000095, CMD Index = CMD0, CMD Abbreviation =</span>
<span id="t47" style="left:2.3000000000000114px;top:15.69px;font:12.0px/12.0px 'Liberation Sans',sans-serif;color:#1a1a1a;transform:scaleX(0.9122);transform-origin:0 0;">GO_IDLE_STATE</span>
<span id="t48" style="left:2.3000000000000114px;top:28.74px;font:12.0px/12.0px 'Liberation Sans',sans-serif;color:#1a1a1a;transform:scaleX(0.8779);transform-origin:0 0;">Description : Start Bit = 0, Transmissoin Bit = 1, Argument = 0x00000000,</span>
<span id="t49" style="left:2.3000000000000114px;top:41.79px;font:12.0px/12.0px 'Liberation Sans',sans-serif;color:#1a1a1a;transform:scaleX(0.8869);transform-origin:0 0;">CRC7 = 0x4A,  Stop Bit = 1, CMD Type = bc,Expected CMD Response =</span>
<span id="t50" style="left:2.3000000000000114px;top:54.84px;font:12.0px/12.0px 'Liberation Sans',sans-serif;color:#1a1a1a;transform:scaleX(0.7323);transform-origin:0 0;">NR</span>
</div>
<div style="left:573px;top:437.5px;width:17px;height:61.0px;background:#f0f0f0"></div>
<div style="left:574px;top:456px;width:15px;height:21px;background:#cdcdcd"></div>
<svg style="left:573px;top:437.5px" width="17" height="61"><path d="M4.5,11.25L8.5,6.75L12.5,11.25" fill="none" stroke="#404040" stroke-width="1.4"/><path d="M4.5,49.75L8.5,54.25L12.5,49.75" fill="none" stroke="#404040" stroke-width="1.4"/></svg>
<div style="left:600.5px;top:437px;width:279.5px;height:63.5px;border:1px solid #bcc6ea"></div>
<div style="left:605.5px;top:441.5px;width:270.5px;height:16.0px;background:#b4c7e7"></div>
<span id="t51" style="left:723px;top:443.64px;font:12.0px/12.0px 'Liberation Sans',sans-serif;color:#1a1a1a;transform:scaleX(0.8809);transform-origin:0 0;">Search</span>
<div style="left:607px;top:462px;width:77.5px;height:20.5px;background:#d4d4d4;border:1px solid #e6e6e6"></div>
<span id="t52" style="left:613.5px;top:467.00px;font:bold 12.29px/12.29px 'Liberation Sans',sans-serif;color:#1a1a1a;transform:scaleX(0.9738);transform-origin:0 0;">&lt;Previous&gt;</span>
<div style="left:689.5px;top:462px;width:103.0px;height:20.5px;background:#e6e6e6;border:1px solid #f8f8f8"></div>
<span id="t53" style="left:693.5px;top:466.64px;font:12.0px/12.0px 'Liberation Sans',sans-serif;color:#1a1a1a;transform:scaleX(0.8715);transform-origin:0 0;">None</span>
<svg style="left:772px;top:462px" width="20" height="20"><path d="M5.75,8.4L10,12.6L14.25,8.4" fill="none" stroke="#404040" stroke-width="1.1"/></svg>
<div style="left:795.5px;top:462px;width:78.5px;height:20.5px;background:#d4d4d4;border:1px solid #e6e6e6"></div>
<span id="t54" style="left:814px;top:467.00px;font:bold 12.29px/12.29px 'Liberation Sans',sans-serif;color:#1a1a1a;transform:scaleX(0.9641);transform-origin:0 0;">&lt;Next&gt;</span>
<div style="left:699.3px;top:485.6px;width:77.7px;height:12.6px;background:#000"></div>
<span id="t55" style="left:702.5px;top:486.84px;font:12.0px/12.0px 'Liberation Sans',sans-serif;color:#fff;transform:scaleX(0.8832);transform-origin:0 0;">No Of Count=0</span>
<span id="t56" style="left:886.5px;top:444.00px;font:bold 12.29px/12.29px 'Liberation Sans',sans-serif;color:#fff;transform:scaleX(0.9364);transform-origin:0 0;">Show:</span>
<div style="left:886px;top:460.5px;width:127px;height:21.0px;background:#e4e4e4;border:1px solid #f6f6f6"></div>
<span id="t57" style="left:890.5px;top:465.64px;font:12.0px/12.0px 'Liberation Sans',sans-serif;color:#1a1a1a;transform:scaleX(0.8546);transform-origin:0 0;">All Messages</span>
<svg style="left:993px;top:461px" width="20" height="20"><path d="M5.75,8.4L10,12.6L14.25,8.4" fill="none" stroke="#404040" stroke-width="1.1"/></svg>
<div style="left:6.4px;top:501.2px;width:990.6px;height:256.8px;background:#fff;border:1px solid #14145e;border-right-color:#1c2c74;border-bottom-color:#1c2c74"></div>
<div style="left:7.4px;top:502.2px;width:972.1px;height:238.8px;overflow:hidden;background:#fff">
<div style="left:0px;top:38.80000000000001px;width:972px;height:20.0px;background:#0078d7"></div>
<div style="left:167.5px;top:0px;width:1.0px;height:38.8px;background:#e2e2e2"></div>
<div style="left:294.6px;top:0px;width:1.0px;height:38.8px;background:#e2e2e2"></div>
<div style="left:399.70000000000005px;top:0px;width:1.0px;height:38.8px;background:#e2e2e2"></div>
<div style="left:468.70000000000005px;top:0px;width:1.0px;height:38.8px;background:#e2e2e2"></div>
<div style="left:566.8000000000001px;top:0px;width:1.0px;height:38.8px;background:#e2e2e2"></div>
<div style="left:611.6px;top:0px;width:1.0px;height:38.8px;background:#e2e2e2"></div>
<div style="left:688.7px;top:0px;width:1.0px;height:38.8px;background:#e2e2e2"></div>
<div style="left:768.3000000000001px;top:0px;width:1.0px;height:38.8px;background:#e2e2e2"></div>
<div style="left:881.1px;top:0px;width:1.0px;height:38.8px;background:#e2e2e2"></div>
<div style="left:167.1px;top:38.80000000000001px;width:1.0px;height:219.0px;background:#1a1a96"></div>
<div style="left:294.1px;top:38.80000000000001px;width:1.0px;height:219.0px;background:#1a1a96"></div>
<div style="left:400.1px;top:38.80000000000001px;width:1.0px;height:219.0px;background:#1a1a96"></div>
<div style="left:469.1px;top:38.80000000000001px;width:1.0px;height:219.0px;background:#1a1a96"></div>
<div style="left:567.1px;top:38.80000000000001px;width:1.0px;height:219.0px;background:#1a1a96"></div>
<div style="left:612.1px;top:38.80000000000001px;width:1.0px;height:219.0px;background:#1a1a96"></div>
<div style="left:689.1px;top:38.80000000000001px;width:1.0px;height:219.0px;background:#1a1a96"></div>
<div style="left:768.1px;top:38.80000000000001px;width:1.0px;height:219.0px;background:#1a1a96"></div>
<div style="left:881.1px;top:38.80000000000001px;width:1.0px;height:219.0px;background:#1a1a96"></div>
<div style="left:0px;top:58.80000000000001px;width:972px;height:1.0px;background:#1a1a96"></div>
<div style="left:0px;top:78.80000000000001px;width:972px;height:1.0px;background:#1a1a96"></div>
<div style="left:0px;top:98.80000000000001px;width:972px;height:1.0px;background:#1a1a96"></div>
<div style="left:0px;top:118.80000000000001px;width:972px;height:1.0px;background:#1a1a96"></div>
<div style="left:0px;top:138.8px;width:972px;height:1.0px;background:#1a1a96"></div>
<div style="left:0px;top:158.8px;width:972px;height:1.0px;background:#1a1a96"></div>
<div style="left:0px;top:178.8px;width:972px;height:1.0px;background:#1a1a96"></div>
<div style="left:0px;top:198.8px;width:972px;height:1.0px;background:#1a1a96"></div>
<div style="left:0px;top:218.8px;width:972px;height:1.0px;background:#1a1a96"></div>
<div style="left:0px;top:238.8px;width:972px;height:1.0px;background:#1a1a96"></div>
<div style="left:0px;top:258.8px;width:972px;height:1.0px;background:#1a1a96"></div>
<div style="left:0px;top:38.30000000000001px;width:972px;height:0.8px;background:#e2e2e2"></div>
<span style="left:8.9px;top:15.96px;font:11.8px/11.8px 'Liberation Mono',monospace;letter-spacing:0.92px;color:#111;-webkit-text-stroke:0.15px #111">CommandType</span>
<span style="left:175.7px;top:8.06px;font:11.8px/11.8px 'Liberation Mono',monospace;letter-spacing:0.92px;color:#111;-webkit-text-stroke:0.15px #111">Transmission</span>
<span style="left:175.7px;top:24.06px;font:11.8px/11.8px 'Liberation Mono',monospace;letter-spacing:0.92px;color:#111;-webkit-text-stroke:0.15px #111">Bit</span>
<span style="left:302.8px;top:8.06px;font:11.8px/11.8px 'Liberation Mono',monospace;letter-spacing:0.92px;color:#111;-webkit-text-stroke:0.15px #111">CMD Start</span>
<span style="left:302.8px;top:24.06px;font:11.8px/11.8px 'Liberation Mono',monospace;letter-spacing:0.92px;color:#111;-webkit-text-stroke:0.15px #111">Bit</span>
<span style="left:407.9px;top:8.06px;font:11.8px/11.8px 'Liberation Mono',monospace;letter-spacing:0.92px;color:#111;-webkit-text-stroke:0.15px #111">Command</span>
<span style="left:407.9px;top:24.06px;font:11.8px/11.8px 'Liberation Mono',monospace;letter-spacing:0.92px;color:#111;-webkit-text-stroke:0.15px #111">Index</span>
<span style="left:476.9px;top:8.06px;font:11.8px/11.8px 'Liberation Mono',monospace;letter-spacing:0.92px;color:#111;-webkit-text-stroke:0.15px #111">CMD</span>
<span style="left:476.9px;top:24.06px;font:11.8px/11.8px 'Liberation Mono',monospace;letter-spacing:0.92px;color:#111;-webkit-text-stroke:0.15px #111">Argument</span>
<span style="left:575.0px;top:15.96px;font:11.8px/11.8px 'Liberation Mono',monospace;letter-spacing:0.92px;color:#111;-webkit-text-stroke:0.15px #111">CRC7</span>
<span style="left:619.8px;top:8.06px;font:11.8px/11.8px 'Liberation Mono',monospace;letter-spacing:0.92px;color:#111;-webkit-text-stroke:0.15px #111">CMD Stop</span>
<span style="left:619.8px;top:24.06px;font:11.8px/11.8px 'Liberation Mono',monospace;letter-spacing:0.92px;color:#111;-webkit-text-stroke:0.15px #111">Bit</span>
<span style="left:696.9px;top:15.96px;font:11.8px/11.8px 'Liberation Mono',monospace;letter-spacing:0.92px;color:#111;-webkit-text-stroke:0.15px #111">Time</span>
<span style="left:776.5px;top:8.06px;font:11.8px/11.8px 'Liberation Mono',monospace;letter-spacing:0.92px;color:#111;-webkit-text-stroke:0.15px #111">Protocol</span>
<span style="left:776.5px;top:24.06px;font:11.8px/11.8px 'Liberation Mono',monospace;letter-spacing:0.92px;color:#111;-webkit-text-stroke:0.15px #111">Test Status</span>
<span style="left:889.3px;top:8.06px;font:11.8px/11.8px 'Liberation Mono',monospace;letter-spacing:0.92px;color:#111;-webkit-text-stroke:0.15px #111">Minimum Clock</span>
<span style="left:889.3px;top:24.06px;font:11.8px/11.8px 'Liberation Mono',monospace;letter-spacing:0.92px;color:#111;-webkit-text-stroke:0.15px #111">Frequency</span>
<span style="left:3.1px;top:44.90px;font:12.0px/12.0px 'Liberation Mono',monospace;letter-spacing:0.8px;color:#fff;-webkit-text-stroke:0.3px #fff">GO_IDLE_STATE</span>
<span style="left:171.0px;top:44.44px;font:12.6px/12.6px 'Liberation Mono',monospace;letter-spacing:0.44px;color:#fff;-webkit-text-stroke:0.3px #fff">1</span>
<span style="left:298.1px;top:44.44px;font:12.6px/12.6px 'Liberation Mono',monospace;letter-spacing:0.44px;color:#fff;-webkit-text-stroke:0.3px #fff">0</span>
<span style="left:403.2px;top:44.44px;font:12.6px/12.6px 'Liberation Mono',monospace;letter-spacing:0.44px;color:#fff;-webkit-text-stroke:0.3px #fff">0</span>
<span style="left:472.2px;top:44.44px;font:12.6px/12.6px 'Liberation Mono',monospace;letter-spacing:0.44px;color:#fff;-webkit-text-stroke:0.3px #fff">0x00000000</span>
<span style="left:570.3px;top:44.44px;font:12.6px/12.6px 'Liberation Mono',monospace;letter-spacing:0.44px;color:#fff;-webkit-text-stroke:0.3px #fff">0x4A</span>
<span style="left:615.1px;top:44.44px;font:12.6px/12.6px 'Liberation Mono',monospace;letter-spacing:0.44px;color:#fff;-webkit-text-stroke:0.3px #fff">1</span>
<span style="left:692.2px;top:44.44px;font:12.6px/12.6px 'Liberation Mono',monospace;letter-spacing:0.44px;color:#fff;-webkit-text-stroke:0.3px #fff">-1.3583µS</span>
<span style="left:771.8px;top:44.90px;font:12.0px/12.0px 'Liberation Mono',monospace;letter-spacing:0.8px;color:#fff;-webkit-text-stroke:0.3px #fff">pass</span>
<span style="left:884.6px;top:44.44px;font:12.6px/12.6px 'Liberation Mono',monospace;letter-spacing:0.44px;color:#fff;-webkit-text-stroke:0.3px #fff">389.89KHz</span>
<span style="left:3.1px;top:64.90px;font:12.0px/12.0px 'Liberation Mono',monospace;letter-spacing:0.8px;color:#111;-webkit-text-stroke:0.3px #111">RESERVED</span>
<span style="left:171.0px;top:64.44px;font:12.6px/12.6px 'Liberation Mono',monospace;letter-spacing:0.44px;color:#111;-webkit-text-stroke:0.3px #111">1</span>
<span style="left:298.1px;top:64.44px;font:12.6px/12.6px 'Liberation Mono',monospace;letter-spacing:0.44px;color:#111;-webkit-text-stroke:0.3px #111">0</span>
<span style="left:403.2px;top:64.44px;font:12.6px/12.6px 'Liberation Mono',monospace;letter-spacing:0.44px;color:#111;-webkit-text-stroke:0.3px #111">1</span>
<span style="left:472.2px;top:64.44px;font:12.6px/12.6px 'Liberation Mono',monospace;letter-spacing:0.44px;color:#111;-webkit-text-stroke:0.3px #111">0x40000080</span>
<span style="left:570.3px;top:64.44px;font:12.6px/12.6px 'Liberation Mono',monospace;letter-spacing:0.44px;color:#111;-webkit-text-stroke:0.3px #111">0x74</span>
<span style="left:615.1px;top:64.44px;font:12.6px/12.6px 'Liberation Mono',monospace;letter-spacing:0.44px;color:#111;-webkit-text-stroke:0.3px #111">1</span>
<span style="left:692.2px;top:64.44px;font:12.6px/12.6px 'Liberation Mono',monospace;letter-spacing:0.44px;color:#111;-webkit-text-stroke:0.3px #111">357.62µS</span>
<span style="left:771.8px;top:64.90px;font:12.0px/12.0px 'Liberation Mono',monospace;letter-spacing:0.8px;color:#111;-webkit-text-stroke:0.3px #111">Reserved</span>
<span style="left:884.6px;top:64.44px;font:12.6px/12.6px 'Liberation Mono',monospace;letter-spacing:0.44px;color:#111;-webkit-text-stroke:0.3px #111">389.87KHz</span>
<span style="left:3.1px;top:84.90px;font:12.0px/12.0px 'Liberation Mono',monospace;letter-spacing:0.8px;color:#111;-webkit-text-stroke:0.3px #111">R3 Response</span>
<span style="left:171.0px;top:84.44px;font:12.6px/12.6px 'Liberation Mono',monospace;letter-spacing:0.44px;color:#111;-webkit-text-stroke:0.3px #111">0</span>
<span style="left:298.1px;top:84.44px;font:12.6px/12.6px 'Liberation Mono',monospace;letter-spacing:0.44px;color:#111;-webkit-text-stroke:0.3px #111">0</span>
<span style="left:403.2px;top:84.44px;font:12.6px/12.6px 'Liberation Mono',monospace;letter-spacing:0.44px;color:#111;-webkit-text-stroke:0.3px #111">63</span>
<span style="left:472.2px;top:84.44px;font:12.6px/12.6px 'Liberation Mono',monospace;letter-spacing:0.44px;color:#111;-webkit-text-stroke:0.3px #111">0x00FF8080</span>
<span style="left:570.3px;top:84.44px;font:12.6px/12.6px 'Liberation Mono',monospace;letter-spacing:0.44px;color:#111;-webkit-text-stroke:0.3px #111">-</span>
<span style="left:615.1px;top:84.44px;font:12.6px/12.6px 'Liberation Mono',monospace;letter-spacing:0.44px;color:#111;-webkit-text-stroke:0.3px #111">1</span>
<span style="left:692.2px;top:84.44px;font:12.6px/12.6px 'Liberation Mono',monospace;letter-spacing:0.44px;color:#111;-webkit-text-stroke:0.3px #111">493.52µS</span>
<span style="left:771.8px;top:84.90px;font:12.0px/12.0px 'Liberation Mono',monospace;letter-spacing:0.8px;color:#111;-webkit-text-stroke:0.3px #111">pass</span>
<span style="left:884.6px;top:84.44px;font:12.6px/12.6px 'Liberation Mono',monospace;letter-spacing:0.44px;color:#111;-webkit-text-stroke:0.3px #111">389.90KHz</span>
<span style="left:3.1px;top:104.90px;font:12.0px/12.0px 'Liberation Mono',monospace;letter-spacing:0.8px;color:#111;-webkit-text-stroke:0.3px #111">RESERVED</span>
<span style="left:171.0px;top:104.44px;font:12.6px/12.6px 'Liberation Mono',monospace;letter-spacing:0.44px;color:#111;-webkit-text-stroke:0.3px #111">1</span>
<span style="left:298.1px;top:104.44px;font:12.6px/12.6px 'Liberation Mono',monospace;letter-spacing:0.44px;color:#111;-webkit-text-stroke:0.3px #111">0</span>
<span style="left:403.2px;top:104.44px;font:12.6px/12.6px 'Liberation Mono',monospace;letter-spacing:0.44px;color:#111;-webkit-text-stroke:0.3px #111">1</span>
<span style="left:472.2px;top:104.44px;font:12.6px/12.6px 'Liberation Mono',monospace;letter-spacing:0.44px;color:#111;-webkit-text-stroke:0.3px #111">0x40000080</span>
<span style="left:570.3px;top:104.44px;font:12.6px/12.6px 'Liberation Mono',monospace;letter-spacing:0.44px;color:#111;-webkit-text-stroke:0.3px #111">0x74</span>
<span style="left:615.1px;top:104.44px;font:12.6px/12.6px 'Liberation Mono',monospace;letter-spacing:0.44px;color:#111;-webkit-text-stroke:0.3px #111">1</span>
<span style="left:692.2px;top:104.44px;font:12.6px/12.6px 'Liberation Mono',monospace;letter-spacing:0.44px;color:#111;-webkit-text-stroke:0.3px #111">2.3439mS</span>
<span style="left:771.8px;top:104.90px;font:12.0px/12.0px 'Liberation Mono',monospace;letter-spacing:0.8px;color:#111;-webkit-text-stroke:0.3px #111">Reserved</span>
<span style="left:884.6px;top:104.44px;font:12.6px/12.6px 'Liberation Mono',monospace;letter-spacing:0.44px;color:#111;-webkit-text-stroke:0.3px #111">389.87KHz</span>
<span style="left:3.1px;top:124.90px;font:12.0px/12.0px 'Liberation Mono',monospace;letter-spacing:0.8px;color:#111;-webkit-text-stroke:0.3px #111">R3 Response</span>
<span style="left:171.0px;top:124.44px;font:12.6px/12.6px 'Liberation Mono',monospace;letter-spacing:0.44px;color:#111;-webkit-text-stroke:0.3px #111">0</span>
<span style="left:298.1px;top:124.44px;font:12.6px/12.6px 'Liberation Mono',monospace;letter-spacing:0.44px;color:#111;-webkit-text-stroke:0.3px #111">0</span>
<span style="left:403.2px;top:124.44px;font:12.6px/12.6px 'Liberation Mono',monospace;letter-spacing:0.44px;color:#111;-webkit-text-stroke:0.3px #111">63</span>
<span style="left:472.2px;top:124.44px;font:12.6px/12.6px 'Liberation Mono',monospace;letter-spacing:0.44px;color:#111;-webkit-text-stroke:0.3px #111">0x00FF8080</span>
<span style="left:570.3px;top:124.44px;font:12.6px/12.6px 'Liberation Mono',monospace;letter-spacing:0.44px;color:#111;-webkit-text-stroke:0.3px #111">-</span>
<span style="left:615.1px;top:124.44px;font:12.6px/12.6px 'Liberation Mono',monospace;letter-spacing:0.44px;color:#111;-webkit-text-stroke:0.3px #111">1</span>
<span style="left:692.2px;top:124.44px;font:12.6px/12.6px 'Liberation Mono',monospace;letter-spacing:0.44px;color:#111;-webkit-text-stroke:0.3px #111">2.4798mS</span>
<span style="left:771.8px;top:124.90px;font:12.0px/12.0px 'Liberation Mono',monospace;letter-spacing:0.8px;color:#111;-webkit-text-stroke:0.3px #111">pass</span>
<span style="left:884.6px;top:124.44px;font:12.6px/12.6px 'Liberation Mono',monospace;letter-spacing:0.44px;color:#111;-webkit-text-stroke:0.3px #111">389.88KHz</span>
<span style="left:3.1px;top:144.90px;font:12.0px/12.0px 'Liberation Mono',monospace;letter-spacing:0.8px;color:#111;-webkit-text-stroke:0.3px #111">RESERVED</span>
<span style="left:171.0px;top:144.44px;font:12.6px/12.6px 'Liberation Mono',monospace;letter-spacing:0.44px;color:#111;-webkit-text-stroke:0.3px #111">1</span>
<span style="left:298.1px;top:144.44px;font:12.6px/12.6px 'Liberation Mono',monospace;letter-spacing:0.44px;color:#111;-webkit-text-stroke:0.3px #111">0</span>
<span style="left:403.2px;top:144.44px;font:12.6px/12.6px 'Liberation Mono',monospace;letter-spacing:0.44px;color:#111;-webkit-text-stroke:0.3px #111">1</span>
<span style="left:472.2px;top:144.44px;font:12.6px/12.6px 'Liberation Mono',monospace;letter-spacing:0.44px;color:#111;-webkit-text-stroke:0.3px #111">0x40000080</span>
<span style="left:570.3px;top:144.44px;font:12.6px/12.6px 'Liberation Mono',monospace;letter-spacing:0.44px;color:#111;-webkit-text-stroke:0.3px #111">0x74</span>
<span style="left:615.1px;top:144.44px;font:12.6px/12.6px 'Liberation Mono',monospace;letter-spacing:0.44px;color:#111;-webkit-text-stroke:0.3px #111">1</span>
<span style="left:692.2px;top:144.44px;font:12.6px/12.6px 'Liberation Mono',monospace;letter-spacing:0.44px;color:#111;-webkit-text-stroke:0.3px #111">5.2491mS</span>
<span style="left:771.8px;top:144.90px;font:12.0px/12.0px 'Liberation Mono',monospace;letter-spacing:0.8px;color:#111;-webkit-text-stroke:0.3px #111">Reserved</span>
<span style="left:884.6px;top:144.44px;font:12.6px/12.6px 'Liberation Mono',monospace;letter-spacing:0.44px;color:#111;-webkit-text-stroke:0.3px #111">389.85KHz</span>
<span style="left:3.1px;top:164.90px;font:12.0px/12.0px 'Liberation Mono',monospace;letter-spacing:0.8px;color:#111;-webkit-text-stroke:0.3px #111">R3 Response</span>
<span style="left:171.0px;top:164.44px;font:12.6px/12.6px 'Liberation Mono',monospace;letter-spacing:0.44px;color:#111;-webkit-text-stroke:0.3px #111">0</span>
<span style="left:298.1px;top:164.44px;font:12.6px/12.6px 'Liberation Mono',monospace;letter-spacing:0.44px;color:#111;-webkit-text-stroke:0.3px #111">0</span>
<span style="left:403.2px;top:164.44px;font:12.6px/12.6px 'Liberation Mono',monospace;letter-spacing:0.44px;color:#111;-webkit-text-stroke:0.3px #111">63</span>
<span style="left:472.2px;top:164.44px;font:12.6px/12.6px 'Liberation Mono',monospace;letter-spacing:0.44px;color:#111;-webkit-text-stroke:0.3px #111">0x00FF8080</span>
<span style="left:570.3px;top:164.44px;font:12.6px/12.6px 'Liberation Mono',monospace;letter-spacing:0.44px;color:#111;-webkit-text-stroke:0.3px #111">-</span>
<span style="left:615.1px;top:164.44px;font:12.6px/12.6px 'Liberation Mono',monospace;letter-spacing:0.44px;color:#111;-webkit-text-stroke:0.3px #111">1</span>
<span style="left:692.2px;top:164.44px;font:12.6px/12.6px 'Liberation Mono',monospace;letter-spacing:0.44px;color:#111;-webkit-text-stroke:0.3px #111">5.3850mS</span>
<span style="left:771.8px;top:164.90px;font:12.0px/12.0px 'Liberation Mono',monospace;letter-spacing:0.8px;color:#111;-webkit-text-stroke:0.3px #111">pass</span>
<span style="left:884.6px;top:164.44px;font:12.6px/12.6px 'Liberation Mono',monospace;letter-spacing:0.44px;color:#111;-webkit-text-stroke:0.3px #111">389.85KHz</span>
<span style="left:3.1px;top:184.90px;font:12.0px/12.0px 'Liberation Mono',monospace;letter-spacing:0.8px;color:#111;-webkit-text-stroke:0.3px #111">RESERVED</span>
<span style="left:171.0px;top:184.44px;font:12.6px/12.6px 'Liberation Mono',monospace;letter-spacing:0.44px;color:#111;-webkit-text-stroke:0.3px #111">1</span>
<span style="left:298.1px;top:184.44px;font:12.6px/12.6px 'Liberation Mono',monospace;letter-spacing:0.44px;color:#111;-webkit-text-stroke:0.3px #111">0</span>
<span style="left:403.2px;top:184.44px;font:12.6px/12.6px 'Liberation Mono',monospace;letter-spacing:0.44px;color:#111;-webkit-text-stroke:0.3px #111">1</span>
<span style="left:472.2px;top:184.44px;font:12.6px/12.6px 'Liberation Mono',monospace;letter-spacing:0.44px;color:#111;-webkit-text-stroke:0.3px #111">0x40000080</span>
<span style="left:570.3px;top:184.44px;font:12.6px/12.6px 'Liberation Mono',monospace;letter-spacing:0.44px;color:#111;-webkit-text-stroke:0.3px #111">0x74</span>
<span style="left:615.1px;top:184.44px;font:12.6px/12.6px 'Liberation Mono',monospace;letter-spacing:0.44px;color:#111;-webkit-text-stroke:0.3px #111">1</span>
<span style="left:692.2px;top:184.44px;font:12.6px/12.6px 'Liberation Mono',monospace;letter-spacing:0.44px;color:#111;-webkit-text-stroke:0.3px #111">8.1216mS</span>
<span style="left:771.8px;top:184.90px;font:12.0px/12.0px 'Liberation Mono',monospace;letter-spacing:0.8px;color:#111;-webkit-text-stroke:0.3px #111">Reserved</span>
<span style="left:884.6px;top:184.44px;font:12.6px/12.6px 'Liberation Mono',monospace;letter-spacing:0.44px;color:#111;-webkit-text-stroke:0.3px #111">389.92KHz</span>
<span style="left:3.1px;top:204.90px;font:12.0px/12.0px 'Liberation Mono',monospace;letter-spacing:0.8px;color:#111;-webkit-text-stroke:0.3px #111">R3 Response</span>
<span style="left:171.0px;top:204.44px;font:12.6px/12.6px 'Liberation Mono',monospace;letter-spacing:0.44px;color:#111;-webkit-text-stroke:0.3px #111">0</span>
<span style="left:298.1px;top:204.44px;font:12.6px/12.6px 'Liberation Mono',monospace;letter-spacing:0.44px;color:#111;-webkit-text-stroke:0.3px #111">0</span>
<span style="left:403.2px;top:204.44px;font:12.6px/12.6px 'Liberation Mono',monospace;letter-spacing:0.44px;color:#111;-webkit-text-stroke:0.3px #111">63</span>
<span style="left:472.2px;top:204.44px;font:12.6px/12.6px 'Liberation Mono',monospace;letter-spacing:0.44px;color:#111;-webkit-text-stroke:0.3px #111">0x00FF8080</span>
<span style="left:570.3px;top:204.44px;font:12.6px/12.6px 'Liberation Mono',monospace;letter-spacing:0.44px;color:#111;-webkit-text-stroke:0.3px #111">-</span>
<span style="left:615.1px;top:204.44px;font:12.6px/12.6px 'Liberation Mono',monospace;letter-spacing:0.44px;color:#111;-webkit-text-stroke:0.3px #111">1</span>
<span style="left:692.2px;top:204.44px;font:12.6px/12.6px 'Liberation Mono',monospace;letter-spacing:0.44px;color:#111;-webkit-text-stroke:0.3px #111">8.2575mS</span>
<span style="left:771.8px;top:204.90px;font:12.0px/12.0px 'Liberation Mono',monospace;letter-spacing:0.8px;color:#111;-webkit-text-stroke:0.3px #111">pass</span>
<span style="left:884.6px;top:204.44px;font:12.6px/12.6px 'Liberation Mono',monospace;letter-spacing:0.44px;color:#111;-webkit-text-stroke:0.3px #111">389.91KHz</span>
<span style="left:3.1px;top:224.90px;font:12.0px/12.0px 'Liberation Mono',monospace;letter-spacing:0.8px;color:#111;-webkit-text-stroke:0.3px #111">RESERVED</span>
<span style="left:171.0px;top:224.44px;font:12.6px/12.6px 'Liberation Mono',monospace;letter-spacing:0.44px;color:#111;-webkit-text-stroke:0.3px #111">1</span>
<span style="left:298.1px;top:224.44px;font:12.6px/12.6px 'Liberation Mono',monospace;letter-spacing:0.44px;color:#111;-webkit-text-stroke:0.3px #111">0</span>
<span style="left:403.2px;top:224.44px;font:12.6px/12.6px 'Liberation Mono',monospace;letter-spacing:0.44px;color:#111;-webkit-text-stroke:0.3px #111">1</span>
<span style="left:472.2px;top:224.44px;font:12.6px/12.6px 'Liberation Mono',monospace;letter-spacing:0.44px;color:#111;-webkit-text-stroke:0.3px #111">0x40000080</span>
<span style="left:570.3px;top:224.44px;font:12.6px/12.6px 'Liberation Mono',monospace;letter-spacing:0.44px;color:#111;-webkit-text-stroke:0.3px #111">0x74</span>
<span style="left:615.1px;top:224.44px;font:12.6px/12.6px 'Liberation Mono',monospace;letter-spacing:0.44px;color:#111;-webkit-text-stroke:0.3px #111">1</span>
<span style="left:692.2px;top:224.44px;font:12.6px/12.6px 'Liberation Mono',monospace;letter-spacing:0.44px;color:#111;-webkit-text-stroke:0.3px #111">11.011mS</span>
<span style="left:771.8px;top:224.90px;font:12.0px/12.0px 'Liberation Mono',monospace;letter-spacing:0.8px;color:#111;-webkit-text-stroke:0.3px #111">Reserved</span>
<span style="left:884.6px;top:224.44px;font:12.6px/12.6px 'Liberation Mono',monospace;letter-spacing:0.44px;color:#111;-webkit-text-stroke:0.3px #111">389.90KHz</span>
</div>
<div style="left:979.5px;top:503px;width:16.5px;height:238px;background:#f0f0f0"></div>
<div style="left:980.5px;top:519.6px;width:15.0px;height:37.0px;background:#cdcdcd"></div>
<svg style="left:979.5px;top:503px" width="17" height="238"><path d="M4.4,10.8L8,7L11.6,10.8" fill="none" stroke="#606060" stroke-width="1.7"/><path d="M4.4,227L8,230.8L11.6,227" fill="none" stroke="#606060" stroke-width="1.7"/></svg>
<div style="left:7.5px;top:741px;width:972.0px;height:16px;background:#f0f0f0"></div>
<div style="left:979.5px;top:741px;width:16.5px;height:16px;background:#f0f0f0"></div>
<div style="left:24.5px;top:743px;width:71.0px;height:13px;background:#cdcdcd"></div>
<svg style="left:7.5px;top:741px" width="972" height="17"><path d="M8.6,4L4.8,7.6L8.6,11.2" fill="none" stroke="#606060" stroke-width="1.7"/><path d="M961.5,4L965.3,7.6L961.5,11.2" fill="none" stroke="#606060" stroke-width="1.7"/></svg>
</div></body></html>
